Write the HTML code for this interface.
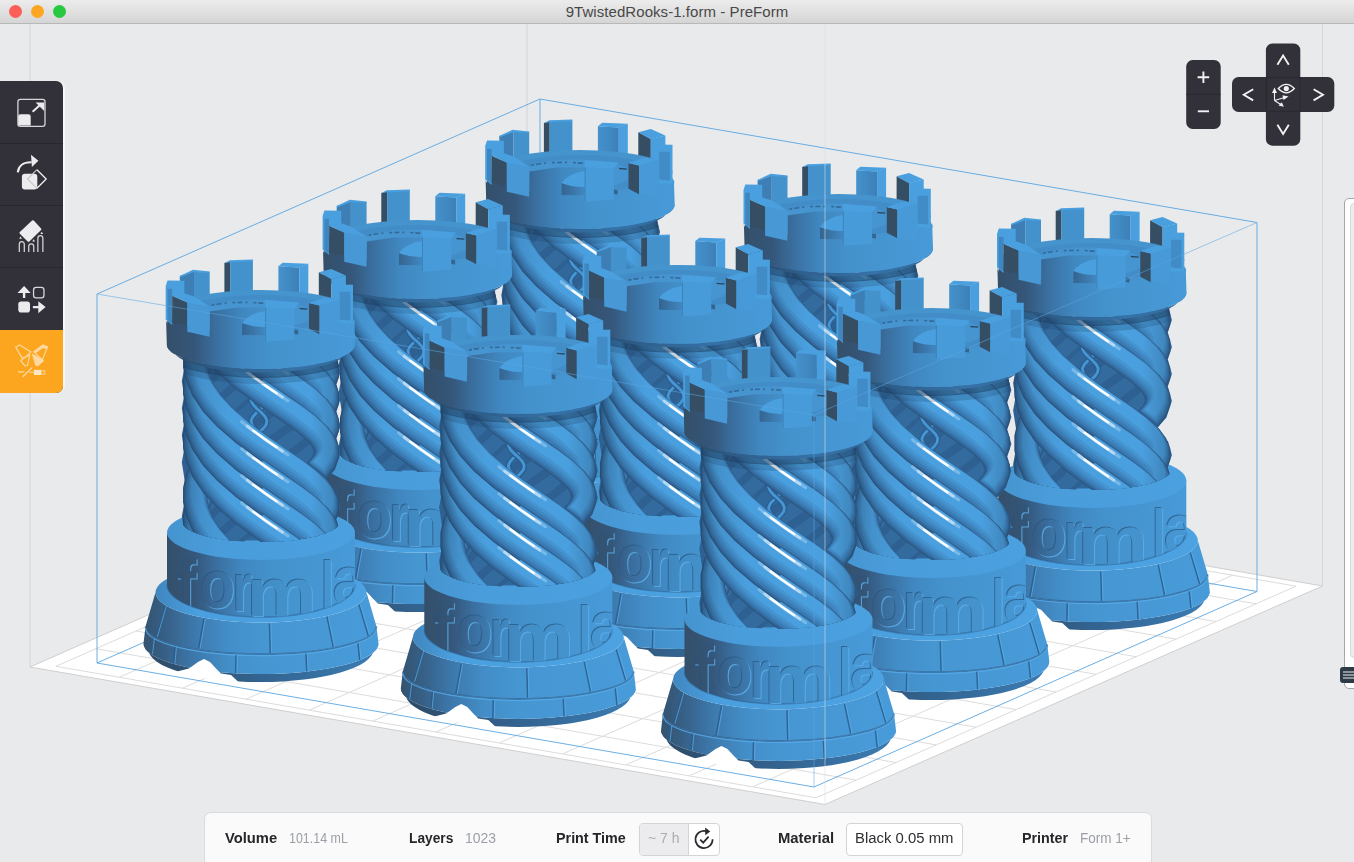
<!DOCTYPE html>
<html><head><meta charset="utf-8"><title>9TwistedRooks-1.form - PreForm</title>
<style>

*{margin:0;padding:0;box-sizing:border-box}
html,body{width:1354px;height:862px;overflow:hidden;background:#e9eaec;font-family:"Liberation Sans",sans-serif}
#win{position:relative;width:1354px;height:862px;overflow:hidden;background:#e9eaec}
#scene{position:absolute;left:0;top:0}
#title{position:absolute;left:0;top:0;width:1354px;height:24px;background:linear-gradient(#ececec,#d5d5d5);border-bottom:1px solid #b8b8b8;z-index:5}
#title .t{position:absolute;left:0;width:1354px;top:4px;text-align:center;font-size:15px;line-height:16px;color:#484848;letter-spacing:0.06px}
.tl{position:absolute;top:5.4px;width:13px;height:13px;border-radius:50%}
#tools{position:absolute;left:0;top:80.5px;width:63px;height:312.3px;background:#323139;border-radius:0 7px 7px 0;overflow:hidden;z-index:4}
#toolsh{position:absolute;left:0;top:80.5px;width:65px;height:312.8px;background:#f7f7f9;border-radius:0 8px 8px 0;z-index:3}
#tools .s{position:absolute;left:0;width:63px;height:1px;background:#27262d}
#tools .o{position:absolute;left:0;top:249.5px;width:63px;height:63px;background:#fca61f}
#tools svg{position:absolute;left:0;top:0}
.ctl{position:absolute;background:#323139;z-index:4}
#ctlsvg{position:absolute;left:1180px;top:40px;z-index:5}
#bar{position:absolute;left:203.5px;top:812px;width:948.5px;height:60px;background:#fafafa;border:1px solid #dadadd;border-radius:7px 7px 0 0;z-index:4}
#bar span{position:absolute;top:16.2px;font-size:14px;line-height:18px;white-space:nowrap;transform-origin:0 50%;display:inline-block}
#bar .l{font-weight:bold;color:#25252a}
#bar .v{color:#9b9fa6}
#bar .box{position:absolute;top:10px;height:33px;border:1px solid #d4d4d8;border-radius:4px;background:#fff;overflow:hidden}
#slider{position:absolute;left:1344px;top:197.5px;width:20px;height:491px;border:1.3px solid #a5a5ac;border-radius:5px;background:#fff;z-index:4}
#slider .in{position:absolute;left:4.5px;top:4px;width:12px;height:455px;background:#ececee;border:1px solid #d9d9dc;border-radius:4px}
#handle{position:absolute;left:1339.5px;top:667px;width:20px;height:16px;background:#2e3a46;border-radius:3px;z-index:5}
#handle i{position:absolute;left:3px;width:20px;height:1.6px;background:#8d949c}

</style></head><body><div id="win">
<svg id="scene" width="1354" height="862" viewBox="0 0 1354 862">
<defs>
<linearGradient id="gBody" gradientUnits="userSpaceOnUse" x1="-94" y1="0" x2="94" y2="0">
<stop offset="0" stop-color="#344f69"/><stop offset="0.15" stop-color="#35577b"/><stop offset="0.26" stop-color="#3a6f9f"/><stop offset="0.4" stop-color="#4087c0"/><stop offset="0.56" stop-color="#4492cc"/><stop offset="1" stop-color="#479ad8"/>
</linearGradient>
<linearGradient id="gText" gradientUnits="userSpaceOnUse" x1="-94" y1="0" x2="94" y2="0">
<stop offset="0" stop-color="#334d67"/><stop offset="0.15" stop-color="#345578"/><stop offset="0.26" stop-color="#396c9b"/><stop offset="0.4" stop-color="#3f84bc"/><stop offset="0.56" stop-color="#438fc8"/><stop offset="1" stop-color="#4697d4"/>
</linearGradient>
<linearGradient id="gTier" gradientUnits="userSpaceOnUse" x1="-117" y1="0" x2="117" y2="0">
<stop offset="0" stop-color="#34536f"/><stop offset="0.1" stop-color="#376189"/><stop offset="0.22" stop-color="#3d79ad"/><stop offset="0.36" stop-color="#438ec8"/><stop offset="0.5" stop-color="#4696d2"/><stop offset="1" stop-color="#489bd9"/>
</linearGradient>
<linearGradient id="gDarkBot" gradientUnits="userSpaceOnUse" x1="-117" y1="0" x2="117" y2="0">
<stop offset="0" stop-color="#2d4a66"/><stop offset="0.5" stop-color="#33638f"/><stop offset="1" stop-color="#3b7db5"/>
</linearGradient>
<linearGradient id="gLedge" gradientUnits="userSpaceOnUse" x1="-106" y1="0" x2="106" y2="0">
<stop offset="0" stop-color="#3f86bf"/><stop offset="0.2" stop-color="#4a9fde"/><stop offset="1" stop-color="#4da3e2"/>
</linearGradient>
<linearGradient id="gTop" gradientUnits="userSpaceOnUse" x1="-94" y1="0" x2="94" y2="0">
<stop offset="0" stop-color="#4594cf"/><stop offset="0.3" stop-color="#4a9ddb"/><stop offset="1" stop-color="#4ba0df"/>
</linearGradient>
<linearGradient id="gCham" gradientUnits="userSpaceOnUse" x1="-94" y1="0" x2="94" y2="0">
<stop offset="0" stop-color="#2b4560"/><stop offset="0.3" stop-color="#2f5f8c"/><stop offset="0.7" stop-color="#3672a8"/><stop offset="1" stop-color="#33689a"/>
</linearGradient>
<linearGradient id="gColShade" gradientUnits="userSpaceOnUse" x1="-78" y1="0" x2="78" y2="0">
<stop offset="0" stop-color="#1b3550" stop-opacity="0.38"/><stop offset="0.14" stop-color="#1b3550" stop-opacity="0.1"/><stop offset="0.3" stop-color="#1b3550" stop-opacity="0"/><stop offset="0.8" stop-color="#1b3550" stop-opacity="0"/><stop offset="1" stop-color="#1b3550" stop-opacity="0.3"/>
</linearGradient>
<linearGradient id="gBM3" gradientUnits="userSpaceOnUse" x1="17" y1="0" x2="38" y2="0">
<stop offset="0" stop-color="#4492cc"/><stop offset="1" stop-color="#3d80b8"/>
</linearGradient>
<linearGradient id="gNotch" gradientUnits="userSpaceOnUse" x1="-19" y1="0" x2="5" y2="0">
<stop offset="0" stop-color="#35648f"/><stop offset="1" stop-color="#4189c4"/>
</linearGradient>
<linearGradient id="gS0" gradientUnits="userSpaceOnUse" x1="-78" y1="0" x2="78" y2="0"><stop offset="0" stop-color="#254c72"/><stop offset="0.12" stop-color="#28537d"/><stop offset="0.3" stop-color="#2a5783"/><stop offset="0.82" stop-color="#2a5783"/><stop offset="1" stop-color="#274f77"/></linearGradient>
<linearGradient id="gS1" gradientUnits="userSpaceOnUse" x1="-78" y1="0" x2="78" y2="0"><stop offset="0" stop-color="#2b5681"/><stop offset="0.12" stop-color="#306394"/><stop offset="0.3" stop-color="#33699d"/><stop offset="0.82" stop-color="#33699d"/><stop offset="1" stop-color="#2d5c89"/></linearGradient>
<linearGradient id="gS2" gradientUnits="userSpaceOnUse" x1="-78" y1="0" x2="78" y2="0"><stop offset="0" stop-color="#2f618e"/><stop offset="0.12" stop-color="#3672a7"/><stop offset="0.3" stop-color="#3a7bb3"/><stop offset="0.82" stop-color="#3a7bb3"/><stop offset="1" stop-color="#326898"/></linearGradient>
<linearGradient id="gS3" gradientUnits="userSpaceOnUse" x1="-78" y1="0" x2="78" y2="0"><stop offset="0" stop-color="#326897"/><stop offset="0.12" stop-color="#3b7db4"/><stop offset="0.3" stop-color="#4088c3"/><stop offset="0.82" stop-color="#4088c3"/><stop offset="1" stop-color="#3671a4"/></linearGradient>
<linearGradient id="gS4" gradientUnits="userSpaceOnUse" x1="-78" y1="0" x2="78" y2="0"><stop offset="0" stop-color="#356f9e"/><stop offset="0.12" stop-color="#4088bf"/><stop offset="0.3" stop-color="#4594d0"/><stop offset="0.82" stop-color="#4594d0"/><stop offset="1" stop-color="#3a7aad"/></linearGradient>
<linearGradient id="gS5" gradientUnits="userSpaceOnUse" x1="-78" y1="0" x2="78" y2="0"><stop offset="0" stop-color="#3875a7"/><stop offset="0.12" stop-color="#4491cc"/><stop offset="0.3" stop-color="#4a9fde"/><stop offset="0.82" stop-color="#4a9fde"/><stop offset="1" stop-color="#3d81b6"/></linearGradient>
<clipPath id="cCol"><path d="M-90,-8 L-90,170 L-79,177 A79,20.5 0 0 0 79,177 L90,170 L90,-8 Z"/></clipPath>
<clipPath id="cShade"><path d="M-77.3,-8 L-77.3,60 L77.3,60 L77.3,-8 Z"/></clipPath>
<clipPath id="cBase"><path d="M-94,180 L-94,240 A94,32.5 0 0 0 94,240 L94,180 Z"/></clipPath>
<filter id="fEng" x="-5%" y="-5%" width="110%" height="110%">
<feOffset in="SourceAlpha" dx="-1" dy="-0.6" result="o1"/><feFlood flood-color="#2a5680" flood-opacity="0.75"/><feComposite in2="o1" operator="in" result="sh"/>
<feOffset in="SourceAlpha" dx="1.1" dy="0.6" result="o2"/><feFlood flood-color="#5db0ec" flood-opacity="0.8"/><feComposite in2="o2" operator="in" result="hl"/>
<feMerge><feMergeNode in="hl"/><feMergeNode in="sh"/><feMergeNode in="SourceGraphic"/></feMerge>
</filter>
<filter id="fBlur" x="-10%" y="-10%" width="120%" height="120%"><feGaussianBlur stdDeviation="0.65"/></filter>
</defs>

<style>
.s0{fill:none;stroke:url(#gS0);stroke-width:24.5}
.s1{fill:none;stroke:url(#gS1);stroke-width:22.8}
.s2{fill:none;stroke:url(#gS2);stroke-width:20.5}
.s3{fill:none;stroke:url(#gS3);stroke-width:17.6}
.s4{fill:none;stroke:url(#gS4);stroke-width:14.6}
.s5{fill:none;stroke:url(#gS5);stroke-width:11.4}
.sg{fill:none;stroke:#9ccef3;stroke-width:3;stroke-linecap:round;opacity:.55}
.sh{fill:none;stroke:#c4e2f8;stroke-width:3;stroke-linecap:round;opacity:.8}
.sw{fill:none;stroke:#ffffff;stroke-width:2.2;stroke-linecap:round;opacity:1}
.b0{fill:none;stroke:#2e6092;stroke-width:26}
.b1{fill:none;stroke:#346b9f;stroke-width:14}
.c0{fill:none;stroke:#2c5d8e;stroke-width:5.5}
.c1{fill:none;stroke:#4696d3;stroke-width:2.8}
</style>
<polygon points="30,667 825,804.5 1322.5,586 527,448" fill="#ffffff" stroke="#cfcfcf" stroke-width="1"/>
<line x1="30" y1="23" x2="30" y2="667" stroke="#d4d4d4" stroke-width="1"/>
<line x1="1322.5" y1="23" x2="1322.5" y2="586" stroke="#d4d4d4" stroke-width="1"/>
<line x1="527" y1="23" x2="527" y2="448" stroke="#d4d4d4" stroke-width="1"/>
<path d="M55.9,666.3L536,454.7M119.3,677.3L599.4,465.7M182.6,688.2L662.7,476.7M245.9,699.2L726,487.6M309.3,710.1L789.4,498.6M372.6,721.1L852.7,509.5M435.9,732L916.1,520.5M499.3,743L979.4,531.4M562.6,753.9L1042.7,542.4M626,764.9L1106.1,553.3M689.3,775.8L1169.4,564.3M752.6,786.8L1232.7,575.2M816,797.8L1296.1,586.2M55.9,666.3L816,797.8M95.9,648.7L856,780.1M136,631L896,762.5M176,613.4L936,744.9M216,595.8L976,727.2M256,578.2L1016,709.6M296,560.5L1056,692M336,542.9L1096,674.3M376,525.3L1136,656.7M416,507.6L1176,639.1M456,490L1216,621.5M496,472.4L1256.1,603.8M536,454.7L1296.1,586.2" stroke="#dcdcdc" stroke-width="1" fill="none"/>
<line x1="97" y1="663" x2="540" y2="468" stroke="#5ba6e0" stroke-width="1" opacity="0.9"/>
<line x1="540" y1="468" x2="1257" y2="591.5" stroke="#5ba6e0" stroke-width="1" opacity="0.9"/>
<line x1="540" y1="468" x2="540" y2="99" stroke="#5ba6e0" stroke-width="1" opacity="0.9"/>
<line x1="97" y1="294" x2="540" y2="99" stroke="#5ba6e0" stroke-width="1" opacity="0.9"/>
<line x1="540" y1="99" x2="1257" y2="222.5" stroke="#5ba6e0" stroke-width="1" opacity="0.9"/>
<line x1="97" y1="663" x2="97" y2="294" stroke="#5ba6e0" stroke-width="1" opacity="0.9"/>
<line x1="1257" y1="591.5" x2="1257" y2="222.5" stroke="#5ba6e0" stroke-width="1" opacity="0.9"/>
<line x1="97" y1="663" x2="814" y2="787" stroke="#5ba6e0" stroke-width="1" opacity="0.9"/>
<line x1="814" y1="787" x2="1257" y2="591.5" stroke="#5ba6e0" stroke-width="1" opacity="0.9"/>
<g transform="translate(580.5,204.5)"><path d="M-117.5,299 A117.5,30.5 0 0 0 117.5,299 L112.5,305 A112.5,32.5 0 0 1 -112.5,305 Z" fill="url(#gDarkBot)"/><path d="M-115.5,282 A115.5,27.5 0 0 0 115.5,282 L117.5,299 A117.5,30.5 0 0 1 -117.5,299 Z" fill="url(#gTier)"/><path d="M-105.5,248 A105.5,30 0 0 0 105.5,248 L115.5,282 A115.5,27.5 0 0 1 -115.5,282 Z" fill="url(#gTier)"/><path d="M-115.5,282 A115.5,27.5 0 0 0 115.5,282" stroke="#2f6293" stroke-width="1.6" fill="none" opacity="0.7"/><path d="M-115.5,283.6 A115.5,27.5 0 0 0 115.5,283.6" stroke="#58abe8" stroke-width="1.2" fill="none" opacity="0.8"/><path d="M-96,261.4 L-105.1,292.4" stroke="#2c5c8b" stroke-width="1.5" fill="none" opacity="0.85"/><path d="M-94.6,261.4 L-103.7,292.4" stroke="#5aaeea" stroke-width="1" fill="none" opacity="0.7"/><path d="M-57,274.2 L-62.4,304.1" stroke="#2c5c8b" stroke-width="1.5" fill="none" opacity="0.85"/><path d="M-55.6,274.2 L-61,304.1" stroke="#5aaeea" stroke-width="1" fill="none" opacity="0.7"/><path d="M8.5,278.9 L9.3,308.4" stroke="#2c5c8b" stroke-width="1.5" fill="none" opacity="0.85"/><path d="M9.9,278.9 L10.7,308.4" stroke="#5aaeea" stroke-width="1" fill="none" opacity="0.7"/><path d="M66,272.4 L72.3,302.5" stroke="#2c5c8b" stroke-width="1.5" fill="none" opacity="0.85"/><path d="M67.4,272.4 L73.7,302.5" stroke="#5aaeea" stroke-width="1" fill="none" opacity="0.7"/><path d="M98,260.1 L107.3,291.2" stroke="#2c5c8b" stroke-width="1.5" fill="none" opacity="0.85"/><path d="M99.4,260.1 L108.7,291.2" stroke="#5aaeea" stroke-width="1" fill="none" opacity="0.7"/><path d="M-108,293.7 L-109.9,309.8" stroke="#2c5c8b" stroke-width="1.5" fill="none" opacity="0.85"/><path d="M-106.6,293.7 L-108.5,309.8" stroke="#5aaeea" stroke-width="1" fill="none" opacity="0.7"/><path d="M-86,302.4 L-87.5,319.4" stroke="#2c5c8b" stroke-width="1.5" fill="none" opacity="0.85"/><path d="M-84.6,302.4 L-86.1,319.4" stroke="#5aaeea" stroke-width="1" fill="none" opacity="0.7"/><path d="M-25,310.8 L-25.4,328.8" stroke="#2c5c8b" stroke-width="1.5" fill="none" opacity="0.85"/><path d="M-23.6,310.8 L-24,328.8" stroke="#5aaeea" stroke-width="1" fill="none" opacity="0.7"/><path d="M45,309.3 L45.8,327.1" stroke="#2c5c8b" stroke-width="1.5" fill="none" opacity="0.85"/><path d="M46.4,309.3 L47.2,327.1" stroke="#5aaeea" stroke-width="1" fill="none" opacity="0.7"/><path d="M97,298.9 L98.7,315.6" stroke="#2c5c8b" stroke-width="1.5" fill="none" opacity="0.85"/><path d="M98.4,298.9 L100.1,315.6" stroke="#5aaeea" stroke-width="1" fill="none" opacity="0.7"/><ellipse cx="0" cy="248" rx="105.5" ry="30" fill="url(#gLedge)"/><path d="M-94,186.8 A94,27.4 0 0 0 94,186.8 L94,240 A94,32.5 0 0 1 -94,240 Z" fill="url(#gBody)"/><path d="M-94,240 A94,32.5 0 0 0 94,240" stroke="#2c5c8b" stroke-width="1.5" fill="none" opacity="0.5"/><g clip-path="url(#cBase)"><text font-family="Liberation Sans, sans-serif" font-weight="bold" font-size="68" fill="url(#gText)" filter="url(#fEng)"><tspan x="-85.2" y="263" textLength="20.8" lengthAdjust="spacingAndGlyphs">f</tspan><tspan x="-61.4" y="263" textLength="35.7" lengthAdjust="spacingAndGlyphs">o</tspan><tspan x="-28.3" y="266.5" textLength="19.5" lengthAdjust="spacingAndGlyphs">r</tspan><tspan x="-14.6" y="271.5" textLength="70.2" lengthAdjust="spacingAndGlyphs">m</tspan><tspan x="60.2" y="265.3" textLength="12.9" lengthAdjust="spacingAndGlyphs">l</tspan><tspan x="71.9" y="259.5" textLength="32.4" lengthAdjust="spacingAndGlyphs">a</tspan></text></g><ellipse cx="0" cy="188" rx="94" ry="27.4" fill="url(#gTop)"/><polygon points="-84,327 -72,324 -63,317.5 -57,314.5 -51,317.5 -45,324 -40,329 -30,330.5 -23,337 -23,337.6 -32,337 -42,336 -52,334.6 -62,332.9 -72,330.8 -84,327.4" fill="#ffffff"/><g clip-path="url(#cCol)"><rect x="-52" y="0" width="104" height="196" fill="#30689c"/><path class="b0" d="M63.1,-118.3L66,-107.9L62.6,-97.5L53.1,-86.6L38.5,-75L20.2,-62.4L0,-48.5L-20.2,-33.4L-38.5,-17L-53.1,0.3L-62.6,18.5L-66,37L-63.1,55.5"/><path class="b1" d="M62.6,-115.3L65.5,-104.9L62.1,-94.5L52.6,-83.6L38,-72L19.7,-59.4L-0.5,-45.5L-20.7,-30.4L-39,-14L-53.6,3.3L-63.1,21.5L-66.5,40L-63.6,58.5"/><path class="b0" d="M63.1,-91.3L66,-80.9L62.6,-70.5L53.1,-59.6L38.5,-48L20.2,-35.4L0,-21.5L-20.2,-6.4L-38.5,10L-53.1,27.3L-62.6,45.5L-66,64L-63.1,82.5"/><path class="b1" d="M62.6,-88.3L65.5,-77.9L62.1,-67.5L52.6,-56.6L38,-45L19.7,-32.4L-0.5,-18.5L-20.7,-3.4L-39,13L-53.6,30.3L-63.1,48.5L-66.5,67L-63.6,85.5"/><path class="b0" d="M63.1,-64.3L66,-53.9L62.6,-43.5L53.1,-32.6L38.5,-21L20.2,-8.4L0,5.5L-20.2,20.6L-38.5,37L-53.1,54.3L-62.6,72.5L-66,91L-63.1,109.5"/><path class="b1" d="M62.6,-61.3L65.5,-50.9L62.1,-40.5L52.6,-29.6L38,-18L19.7,-5.4L-0.5,8.5L-20.7,23.6L-39,40L-53.6,57.3L-63.1,75.5L-66.5,94L-63.6,112.5"/><path class="b0" d="M63.1,-37.3L66,-26.9L62.6,-16.5L53.1,-5.6L38.5,6L20.2,18.6L0,32.5L-20.2,47.6L-38.5,64L-53.1,81.3L-62.6,99.5L-66,118L-63.1,136.5"/><path class="b1" d="M62.6,-34.3L65.5,-23.9L62.1,-13.5L52.6,-2.6L38,9L19.7,21.6L-0.5,35.5L-20.7,50.6L-39,67L-53.6,84.3L-63.1,102.5L-66.5,121L-63.6,139.5"/><path class="b0" d="M63.1,16.7L66,27.1L62.6,37.5L53.1,48.4L38.5,60L20.2,72.6L0,86.5L-20.2,101.6L-38.5,118L-53.1,135.3L-62.6,153.5L-66,172L-63.1,190.5"/><path class="b1" d="M62.6,19.7L65.5,30.1L62.1,40.5L52.6,51.4L38,63L19.7,75.6L-0.5,89.5L-20.7,104.6L-39,121L-53.6,138.3L-63.1,156.5L-66.5,175L-63.6,193.5"/><path class="b0" d="M63.1,43.7L66,54.1L62.6,64.5L53.1,75.4L38.5,87L20.2,99.6L0,113.5L-20.2,128.6L-38.5,145L-53.1,162.3L-62.6,180.5L-66,199L-63.1,217.5"/><path class="b1" d="M62.6,46.7L65.5,57.1L62.1,67.5L52.6,78.4L38,90L19.7,102.6L-0.5,116.5L-20.7,131.6L-39,148L-53.6,165.3L-63.1,183.5L-66.5,202L-63.6,220.5"/><path class="b0" d="M63.1,70.7L66,81.1L62.6,91.5L53.1,102.4L38.5,114L20.2,126.6L0,140.5L-20.2,155.6L-38.5,172L-53.1,189.3L-62.6,207.5L-66,226L-63.1,244.5"/><path class="b1" d="M62.6,73.7L65.5,84.1L62.1,94.5L52.6,105.4L38,117L19.7,129.6L-0.5,143.5L-20.7,158.6L-39,175L-53.6,192.3L-63.1,210.5L-66.5,229L-63.6,247.5"/><path class="b0" d="M63.1,97.7L66,108.1L62.6,118.5L53.1,129.4L38.5,141L20.2,153.6L0,167.5L-20.2,182.6L-38.5,199L-53.1,216.3L-62.6,234.5L-66,253L-63.1,271.5"/><path class="b1" d="M62.6,100.7L65.5,111.1L62.1,121.5L52.6,132.4L38,144L19.7,156.6L-0.5,170.5L-20.7,185.6L-39,202L-53.6,219.3L-63.1,237.5L-66.5,256L-63.6,274.5"/><path class="b0" d="M63.1,151.7L66,162.1L62.6,172.5L53.1,183.4L38.5,195L20.2,207.6L0,221.5L-20.2,236.6L-38.5,253L-53.1,270.3L-62.6,288.5L-66,307L-63.1,325.5"/><path class="b1" d="M62.6,154.7L65.5,165.1L62.1,175.5L52.6,186.4L38,198L19.7,210.6L-0.5,224.5L-20.7,239.6L-39,256L-53.6,273.3L-63.1,291.5L-66.5,310L-63.6,328.5"/><path class="b0" d="M63.1,178.7L66,189.1L62.6,199.5L53.1,210.4L38.5,222L20.2,234.6L0,248.5L-20.2,263.6L-38.5,280L-53.1,297.3L-62.6,315.5L-66,334L-63.1,352.5"/><path class="b1" d="M62.6,181.7L65.5,192.1L62.1,202.5L52.6,213.4L38,225L19.7,237.6L-0.5,251.5L-20.7,266.6L-39,283L-53.6,300.3L-63.1,318.5L-66.5,337L-63.6,355.5"/><path class="b0" d="M63.1,205.7L66,216.1L62.6,226.5L53.1,237.4L38.5,249L20.2,261.6L0,275.5L-20.2,290.6L-38.5,307L-53.1,324.3L-62.6,342.5L-66,361L-63.1,379.5"/><path class="b1" d="M62.6,208.7L65.5,219.1L62.1,229.5L52.6,240.4L38,252L19.7,264.6L-0.5,278.5L-20.7,293.6L-39,310L-53.6,327.3L-63.1,345.5L-66.5,364L-63.6,382.5"/><path class="c0" d="M0.3,20L-4.3,24L-8,28L-9.9,32L-9.3,36L-6.3,40L-2,44L2.3,48L5.3,52L5.9,56L4,60L0.3,64L-4.3,68L-8,72L-9.9,76L-9.3,80L-6.3,84L-2,88L2.3,92L5.3,96L5.9,100L4,104L0.3,108L-4.3,112L-8,116L-9.9,120L-9.3,124L-6.3,128L-2,132L2.3,136L5.3,140L5.9,144L4,148L0.3,152L-4.3,156L-8,160L-9.9,164L-9.3,168L-6.3,172L-2,176L2.3,180L5.3,184L5.9,188"/><path class="c1" d="M0.3,20L-4.3,24L-8,28L-9.9,32L-9.3,36L-6.3,40L-2,44L2.3,48L5.3,52L5.9,56L4,60L0.3,64L-4.3,68L-8,72L-9.9,76L-9.3,80L-6.3,84L-2,88L2.3,92L5.3,96L5.9,100L4,104L0.3,108L-4.3,112L-8,116L-9.9,120L-9.3,124L-6.3,128L-2,132L2.3,136L5.3,140L5.9,144L4,148L0.3,152L-4.3,156L-8,160L-9.9,164L-9.3,168L-6.3,172L-2,176L2.3,180L5.3,184L5.9,188"/><path class="c0" d="M-4.3,20L0.3,24L4,28L5.9,32L5.3,36L2.3,40L-2,44L-6.3,48L-9.3,52L-9.9,56L-8,60L-4.3,64L0.3,68L4,72L5.9,76L5.3,80L2.3,84L-2,88L-6.3,92L-9.3,96L-9.9,100L-8,104L-4.3,108L0.3,112L4,116L5.9,120L5.3,124L2.3,128L-2,132L-6.3,136L-9.3,140L-9.9,144L-8,148L-4.3,152L0.3,156L4,160L5.9,164L5.3,168L2.3,172L-2,176L-6.3,180L-9.3,184L-9.9,188"/><path class="c1" d="M-4.3,20L0.3,24L4,28L5.9,32L5.3,36L2.3,40L-2,44L-6.3,48L-9.3,52L-9.9,56L-8,60L-4.3,64L0.3,68L4,72L5.9,76L5.3,80L2.3,84L-2,88L-6.3,92L-9.3,96L-9.9,100L-8,104L-4.3,108L0.3,112L4,116L5.9,120L5.3,124L2.3,128L-2,132L-6.3,136L-9.3,140L-9.9,144L-8,148L-4.3,152L0.3,156L4,160L5.9,164L5.3,168L2.3,172L-2,176L-6.3,180L-9.3,184L-9.9,188"/><path class="s0" d="M-56.3,172.2L-63.1,186.9L-65.7,198.7L-65.7,210.7L-63.1,222.5L-57.9,234.3L-48.3,248.6L-35.7,262.3L-17.7,277.8L2.6,292.7"/><path class="s1" d="M-56.1,171.7L-62.9,186.3L-65.5,198.2L-65.5,210.1L-62.9,222L-57.8,233.7L-48.2,248L-35.5,261.7L-17.5,277.3L2.8,292.2"/><path class="s2" d="M-55.9,170.6L-62.7,185.2L-65.3,197.1L-65.3,209L-62.7,220.9L-57.5,232.6L-47.9,246.9L-35.3,260.6L-17.3,276.2L3,291.1"/><path class="s3" d="M-55.6,169.3L-62.4,183.9L-65,195.8L-65,207.8L-62.4,219.6L-57.3,231.4L-47.6,245.6L-35,259.4L-17,274.9L3.3,289.8"/><path class="s4" d="M-55.3,168L-62.1,182.6L-64.7,194.5L-64.7,206.4L-62.1,218.3L-57,230L-47.3,244.3L-34.7,258L-16.7,273.6L3.6,288.5"/><path class="s5" d="M-55,166.5L-61.8,181.1L-64.4,193L-64.4,204.9L-61.8,216.8L-56.6,228.5L-47,242.8L-34.4,256.6L-16.4,272.1L3.9,287"/><path class="s0" d="M-56.3,145.2L-63.1,159.9L-65.7,171.7L-65.7,183.7L-63.1,195.5L-57.9,207.3L-48.3,221.6L-35.7,235.3L-17.7,250.8L2.6,265.7"/><path class="s1" d="M-56.1,144.7L-62.9,159.3L-65.5,171.2L-65.5,183.1L-62.9,195L-57.8,206.7L-48.2,221L-35.5,234.7L-17.5,250.3L2.8,265.2"/><path class="s2" d="M-55.9,143.6L-62.7,158.2L-65.3,170.1L-65.3,182L-62.7,193.9L-57.5,205.6L-47.9,219.9L-35.3,233.6L-17.3,249.2L3,264.1"/><path class="s3" d="M-55.6,142.3L-62.4,156.9L-65,168.8L-65,180.8L-62.4,192.6L-57.3,204.4L-47.6,218.6L-35,232.4L-17,247.9L3.3,262.8"/><path class="s4" d="M-55.3,141L-62.1,155.6L-64.7,167.5L-64.7,179.4L-62.1,191.3L-57,203L-47.3,217.3L-34.7,231L-16.7,246.6L3.6,261.5"/><path class="s5" d="M-55,139.5L-61.8,154.1L-64.4,166L-64.4,177.9L-61.8,189.8L-56.6,201.5L-47,215.8L-34.4,229.6L-16.4,245.1L3.9,260"/><path class="s0" d="M-56.3,118.2L-63.1,132.9L-65.7,144.7L-65.7,156.7L-63.1,168.5L-57.9,180.3L-48.3,194.6L-35.7,208.3L-17.7,223.8L2.6,238.7"/><path class="s1" d="M-56.1,117.7L-62.9,132.3L-65.5,144.2L-65.5,156.1L-62.9,168L-57.8,179.7L-48.2,194L-35.5,207.7L-17.5,223.3L2.8,238.2"/><path class="s2" d="M-55.9,116.6L-62.7,131.2L-65.3,143.1L-65.3,155L-62.7,166.9L-57.5,178.6L-47.9,192.9L-35.3,206.6L-17.3,222.2L3,237.1"/><path class="s3" d="M-55.6,115.3L-62.4,129.9L-65,141.8L-65,153.8L-62.4,165.6L-57.3,177.4L-47.6,191.6L-35,205.4L-17,220.9L3.3,235.8"/><path class="s4" d="M-55.3,114L-62.1,128.6L-64.7,140.5L-64.7,152.4L-62.1,164.3L-57,176L-47.3,190.3L-34.7,204L-16.7,219.6L3.6,234.5"/><path class="s5" d="M-55,112.5L-61.8,127.1L-64.4,139L-64.4,150.9L-61.8,162.8L-56.6,174.5L-47,188.8L-34.4,202.6L-16.4,218.1L3.9,233"/><path class="s0" d="M-56.3,64.2L-63.1,78.9L-65.7,90.7L-65.7,102.7L-63.1,114.5L-57.9,126.3L-48.3,140.6L-35.7,154.3L-17.7,169.8L2.6,184.7"/><path class="s1" d="M-56.1,63.7L-62.9,78.3L-65.5,90.2L-65.5,102.1L-62.9,114L-57.8,125.7L-48.2,140L-35.5,153.7L-17.5,169.3L2.8,184.2"/><path class="s2" d="M-55.9,62.6L-62.7,77.2L-65.3,89.1L-65.3,101L-62.7,112.9L-57.5,124.6L-47.9,138.9L-35.3,152.6L-17.3,168.2L3,183.1"/><path class="s3" d="M-55.6,61.3L-62.4,75.9L-65,87.8L-65,99.8L-62.4,111.6L-57.3,123.4L-47.6,137.6L-35,151.4L-17,166.9L3.3,181.8"/><path class="s4" d="M-55.3,60L-62.1,74.6L-64.7,86.5L-64.7,98.4L-62.1,110.3L-57,122L-47.3,136.3L-34.7,150L-16.7,165.6L3.6,180.5"/><path class="s5" d="M-55,58.5L-61.8,73.1L-64.4,85L-64.4,96.9L-61.8,108.8L-56.6,120.5L-47,134.8L-34.4,148.6L-16.4,164.1L3.9,179"/><path class="s0" d="M-56.3,37.2L-63.1,51.9L-65.7,63.7L-65.7,75.7L-63.1,87.5L-57.9,99.3L-48.3,113.6L-35.7,127.3L-17.7,142.8L2.6,157.7"/><path class="s1" d="M-56.1,36.7L-62.9,51.3L-65.5,63.2L-65.5,75.1L-62.9,87L-57.8,98.7L-48.2,113L-35.5,126.7L-17.5,142.3L2.8,157.2"/><path class="s2" d="M-55.9,35.6L-62.7,50.2L-65.3,62.1L-65.3,74L-62.7,85.9L-57.5,97.6L-47.9,111.9L-35.3,125.6L-17.3,141.2L3,156.1"/><path class="s3" d="M-55.6,34.3L-62.4,48.9L-65,60.8L-65,72.8L-62.4,84.6L-57.3,96.4L-47.6,110.6L-35,124.4L-17,139.9L3.3,154.8"/><path class="s4" d="M-55.3,33L-62.1,47.6L-64.7,59.5L-64.7,71.4L-62.1,83.3L-57,95L-47.3,109.3L-34.7,123L-16.7,138.6L3.6,153.5"/><path class="s5" d="M-55,31.5L-61.8,46.1L-64.4,58L-64.4,69.9L-61.8,81.8L-56.6,93.5L-47,107.8L-34.4,121.6L-16.4,137.1L3.9,152"/><path class="s0" d="M-56.3,10.2L-63.1,24.9L-65.7,36.7L-65.7,48.7L-63.1,60.5L-57.9,72.3L-48.3,86.6L-35.7,100.3L-17.7,115.8L2.6,130.7"/><path class="s1" d="M-56.1,9.7L-62.9,24.3L-65.5,36.2L-65.5,48.1L-62.9,60L-57.8,71.7L-48.2,86L-35.5,99.7L-17.5,115.3L2.8,130.2"/><path class="s2" d="M-55.9,8.6L-62.7,23.2L-65.3,35.1L-65.3,47L-62.7,58.9L-57.5,70.6L-47.9,84.9L-35.3,98.6L-17.3,114.2L3,129.1"/><path class="s3" d="M-55.6,7.3L-62.4,21.9L-65,33.8L-65,45.8L-62.4,57.6L-57.3,69.4L-47.6,83.6L-35,97.4L-17,112.9L3.3,127.8"/><path class="s4" d="M-55.3,6L-62.1,20.6L-64.7,32.5L-64.7,44.4L-62.1,56.3L-57,68L-47.3,82.3L-34.7,96L-16.7,111.6L3.6,126.5"/><path class="s5" d="M-55,4.5L-61.8,19.1L-64.4,31L-64.4,42.9L-61.8,54.8L-56.6,66.5L-47,80.8L-34.4,94.6L-16.4,110.1L3.9,125"/><path class="s0" d="M-56.3,-16.8L-63.1,-2.1L-65.7,9.7L-65.7,21.7L-63.1,33.5L-57.9,45.3L-48.3,59.6L-35.7,73.3L-17.7,88.8L2.6,103.7"/><path class="s1" d="M-56.1,-17.3L-62.9,-2.7L-65.5,9.2L-65.5,21.1L-62.9,33L-57.8,44.7L-48.2,59L-35.5,72.7L-17.5,88.3L2.8,103.2"/><path class="s2" d="M-55.9,-18.4L-62.7,-3.8L-65.3,8.1L-65.3,20L-62.7,31.9L-57.5,43.6L-47.9,57.9L-35.3,71.6L-17.3,87.2L3,102.1"/><path class="s3" d="M-55.6,-19.7L-62.4,-5.1L-65,6.8L-65,18.8L-62.4,30.6L-57.3,42.4L-47.6,56.6L-35,70.4L-17,85.9L3.3,100.8"/><path class="s4" d="M-55.3,-21L-62.1,-6.4L-64.7,5.5L-64.7,17.4L-62.1,29.3L-57,41L-47.3,55.3L-34.7,69L-16.7,84.6L3.6,99.5"/><path class="s5" d="M-55,-22.5L-61.8,-7.9L-64.4,4L-64.4,15.9L-61.8,27.8L-56.6,39.5L-47,53.8L-34.4,67.6L-16.4,83.1L3.9,98"/><path class="s0" d="M-56.3,-70.8L-63.1,-56.1L-65.7,-44.3L-65.7,-32.3L-63.1,-20.5L-57.9,-8.7L-48.3,5.6L-35.7,19.3L-17.7,34.8L2.6,49.7"/><path class="s1" d="M-56.1,-71.3L-62.9,-56.7L-65.5,-44.8L-65.5,-32.9L-62.9,-21L-57.8,-9.3L-48.2,5L-35.5,18.7L-17.5,34.3L2.8,49.2"/><path class="s2" d="M-55.9,-72.4L-62.7,-57.8L-65.3,-45.9L-65.3,-34L-62.7,-22.1L-57.5,-10.4L-47.9,3.9L-35.3,17.6L-17.3,33.2L3,48.1"/><path class="s3" d="M-55.6,-73.7L-62.4,-59.1L-65,-47.2L-65,-35.2L-62.4,-23.4L-57.3,-11.6L-47.6,2.6L-35,16.4L-17,31.9L3.3,46.8"/><path class="s4" d="M-55.3,-75L-62.1,-60.4L-64.7,-48.5L-64.7,-36.6L-62.1,-24.7L-57,-13L-47.3,1.3L-34.7,15L-16.7,30.6L3.6,45.5"/><path class="s5" d="M-55,-76.5L-61.8,-61.9L-64.4,-50L-64.4,-38.1L-61.8,-26.2L-56.6,-14.5L-47,-0.2L-34.4,13.6L-16.4,29.1L3.9,44"/><path class="s0" d="M-56.3,-97.8L-63.1,-83.1L-65.7,-71.3L-65.7,-59.3L-63.1,-47.5L-57.9,-35.7L-48.3,-21.4L-35.7,-7.7L-17.7,7.8L2.6,22.7"/><path class="s1" d="M-56.1,-98.3L-62.9,-83.7L-65.5,-71.8L-65.5,-59.9L-62.9,-48L-57.8,-36.3L-48.2,-22L-35.5,-8.3L-17.5,7.3L2.8,22.2"/><path class="s2" d="M-55.9,-99.4L-62.7,-84.8L-65.3,-72.9L-65.3,-61L-62.7,-49.1L-57.5,-37.4L-47.9,-23.1L-35.3,-9.4L-17.3,6.2L3,21.1"/><path class="s3" d="M-55.6,-100.7L-62.4,-86.1L-65,-74.2L-65,-62.2L-62.4,-50.4L-57.3,-38.6L-47.6,-24.4L-35,-10.6L-17,4.9L3.3,19.8"/><path class="s4" d="M-55.3,-102L-62.1,-87.4L-64.7,-75.5L-64.7,-63.6L-62.1,-51.7L-57,-40L-47.3,-25.7L-34.7,-12L-16.7,3.6L3.6,18.5"/><path class="s5" d="M-55,-103.5L-61.8,-88.9L-64.4,-77L-64.4,-65.1L-61.8,-53.2L-56.6,-41.5L-47,-27.2L-34.4,-13.4L-16.4,2.1L3.9,17"/><path class="s0" d="M-56.3,-124.8L-63.1,-110.1L-65.7,-98.3L-65.7,-86.3L-63.1,-74.5L-57.9,-62.7L-48.3,-48.4L-35.7,-34.7L-17.7,-19.2L2.6,-4.3"/><path class="s1" d="M-56.1,-125.3L-62.9,-110.7L-65.5,-98.8L-65.5,-86.9L-62.9,-75L-57.8,-63.3L-48.2,-49L-35.5,-35.3L-17.5,-19.7L2.8,-4.8"/><path class="s2" d="M-55.9,-126.4L-62.7,-111.8L-65.3,-99.9L-65.3,-88L-62.7,-76.1L-57.5,-64.4L-47.9,-50.1L-35.3,-36.4L-17.3,-20.8L3,-5.9"/><path class="s3" d="M-55.6,-127.7L-62.4,-113.1L-65,-101.2L-65,-89.2L-62.4,-77.4L-57.3,-65.6L-47.6,-51.4L-35,-37.6L-17,-22.1L3.3,-7.2"/><path class="s4" d="M-55.3,-129L-62.1,-114.4L-64.7,-102.5L-64.7,-90.6L-62.1,-78.7L-57,-67L-47.3,-52.7L-34.7,-39L-16.7,-23.4L3.6,-8.5"/><path class="s5" d="M-55,-130.5L-61.8,-115.9L-64.4,-104L-64.4,-92.1L-61.8,-80.2L-56.6,-68.5L-47,-54.2L-34.4,-40.4L-16.4,-24.9L3.9,-10"/><path class="s0" d="M-2.6,-89L17.7,-75L35.7,-62.7L48.3,-53.2L57.9,-44.2L63.1,-37.3L65.7,-30.6L65.7,-24L63.1,-17.3L56.3,-8.6"/><path class="s1" d="M-2.5,-89.6L17.8,-75.6L35.8,-63.2L48.4,-53.7L58.1,-44.8L63.2,-37.9L65.8,-31.2L65.8,-24.6L63.2,-17.8L56.4,-9.2"/><path class="s2" d="M-2.3,-90.6L18,-76.6L36,-64.3L48.7,-54.8L58.3,-45.9L63.4,-39L66,-32.3L66,-25.6L63.4,-18.9L56.6,-10.3"/><path class="s3" d="M-2,-91.9L18.3,-77.9L36.3,-65.6L49,-56.1L58.6,-47.1L63.7,-40.3L66.3,-33.5L66.3,-26.9L63.7,-20.2L56.9,-11.5"/><path class="s4" d="M-1.7,-93.2L18.6,-79.3L36.6,-66.9L49.3,-57.4L58.9,-48.5L64,-41.6L66.6,-34.9L66.6,-28.2L64,-21.5L57.2,-12.9"/><path class="s5" d="M-1.3,-94.7L19,-80.7L37,-68.4L49.6,-58.9L59.2,-49.9L64.4,-43.1L67,-36.4L67,-29.7L64.4,-23L57.6,-14.4"/><path class="s0" d="M-2.6,-35L17.7,-21L35.7,-8.7L48.3,0.8L57.9,9.8L63.1,16.7L65.7,23.4L65.7,30L63.1,36.7L56.3,45.4"/><path class="s1" d="M-2.5,-35.6L17.8,-21.6L35.8,-9.2L48.4,0.3L58.1,9.2L63.2,16.1L65.8,22.8L65.8,29.4L63.2,36.2L56.4,44.8"/><path class="s2" d="M-2.3,-36.6L18,-22.6L36,-10.3L48.7,-0.8L58.3,8.1L63.4,15L66,21.7L66,28.4L63.4,35.1L56.6,43.7"/><path class="s3" d="M-2,-37.9L18.3,-23.9L36.3,-11.6L49,-2.1L58.6,6.9L63.7,13.7L66.3,20.5L66.3,27.1L63.7,33.8L56.9,42.5"/><path class="s4" d="M-1.7,-39.2L18.6,-25.3L36.6,-12.9L49.3,-3.4L58.9,5.5L64,12.4L66.6,19.1L66.6,25.8L64,32.5L57.2,41.1"/><path class="s5" d="M-1.3,-40.7L19,-26.7L37,-14.4L49.6,-4.9L59.2,4.1L64.4,10.9L67,17.6L67,24.3L64.4,31L57.6,39.6"/><path class="s0" d="M-2.6,-8L17.7,6L35.7,18.3L48.3,27.8L57.9,36.8L63.1,43.7L65.7,50.4L65.7,57L63.1,63.7L56.3,72.4"/><path class="s1" d="M-2.5,-8.6L17.8,5.4L35.8,17.8L48.4,27.3L58.1,36.2L63.2,43.1L65.8,49.8L65.8,56.4L63.2,63.2L56.4,71.8"/><path class="s2" d="M-2.3,-9.6L18,4.4L36,16.7L48.7,26.2L58.3,35.1L63.4,42L66,48.7L66,55.4L63.4,62.1L56.6,70.7"/><path class="s3" d="M-2,-10.9L18.3,3.1L36.3,15.4L49,24.9L58.6,33.9L63.7,40.7L66.3,47.5L66.3,54.1L63.7,60.8L56.9,69.5"/><path class="s4" d="M-1.7,-12.2L18.6,1.7L36.6,14.1L49.3,23.6L58.9,32.5L64,39.4L66.6,46.1L66.6,52.8L64,59.5L57.2,68.1"/><path class="s5" d="M-1.3,-13.7L19,0.3L37,12.6L49.6,22.1L59.2,31.1L64.4,37.9L67,44.6L67,51.3L64.4,58L57.6,66.6"/><path class="s0" d="M-2.6,19L17.7,33L35.7,45.3L48.3,54.8L57.9,63.8L63.1,70.7L65.7,77.4L65.7,84L63.1,90.7L56.3,99.4"/><path class="s1" d="M-2.5,18.4L17.8,32.4L35.8,44.8L48.4,54.3L58.1,63.2L63.2,70.1L65.8,76.8L65.8,83.4L63.2,90.2L56.4,98.8"/><path class="s2" d="M-2.3,17.4L18,31.4L36,43.7L48.7,53.2L58.3,62.1L63.4,69L66,75.7L66,82.4L63.4,89.1L56.6,97.7"/><path class="s3" d="M-2,16.1L18.3,30.1L36.3,42.4L49,51.9L58.6,60.9L63.7,67.7L66.3,74.5L66.3,81.1L63.7,87.8L56.9,96.5"/><path class="s4" d="M-1.7,14.8L18.6,28.7L36.6,41.1L49.3,50.6L58.9,59.5L64,66.4L66.6,73.1L66.6,79.8L64,86.5L57.2,95.1"/><path class="s5" d="M-1.3,13.3L19,27.3L37,39.6L49.6,49.1L59.2,58.1L64.4,64.9L67,71.6L67,78.3L64.4,85L57.6,93.6"/><path class="s0" d="M-2.6,46L17.7,60L35.7,72.3L48.3,81.8L57.9,90.8L63.1,97.7L65.7,104.4L65.7,111L63.1,117.7L56.3,126.4"/><path class="s1" d="M-2.5,45.4L17.8,59.4L35.8,71.8L48.4,81.3L58.1,90.2L63.2,97.1L65.8,103.8L65.8,110.4L63.2,117.2L56.4,125.8"/><path class="s2" d="M-2.3,44.4L18,58.4L36,70.7L48.7,80.2L58.3,89.1L63.4,96L66,102.7L66,109.4L63.4,116.1L56.6,124.7"/><path class="s3" d="M-2,43.1L18.3,57.1L36.3,69.4L49,78.9L58.6,87.9L63.7,94.7L66.3,101.5L66.3,108.1L63.7,114.8L56.9,123.5"/><path class="s4" d="M-1.7,41.8L18.6,55.7L36.6,68.1L49.3,77.6L58.9,86.5L64,93.4L66.6,100.1L66.6,106.8L64,113.5L57.2,122.1"/><path class="s5" d="M-1.3,40.3L19,54.3L37,66.6L49.6,76.1L59.2,85.1L64.4,91.9L67,98.6L67,105.3L64.4,112L57.6,120.6"/><path class="s0" d="M-2.6,100L17.7,114L35.7,126.3L48.3,135.8L57.9,144.8L63.1,151.7L65.7,158.4L65.7,165L63.1,171.7L56.3,180.4"/><path class="s1" d="M-2.5,99.4L17.8,113.4L35.8,125.8L48.4,135.3L58.1,144.2L63.2,151.1L65.8,157.8L65.8,164.4L63.2,171.2L56.4,179.8"/><path class="s2" d="M-2.3,98.4L18,112.4L36,124.7L48.7,134.2L58.3,143.1L63.4,150L66,156.7L66,163.4L63.4,170.1L56.6,178.7"/><path class="s3" d="M-2,97.1L18.3,111.1L36.3,123.4L49,132.9L58.6,141.9L63.7,148.7L66.3,155.5L66.3,162.1L63.7,168.8L56.9,177.5"/><path class="s4" d="M-1.7,95.8L18.6,109.7L36.6,122.1L49.3,131.6L58.9,140.5L64,147.4L66.6,154.1L66.6,160.8L64,167.5L57.2,176.1"/><path class="s5" d="M-1.3,94.3L19,108.3L37,120.6L49.6,130.1L59.2,139.1L64.4,145.9L67,152.6L67,159.3L64.4,166L57.6,174.6"/><path class="s0" d="M-2.6,127L17.7,141L35.7,153.3L48.3,162.8L57.9,171.8L63.1,178.7L65.7,185.4L65.7,192L63.1,198.7L56.3,207.4"/><path class="s1" d="M-2.5,126.4L17.8,140.4L35.8,152.8L48.4,162.3L58.1,171.2L63.2,178.1L65.8,184.8L65.8,191.4L63.2,198.2L56.4,206.8"/><path class="s2" d="M-2.3,125.4L18,139.4L36,151.7L48.7,161.2L58.3,170.1L63.4,177L66,183.7L66,190.4L63.4,197.1L56.6,205.7"/><path class="s3" d="M-2,124.1L18.3,138.1L36.3,150.4L49,159.9L58.6,168.9L63.7,175.7L66.3,182.5L66.3,189.1L63.7,195.8L56.9,204.5"/><path class="s4" d="M-1.7,122.8L18.6,136.7L36.6,149.1L49.3,158.6L58.9,167.5L64,174.4L66.6,181.1L66.6,187.8L64,194.5L57.2,203.1"/><path class="s5" d="M-1.3,121.3L19,135.3L37,147.6L49.6,157.1L59.2,166.1L64.4,172.9L67,179.6L67,186.3L64.4,193L57.6,201.6"/><path class="s0" d="M-2.6,154L17.7,168L35.7,180.3L48.3,189.8L57.9,198.8L63.1,205.7L65.7,212.4L65.7,219L63.1,225.7L56.3,234.4"/><path class="s1" d="M-2.5,153.4L17.8,167.4L35.8,179.8L48.4,189.3L58.1,198.2L63.2,205.1L65.8,211.8L65.8,218.4L63.2,225.2L56.4,233.8"/><path class="s2" d="M-2.3,152.4L18,166.4L36,178.7L48.7,188.2L58.3,197.1L63.4,204L66,210.7L66,217.4L63.4,224.1L56.6,232.7"/><path class="s3" d="M-2,151.1L18.3,165.1L36.3,177.4L49,186.9L58.6,195.9L63.7,202.7L66.3,209.5L66.3,216.1L63.7,222.8L56.9,231.5"/><path class="s4" d="M-1.7,149.8L18.6,163.7L36.6,176.1L49.3,185.6L58.9,194.5L64,201.4L66.6,208.1L66.6,214.8L64,221.5L57.2,230.1"/><path class="s5" d="M-1.3,148.3L19,162.3L37,174.6L49.6,184.1L59.2,193.1L64.4,199.9L67,206.6L67,213.3L64.4,220L57.6,228.6"/><path class="s0" d="M-2.6,181L17.7,195L35.7,207.3L48.3,216.8L57.9,225.8L63.1,232.7L65.7,239.4L65.7,246L63.1,252.7L56.3,261.4"/><path class="s1" d="M-2.5,180.4L17.8,194.4L35.8,206.8L48.4,216.3L58.1,225.2L63.2,232.1L65.8,238.8L65.8,245.4L63.2,252.2L56.4,260.8"/><path class="s2" d="M-2.3,179.4L18,193.4L36,205.7L48.7,215.2L58.3,224.1L63.4,231L66,237.7L66,244.4L63.4,251.1L56.6,259.7"/><path class="s3" d="M-2,178.1L18.3,192.1L36.3,204.4L49,213.9L58.6,222.9L63.7,229.7L66.3,236.5L66.3,243.1L63.7,249.8L56.9,258.5"/><path class="s4" d="M-1.7,176.8L18.6,190.7L36.6,203.1L49.3,212.6L58.9,221.5L64,228.4L66.6,235.1L66.6,241.8L64,248.5L57.2,257.1"/><path class="s5" d="M-1.3,175.3L19,189.3L37,201.6L49.6,211.1L59.2,220.1L64.4,226.9L67,233.6L67,240.3L64.4,247L57.6,255.6"/><g filter="url(#fBlur)"><path class="sg" d="M-19.4,-111.8L-13.7,-107.3L-7.9,-102.9L-2,-98.6L3.9,-94.3L9.8,-90.2L15.7,-86.2L21.5,-82.3L27.1,-78.6"/><path class="sh" d="M-13.7,-107.3L-7.9,-102.9L-2,-98.6L3.9,-94.3L9.8,-90.2L15.7,-86.2L21.5,-82.3"/><path class="sw" d="M-7.9,-102.9L-2,-98.6L3.9,-94.3L9.8,-90.2L15.7,-86.2"/><path class="sg" d="M-19.4,-57.8L-13.7,-53.3L-7.9,-48.9L-2,-44.6L3.9,-40.3L9.8,-36.2L15.7,-32.2L21.5,-28.3L27.1,-24.6"/><path class="sh" d="M-13.7,-53.3L-7.9,-48.9L-2,-44.6L3.9,-40.3L9.8,-36.2L15.7,-32.2L21.5,-28.3"/><path class="sw" d="M-7.9,-48.9L-2,-44.6L3.9,-40.3L9.8,-36.2L15.7,-32.2"/><path class="sg" d="M-19.4,-30.8L-13.7,-26.3L-7.9,-21.9L-2,-17.6L3.9,-13.3L9.8,-9.2L15.7,-5.2L21.5,-1.3L27.1,2.4"/><path class="sh" d="M-13.7,-26.3L-7.9,-21.9L-2,-17.6L3.9,-13.3L9.8,-9.2L15.7,-5.2L21.5,-1.3"/><path class="sw" d="M-7.9,-21.9L-2,-17.6L3.9,-13.3L9.8,-9.2L15.7,-5.2"/><path class="sg" d="M-19.4,-3.8L-13.7,0.7L-7.9,5.1L-2,9.4L3.9,13.7L9.8,17.8L15.7,21.8L21.5,25.7L27.1,29.4"/><path class="sh" d="M-13.7,0.7L-7.9,5.1L-2,9.4L3.9,13.7L9.8,17.8L15.7,21.8L21.5,25.7"/><path class="sw" d="M-7.9,5.1L-2,9.4L3.9,13.7L9.8,17.8L15.7,21.8"/><path class="sg" d="M-19.4,23.2L-13.7,27.7L-7.9,32.1L-2,36.4L3.9,40.7L9.8,44.8L15.7,48.8L21.5,52.7L27.1,56.4"/><path class="sh" d="M-13.7,27.7L-7.9,32.1L-2,36.4L3.9,40.7L9.8,44.8L15.7,48.8L21.5,52.7"/><path class="sw" d="M-7.9,32.1L-2,36.4L3.9,40.7L9.8,44.8L15.7,48.8"/><path class="sg" d="M-19.4,77.2L-13.7,81.7L-7.9,86.1L-2,90.4L3.9,94.7L9.8,98.8L15.7,102.8L21.5,106.7L27.1,110.4"/><path class="sh" d="M-13.7,81.7L-7.9,86.1L-2,90.4L3.9,94.7L9.8,98.8L15.7,102.8L21.5,106.7"/><path class="sw" d="M-7.9,86.1L-2,90.4L3.9,94.7L9.8,98.8L15.7,102.8"/><path class="sg" d="M-19.4,104.2L-13.7,108.7L-7.9,113.1L-2,117.4L3.9,121.7L9.8,125.8L15.7,129.8L21.5,133.7L27.1,137.4"/><path class="sh" d="M-13.7,108.7L-7.9,113.1L-2,117.4L3.9,121.7L9.8,125.8L15.7,129.8L21.5,133.7"/><path class="sw" d="M-7.9,113.1L-2,117.4L3.9,121.7L9.8,125.8L15.7,129.8"/><path class="sg" d="M-19.4,131.2L-13.7,135.7L-7.9,140.1L-2,144.4L3.9,148.7L9.8,152.8L15.7,156.8L21.5,160.7L27.1,164.4"/><path class="sh" d="M-13.7,135.7L-7.9,140.1L-2,144.4L3.9,148.7L9.8,152.8L15.7,156.8L21.5,160.7"/><path class="sw" d="M-7.9,140.1L-2,144.4L3.9,148.7L9.8,152.8L15.7,156.8"/><path class="sg" d="M-19.4,158.2L-13.7,162.7L-7.9,167.1L-2,171.4L3.9,175.7L9.8,179.8L15.7,183.8L21.5,187.7L27.1,191.4"/><path class="sh" d="M-13.7,162.7L-7.9,167.1L-2,171.4L3.9,175.7L9.8,179.8L15.7,183.8L21.5,187.7"/><path class="sw" d="M-7.9,167.1L-2,171.4L3.9,175.7L9.8,179.8L15.7,183.8"/></g><g clip-path="url(#cShade)"><path d="M-94,0 A94,24.4 0 0 0 94,0 L94,9 A94,24.4 0 0 1 -94,9 Z" fill="#1d3c5c" opacity="0.55"/><path d="M-94,8 A94,24.4 0 0 0 94,8 L94,15 A94,24.4 0 0 1 -94,15 Z" fill="#1d3c5c" opacity="0.22"/></g></g><path d="M-94.2,0 A94.2,24.4 0 0 0 94.2,0 L88,4.5 A88,23.5 0 0 1 -88,4.5 Z" fill="url(#gCham)"/><polygon points="-81.2,-68.6 -67,-73.6 -67,-44.6 -81.2,-47.4" fill="#3d7eb4"/><polygon points="-67,-73.6 -51.3,-72.5 -51.3,-41.8 -67,-44.6" fill="#4492cc"/><polygon points="-81.2,-68.6 -68,-74.7 -51.3,-73 -51.3,-71.6 -67,-72.5 -80.5,-67.2" fill="#4a9fde"/><polygon points="-36.6,-81.4 -30.8,-83.1 -30.8,-46 -36.6,-47.4" fill="#354e64"/><polygon points="-30.8,-83.1 -8.1,-83.9 -8.1,-44.6 -30.8,-46" fill="#4492cc"/><polygon points="-36.6,-81.4 -31.1,-84.2 -8.1,-85 -8.1,-83.3 -30.8,-82.2" fill="#4a9fde"/><polygon points="17.4,-78.3 38.3,-76.9 38.3,-44.6 17.4,-44.6" fill="url(#gBM3)"/><polygon points="38.3,-76.9 47.3,-80.8 47.3,-46 38.3,-44.6" fill="#4a9fde"/><polygon points="17.4,-78.3 21.6,-81.7 47.3,-80.8 38.3,-76.7" fill="#4a9fde"/><polygon points="57.8,-72.2 70.3,-65.5 70.3,-41.8 57.8,-43.2" fill="#354e64"/><polygon points="70.3,-65.5 84.9,-68.9 84.9,-50.2 70.3,-41.8" fill="#4a9fde"/><polygon points="57.8,-72.2 70.3,-75.5 84.9,-68.9 70.3,-65.2" fill="#4a9fde"/><ellipse cx="0" cy="-22" rx="93.8" ry="21" fill="url(#gBody)"/><ellipse cx="0" cy="-32.2" rx="92" ry="22.3" fill="#4594ce"/><ellipse cx="-0.5" cy="-31" rx="80" ry="18.5" fill="#428dc8"/><ellipse cx="-4.1" cy="-30.1" rx="55" ry="15" fill="#4695d0"/><path d="M-49.3,-39.2 Q-25,-44.1 6.4,-40.9" stroke="#2f5f8a" stroke-width="1.6" stroke-dasharray="3 2 5 3 2 6" fill="none" opacity="0.8"/><path d="M38.6,-36 L46.4,-35.4" stroke="#2b4a66" stroke-width="1.4" fill="none"/><path d="M-58.9,-35.4 L-52.8,-34.3" stroke="#2b4a66" stroke-width="1.2" fill="none"/><polygon points="-95.3,-58.4 -93.5,-63.9 -76.6,-63.7 -76.6,-50.3 -88.8,-47.9 -88.8,-19.5 -95.3,-25.1" fill="#4a9fde"/><polygon points="-93.5,-55.8 -88.9,-55.8 -88.9,-20.4 -93.5,-24.8" fill="#3f86bf"/><polygon points="73.1,-56.5 76.9,-59.9 92,-59.7 92,-20.9 73.1,-20.9" fill="#4a9fde"/><polygon points="78.7,-52.7 89.3,-52.7 89.3,-24.1 78.7,-25.1" fill="#418bc6"/><path d="M-94.9,-24.6 L-94.2,0 A94,24.4 0 0 0 94.2,0 L93.4,-24.6 A94,20 0 0 1 -94.9,-24.6 Z" fill="url(#gBody)"/><polygon points="-51.1,-33.1 -24.1,-37.1 4.6,-37.1 4.6,-3.5 -24.1,-3.8 -51.1,-7.2" fill="url(#gBody)"/><polygon points="-18.9,-21.4 4.6,-17.6 4.6,-9.2 -18.9,-9.6" fill="url(#gNotch)"/><path d="M-18.9,-21.4 Q-11.9,-31.3 4.6,-33.4 L4.6,-17.6 Q-7.6,-16.9 -18.9,-21.4 Z" fill="#4a9fde"/><polygon points="4.2,-44.6 38.3,-42.1 33.4,-36.3 4.2,-36.8" fill="#4a9fde"/><polygon points="4.2,-36.8 33.4,-36.3 33.4,-4.9 4.2,-2.8" fill="#479bd9"/><polygon points="33.4,-15.1 37.2,-14.3 37.2,-10.1 33.4,-10.5" fill="#35648f"/><path d="M4.6,-37.1 L4.6,-3.5" stroke="#3a7db5" stroke-width="0.8" fill="none"/><polygon points="-88.8,-48.8 -73.7,-42 -73.7,-18.6 -88.8,-21.9" fill="#354e64"/><polygon points="-88.8,-49 -76.2,-51.1 -66,-47.4 -51.4,-37.8 -51.4,-7.7 -73.7,-12.8 -73.7,-42" fill="#4798d5"/><polygon points="-88.8,-49 -76.2,-51.1 -66,-47.4 -51.4,-37.8 -73.7,-42" fill="#4a9fde"/><polygon points="48,-41.6 58.5,-39 58.5,-10.2 48,-15.8" fill="#354e64"/><polygon points="48,-41.6 63.4,-46.8 78.1,-45.2 78.1,-8.4 58.5,-10.2 58.5,-39" fill="#4899d7"/><polygon points="48,-41.6 63.4,-46.8 78.1,-45.2 58.5,-39" fill="#4a9fde"/></g>
<g transform="translate(838.8,248.5)"><path d="M-117.5,299 A117.5,30.5 0 0 0 117.5,299 L112.5,305 A112.5,32.5 0 0 1 -112.5,305 Z" fill="url(#gDarkBot)"/><path d="M-115.5,282 A115.5,27.5 0 0 0 115.5,282 L117.5,299 A117.5,30.5 0 0 1 -117.5,299 Z" fill="url(#gTier)"/><path d="M-105.5,248 A105.5,30 0 0 0 105.5,248 L115.5,282 A115.5,27.5 0 0 1 -115.5,282 Z" fill="url(#gTier)"/><path d="M-115.5,282 A115.5,27.5 0 0 0 115.5,282" stroke="#2f6293" stroke-width="1.6" fill="none" opacity="0.7"/><path d="M-115.5,283.6 A115.5,27.5 0 0 0 115.5,283.6" stroke="#58abe8" stroke-width="1.2" fill="none" opacity="0.8"/><path d="M-96,261.4 L-105.1,292.4" stroke="#2c5c8b" stroke-width="1.5" fill="none" opacity="0.85"/><path d="M-94.6,261.4 L-103.7,292.4" stroke="#5aaeea" stroke-width="1" fill="none" opacity="0.7"/><path d="M-57,274.2 L-62.4,304.1" stroke="#2c5c8b" stroke-width="1.5" fill="none" opacity="0.85"/><path d="M-55.6,274.2 L-61,304.1" stroke="#5aaeea" stroke-width="1" fill="none" opacity="0.7"/><path d="M8.5,278.9 L9.3,308.4" stroke="#2c5c8b" stroke-width="1.5" fill="none" opacity="0.85"/><path d="M9.9,278.9 L10.7,308.4" stroke="#5aaeea" stroke-width="1" fill="none" opacity="0.7"/><path d="M66,272.4 L72.3,302.5" stroke="#2c5c8b" stroke-width="1.5" fill="none" opacity="0.85"/><path d="M67.4,272.4 L73.7,302.5" stroke="#5aaeea" stroke-width="1" fill="none" opacity="0.7"/><path d="M98,260.1 L107.3,291.2" stroke="#2c5c8b" stroke-width="1.5" fill="none" opacity="0.85"/><path d="M99.4,260.1 L108.7,291.2" stroke="#5aaeea" stroke-width="1" fill="none" opacity="0.7"/><path d="M-108,293.7 L-109.9,309.8" stroke="#2c5c8b" stroke-width="1.5" fill="none" opacity="0.85"/><path d="M-106.6,293.7 L-108.5,309.8" stroke="#5aaeea" stroke-width="1" fill="none" opacity="0.7"/><path d="M-86,302.4 L-87.5,319.4" stroke="#2c5c8b" stroke-width="1.5" fill="none" opacity="0.85"/><path d="M-84.6,302.4 L-86.1,319.4" stroke="#5aaeea" stroke-width="1" fill="none" opacity="0.7"/><path d="M-25,310.8 L-25.4,328.8" stroke="#2c5c8b" stroke-width="1.5" fill="none" opacity="0.85"/><path d="M-23.6,310.8 L-24,328.8" stroke="#5aaeea" stroke-width="1" fill="none" opacity="0.7"/><path d="M45,309.3 L45.8,327.1" stroke="#2c5c8b" stroke-width="1.5" fill="none" opacity="0.85"/><path d="M46.4,309.3 L47.2,327.1" stroke="#5aaeea" stroke-width="1" fill="none" opacity="0.7"/><path d="M97,298.9 L98.7,315.6" stroke="#2c5c8b" stroke-width="1.5" fill="none" opacity="0.85"/><path d="M98.4,298.9 L100.1,315.6" stroke="#5aaeea" stroke-width="1" fill="none" opacity="0.7"/><ellipse cx="0" cy="248" rx="105.5" ry="30" fill="url(#gLedge)"/><path d="M-94,186.8 A94,27.4 0 0 0 94,186.8 L94,240 A94,32.5 0 0 1 -94,240 Z" fill="url(#gBody)"/><path d="M-94,240 A94,32.5 0 0 0 94,240" stroke="#2c5c8b" stroke-width="1.5" fill="none" opacity="0.5"/><g clip-path="url(#cBase)"><text font-family="Liberation Sans, sans-serif" font-weight="bold" font-size="68" fill="url(#gText)" filter="url(#fEng)"><tspan x="-85.2" y="263" textLength="20.8" lengthAdjust="spacingAndGlyphs">f</tspan><tspan x="-61.4" y="263" textLength="35.7" lengthAdjust="spacingAndGlyphs">o</tspan><tspan x="-28.3" y="266.5" textLength="19.5" lengthAdjust="spacingAndGlyphs">r</tspan><tspan x="-14.6" y="271.5" textLength="70.2" lengthAdjust="spacingAndGlyphs">m</tspan><tspan x="60.2" y="265.3" textLength="12.9" lengthAdjust="spacingAndGlyphs">l</tspan><tspan x="71.9" y="259.5" textLength="32.4" lengthAdjust="spacingAndGlyphs">a</tspan></text></g><ellipse cx="0" cy="188" rx="94" ry="27.4" fill="url(#gTop)"/><polygon points="-84,327 -72,324 -63,317.5 -57,314.5 -51,317.5 -45,324 -40,329 -30,330.5 -23,337 -23,337.6 -32,337 -42,336 -52,334.6 -62,332.9 -72,330.8 -84,327.4" fill="#ffffff"/><g clip-path="url(#cCol)"><rect x="-52" y="0" width="104" height="196" fill="#30689c"/><path class="b0" d="M63.1,-118.3L66,-107.9L62.6,-97.5L53.1,-86.6L38.5,-75L20.2,-62.4L0,-48.5L-20.2,-33.4L-38.5,-17L-53.1,0.3L-62.6,18.5L-66,37L-63.1,55.5"/><path class="b1" d="M62.6,-115.3L65.5,-104.9L62.1,-94.5L52.6,-83.6L38,-72L19.7,-59.4L-0.5,-45.5L-20.7,-30.4L-39,-14L-53.6,3.3L-63.1,21.5L-66.5,40L-63.6,58.5"/><path class="b0" d="M63.1,-91.3L66,-80.9L62.6,-70.5L53.1,-59.6L38.5,-48L20.2,-35.4L0,-21.5L-20.2,-6.4L-38.5,10L-53.1,27.3L-62.6,45.5L-66,64L-63.1,82.5"/><path class="b1" d="M62.6,-88.3L65.5,-77.9L62.1,-67.5L52.6,-56.6L38,-45L19.7,-32.4L-0.5,-18.5L-20.7,-3.4L-39,13L-53.6,30.3L-63.1,48.5L-66.5,67L-63.6,85.5"/><path class="b0" d="M63.1,-64.3L66,-53.9L62.6,-43.5L53.1,-32.6L38.5,-21L20.2,-8.4L0,5.5L-20.2,20.6L-38.5,37L-53.1,54.3L-62.6,72.5L-66,91L-63.1,109.5"/><path class="b1" d="M62.6,-61.3L65.5,-50.9L62.1,-40.5L52.6,-29.6L38,-18L19.7,-5.4L-0.5,8.5L-20.7,23.6L-39,40L-53.6,57.3L-63.1,75.5L-66.5,94L-63.6,112.5"/><path class="b0" d="M63.1,-37.3L66,-26.9L62.6,-16.5L53.1,-5.6L38.5,6L20.2,18.6L0,32.5L-20.2,47.6L-38.5,64L-53.1,81.3L-62.6,99.5L-66,118L-63.1,136.5"/><path class="b1" d="M62.6,-34.3L65.5,-23.9L62.1,-13.5L52.6,-2.6L38,9L19.7,21.6L-0.5,35.5L-20.7,50.6L-39,67L-53.6,84.3L-63.1,102.5L-66.5,121L-63.6,139.5"/><path class="b0" d="M63.1,16.7L66,27.1L62.6,37.5L53.1,48.4L38.5,60L20.2,72.6L0,86.5L-20.2,101.6L-38.5,118L-53.1,135.3L-62.6,153.5L-66,172L-63.1,190.5"/><path class="b1" d="M62.6,19.7L65.5,30.1L62.1,40.5L52.6,51.4L38,63L19.7,75.6L-0.5,89.5L-20.7,104.6L-39,121L-53.6,138.3L-63.1,156.5L-66.5,175L-63.6,193.5"/><path class="b0" d="M63.1,43.7L66,54.1L62.6,64.5L53.1,75.4L38.5,87L20.2,99.6L0,113.5L-20.2,128.6L-38.5,145L-53.1,162.3L-62.6,180.5L-66,199L-63.1,217.5"/><path class="b1" d="M62.6,46.7L65.5,57.1L62.1,67.5L52.6,78.4L38,90L19.7,102.6L-0.5,116.5L-20.7,131.6L-39,148L-53.6,165.3L-63.1,183.5L-66.5,202L-63.6,220.5"/><path class="b0" d="M63.1,70.7L66,81.1L62.6,91.5L53.1,102.4L38.5,114L20.2,126.6L0,140.5L-20.2,155.6L-38.5,172L-53.1,189.3L-62.6,207.5L-66,226L-63.1,244.5"/><path class="b1" d="M62.6,73.7L65.5,84.1L62.1,94.5L52.6,105.4L38,117L19.7,129.6L-0.5,143.5L-20.7,158.6L-39,175L-53.6,192.3L-63.1,210.5L-66.5,229L-63.6,247.5"/><path class="b0" d="M63.1,97.7L66,108.1L62.6,118.5L53.1,129.4L38.5,141L20.2,153.6L0,167.5L-20.2,182.6L-38.5,199L-53.1,216.3L-62.6,234.5L-66,253L-63.1,271.5"/><path class="b1" d="M62.6,100.7L65.5,111.1L62.1,121.5L52.6,132.4L38,144L19.7,156.6L-0.5,170.5L-20.7,185.6L-39,202L-53.6,219.3L-63.1,237.5L-66.5,256L-63.6,274.5"/><path class="b0" d="M63.1,151.7L66,162.1L62.6,172.5L53.1,183.4L38.5,195L20.2,207.6L0,221.5L-20.2,236.6L-38.5,253L-53.1,270.3L-62.6,288.5L-66,307L-63.1,325.5"/><path class="b1" d="M62.6,154.7L65.5,165.1L62.1,175.5L52.6,186.4L38,198L19.7,210.6L-0.5,224.5L-20.7,239.6L-39,256L-53.6,273.3L-63.1,291.5L-66.5,310L-63.6,328.5"/><path class="b0" d="M63.1,178.7L66,189.1L62.6,199.5L53.1,210.4L38.5,222L20.2,234.6L0,248.5L-20.2,263.6L-38.5,280L-53.1,297.3L-62.6,315.5L-66,334L-63.1,352.5"/><path class="b1" d="M62.6,181.7L65.5,192.1L62.1,202.5L52.6,213.4L38,225L19.7,237.6L-0.5,251.5L-20.7,266.6L-39,283L-53.6,300.3L-63.1,318.5L-66.5,337L-63.6,355.5"/><path class="b0" d="M63.1,205.7L66,216.1L62.6,226.5L53.1,237.4L38.5,249L20.2,261.6L0,275.5L-20.2,290.6L-38.5,307L-53.1,324.3L-62.6,342.5L-66,361L-63.1,379.5"/><path class="b1" d="M62.6,208.7L65.5,219.1L62.1,229.5L52.6,240.4L38,252L19.7,264.6L-0.5,278.5L-20.7,293.6L-39,310L-53.6,327.3L-63.1,345.5L-66.5,364L-63.6,382.5"/><path class="c0" d="M0.3,20L-4.3,24L-8,28L-9.9,32L-9.3,36L-6.3,40L-2,44L2.3,48L5.3,52L5.9,56L4,60L0.3,64L-4.3,68L-8,72L-9.9,76L-9.3,80L-6.3,84L-2,88L2.3,92L5.3,96L5.9,100L4,104L0.3,108L-4.3,112L-8,116L-9.9,120L-9.3,124L-6.3,128L-2,132L2.3,136L5.3,140L5.9,144L4,148L0.3,152L-4.3,156L-8,160L-9.9,164L-9.3,168L-6.3,172L-2,176L2.3,180L5.3,184L5.9,188"/><path class="c1" d="M0.3,20L-4.3,24L-8,28L-9.9,32L-9.3,36L-6.3,40L-2,44L2.3,48L5.3,52L5.9,56L4,60L0.3,64L-4.3,68L-8,72L-9.9,76L-9.3,80L-6.3,84L-2,88L2.3,92L5.3,96L5.9,100L4,104L0.3,108L-4.3,112L-8,116L-9.9,120L-9.3,124L-6.3,128L-2,132L2.3,136L5.3,140L5.9,144L4,148L0.3,152L-4.3,156L-8,160L-9.9,164L-9.3,168L-6.3,172L-2,176L2.3,180L5.3,184L5.9,188"/><path class="c0" d="M-4.3,20L0.3,24L4,28L5.9,32L5.3,36L2.3,40L-2,44L-6.3,48L-9.3,52L-9.9,56L-8,60L-4.3,64L0.3,68L4,72L5.9,76L5.3,80L2.3,84L-2,88L-6.3,92L-9.3,96L-9.9,100L-8,104L-4.3,108L0.3,112L4,116L5.9,120L5.3,124L2.3,128L-2,132L-6.3,136L-9.3,140L-9.9,144L-8,148L-4.3,152L0.3,156L4,160L5.9,164L5.3,168L2.3,172L-2,176L-6.3,180L-9.3,184L-9.9,188"/><path class="c1" d="M-4.3,20L0.3,24L4,28L5.9,32L5.3,36L2.3,40L-2,44L-6.3,48L-9.3,52L-9.9,56L-8,60L-4.3,64L0.3,68L4,72L5.9,76L5.3,80L2.3,84L-2,88L-6.3,92L-9.3,96L-9.9,100L-8,104L-4.3,108L0.3,112L4,116L5.9,120L5.3,124L2.3,128L-2,132L-6.3,136L-9.3,140L-9.9,144L-8,148L-4.3,152L0.3,156L4,160L5.9,164L5.3,168L2.3,172L-2,176L-6.3,180L-9.3,184L-9.9,188"/><path class="s0" d="M-56.3,172.2L-63.1,186.9L-65.7,198.7L-65.7,210.7L-63.1,222.5L-57.9,234.3L-48.3,248.6L-35.7,262.3L-17.7,277.8L2.6,292.7"/><path class="s1" d="M-56.1,171.7L-62.9,186.3L-65.5,198.2L-65.5,210.1L-62.9,222L-57.8,233.7L-48.2,248L-35.5,261.7L-17.5,277.3L2.8,292.2"/><path class="s2" d="M-55.9,170.6L-62.7,185.2L-65.3,197.1L-65.3,209L-62.7,220.9L-57.5,232.6L-47.9,246.9L-35.3,260.6L-17.3,276.2L3,291.1"/><path class="s3" d="M-55.6,169.3L-62.4,183.9L-65,195.8L-65,207.8L-62.4,219.6L-57.3,231.4L-47.6,245.6L-35,259.4L-17,274.9L3.3,289.8"/><path class="s4" d="M-55.3,168L-62.1,182.6L-64.7,194.5L-64.7,206.4L-62.1,218.3L-57,230L-47.3,244.3L-34.7,258L-16.7,273.6L3.6,288.5"/><path class="s5" d="M-55,166.5L-61.8,181.1L-64.4,193L-64.4,204.9L-61.8,216.8L-56.6,228.5L-47,242.8L-34.4,256.6L-16.4,272.1L3.9,287"/><path class="s0" d="M-56.3,145.2L-63.1,159.9L-65.7,171.7L-65.7,183.7L-63.1,195.5L-57.9,207.3L-48.3,221.6L-35.7,235.3L-17.7,250.8L2.6,265.7"/><path class="s1" d="M-56.1,144.7L-62.9,159.3L-65.5,171.2L-65.5,183.1L-62.9,195L-57.8,206.7L-48.2,221L-35.5,234.7L-17.5,250.3L2.8,265.2"/><path class="s2" d="M-55.9,143.6L-62.7,158.2L-65.3,170.1L-65.3,182L-62.7,193.9L-57.5,205.6L-47.9,219.9L-35.3,233.6L-17.3,249.2L3,264.1"/><path class="s3" d="M-55.6,142.3L-62.4,156.9L-65,168.8L-65,180.8L-62.4,192.6L-57.3,204.4L-47.6,218.6L-35,232.4L-17,247.9L3.3,262.8"/><path class="s4" d="M-55.3,141L-62.1,155.6L-64.7,167.5L-64.7,179.4L-62.1,191.3L-57,203L-47.3,217.3L-34.7,231L-16.7,246.6L3.6,261.5"/><path class="s5" d="M-55,139.5L-61.8,154.1L-64.4,166L-64.4,177.9L-61.8,189.8L-56.6,201.5L-47,215.8L-34.4,229.6L-16.4,245.1L3.9,260"/><path class="s0" d="M-56.3,118.2L-63.1,132.9L-65.7,144.7L-65.7,156.7L-63.1,168.5L-57.9,180.3L-48.3,194.6L-35.7,208.3L-17.7,223.8L2.6,238.7"/><path class="s1" d="M-56.1,117.7L-62.9,132.3L-65.5,144.2L-65.5,156.1L-62.9,168L-57.8,179.7L-48.2,194L-35.5,207.7L-17.5,223.3L2.8,238.2"/><path class="s2" d="M-55.9,116.6L-62.7,131.2L-65.3,143.1L-65.3,155L-62.7,166.9L-57.5,178.6L-47.9,192.9L-35.3,206.6L-17.3,222.2L3,237.1"/><path class="s3" d="M-55.6,115.3L-62.4,129.9L-65,141.8L-65,153.8L-62.4,165.6L-57.3,177.4L-47.6,191.6L-35,205.4L-17,220.9L3.3,235.8"/><path class="s4" d="M-55.3,114L-62.1,128.6L-64.7,140.5L-64.7,152.4L-62.1,164.3L-57,176L-47.3,190.3L-34.7,204L-16.7,219.6L3.6,234.5"/><path class="s5" d="M-55,112.5L-61.8,127.1L-64.4,139L-64.4,150.9L-61.8,162.8L-56.6,174.5L-47,188.8L-34.4,202.6L-16.4,218.1L3.9,233"/><path class="s0" d="M-56.3,64.2L-63.1,78.9L-65.7,90.7L-65.7,102.7L-63.1,114.5L-57.9,126.3L-48.3,140.6L-35.7,154.3L-17.7,169.8L2.6,184.7"/><path class="s1" d="M-56.1,63.7L-62.9,78.3L-65.5,90.2L-65.5,102.1L-62.9,114L-57.8,125.7L-48.2,140L-35.5,153.7L-17.5,169.3L2.8,184.2"/><path class="s2" d="M-55.9,62.6L-62.7,77.2L-65.3,89.1L-65.3,101L-62.7,112.9L-57.5,124.6L-47.9,138.9L-35.3,152.6L-17.3,168.2L3,183.1"/><path class="s3" d="M-55.6,61.3L-62.4,75.9L-65,87.8L-65,99.8L-62.4,111.6L-57.3,123.4L-47.6,137.6L-35,151.4L-17,166.9L3.3,181.8"/><path class="s4" d="M-55.3,60L-62.1,74.6L-64.7,86.5L-64.7,98.4L-62.1,110.3L-57,122L-47.3,136.3L-34.7,150L-16.7,165.6L3.6,180.5"/><path class="s5" d="M-55,58.5L-61.8,73.1L-64.4,85L-64.4,96.9L-61.8,108.8L-56.6,120.5L-47,134.8L-34.4,148.6L-16.4,164.1L3.9,179"/><path class="s0" d="M-56.3,37.2L-63.1,51.9L-65.7,63.7L-65.7,75.7L-63.1,87.5L-57.9,99.3L-48.3,113.6L-35.7,127.3L-17.7,142.8L2.6,157.7"/><path class="s1" d="M-56.1,36.7L-62.9,51.3L-65.5,63.2L-65.5,75.1L-62.9,87L-57.8,98.7L-48.2,113L-35.5,126.7L-17.5,142.3L2.8,157.2"/><path class="s2" d="M-55.9,35.6L-62.7,50.2L-65.3,62.1L-65.3,74L-62.7,85.9L-57.5,97.6L-47.9,111.9L-35.3,125.6L-17.3,141.2L3,156.1"/><path class="s3" d="M-55.6,34.3L-62.4,48.9L-65,60.8L-65,72.8L-62.4,84.6L-57.3,96.4L-47.6,110.6L-35,124.4L-17,139.9L3.3,154.8"/><path class="s4" d="M-55.3,33L-62.1,47.6L-64.7,59.5L-64.7,71.4L-62.1,83.3L-57,95L-47.3,109.3L-34.7,123L-16.7,138.6L3.6,153.5"/><path class="s5" d="M-55,31.5L-61.8,46.1L-64.4,58L-64.4,69.9L-61.8,81.8L-56.6,93.5L-47,107.8L-34.4,121.6L-16.4,137.1L3.9,152"/><path class="s0" d="M-56.3,10.2L-63.1,24.9L-65.7,36.7L-65.7,48.7L-63.1,60.5L-57.9,72.3L-48.3,86.6L-35.7,100.3L-17.7,115.8L2.6,130.7"/><path class="s1" d="M-56.1,9.7L-62.9,24.3L-65.5,36.2L-65.5,48.1L-62.9,60L-57.8,71.7L-48.2,86L-35.5,99.7L-17.5,115.3L2.8,130.2"/><path class="s2" d="M-55.9,8.6L-62.7,23.2L-65.3,35.1L-65.3,47L-62.7,58.9L-57.5,70.6L-47.9,84.9L-35.3,98.6L-17.3,114.2L3,129.1"/><path class="s3" d="M-55.6,7.3L-62.4,21.9L-65,33.8L-65,45.8L-62.4,57.6L-57.3,69.4L-47.6,83.6L-35,97.4L-17,112.9L3.3,127.8"/><path class="s4" d="M-55.3,6L-62.1,20.6L-64.7,32.5L-64.7,44.4L-62.1,56.3L-57,68L-47.3,82.3L-34.7,96L-16.7,111.6L3.6,126.5"/><path class="s5" d="M-55,4.5L-61.8,19.1L-64.4,31L-64.4,42.9L-61.8,54.8L-56.6,66.5L-47,80.8L-34.4,94.6L-16.4,110.1L3.9,125"/><path class="s0" d="M-56.3,-16.8L-63.1,-2.1L-65.7,9.7L-65.7,21.7L-63.1,33.5L-57.9,45.3L-48.3,59.6L-35.7,73.3L-17.7,88.8L2.6,103.7"/><path class="s1" d="M-56.1,-17.3L-62.9,-2.7L-65.5,9.2L-65.5,21.1L-62.9,33L-57.8,44.7L-48.2,59L-35.5,72.7L-17.5,88.3L2.8,103.2"/><path class="s2" d="M-55.9,-18.4L-62.7,-3.8L-65.3,8.1L-65.3,20L-62.7,31.9L-57.5,43.6L-47.9,57.9L-35.3,71.6L-17.3,87.2L3,102.1"/><path class="s3" d="M-55.6,-19.7L-62.4,-5.1L-65,6.8L-65,18.8L-62.4,30.6L-57.3,42.4L-47.6,56.6L-35,70.4L-17,85.9L3.3,100.8"/><path class="s4" d="M-55.3,-21L-62.1,-6.4L-64.7,5.5L-64.7,17.4L-62.1,29.3L-57,41L-47.3,55.3L-34.7,69L-16.7,84.6L3.6,99.5"/><path class="s5" d="M-55,-22.5L-61.8,-7.9L-64.4,4L-64.4,15.9L-61.8,27.8L-56.6,39.5L-47,53.8L-34.4,67.6L-16.4,83.1L3.9,98"/><path class="s0" d="M-56.3,-70.8L-63.1,-56.1L-65.7,-44.3L-65.7,-32.3L-63.1,-20.5L-57.9,-8.7L-48.3,5.6L-35.7,19.3L-17.7,34.8L2.6,49.7"/><path class="s1" d="M-56.1,-71.3L-62.9,-56.7L-65.5,-44.8L-65.5,-32.9L-62.9,-21L-57.8,-9.3L-48.2,5L-35.5,18.7L-17.5,34.3L2.8,49.2"/><path class="s2" d="M-55.9,-72.4L-62.7,-57.8L-65.3,-45.9L-65.3,-34L-62.7,-22.1L-57.5,-10.4L-47.9,3.9L-35.3,17.6L-17.3,33.2L3,48.1"/><path class="s3" d="M-55.6,-73.7L-62.4,-59.1L-65,-47.2L-65,-35.2L-62.4,-23.4L-57.3,-11.6L-47.6,2.6L-35,16.4L-17,31.9L3.3,46.8"/><path class="s4" d="M-55.3,-75L-62.1,-60.4L-64.7,-48.5L-64.7,-36.6L-62.1,-24.7L-57,-13L-47.3,1.3L-34.7,15L-16.7,30.6L3.6,45.5"/><path class="s5" d="M-55,-76.5L-61.8,-61.9L-64.4,-50L-64.4,-38.1L-61.8,-26.2L-56.6,-14.5L-47,-0.2L-34.4,13.6L-16.4,29.1L3.9,44"/><path class="s0" d="M-56.3,-97.8L-63.1,-83.1L-65.7,-71.3L-65.7,-59.3L-63.1,-47.5L-57.9,-35.7L-48.3,-21.4L-35.7,-7.7L-17.7,7.8L2.6,22.7"/><path class="s1" d="M-56.1,-98.3L-62.9,-83.7L-65.5,-71.8L-65.5,-59.9L-62.9,-48L-57.8,-36.3L-48.2,-22L-35.5,-8.3L-17.5,7.3L2.8,22.2"/><path class="s2" d="M-55.9,-99.4L-62.7,-84.8L-65.3,-72.9L-65.3,-61L-62.7,-49.1L-57.5,-37.4L-47.9,-23.1L-35.3,-9.4L-17.3,6.2L3,21.1"/><path class="s3" d="M-55.6,-100.7L-62.4,-86.1L-65,-74.2L-65,-62.2L-62.4,-50.4L-57.3,-38.6L-47.6,-24.4L-35,-10.6L-17,4.9L3.3,19.8"/><path class="s4" d="M-55.3,-102L-62.1,-87.4L-64.7,-75.5L-64.7,-63.6L-62.1,-51.7L-57,-40L-47.3,-25.7L-34.7,-12L-16.7,3.6L3.6,18.5"/><path class="s5" d="M-55,-103.5L-61.8,-88.9L-64.4,-77L-64.4,-65.1L-61.8,-53.2L-56.6,-41.5L-47,-27.2L-34.4,-13.4L-16.4,2.1L3.9,17"/><path class="s0" d="M-56.3,-124.8L-63.1,-110.1L-65.7,-98.3L-65.7,-86.3L-63.1,-74.5L-57.9,-62.7L-48.3,-48.4L-35.7,-34.7L-17.7,-19.2L2.6,-4.3"/><path class="s1" d="M-56.1,-125.3L-62.9,-110.7L-65.5,-98.8L-65.5,-86.9L-62.9,-75L-57.8,-63.3L-48.2,-49L-35.5,-35.3L-17.5,-19.7L2.8,-4.8"/><path class="s2" d="M-55.9,-126.4L-62.7,-111.8L-65.3,-99.9L-65.3,-88L-62.7,-76.1L-57.5,-64.4L-47.9,-50.1L-35.3,-36.4L-17.3,-20.8L3,-5.9"/><path class="s3" d="M-55.6,-127.7L-62.4,-113.1L-65,-101.2L-65,-89.2L-62.4,-77.4L-57.3,-65.6L-47.6,-51.4L-35,-37.6L-17,-22.1L3.3,-7.2"/><path class="s4" d="M-55.3,-129L-62.1,-114.4L-64.7,-102.5L-64.7,-90.6L-62.1,-78.7L-57,-67L-47.3,-52.7L-34.7,-39L-16.7,-23.4L3.6,-8.5"/><path class="s5" d="M-55,-130.5L-61.8,-115.9L-64.4,-104L-64.4,-92.1L-61.8,-80.2L-56.6,-68.5L-47,-54.2L-34.4,-40.4L-16.4,-24.9L3.9,-10"/><path class="s0" d="M-2.6,-89L17.7,-75L35.7,-62.7L48.3,-53.2L57.9,-44.2L63.1,-37.3L65.7,-30.6L65.7,-24L63.1,-17.3L56.3,-8.6"/><path class="s1" d="M-2.5,-89.6L17.8,-75.6L35.8,-63.2L48.4,-53.7L58.1,-44.8L63.2,-37.9L65.8,-31.2L65.8,-24.6L63.2,-17.8L56.4,-9.2"/><path class="s2" d="M-2.3,-90.6L18,-76.6L36,-64.3L48.7,-54.8L58.3,-45.9L63.4,-39L66,-32.3L66,-25.6L63.4,-18.9L56.6,-10.3"/><path class="s3" d="M-2,-91.9L18.3,-77.9L36.3,-65.6L49,-56.1L58.6,-47.1L63.7,-40.3L66.3,-33.5L66.3,-26.9L63.7,-20.2L56.9,-11.5"/><path class="s4" d="M-1.7,-93.2L18.6,-79.3L36.6,-66.9L49.3,-57.4L58.9,-48.5L64,-41.6L66.6,-34.9L66.6,-28.2L64,-21.5L57.2,-12.9"/><path class="s5" d="M-1.3,-94.7L19,-80.7L37,-68.4L49.6,-58.9L59.2,-49.9L64.4,-43.1L67,-36.4L67,-29.7L64.4,-23L57.6,-14.4"/><path class="s0" d="M-2.6,-35L17.7,-21L35.7,-8.7L48.3,0.8L57.9,9.8L63.1,16.7L65.7,23.4L65.7,30L63.1,36.7L56.3,45.4"/><path class="s1" d="M-2.5,-35.6L17.8,-21.6L35.8,-9.2L48.4,0.3L58.1,9.2L63.2,16.1L65.8,22.8L65.8,29.4L63.2,36.2L56.4,44.8"/><path class="s2" d="M-2.3,-36.6L18,-22.6L36,-10.3L48.7,-0.8L58.3,8.1L63.4,15L66,21.7L66,28.4L63.4,35.1L56.6,43.7"/><path class="s3" d="M-2,-37.9L18.3,-23.9L36.3,-11.6L49,-2.1L58.6,6.9L63.7,13.7L66.3,20.5L66.3,27.1L63.7,33.8L56.9,42.5"/><path class="s4" d="M-1.7,-39.2L18.6,-25.3L36.6,-12.9L49.3,-3.4L58.9,5.5L64,12.4L66.6,19.1L66.6,25.8L64,32.5L57.2,41.1"/><path class="s5" d="M-1.3,-40.7L19,-26.7L37,-14.4L49.6,-4.9L59.2,4.1L64.4,10.9L67,17.6L67,24.3L64.4,31L57.6,39.6"/><path class="s0" d="M-2.6,-8L17.7,6L35.7,18.3L48.3,27.8L57.9,36.8L63.1,43.7L65.7,50.4L65.7,57L63.1,63.7L56.3,72.4"/><path class="s1" d="M-2.5,-8.6L17.8,5.4L35.8,17.8L48.4,27.3L58.1,36.2L63.2,43.1L65.8,49.8L65.8,56.4L63.2,63.2L56.4,71.8"/><path class="s2" d="M-2.3,-9.6L18,4.4L36,16.7L48.7,26.2L58.3,35.1L63.4,42L66,48.7L66,55.4L63.4,62.1L56.6,70.7"/><path class="s3" d="M-2,-10.9L18.3,3.1L36.3,15.4L49,24.9L58.6,33.9L63.7,40.7L66.3,47.5L66.3,54.1L63.7,60.8L56.9,69.5"/><path class="s4" d="M-1.7,-12.2L18.6,1.7L36.6,14.1L49.3,23.6L58.9,32.5L64,39.4L66.6,46.1L66.6,52.8L64,59.5L57.2,68.1"/><path class="s5" d="M-1.3,-13.7L19,0.3L37,12.6L49.6,22.1L59.2,31.1L64.4,37.9L67,44.6L67,51.3L64.4,58L57.6,66.6"/><path class="s0" d="M-2.6,19L17.7,33L35.7,45.3L48.3,54.8L57.9,63.8L63.1,70.7L65.7,77.4L65.7,84L63.1,90.7L56.3,99.4"/><path class="s1" d="M-2.5,18.4L17.8,32.4L35.8,44.8L48.4,54.3L58.1,63.2L63.2,70.1L65.8,76.8L65.8,83.4L63.2,90.2L56.4,98.8"/><path class="s2" d="M-2.3,17.4L18,31.4L36,43.7L48.7,53.2L58.3,62.1L63.4,69L66,75.7L66,82.4L63.4,89.1L56.6,97.7"/><path class="s3" d="M-2,16.1L18.3,30.1L36.3,42.4L49,51.9L58.6,60.9L63.7,67.7L66.3,74.5L66.3,81.1L63.7,87.8L56.9,96.5"/><path class="s4" d="M-1.7,14.8L18.6,28.7L36.6,41.1L49.3,50.6L58.9,59.5L64,66.4L66.6,73.1L66.6,79.8L64,86.5L57.2,95.1"/><path class="s5" d="M-1.3,13.3L19,27.3L37,39.6L49.6,49.1L59.2,58.1L64.4,64.9L67,71.6L67,78.3L64.4,85L57.6,93.6"/><path class="s0" d="M-2.6,46L17.7,60L35.7,72.3L48.3,81.8L57.9,90.8L63.1,97.7L65.7,104.4L65.7,111L63.1,117.7L56.3,126.4"/><path class="s1" d="M-2.5,45.4L17.8,59.4L35.8,71.8L48.4,81.3L58.1,90.2L63.2,97.1L65.8,103.8L65.8,110.4L63.2,117.2L56.4,125.8"/><path class="s2" d="M-2.3,44.4L18,58.4L36,70.7L48.7,80.2L58.3,89.1L63.4,96L66,102.7L66,109.4L63.4,116.1L56.6,124.7"/><path class="s3" d="M-2,43.1L18.3,57.1L36.3,69.4L49,78.9L58.6,87.9L63.7,94.7L66.3,101.5L66.3,108.1L63.7,114.8L56.9,123.5"/><path class="s4" d="M-1.7,41.8L18.6,55.7L36.6,68.1L49.3,77.6L58.9,86.5L64,93.4L66.6,100.1L66.6,106.8L64,113.5L57.2,122.1"/><path class="s5" d="M-1.3,40.3L19,54.3L37,66.6L49.6,76.1L59.2,85.1L64.4,91.9L67,98.6L67,105.3L64.4,112L57.6,120.6"/><path class="s0" d="M-2.6,100L17.7,114L35.7,126.3L48.3,135.8L57.9,144.8L63.1,151.7L65.7,158.4L65.7,165L63.1,171.7L56.3,180.4"/><path class="s1" d="M-2.5,99.4L17.8,113.4L35.8,125.8L48.4,135.3L58.1,144.2L63.2,151.1L65.8,157.8L65.8,164.4L63.2,171.2L56.4,179.8"/><path class="s2" d="M-2.3,98.4L18,112.4L36,124.7L48.7,134.2L58.3,143.1L63.4,150L66,156.7L66,163.4L63.4,170.1L56.6,178.7"/><path class="s3" d="M-2,97.1L18.3,111.1L36.3,123.4L49,132.9L58.6,141.9L63.7,148.7L66.3,155.5L66.3,162.1L63.7,168.8L56.9,177.5"/><path class="s4" d="M-1.7,95.8L18.6,109.7L36.6,122.1L49.3,131.6L58.9,140.5L64,147.4L66.6,154.1L66.6,160.8L64,167.5L57.2,176.1"/><path class="s5" d="M-1.3,94.3L19,108.3L37,120.6L49.6,130.1L59.2,139.1L64.4,145.9L67,152.6L67,159.3L64.4,166L57.6,174.6"/><path class="s0" d="M-2.6,127L17.7,141L35.7,153.3L48.3,162.8L57.9,171.8L63.1,178.7L65.7,185.4L65.7,192L63.1,198.7L56.3,207.4"/><path class="s1" d="M-2.5,126.4L17.8,140.4L35.8,152.8L48.4,162.3L58.1,171.2L63.2,178.1L65.8,184.8L65.8,191.4L63.2,198.2L56.4,206.8"/><path class="s2" d="M-2.3,125.4L18,139.4L36,151.7L48.7,161.2L58.3,170.1L63.4,177L66,183.7L66,190.4L63.4,197.1L56.6,205.7"/><path class="s3" d="M-2,124.1L18.3,138.1L36.3,150.4L49,159.9L58.6,168.9L63.7,175.7L66.3,182.5L66.3,189.1L63.7,195.8L56.9,204.5"/><path class="s4" d="M-1.7,122.8L18.6,136.7L36.6,149.1L49.3,158.6L58.9,167.5L64,174.4L66.6,181.1L66.6,187.8L64,194.5L57.2,203.1"/><path class="s5" d="M-1.3,121.3L19,135.3L37,147.6L49.6,157.1L59.2,166.1L64.4,172.9L67,179.6L67,186.3L64.4,193L57.6,201.6"/><path class="s0" d="M-2.6,154L17.7,168L35.7,180.3L48.3,189.8L57.9,198.8L63.1,205.7L65.7,212.4L65.7,219L63.1,225.7L56.3,234.4"/><path class="s1" d="M-2.5,153.4L17.8,167.4L35.8,179.8L48.4,189.3L58.1,198.2L63.2,205.1L65.8,211.8L65.8,218.4L63.2,225.2L56.4,233.8"/><path class="s2" d="M-2.3,152.4L18,166.4L36,178.7L48.7,188.2L58.3,197.1L63.4,204L66,210.7L66,217.4L63.4,224.1L56.6,232.7"/><path class="s3" d="M-2,151.1L18.3,165.1L36.3,177.4L49,186.9L58.6,195.9L63.7,202.7L66.3,209.5L66.3,216.1L63.7,222.8L56.9,231.5"/><path class="s4" d="M-1.7,149.8L18.6,163.7L36.6,176.1L49.3,185.6L58.9,194.5L64,201.4L66.6,208.1L66.6,214.8L64,221.5L57.2,230.1"/><path class="s5" d="M-1.3,148.3L19,162.3L37,174.6L49.6,184.1L59.2,193.1L64.4,199.9L67,206.6L67,213.3L64.4,220L57.6,228.6"/><path class="s0" d="M-2.6,181L17.7,195L35.7,207.3L48.3,216.8L57.9,225.8L63.1,232.7L65.7,239.4L65.7,246L63.1,252.7L56.3,261.4"/><path class="s1" d="M-2.5,180.4L17.8,194.4L35.8,206.8L48.4,216.3L58.1,225.2L63.2,232.1L65.8,238.8L65.8,245.4L63.2,252.2L56.4,260.8"/><path class="s2" d="M-2.3,179.4L18,193.4L36,205.7L48.7,215.2L58.3,224.1L63.4,231L66,237.7L66,244.4L63.4,251.1L56.6,259.7"/><path class="s3" d="M-2,178.1L18.3,192.1L36.3,204.4L49,213.9L58.6,222.9L63.7,229.7L66.3,236.5L66.3,243.1L63.7,249.8L56.9,258.5"/><path class="s4" d="M-1.7,176.8L18.6,190.7L36.6,203.1L49.3,212.6L58.9,221.5L64,228.4L66.6,235.1L66.6,241.8L64,248.5L57.2,257.1"/><path class="s5" d="M-1.3,175.3L19,189.3L37,201.6L49.6,211.1L59.2,220.1L64.4,226.9L67,233.6L67,240.3L64.4,247L57.6,255.6"/><g filter="url(#fBlur)"><path class="sg" d="M-19.4,-111.8L-13.7,-107.3L-7.9,-102.9L-2,-98.6L3.9,-94.3L9.8,-90.2L15.7,-86.2L21.5,-82.3L27.1,-78.6"/><path class="sh" d="M-13.7,-107.3L-7.9,-102.9L-2,-98.6L3.9,-94.3L9.8,-90.2L15.7,-86.2L21.5,-82.3"/><path class="sw" d="M-7.9,-102.9L-2,-98.6L3.9,-94.3L9.8,-90.2L15.7,-86.2"/><path class="sg" d="M-19.4,-57.8L-13.7,-53.3L-7.9,-48.9L-2,-44.6L3.9,-40.3L9.8,-36.2L15.7,-32.2L21.5,-28.3L27.1,-24.6"/><path class="sh" d="M-13.7,-53.3L-7.9,-48.9L-2,-44.6L3.9,-40.3L9.8,-36.2L15.7,-32.2L21.5,-28.3"/><path class="sw" d="M-7.9,-48.9L-2,-44.6L3.9,-40.3L9.8,-36.2L15.7,-32.2"/><path class="sg" d="M-19.4,-30.8L-13.7,-26.3L-7.9,-21.9L-2,-17.6L3.9,-13.3L9.8,-9.2L15.7,-5.2L21.5,-1.3L27.1,2.4"/><path class="sh" d="M-13.7,-26.3L-7.9,-21.9L-2,-17.6L3.9,-13.3L9.8,-9.2L15.7,-5.2L21.5,-1.3"/><path class="sw" d="M-7.9,-21.9L-2,-17.6L3.9,-13.3L9.8,-9.2L15.7,-5.2"/><path class="sg" d="M-19.4,-3.8L-13.7,0.7L-7.9,5.1L-2,9.4L3.9,13.7L9.8,17.8L15.7,21.8L21.5,25.7L27.1,29.4"/><path class="sh" d="M-13.7,0.7L-7.9,5.1L-2,9.4L3.9,13.7L9.8,17.8L15.7,21.8L21.5,25.7"/><path class="sw" d="M-7.9,5.1L-2,9.4L3.9,13.7L9.8,17.8L15.7,21.8"/><path class="sg" d="M-19.4,23.2L-13.7,27.7L-7.9,32.1L-2,36.4L3.9,40.7L9.8,44.8L15.7,48.8L21.5,52.7L27.1,56.4"/><path class="sh" d="M-13.7,27.7L-7.9,32.1L-2,36.4L3.9,40.7L9.8,44.8L15.7,48.8L21.5,52.7"/><path class="sw" d="M-7.9,32.1L-2,36.4L3.9,40.7L9.8,44.8L15.7,48.8"/><path class="sg" d="M-19.4,77.2L-13.7,81.7L-7.9,86.1L-2,90.4L3.9,94.7L9.8,98.8L15.7,102.8L21.5,106.7L27.1,110.4"/><path class="sh" d="M-13.7,81.7L-7.9,86.1L-2,90.4L3.9,94.7L9.8,98.8L15.7,102.8L21.5,106.7"/><path class="sw" d="M-7.9,86.1L-2,90.4L3.9,94.7L9.8,98.8L15.7,102.8"/><path class="sg" d="M-19.4,104.2L-13.7,108.7L-7.9,113.1L-2,117.4L3.9,121.7L9.8,125.8L15.7,129.8L21.5,133.7L27.1,137.4"/><path class="sh" d="M-13.7,108.7L-7.9,113.1L-2,117.4L3.9,121.7L9.8,125.8L15.7,129.8L21.5,133.7"/><path class="sw" d="M-7.9,113.1L-2,117.4L3.9,121.7L9.8,125.8L15.7,129.8"/><path class="sg" d="M-19.4,131.2L-13.7,135.7L-7.9,140.1L-2,144.4L3.9,148.7L9.8,152.8L15.7,156.8L21.5,160.7L27.1,164.4"/><path class="sh" d="M-13.7,135.7L-7.9,140.1L-2,144.4L3.9,148.7L9.8,152.8L15.7,156.8L21.5,160.7"/><path class="sw" d="M-7.9,140.1L-2,144.4L3.9,148.7L9.8,152.8L15.7,156.8"/><path class="sg" d="M-19.4,158.2L-13.7,162.7L-7.9,167.1L-2,171.4L3.9,175.7L9.8,179.8L15.7,183.8L21.5,187.7L27.1,191.4"/><path class="sh" d="M-13.7,162.7L-7.9,167.1L-2,171.4L3.9,175.7L9.8,179.8L15.7,183.8L21.5,187.7"/><path class="sw" d="M-7.9,167.1L-2,171.4L3.9,175.7L9.8,179.8L15.7,183.8"/></g><g clip-path="url(#cShade)"><path d="M-94,0 A94,24.4 0 0 0 94,0 L94,9 A94,24.4 0 0 1 -94,9 Z" fill="#1d3c5c" opacity="0.55"/><path d="M-94,8 A94,24.4 0 0 0 94,8 L94,15 A94,24.4 0 0 1 -94,15 Z" fill="#1d3c5c" opacity="0.22"/></g></g><path d="M-94.2,0 A94.2,24.4 0 0 0 94.2,0 L88,4.5 A88,23.5 0 0 1 -88,4.5 Z" fill="url(#gCham)"/><polygon points="-81.2,-68.6 -67,-73.6 -67,-44.6 -81.2,-47.4" fill="#3d7eb4"/><polygon points="-67,-73.6 -51.3,-72.5 -51.3,-41.8 -67,-44.6" fill="#4492cc"/><polygon points="-81.2,-68.6 -68,-74.7 -51.3,-73 -51.3,-71.6 -67,-72.5 -80.5,-67.2" fill="#4a9fde"/><polygon points="-36.6,-81.4 -30.8,-83.1 -30.8,-46 -36.6,-47.4" fill="#354e64"/><polygon points="-30.8,-83.1 -8.1,-83.9 -8.1,-44.6 -30.8,-46" fill="#4492cc"/><polygon points="-36.6,-81.4 -31.1,-84.2 -8.1,-85 -8.1,-83.3 -30.8,-82.2" fill="#4a9fde"/><polygon points="17.4,-78.3 38.3,-76.9 38.3,-44.6 17.4,-44.6" fill="url(#gBM3)"/><polygon points="38.3,-76.9 47.3,-80.8 47.3,-46 38.3,-44.6" fill="#4a9fde"/><polygon points="17.4,-78.3 21.6,-81.7 47.3,-80.8 38.3,-76.7" fill="#4a9fde"/><polygon points="57.8,-72.2 70.3,-65.5 70.3,-41.8 57.8,-43.2" fill="#354e64"/><polygon points="70.3,-65.5 84.9,-68.9 84.9,-50.2 70.3,-41.8" fill="#4a9fde"/><polygon points="57.8,-72.2 70.3,-75.5 84.9,-68.9 70.3,-65.2" fill="#4a9fde"/><ellipse cx="0" cy="-22" rx="93.8" ry="21" fill="url(#gBody)"/><ellipse cx="0" cy="-32.2" rx="92" ry="22.3" fill="#4594ce"/><ellipse cx="-0.5" cy="-31" rx="80" ry="18.5" fill="#428dc8"/><ellipse cx="-4.1" cy="-30.1" rx="55" ry="15" fill="#4695d0"/><path d="M-49.3,-39.2 Q-25,-44.1 6.4,-40.9" stroke="#2f5f8a" stroke-width="1.6" stroke-dasharray="3 2 5 3 2 6" fill="none" opacity="0.8"/><path d="M38.6,-36 L46.4,-35.4" stroke="#2b4a66" stroke-width="1.4" fill="none"/><path d="M-58.9,-35.4 L-52.8,-34.3" stroke="#2b4a66" stroke-width="1.2" fill="none"/><polygon points="-95.3,-58.4 -93.5,-63.9 -76.6,-63.7 -76.6,-50.3 -88.8,-47.9 -88.8,-19.5 -95.3,-25.1" fill="#4a9fde"/><polygon points="-93.5,-55.8 -88.9,-55.8 -88.9,-20.4 -93.5,-24.8" fill="#3f86bf"/><polygon points="73.1,-56.5 76.9,-59.9 92,-59.7 92,-20.9 73.1,-20.9" fill="#4a9fde"/><polygon points="78.7,-52.7 89.3,-52.7 89.3,-24.1 78.7,-25.1" fill="#418bc6"/><path d="M-94.9,-24.6 L-94.2,0 A94,24.4 0 0 0 94.2,0 L93.4,-24.6 A94,20 0 0 1 -94.9,-24.6 Z" fill="url(#gBody)"/><polygon points="-51.1,-33.1 -24.1,-37.1 4.6,-37.1 4.6,-3.5 -24.1,-3.8 -51.1,-7.2" fill="url(#gBody)"/><polygon points="-18.9,-21.4 4.6,-17.6 4.6,-9.2 -18.9,-9.6" fill="url(#gNotch)"/><path d="M-18.9,-21.4 Q-11.9,-31.3 4.6,-33.4 L4.6,-17.6 Q-7.6,-16.9 -18.9,-21.4 Z" fill="#4a9fde"/><polygon points="4.2,-44.6 38.3,-42.1 33.4,-36.3 4.2,-36.8" fill="#4a9fde"/><polygon points="4.2,-36.8 33.4,-36.3 33.4,-4.9 4.2,-2.8" fill="#479bd9"/><polygon points="33.4,-15.1 37.2,-14.3 37.2,-10.1 33.4,-10.5" fill="#35648f"/><path d="M4.6,-37.1 L4.6,-3.5" stroke="#3a7db5" stroke-width="0.8" fill="none"/><polygon points="-88.8,-48.8 -73.7,-42 -73.7,-18.6 -88.8,-21.9" fill="#354e64"/><polygon points="-88.8,-49 -76.2,-51.1 -66,-47.4 -51.4,-37.8 -51.4,-7.7 -73.7,-12.8 -73.7,-42" fill="#4798d5"/><polygon points="-88.8,-49 -76.2,-51.1 -66,-47.4 -51.4,-37.8 -73.7,-42" fill="#4a9fde"/><polygon points="48,-41.6 58.5,-39 58.5,-10.2 48,-15.8" fill="#354e64"/><polygon points="48,-41.6 63.4,-46.8 78.1,-45.2 78.1,-8.4 58.5,-10.2 58.5,-39" fill="#4899d7"/><polygon points="48,-41.6 63.4,-46.8 78.1,-45.2 58.5,-39" fill="#4a9fde"/></g>
<g transform="translate(417.9,274.5)"><path d="M-117.5,299 A117.5,30.5 0 0 0 117.5,299 L112.5,305 A112.5,32.5 0 0 1 -112.5,305 Z" fill="url(#gDarkBot)"/><path d="M-115.5,282 A115.5,27.5 0 0 0 115.5,282 L117.5,299 A117.5,30.5 0 0 1 -117.5,299 Z" fill="url(#gTier)"/><path d="M-105.5,248 A105.5,30 0 0 0 105.5,248 L115.5,282 A115.5,27.5 0 0 1 -115.5,282 Z" fill="url(#gTier)"/><path d="M-115.5,282 A115.5,27.5 0 0 0 115.5,282" stroke="#2f6293" stroke-width="1.6" fill="none" opacity="0.7"/><path d="M-115.5,283.6 A115.5,27.5 0 0 0 115.5,283.6" stroke="#58abe8" stroke-width="1.2" fill="none" opacity="0.8"/><path d="M-96,261.4 L-105.1,292.4" stroke="#2c5c8b" stroke-width="1.5" fill="none" opacity="0.85"/><path d="M-94.6,261.4 L-103.7,292.4" stroke="#5aaeea" stroke-width="1" fill="none" opacity="0.7"/><path d="M-57,274.2 L-62.4,304.1" stroke="#2c5c8b" stroke-width="1.5" fill="none" opacity="0.85"/><path d="M-55.6,274.2 L-61,304.1" stroke="#5aaeea" stroke-width="1" fill="none" opacity="0.7"/><path d="M8.5,278.9 L9.3,308.4" stroke="#2c5c8b" stroke-width="1.5" fill="none" opacity="0.85"/><path d="M9.9,278.9 L10.7,308.4" stroke="#5aaeea" stroke-width="1" fill="none" opacity="0.7"/><path d="M66,272.4 L72.3,302.5" stroke="#2c5c8b" stroke-width="1.5" fill="none" opacity="0.85"/><path d="M67.4,272.4 L73.7,302.5" stroke="#5aaeea" stroke-width="1" fill="none" opacity="0.7"/><path d="M98,260.1 L107.3,291.2" stroke="#2c5c8b" stroke-width="1.5" fill="none" opacity="0.85"/><path d="M99.4,260.1 L108.7,291.2" stroke="#5aaeea" stroke-width="1" fill="none" opacity="0.7"/><path d="M-108,293.7 L-109.9,309.8" stroke="#2c5c8b" stroke-width="1.5" fill="none" opacity="0.85"/><path d="M-106.6,293.7 L-108.5,309.8" stroke="#5aaeea" stroke-width="1" fill="none" opacity="0.7"/><path d="M-86,302.4 L-87.5,319.4" stroke="#2c5c8b" stroke-width="1.5" fill="none" opacity="0.85"/><path d="M-84.6,302.4 L-86.1,319.4" stroke="#5aaeea" stroke-width="1" fill="none" opacity="0.7"/><path d="M-25,310.8 L-25.4,328.8" stroke="#2c5c8b" stroke-width="1.5" fill="none" opacity="0.85"/><path d="M-23.6,310.8 L-24,328.8" stroke="#5aaeea" stroke-width="1" fill="none" opacity="0.7"/><path d="M45,309.3 L45.8,327.1" stroke="#2c5c8b" stroke-width="1.5" fill="none" opacity="0.85"/><path d="M46.4,309.3 L47.2,327.1" stroke="#5aaeea" stroke-width="1" fill="none" opacity="0.7"/><path d="M97,298.9 L98.7,315.6" stroke="#2c5c8b" stroke-width="1.5" fill="none" opacity="0.85"/><path d="M98.4,298.9 L100.1,315.6" stroke="#5aaeea" stroke-width="1" fill="none" opacity="0.7"/><ellipse cx="0" cy="248" rx="105.5" ry="30" fill="url(#gLedge)"/><path d="M-94,186.8 A94,27.4 0 0 0 94,186.8 L94,240 A94,32.5 0 0 1 -94,240 Z" fill="url(#gBody)"/><path d="M-94,240 A94,32.5 0 0 0 94,240" stroke="#2c5c8b" stroke-width="1.5" fill="none" opacity="0.5"/><g clip-path="url(#cBase)"><text font-family="Liberation Sans, sans-serif" font-weight="bold" font-size="68" fill="url(#gText)" filter="url(#fEng)"><tspan x="-85.2" y="263" textLength="20.8" lengthAdjust="spacingAndGlyphs">f</tspan><tspan x="-61.4" y="263" textLength="35.7" lengthAdjust="spacingAndGlyphs">o</tspan><tspan x="-28.3" y="266.5" textLength="19.5" lengthAdjust="spacingAndGlyphs">r</tspan><tspan x="-14.6" y="271.5" textLength="70.2" lengthAdjust="spacingAndGlyphs">m</tspan><tspan x="60.2" y="265.3" textLength="12.9" lengthAdjust="spacingAndGlyphs">l</tspan><tspan x="71.9" y="259.5" textLength="32.4" lengthAdjust="spacingAndGlyphs">a</tspan></text></g><ellipse cx="0" cy="188" rx="94" ry="27.4" fill="url(#gTop)"/><polygon points="-84,327 -72,324 -63,317.5 -57,314.5 -51,317.5 -45,324 -40,329 -30,330.5 -23,337 -23,337.6 -32,337 -42,336 -52,334.6 -62,332.9 -72,330.8 -84,327.4" fill="#ffffff"/><g clip-path="url(#cCol)"><rect x="-52" y="0" width="104" height="196" fill="#30689c"/><path class="b0" d="M63.1,-118.3L66,-107.9L62.6,-97.5L53.1,-86.6L38.5,-75L20.2,-62.4L0,-48.5L-20.2,-33.4L-38.5,-17L-53.1,0.3L-62.6,18.5L-66,37L-63.1,55.5"/><path class="b1" d="M62.6,-115.3L65.5,-104.9L62.1,-94.5L52.6,-83.6L38,-72L19.7,-59.4L-0.5,-45.5L-20.7,-30.4L-39,-14L-53.6,3.3L-63.1,21.5L-66.5,40L-63.6,58.5"/><path class="b0" d="M63.1,-91.3L66,-80.9L62.6,-70.5L53.1,-59.6L38.5,-48L20.2,-35.4L0,-21.5L-20.2,-6.4L-38.5,10L-53.1,27.3L-62.6,45.5L-66,64L-63.1,82.5"/><path class="b1" d="M62.6,-88.3L65.5,-77.9L62.1,-67.5L52.6,-56.6L38,-45L19.7,-32.4L-0.5,-18.5L-20.7,-3.4L-39,13L-53.6,30.3L-63.1,48.5L-66.5,67L-63.6,85.5"/><path class="b0" d="M63.1,-64.3L66,-53.9L62.6,-43.5L53.1,-32.6L38.5,-21L20.2,-8.4L0,5.5L-20.2,20.6L-38.5,37L-53.1,54.3L-62.6,72.5L-66,91L-63.1,109.5"/><path class="b1" d="M62.6,-61.3L65.5,-50.9L62.1,-40.5L52.6,-29.6L38,-18L19.7,-5.4L-0.5,8.5L-20.7,23.6L-39,40L-53.6,57.3L-63.1,75.5L-66.5,94L-63.6,112.5"/><path class="b0" d="M63.1,-37.3L66,-26.9L62.6,-16.5L53.1,-5.6L38.5,6L20.2,18.6L0,32.5L-20.2,47.6L-38.5,64L-53.1,81.3L-62.6,99.5L-66,118L-63.1,136.5"/><path class="b1" d="M62.6,-34.3L65.5,-23.9L62.1,-13.5L52.6,-2.6L38,9L19.7,21.6L-0.5,35.5L-20.7,50.6L-39,67L-53.6,84.3L-63.1,102.5L-66.5,121L-63.6,139.5"/><path class="b0" d="M63.1,16.7L66,27.1L62.6,37.5L53.1,48.4L38.5,60L20.2,72.6L0,86.5L-20.2,101.6L-38.5,118L-53.1,135.3L-62.6,153.5L-66,172L-63.1,190.5"/><path class="b1" d="M62.6,19.7L65.5,30.1L62.1,40.5L52.6,51.4L38,63L19.7,75.6L-0.5,89.5L-20.7,104.6L-39,121L-53.6,138.3L-63.1,156.5L-66.5,175L-63.6,193.5"/><path class="b0" d="M63.1,43.7L66,54.1L62.6,64.5L53.1,75.4L38.5,87L20.2,99.6L0,113.5L-20.2,128.6L-38.5,145L-53.1,162.3L-62.6,180.5L-66,199L-63.1,217.5"/><path class="b1" d="M62.6,46.7L65.5,57.1L62.1,67.5L52.6,78.4L38,90L19.7,102.6L-0.5,116.5L-20.7,131.6L-39,148L-53.6,165.3L-63.1,183.5L-66.5,202L-63.6,220.5"/><path class="b0" d="M63.1,70.7L66,81.1L62.6,91.5L53.1,102.4L38.5,114L20.2,126.6L0,140.5L-20.2,155.6L-38.5,172L-53.1,189.3L-62.6,207.5L-66,226L-63.1,244.5"/><path class="b1" d="M62.6,73.7L65.5,84.1L62.1,94.5L52.6,105.4L38,117L19.7,129.6L-0.5,143.5L-20.7,158.6L-39,175L-53.6,192.3L-63.1,210.5L-66.5,229L-63.6,247.5"/><path class="b0" d="M63.1,97.7L66,108.1L62.6,118.5L53.1,129.4L38.5,141L20.2,153.6L0,167.5L-20.2,182.6L-38.5,199L-53.1,216.3L-62.6,234.5L-66,253L-63.1,271.5"/><path class="b1" d="M62.6,100.7L65.5,111.1L62.1,121.5L52.6,132.4L38,144L19.7,156.6L-0.5,170.5L-20.7,185.6L-39,202L-53.6,219.3L-63.1,237.5L-66.5,256L-63.6,274.5"/><path class="b0" d="M63.1,151.7L66,162.1L62.6,172.5L53.1,183.4L38.5,195L20.2,207.6L0,221.5L-20.2,236.6L-38.5,253L-53.1,270.3L-62.6,288.5L-66,307L-63.1,325.5"/><path class="b1" d="M62.6,154.7L65.5,165.1L62.1,175.5L52.6,186.4L38,198L19.7,210.6L-0.5,224.5L-20.7,239.6L-39,256L-53.6,273.3L-63.1,291.5L-66.5,310L-63.6,328.5"/><path class="b0" d="M63.1,178.7L66,189.1L62.6,199.5L53.1,210.4L38.5,222L20.2,234.6L0,248.5L-20.2,263.6L-38.5,280L-53.1,297.3L-62.6,315.5L-66,334L-63.1,352.5"/><path class="b1" d="M62.6,181.7L65.5,192.1L62.1,202.5L52.6,213.4L38,225L19.7,237.6L-0.5,251.5L-20.7,266.6L-39,283L-53.6,300.3L-63.1,318.5L-66.5,337L-63.6,355.5"/><path class="b0" d="M63.1,205.7L66,216.1L62.6,226.5L53.1,237.4L38.5,249L20.2,261.6L0,275.5L-20.2,290.6L-38.5,307L-53.1,324.3L-62.6,342.5L-66,361L-63.1,379.5"/><path class="b1" d="M62.6,208.7L65.5,219.1L62.1,229.5L52.6,240.4L38,252L19.7,264.6L-0.5,278.5L-20.7,293.6L-39,310L-53.6,327.3L-63.1,345.5L-66.5,364L-63.6,382.5"/><path class="c0" d="M0.3,20L-4.3,24L-8,28L-9.9,32L-9.3,36L-6.3,40L-2,44L2.3,48L5.3,52L5.9,56L4,60L0.3,64L-4.3,68L-8,72L-9.9,76L-9.3,80L-6.3,84L-2,88L2.3,92L5.3,96L5.9,100L4,104L0.3,108L-4.3,112L-8,116L-9.9,120L-9.3,124L-6.3,128L-2,132L2.3,136L5.3,140L5.9,144L4,148L0.3,152L-4.3,156L-8,160L-9.9,164L-9.3,168L-6.3,172L-2,176L2.3,180L5.3,184L5.9,188"/><path class="c1" d="M0.3,20L-4.3,24L-8,28L-9.9,32L-9.3,36L-6.3,40L-2,44L2.3,48L5.3,52L5.9,56L4,60L0.3,64L-4.3,68L-8,72L-9.9,76L-9.3,80L-6.3,84L-2,88L2.3,92L5.3,96L5.9,100L4,104L0.3,108L-4.3,112L-8,116L-9.9,120L-9.3,124L-6.3,128L-2,132L2.3,136L5.3,140L5.9,144L4,148L0.3,152L-4.3,156L-8,160L-9.9,164L-9.3,168L-6.3,172L-2,176L2.3,180L5.3,184L5.9,188"/><path class="c0" d="M-4.3,20L0.3,24L4,28L5.9,32L5.3,36L2.3,40L-2,44L-6.3,48L-9.3,52L-9.9,56L-8,60L-4.3,64L0.3,68L4,72L5.9,76L5.3,80L2.3,84L-2,88L-6.3,92L-9.3,96L-9.9,100L-8,104L-4.3,108L0.3,112L4,116L5.9,120L5.3,124L2.3,128L-2,132L-6.3,136L-9.3,140L-9.9,144L-8,148L-4.3,152L0.3,156L4,160L5.9,164L5.3,168L2.3,172L-2,176L-6.3,180L-9.3,184L-9.9,188"/><path class="c1" d="M-4.3,20L0.3,24L4,28L5.9,32L5.3,36L2.3,40L-2,44L-6.3,48L-9.3,52L-9.9,56L-8,60L-4.3,64L0.3,68L4,72L5.9,76L5.3,80L2.3,84L-2,88L-6.3,92L-9.3,96L-9.9,100L-8,104L-4.3,108L0.3,112L4,116L5.9,120L5.3,124L2.3,128L-2,132L-6.3,136L-9.3,140L-9.9,144L-8,148L-4.3,152L0.3,156L4,160L5.9,164L5.3,168L2.3,172L-2,176L-6.3,180L-9.3,184L-9.9,188"/><path class="s0" d="M-56.3,172.2L-63.1,186.9L-65.7,198.7L-65.7,210.7L-63.1,222.5L-57.9,234.3L-48.3,248.6L-35.7,262.3L-17.7,277.8L2.6,292.7"/><path class="s1" d="M-56.1,171.7L-62.9,186.3L-65.5,198.2L-65.5,210.1L-62.9,222L-57.8,233.7L-48.2,248L-35.5,261.7L-17.5,277.3L2.8,292.2"/><path class="s2" d="M-55.9,170.6L-62.7,185.2L-65.3,197.1L-65.3,209L-62.7,220.9L-57.5,232.6L-47.9,246.9L-35.3,260.6L-17.3,276.2L3,291.1"/><path class="s3" d="M-55.6,169.3L-62.4,183.9L-65,195.8L-65,207.8L-62.4,219.6L-57.3,231.4L-47.6,245.6L-35,259.4L-17,274.9L3.3,289.8"/><path class="s4" d="M-55.3,168L-62.1,182.6L-64.7,194.5L-64.7,206.4L-62.1,218.3L-57,230L-47.3,244.3L-34.7,258L-16.7,273.6L3.6,288.5"/><path class="s5" d="M-55,166.5L-61.8,181.1L-64.4,193L-64.4,204.9L-61.8,216.8L-56.6,228.5L-47,242.8L-34.4,256.6L-16.4,272.1L3.9,287"/><path class="s0" d="M-56.3,145.2L-63.1,159.9L-65.7,171.7L-65.7,183.7L-63.1,195.5L-57.9,207.3L-48.3,221.6L-35.7,235.3L-17.7,250.8L2.6,265.7"/><path class="s1" d="M-56.1,144.7L-62.9,159.3L-65.5,171.2L-65.5,183.1L-62.9,195L-57.8,206.7L-48.2,221L-35.5,234.7L-17.5,250.3L2.8,265.2"/><path class="s2" d="M-55.9,143.6L-62.7,158.2L-65.3,170.1L-65.3,182L-62.7,193.9L-57.5,205.6L-47.9,219.9L-35.3,233.6L-17.3,249.2L3,264.1"/><path class="s3" d="M-55.6,142.3L-62.4,156.9L-65,168.8L-65,180.8L-62.4,192.6L-57.3,204.4L-47.6,218.6L-35,232.4L-17,247.9L3.3,262.8"/><path class="s4" d="M-55.3,141L-62.1,155.6L-64.7,167.5L-64.7,179.4L-62.1,191.3L-57,203L-47.3,217.3L-34.7,231L-16.7,246.6L3.6,261.5"/><path class="s5" d="M-55,139.5L-61.8,154.1L-64.4,166L-64.4,177.9L-61.8,189.8L-56.6,201.5L-47,215.8L-34.4,229.6L-16.4,245.1L3.9,260"/><path class="s0" d="M-56.3,118.2L-63.1,132.9L-65.7,144.7L-65.7,156.7L-63.1,168.5L-57.9,180.3L-48.3,194.6L-35.7,208.3L-17.7,223.8L2.6,238.7"/><path class="s1" d="M-56.1,117.7L-62.9,132.3L-65.5,144.2L-65.5,156.1L-62.9,168L-57.8,179.7L-48.2,194L-35.5,207.7L-17.5,223.3L2.8,238.2"/><path class="s2" d="M-55.9,116.6L-62.7,131.2L-65.3,143.1L-65.3,155L-62.7,166.9L-57.5,178.6L-47.9,192.9L-35.3,206.6L-17.3,222.2L3,237.1"/><path class="s3" d="M-55.6,115.3L-62.4,129.9L-65,141.8L-65,153.8L-62.4,165.6L-57.3,177.4L-47.6,191.6L-35,205.4L-17,220.9L3.3,235.8"/><path class="s4" d="M-55.3,114L-62.1,128.6L-64.7,140.5L-64.7,152.4L-62.1,164.3L-57,176L-47.3,190.3L-34.7,204L-16.7,219.6L3.6,234.5"/><path class="s5" d="M-55,112.5L-61.8,127.1L-64.4,139L-64.4,150.9L-61.8,162.8L-56.6,174.5L-47,188.8L-34.4,202.6L-16.4,218.1L3.9,233"/><path class="s0" d="M-56.3,64.2L-63.1,78.9L-65.7,90.7L-65.7,102.7L-63.1,114.5L-57.9,126.3L-48.3,140.6L-35.7,154.3L-17.7,169.8L2.6,184.7"/><path class="s1" d="M-56.1,63.7L-62.9,78.3L-65.5,90.2L-65.5,102.1L-62.9,114L-57.8,125.7L-48.2,140L-35.5,153.7L-17.5,169.3L2.8,184.2"/><path class="s2" d="M-55.9,62.6L-62.7,77.2L-65.3,89.1L-65.3,101L-62.7,112.9L-57.5,124.6L-47.9,138.9L-35.3,152.6L-17.3,168.2L3,183.1"/><path class="s3" d="M-55.6,61.3L-62.4,75.9L-65,87.8L-65,99.8L-62.4,111.6L-57.3,123.4L-47.6,137.6L-35,151.4L-17,166.9L3.3,181.8"/><path class="s4" d="M-55.3,60L-62.1,74.6L-64.7,86.5L-64.7,98.4L-62.1,110.3L-57,122L-47.3,136.3L-34.7,150L-16.7,165.6L3.6,180.5"/><path class="s5" d="M-55,58.5L-61.8,73.1L-64.4,85L-64.4,96.9L-61.8,108.8L-56.6,120.5L-47,134.8L-34.4,148.6L-16.4,164.1L3.9,179"/><path class="s0" d="M-56.3,37.2L-63.1,51.9L-65.7,63.7L-65.7,75.7L-63.1,87.5L-57.9,99.3L-48.3,113.6L-35.7,127.3L-17.7,142.8L2.6,157.7"/><path class="s1" d="M-56.1,36.7L-62.9,51.3L-65.5,63.2L-65.5,75.1L-62.9,87L-57.8,98.7L-48.2,113L-35.5,126.7L-17.5,142.3L2.8,157.2"/><path class="s2" d="M-55.9,35.6L-62.7,50.2L-65.3,62.1L-65.3,74L-62.7,85.9L-57.5,97.6L-47.9,111.9L-35.3,125.6L-17.3,141.2L3,156.1"/><path class="s3" d="M-55.6,34.3L-62.4,48.9L-65,60.8L-65,72.8L-62.4,84.6L-57.3,96.4L-47.6,110.6L-35,124.4L-17,139.9L3.3,154.8"/><path class="s4" d="M-55.3,33L-62.1,47.6L-64.7,59.5L-64.7,71.4L-62.1,83.3L-57,95L-47.3,109.3L-34.7,123L-16.7,138.6L3.6,153.5"/><path class="s5" d="M-55,31.5L-61.8,46.1L-64.4,58L-64.4,69.9L-61.8,81.8L-56.6,93.5L-47,107.8L-34.4,121.6L-16.4,137.1L3.9,152"/><path class="s0" d="M-56.3,10.2L-63.1,24.9L-65.7,36.7L-65.7,48.7L-63.1,60.5L-57.9,72.3L-48.3,86.6L-35.7,100.3L-17.7,115.8L2.6,130.7"/><path class="s1" d="M-56.1,9.7L-62.9,24.3L-65.5,36.2L-65.5,48.1L-62.9,60L-57.8,71.7L-48.2,86L-35.5,99.7L-17.5,115.3L2.8,130.2"/><path class="s2" d="M-55.9,8.6L-62.7,23.2L-65.3,35.1L-65.3,47L-62.7,58.9L-57.5,70.6L-47.9,84.9L-35.3,98.6L-17.3,114.2L3,129.1"/><path class="s3" d="M-55.6,7.3L-62.4,21.9L-65,33.8L-65,45.8L-62.4,57.6L-57.3,69.4L-47.6,83.6L-35,97.4L-17,112.9L3.3,127.8"/><path class="s4" d="M-55.3,6L-62.1,20.6L-64.7,32.5L-64.7,44.4L-62.1,56.3L-57,68L-47.3,82.3L-34.7,96L-16.7,111.6L3.6,126.5"/><path class="s5" d="M-55,4.5L-61.8,19.1L-64.4,31L-64.4,42.9L-61.8,54.8L-56.6,66.5L-47,80.8L-34.4,94.6L-16.4,110.1L3.9,125"/><path class="s0" d="M-56.3,-16.8L-63.1,-2.1L-65.7,9.7L-65.7,21.7L-63.1,33.5L-57.9,45.3L-48.3,59.6L-35.7,73.3L-17.7,88.8L2.6,103.7"/><path class="s1" d="M-56.1,-17.3L-62.9,-2.7L-65.5,9.2L-65.5,21.1L-62.9,33L-57.8,44.7L-48.2,59L-35.5,72.7L-17.5,88.3L2.8,103.2"/><path class="s2" d="M-55.9,-18.4L-62.7,-3.8L-65.3,8.1L-65.3,20L-62.7,31.9L-57.5,43.6L-47.9,57.9L-35.3,71.6L-17.3,87.2L3,102.1"/><path class="s3" d="M-55.6,-19.7L-62.4,-5.1L-65,6.8L-65,18.8L-62.4,30.6L-57.3,42.4L-47.6,56.6L-35,70.4L-17,85.9L3.3,100.8"/><path class="s4" d="M-55.3,-21L-62.1,-6.4L-64.7,5.5L-64.7,17.4L-62.1,29.3L-57,41L-47.3,55.3L-34.7,69L-16.7,84.6L3.6,99.5"/><path class="s5" d="M-55,-22.5L-61.8,-7.9L-64.4,4L-64.4,15.9L-61.8,27.8L-56.6,39.5L-47,53.8L-34.4,67.6L-16.4,83.1L3.9,98"/><path class="s0" d="M-56.3,-70.8L-63.1,-56.1L-65.7,-44.3L-65.7,-32.3L-63.1,-20.5L-57.9,-8.7L-48.3,5.6L-35.7,19.3L-17.7,34.8L2.6,49.7"/><path class="s1" d="M-56.1,-71.3L-62.9,-56.7L-65.5,-44.8L-65.5,-32.9L-62.9,-21L-57.8,-9.3L-48.2,5L-35.5,18.7L-17.5,34.3L2.8,49.2"/><path class="s2" d="M-55.9,-72.4L-62.7,-57.8L-65.3,-45.9L-65.3,-34L-62.7,-22.1L-57.5,-10.4L-47.9,3.9L-35.3,17.6L-17.3,33.2L3,48.1"/><path class="s3" d="M-55.6,-73.7L-62.4,-59.1L-65,-47.2L-65,-35.2L-62.4,-23.4L-57.3,-11.6L-47.6,2.6L-35,16.4L-17,31.9L3.3,46.8"/><path class="s4" d="M-55.3,-75L-62.1,-60.4L-64.7,-48.5L-64.7,-36.6L-62.1,-24.7L-57,-13L-47.3,1.3L-34.7,15L-16.7,30.6L3.6,45.5"/><path class="s5" d="M-55,-76.5L-61.8,-61.9L-64.4,-50L-64.4,-38.1L-61.8,-26.2L-56.6,-14.5L-47,-0.2L-34.4,13.6L-16.4,29.1L3.9,44"/><path class="s0" d="M-56.3,-97.8L-63.1,-83.1L-65.7,-71.3L-65.7,-59.3L-63.1,-47.5L-57.9,-35.7L-48.3,-21.4L-35.7,-7.7L-17.7,7.8L2.6,22.7"/><path class="s1" d="M-56.1,-98.3L-62.9,-83.7L-65.5,-71.8L-65.5,-59.9L-62.9,-48L-57.8,-36.3L-48.2,-22L-35.5,-8.3L-17.5,7.3L2.8,22.2"/><path class="s2" d="M-55.9,-99.4L-62.7,-84.8L-65.3,-72.9L-65.3,-61L-62.7,-49.1L-57.5,-37.4L-47.9,-23.1L-35.3,-9.4L-17.3,6.2L3,21.1"/><path class="s3" d="M-55.6,-100.7L-62.4,-86.1L-65,-74.2L-65,-62.2L-62.4,-50.4L-57.3,-38.6L-47.6,-24.4L-35,-10.6L-17,4.9L3.3,19.8"/><path class="s4" d="M-55.3,-102L-62.1,-87.4L-64.7,-75.5L-64.7,-63.6L-62.1,-51.7L-57,-40L-47.3,-25.7L-34.7,-12L-16.7,3.6L3.6,18.5"/><path class="s5" d="M-55,-103.5L-61.8,-88.9L-64.4,-77L-64.4,-65.1L-61.8,-53.2L-56.6,-41.5L-47,-27.2L-34.4,-13.4L-16.4,2.1L3.9,17"/><path class="s0" d="M-56.3,-124.8L-63.1,-110.1L-65.7,-98.3L-65.7,-86.3L-63.1,-74.5L-57.9,-62.7L-48.3,-48.4L-35.7,-34.7L-17.7,-19.2L2.6,-4.3"/><path class="s1" d="M-56.1,-125.3L-62.9,-110.7L-65.5,-98.8L-65.5,-86.9L-62.9,-75L-57.8,-63.3L-48.2,-49L-35.5,-35.3L-17.5,-19.7L2.8,-4.8"/><path class="s2" d="M-55.9,-126.4L-62.7,-111.8L-65.3,-99.9L-65.3,-88L-62.7,-76.1L-57.5,-64.4L-47.9,-50.1L-35.3,-36.4L-17.3,-20.8L3,-5.9"/><path class="s3" d="M-55.6,-127.7L-62.4,-113.1L-65,-101.2L-65,-89.2L-62.4,-77.4L-57.3,-65.6L-47.6,-51.4L-35,-37.6L-17,-22.1L3.3,-7.2"/><path class="s4" d="M-55.3,-129L-62.1,-114.4L-64.7,-102.5L-64.7,-90.6L-62.1,-78.7L-57,-67L-47.3,-52.7L-34.7,-39L-16.7,-23.4L3.6,-8.5"/><path class="s5" d="M-55,-130.5L-61.8,-115.9L-64.4,-104L-64.4,-92.1L-61.8,-80.2L-56.6,-68.5L-47,-54.2L-34.4,-40.4L-16.4,-24.9L3.9,-10"/><path class="s0" d="M-2.6,-89L17.7,-75L35.7,-62.7L48.3,-53.2L57.9,-44.2L63.1,-37.3L65.7,-30.6L65.7,-24L63.1,-17.3L56.3,-8.6"/><path class="s1" d="M-2.5,-89.6L17.8,-75.6L35.8,-63.2L48.4,-53.7L58.1,-44.8L63.2,-37.9L65.8,-31.2L65.8,-24.6L63.2,-17.8L56.4,-9.2"/><path class="s2" d="M-2.3,-90.6L18,-76.6L36,-64.3L48.7,-54.8L58.3,-45.9L63.4,-39L66,-32.3L66,-25.6L63.4,-18.9L56.6,-10.3"/><path class="s3" d="M-2,-91.9L18.3,-77.9L36.3,-65.6L49,-56.1L58.6,-47.1L63.7,-40.3L66.3,-33.5L66.3,-26.9L63.7,-20.2L56.9,-11.5"/><path class="s4" d="M-1.7,-93.2L18.6,-79.3L36.6,-66.9L49.3,-57.4L58.9,-48.5L64,-41.6L66.6,-34.9L66.6,-28.2L64,-21.5L57.2,-12.9"/><path class="s5" d="M-1.3,-94.7L19,-80.7L37,-68.4L49.6,-58.9L59.2,-49.9L64.4,-43.1L67,-36.4L67,-29.7L64.4,-23L57.6,-14.4"/><path class="s0" d="M-2.6,-35L17.7,-21L35.7,-8.7L48.3,0.8L57.9,9.8L63.1,16.7L65.7,23.4L65.7,30L63.1,36.7L56.3,45.4"/><path class="s1" d="M-2.5,-35.6L17.8,-21.6L35.8,-9.2L48.4,0.3L58.1,9.2L63.2,16.1L65.8,22.8L65.8,29.4L63.2,36.2L56.4,44.8"/><path class="s2" d="M-2.3,-36.6L18,-22.6L36,-10.3L48.7,-0.8L58.3,8.1L63.4,15L66,21.7L66,28.4L63.4,35.1L56.6,43.7"/><path class="s3" d="M-2,-37.9L18.3,-23.9L36.3,-11.6L49,-2.1L58.6,6.9L63.7,13.7L66.3,20.5L66.3,27.1L63.7,33.8L56.9,42.5"/><path class="s4" d="M-1.7,-39.2L18.6,-25.3L36.6,-12.9L49.3,-3.4L58.9,5.5L64,12.4L66.6,19.1L66.6,25.8L64,32.5L57.2,41.1"/><path class="s5" d="M-1.3,-40.7L19,-26.7L37,-14.4L49.6,-4.9L59.2,4.1L64.4,10.9L67,17.6L67,24.3L64.4,31L57.6,39.6"/><path class="s0" d="M-2.6,-8L17.7,6L35.7,18.3L48.3,27.8L57.9,36.8L63.1,43.7L65.7,50.4L65.7,57L63.1,63.7L56.3,72.4"/><path class="s1" d="M-2.5,-8.6L17.8,5.4L35.8,17.8L48.4,27.3L58.1,36.2L63.2,43.1L65.8,49.8L65.8,56.4L63.2,63.2L56.4,71.8"/><path class="s2" d="M-2.3,-9.6L18,4.4L36,16.7L48.7,26.2L58.3,35.1L63.4,42L66,48.7L66,55.4L63.4,62.1L56.6,70.7"/><path class="s3" d="M-2,-10.9L18.3,3.1L36.3,15.4L49,24.9L58.6,33.9L63.7,40.7L66.3,47.5L66.3,54.1L63.7,60.8L56.9,69.5"/><path class="s4" d="M-1.7,-12.2L18.6,1.7L36.6,14.1L49.3,23.6L58.9,32.5L64,39.4L66.6,46.1L66.6,52.8L64,59.5L57.2,68.1"/><path class="s5" d="M-1.3,-13.7L19,0.3L37,12.6L49.6,22.1L59.2,31.1L64.4,37.9L67,44.6L67,51.3L64.4,58L57.6,66.6"/><path class="s0" d="M-2.6,19L17.7,33L35.7,45.3L48.3,54.8L57.9,63.8L63.1,70.7L65.7,77.4L65.7,84L63.1,90.7L56.3,99.4"/><path class="s1" d="M-2.5,18.4L17.8,32.4L35.8,44.8L48.4,54.3L58.1,63.2L63.2,70.1L65.8,76.8L65.8,83.4L63.2,90.2L56.4,98.8"/><path class="s2" d="M-2.3,17.4L18,31.4L36,43.7L48.7,53.2L58.3,62.1L63.4,69L66,75.7L66,82.4L63.4,89.1L56.6,97.7"/><path class="s3" d="M-2,16.1L18.3,30.1L36.3,42.4L49,51.9L58.6,60.9L63.7,67.7L66.3,74.5L66.3,81.1L63.7,87.8L56.9,96.5"/><path class="s4" d="M-1.7,14.8L18.6,28.7L36.6,41.1L49.3,50.6L58.9,59.5L64,66.4L66.6,73.1L66.6,79.8L64,86.5L57.2,95.1"/><path class="s5" d="M-1.3,13.3L19,27.3L37,39.6L49.6,49.1L59.2,58.1L64.4,64.9L67,71.6L67,78.3L64.4,85L57.6,93.6"/><path class="s0" d="M-2.6,46L17.7,60L35.7,72.3L48.3,81.8L57.9,90.8L63.1,97.7L65.7,104.4L65.7,111L63.1,117.7L56.3,126.4"/><path class="s1" d="M-2.5,45.4L17.8,59.4L35.8,71.8L48.4,81.3L58.1,90.2L63.2,97.1L65.8,103.8L65.8,110.4L63.2,117.2L56.4,125.8"/><path class="s2" d="M-2.3,44.4L18,58.4L36,70.7L48.7,80.2L58.3,89.1L63.4,96L66,102.7L66,109.4L63.4,116.1L56.6,124.7"/><path class="s3" d="M-2,43.1L18.3,57.1L36.3,69.4L49,78.9L58.6,87.9L63.7,94.7L66.3,101.5L66.3,108.1L63.7,114.8L56.9,123.5"/><path class="s4" d="M-1.7,41.8L18.6,55.7L36.6,68.1L49.3,77.6L58.9,86.5L64,93.4L66.6,100.1L66.6,106.8L64,113.5L57.2,122.1"/><path class="s5" d="M-1.3,40.3L19,54.3L37,66.6L49.6,76.1L59.2,85.1L64.4,91.9L67,98.6L67,105.3L64.4,112L57.6,120.6"/><path class="s0" d="M-2.6,100L17.7,114L35.7,126.3L48.3,135.8L57.9,144.8L63.1,151.7L65.7,158.4L65.7,165L63.1,171.7L56.3,180.4"/><path class="s1" d="M-2.5,99.4L17.8,113.4L35.8,125.8L48.4,135.3L58.1,144.2L63.2,151.1L65.8,157.8L65.8,164.4L63.2,171.2L56.4,179.8"/><path class="s2" d="M-2.3,98.4L18,112.4L36,124.7L48.7,134.2L58.3,143.1L63.4,150L66,156.7L66,163.4L63.4,170.1L56.6,178.7"/><path class="s3" d="M-2,97.1L18.3,111.1L36.3,123.4L49,132.9L58.6,141.9L63.7,148.7L66.3,155.5L66.3,162.1L63.7,168.8L56.9,177.5"/><path class="s4" d="M-1.7,95.8L18.6,109.7L36.6,122.1L49.3,131.6L58.9,140.5L64,147.4L66.6,154.1L66.6,160.8L64,167.5L57.2,176.1"/><path class="s5" d="M-1.3,94.3L19,108.3L37,120.6L49.6,130.1L59.2,139.1L64.4,145.9L67,152.6L67,159.3L64.4,166L57.6,174.6"/><path class="s0" d="M-2.6,127L17.7,141L35.7,153.3L48.3,162.8L57.9,171.8L63.1,178.7L65.7,185.4L65.7,192L63.1,198.7L56.3,207.4"/><path class="s1" d="M-2.5,126.4L17.8,140.4L35.8,152.8L48.4,162.3L58.1,171.2L63.2,178.1L65.8,184.8L65.8,191.4L63.2,198.2L56.4,206.8"/><path class="s2" d="M-2.3,125.4L18,139.4L36,151.7L48.7,161.2L58.3,170.1L63.4,177L66,183.7L66,190.4L63.4,197.1L56.6,205.7"/><path class="s3" d="M-2,124.1L18.3,138.1L36.3,150.4L49,159.9L58.6,168.9L63.7,175.7L66.3,182.5L66.3,189.1L63.7,195.8L56.9,204.5"/><path class="s4" d="M-1.7,122.8L18.6,136.7L36.6,149.1L49.3,158.6L58.9,167.5L64,174.4L66.6,181.1L66.6,187.8L64,194.5L57.2,203.1"/><path class="s5" d="M-1.3,121.3L19,135.3L37,147.6L49.6,157.1L59.2,166.1L64.4,172.9L67,179.6L67,186.3L64.4,193L57.6,201.6"/><path class="s0" d="M-2.6,154L17.7,168L35.7,180.3L48.3,189.8L57.9,198.8L63.1,205.7L65.7,212.4L65.7,219L63.1,225.7L56.3,234.4"/><path class="s1" d="M-2.5,153.4L17.8,167.4L35.8,179.8L48.4,189.3L58.1,198.2L63.2,205.1L65.8,211.8L65.8,218.4L63.2,225.2L56.4,233.8"/><path class="s2" d="M-2.3,152.4L18,166.4L36,178.7L48.7,188.2L58.3,197.1L63.4,204L66,210.7L66,217.4L63.4,224.1L56.6,232.7"/><path class="s3" d="M-2,151.1L18.3,165.1L36.3,177.4L49,186.9L58.6,195.9L63.7,202.7L66.3,209.5L66.3,216.1L63.7,222.8L56.9,231.5"/><path class="s4" d="M-1.7,149.8L18.6,163.7L36.6,176.1L49.3,185.6L58.9,194.5L64,201.4L66.6,208.1L66.6,214.8L64,221.5L57.2,230.1"/><path class="s5" d="M-1.3,148.3L19,162.3L37,174.6L49.6,184.1L59.2,193.1L64.4,199.9L67,206.6L67,213.3L64.4,220L57.6,228.6"/><path class="s0" d="M-2.6,181L17.7,195L35.7,207.3L48.3,216.8L57.9,225.8L63.1,232.7L65.7,239.4L65.7,246L63.1,252.7L56.3,261.4"/><path class="s1" d="M-2.5,180.4L17.8,194.4L35.8,206.8L48.4,216.3L58.1,225.2L63.2,232.1L65.8,238.8L65.8,245.4L63.2,252.2L56.4,260.8"/><path class="s2" d="M-2.3,179.4L18,193.4L36,205.7L48.7,215.2L58.3,224.1L63.4,231L66,237.7L66,244.4L63.4,251.1L56.6,259.7"/><path class="s3" d="M-2,178.1L18.3,192.1L36.3,204.4L49,213.9L58.6,222.9L63.7,229.7L66.3,236.5L66.3,243.1L63.7,249.8L56.9,258.5"/><path class="s4" d="M-1.7,176.8L18.6,190.7L36.6,203.1L49.3,212.6L58.9,221.5L64,228.4L66.6,235.1L66.6,241.8L64,248.5L57.2,257.1"/><path class="s5" d="M-1.3,175.3L19,189.3L37,201.6L49.6,211.1L59.2,220.1L64.4,226.9L67,233.6L67,240.3L64.4,247L57.6,255.6"/><g filter="url(#fBlur)"><path class="sg" d="M-19.4,-111.8L-13.7,-107.3L-7.9,-102.9L-2,-98.6L3.9,-94.3L9.8,-90.2L15.7,-86.2L21.5,-82.3L27.1,-78.6"/><path class="sh" d="M-13.7,-107.3L-7.9,-102.9L-2,-98.6L3.9,-94.3L9.8,-90.2L15.7,-86.2L21.5,-82.3"/><path class="sw" d="M-7.9,-102.9L-2,-98.6L3.9,-94.3L9.8,-90.2L15.7,-86.2"/><path class="sg" d="M-19.4,-57.8L-13.7,-53.3L-7.9,-48.9L-2,-44.6L3.9,-40.3L9.8,-36.2L15.7,-32.2L21.5,-28.3L27.1,-24.6"/><path class="sh" d="M-13.7,-53.3L-7.9,-48.9L-2,-44.6L3.9,-40.3L9.8,-36.2L15.7,-32.2L21.5,-28.3"/><path class="sw" d="M-7.9,-48.9L-2,-44.6L3.9,-40.3L9.8,-36.2L15.7,-32.2"/><path class="sg" d="M-19.4,-30.8L-13.7,-26.3L-7.9,-21.9L-2,-17.6L3.9,-13.3L9.8,-9.2L15.7,-5.2L21.5,-1.3L27.1,2.4"/><path class="sh" d="M-13.7,-26.3L-7.9,-21.9L-2,-17.6L3.9,-13.3L9.8,-9.2L15.7,-5.2L21.5,-1.3"/><path class="sw" d="M-7.9,-21.9L-2,-17.6L3.9,-13.3L9.8,-9.2L15.7,-5.2"/><path class="sg" d="M-19.4,-3.8L-13.7,0.7L-7.9,5.1L-2,9.4L3.9,13.7L9.8,17.8L15.7,21.8L21.5,25.7L27.1,29.4"/><path class="sh" d="M-13.7,0.7L-7.9,5.1L-2,9.4L3.9,13.7L9.8,17.8L15.7,21.8L21.5,25.7"/><path class="sw" d="M-7.9,5.1L-2,9.4L3.9,13.7L9.8,17.8L15.7,21.8"/><path class="sg" d="M-19.4,23.2L-13.7,27.7L-7.9,32.1L-2,36.4L3.9,40.7L9.8,44.8L15.7,48.8L21.5,52.7L27.1,56.4"/><path class="sh" d="M-13.7,27.7L-7.9,32.1L-2,36.4L3.9,40.7L9.8,44.8L15.7,48.8L21.5,52.7"/><path class="sw" d="M-7.9,32.1L-2,36.4L3.9,40.7L9.8,44.8L15.7,48.8"/><path class="sg" d="M-19.4,77.2L-13.7,81.7L-7.9,86.1L-2,90.4L3.9,94.7L9.8,98.8L15.7,102.8L21.5,106.7L27.1,110.4"/><path class="sh" d="M-13.7,81.7L-7.9,86.1L-2,90.4L3.9,94.7L9.8,98.8L15.7,102.8L21.5,106.7"/><path class="sw" d="M-7.9,86.1L-2,90.4L3.9,94.7L9.8,98.8L15.7,102.8"/><path class="sg" d="M-19.4,104.2L-13.7,108.7L-7.9,113.1L-2,117.4L3.9,121.7L9.8,125.8L15.7,129.8L21.5,133.7L27.1,137.4"/><path class="sh" d="M-13.7,108.7L-7.9,113.1L-2,117.4L3.9,121.7L9.8,125.8L15.7,129.8L21.5,133.7"/><path class="sw" d="M-7.9,113.1L-2,117.4L3.9,121.7L9.8,125.8L15.7,129.8"/><path class="sg" d="M-19.4,131.2L-13.7,135.7L-7.9,140.1L-2,144.4L3.9,148.7L9.8,152.8L15.7,156.8L21.5,160.7L27.1,164.4"/><path class="sh" d="M-13.7,135.7L-7.9,140.1L-2,144.4L3.9,148.7L9.8,152.8L15.7,156.8L21.5,160.7"/><path class="sw" d="M-7.9,140.1L-2,144.4L3.9,148.7L9.8,152.8L15.7,156.8"/><path class="sg" d="M-19.4,158.2L-13.7,162.7L-7.9,167.1L-2,171.4L3.9,175.7L9.8,179.8L15.7,183.8L21.5,187.7L27.1,191.4"/><path class="sh" d="M-13.7,162.7L-7.9,167.1L-2,171.4L3.9,175.7L9.8,179.8L15.7,183.8L21.5,187.7"/><path class="sw" d="M-7.9,167.1L-2,171.4L3.9,175.7L9.8,179.8L15.7,183.8"/></g><g clip-path="url(#cShade)"><path d="M-94,0 A94,24.4 0 0 0 94,0 L94,9 A94,24.4 0 0 1 -94,9 Z" fill="#1d3c5c" opacity="0.55"/><path d="M-94,8 A94,24.4 0 0 0 94,8 L94,15 A94,24.4 0 0 1 -94,15 Z" fill="#1d3c5c" opacity="0.22"/></g></g><path d="M-94.2,0 A94.2,24.4 0 0 0 94.2,0 L88,4.5 A88,23.5 0 0 1 -88,4.5 Z" fill="url(#gCham)"/><polygon points="-81.2,-68.6 -67,-73.6 -67,-44.6 -81.2,-47.4" fill="#3d7eb4"/><polygon points="-67,-73.6 -51.3,-72.5 -51.3,-41.8 -67,-44.6" fill="#4492cc"/><polygon points="-81.2,-68.6 -68,-74.7 -51.3,-73 -51.3,-71.6 -67,-72.5 -80.5,-67.2" fill="#4a9fde"/><polygon points="-36.6,-81.4 -30.8,-83.1 -30.8,-46 -36.6,-47.4" fill="#354e64"/><polygon points="-30.8,-83.1 -8.1,-83.9 -8.1,-44.6 -30.8,-46" fill="#4492cc"/><polygon points="-36.6,-81.4 -31.1,-84.2 -8.1,-85 -8.1,-83.3 -30.8,-82.2" fill="#4a9fde"/><polygon points="17.4,-78.3 38.3,-76.9 38.3,-44.6 17.4,-44.6" fill="url(#gBM3)"/><polygon points="38.3,-76.9 47.3,-80.8 47.3,-46 38.3,-44.6" fill="#4a9fde"/><polygon points="17.4,-78.3 21.6,-81.7 47.3,-80.8 38.3,-76.7" fill="#4a9fde"/><polygon points="57.8,-72.2 70.3,-65.5 70.3,-41.8 57.8,-43.2" fill="#354e64"/><polygon points="70.3,-65.5 84.9,-68.9 84.9,-50.2 70.3,-41.8" fill="#4a9fde"/><polygon points="57.8,-72.2 70.3,-75.5 84.9,-68.9 70.3,-65.2" fill="#4a9fde"/><ellipse cx="0" cy="-22" rx="93.8" ry="21" fill="url(#gBody)"/><ellipse cx="0" cy="-32.2" rx="92" ry="22.3" fill="#4594ce"/><ellipse cx="-0.5" cy="-31" rx="80" ry="18.5" fill="#428dc8"/><ellipse cx="-4.1" cy="-30.1" rx="55" ry="15" fill="#4695d0"/><path d="M-49.3,-39.2 Q-25,-44.1 6.4,-40.9" stroke="#2f5f8a" stroke-width="1.6" stroke-dasharray="3 2 5 3 2 6" fill="none" opacity="0.8"/><path d="M38.6,-36 L46.4,-35.4" stroke="#2b4a66" stroke-width="1.4" fill="none"/><path d="M-58.9,-35.4 L-52.8,-34.3" stroke="#2b4a66" stroke-width="1.2" fill="none"/><polygon points="-95.3,-58.4 -93.5,-63.9 -76.6,-63.7 -76.6,-50.3 -88.8,-47.9 -88.8,-19.5 -95.3,-25.1" fill="#4a9fde"/><polygon points="-93.5,-55.8 -88.9,-55.8 -88.9,-20.4 -93.5,-24.8" fill="#3f86bf"/><polygon points="73.1,-56.5 76.9,-59.9 92,-59.7 92,-20.9 73.1,-20.9" fill="#4a9fde"/><polygon points="78.7,-52.7 89.3,-52.7 89.3,-24.1 78.7,-25.1" fill="#418bc6"/><path d="M-94.9,-24.6 L-94.2,0 A94,24.4 0 0 0 94.2,0 L93.4,-24.6 A94,20 0 0 1 -94.9,-24.6 Z" fill="url(#gBody)"/><polygon points="-51.1,-33.1 -24.1,-37.1 4.6,-37.1 4.6,-3.5 -24.1,-3.8 -51.1,-7.2" fill="url(#gBody)"/><polygon points="-18.9,-21.4 4.6,-17.6 4.6,-9.2 -18.9,-9.6" fill="url(#gNotch)"/><path d="M-18.9,-21.4 Q-11.9,-31.3 4.6,-33.4 L4.6,-17.6 Q-7.6,-16.9 -18.9,-21.4 Z" fill="#4a9fde"/><polygon points="4.2,-44.6 38.3,-42.1 33.4,-36.3 4.2,-36.8" fill="#4a9fde"/><polygon points="4.2,-36.8 33.4,-36.3 33.4,-4.9 4.2,-2.8" fill="#479bd9"/><polygon points="33.4,-15.1 37.2,-14.3 37.2,-10.1 33.4,-10.5" fill="#35648f"/><path d="M4.6,-37.1 L4.6,-3.5" stroke="#3a7db5" stroke-width="0.8" fill="none"/><polygon points="-88.8,-48.8 -73.7,-42 -73.7,-18.6 -88.8,-21.9" fill="#354e64"/><polygon points="-88.8,-49 -76.2,-51.1 -66,-47.4 -51.4,-37.8 -51.4,-7.7 -73.7,-12.8 -73.7,-42" fill="#4798d5"/><polygon points="-88.8,-49 -76.2,-51.1 -66,-47.4 -51.4,-37.8 -73.7,-42" fill="#4a9fde"/><polygon points="48,-41.6 58.5,-39 58.5,-10.2 48,-15.8" fill="#354e64"/><polygon points="48,-41.6 63.4,-46.8 78.1,-45.2 78.1,-8.4 58.5,-10.2 58.5,-39" fill="#4899d7"/><polygon points="48,-41.6 63.4,-46.8 78.1,-45.2 58.5,-39" fill="#4a9fde"/></g>
<g transform="translate(1092.3,292.5)"><path d="M-117.5,299 A117.5,30.5 0 0 0 117.5,299 L112.5,305 A112.5,32.5 0 0 1 -112.5,305 Z" fill="url(#gDarkBot)"/><path d="M-115.5,282 A115.5,27.5 0 0 0 115.5,282 L117.5,299 A117.5,30.5 0 0 1 -117.5,299 Z" fill="url(#gTier)"/><path d="M-105.5,248 A105.5,30 0 0 0 105.5,248 L115.5,282 A115.5,27.5 0 0 1 -115.5,282 Z" fill="url(#gTier)"/><path d="M-115.5,282 A115.5,27.5 0 0 0 115.5,282" stroke="#2f6293" stroke-width="1.6" fill="none" opacity="0.7"/><path d="M-115.5,283.6 A115.5,27.5 0 0 0 115.5,283.6" stroke="#58abe8" stroke-width="1.2" fill="none" opacity="0.8"/><path d="M-96,261.4 L-105.1,292.4" stroke="#2c5c8b" stroke-width="1.5" fill="none" opacity="0.85"/><path d="M-94.6,261.4 L-103.7,292.4" stroke="#5aaeea" stroke-width="1" fill="none" opacity="0.7"/><path d="M-57,274.2 L-62.4,304.1" stroke="#2c5c8b" stroke-width="1.5" fill="none" opacity="0.85"/><path d="M-55.6,274.2 L-61,304.1" stroke="#5aaeea" stroke-width="1" fill="none" opacity="0.7"/><path d="M8.5,278.9 L9.3,308.4" stroke="#2c5c8b" stroke-width="1.5" fill="none" opacity="0.85"/><path d="M9.9,278.9 L10.7,308.4" stroke="#5aaeea" stroke-width="1" fill="none" opacity="0.7"/><path d="M66,272.4 L72.3,302.5" stroke="#2c5c8b" stroke-width="1.5" fill="none" opacity="0.85"/><path d="M67.4,272.4 L73.7,302.5" stroke="#5aaeea" stroke-width="1" fill="none" opacity="0.7"/><path d="M98,260.1 L107.3,291.2" stroke="#2c5c8b" stroke-width="1.5" fill="none" opacity="0.85"/><path d="M99.4,260.1 L108.7,291.2" stroke="#5aaeea" stroke-width="1" fill="none" opacity="0.7"/><path d="M-108,293.7 L-109.9,309.8" stroke="#2c5c8b" stroke-width="1.5" fill="none" opacity="0.85"/><path d="M-106.6,293.7 L-108.5,309.8" stroke="#5aaeea" stroke-width="1" fill="none" opacity="0.7"/><path d="M-86,302.4 L-87.5,319.4" stroke="#2c5c8b" stroke-width="1.5" fill="none" opacity="0.85"/><path d="M-84.6,302.4 L-86.1,319.4" stroke="#5aaeea" stroke-width="1" fill="none" opacity="0.7"/><path d="M-25,310.8 L-25.4,328.8" stroke="#2c5c8b" stroke-width="1.5" fill="none" opacity="0.85"/><path d="M-23.6,310.8 L-24,328.8" stroke="#5aaeea" stroke-width="1" fill="none" opacity="0.7"/><path d="M45,309.3 L45.8,327.1" stroke="#2c5c8b" stroke-width="1.5" fill="none" opacity="0.85"/><path d="M46.4,309.3 L47.2,327.1" stroke="#5aaeea" stroke-width="1" fill="none" opacity="0.7"/><path d="M97,298.9 L98.7,315.6" stroke="#2c5c8b" stroke-width="1.5" fill="none" opacity="0.85"/><path d="M98.4,298.9 L100.1,315.6" stroke="#5aaeea" stroke-width="1" fill="none" opacity="0.7"/><ellipse cx="0" cy="248" rx="105.5" ry="30" fill="url(#gLedge)"/><path d="M-94,186.8 A94,27.4 0 0 0 94,186.8 L94,240 A94,32.5 0 0 1 -94,240 Z" fill="url(#gBody)"/><path d="M-94,240 A94,32.5 0 0 0 94,240" stroke="#2c5c8b" stroke-width="1.5" fill="none" opacity="0.5"/><g clip-path="url(#cBase)"><text font-family="Liberation Sans, sans-serif" font-weight="bold" font-size="68" fill="url(#gText)" filter="url(#fEng)"><tspan x="-85.2" y="263" textLength="20.8" lengthAdjust="spacingAndGlyphs">f</tspan><tspan x="-61.4" y="263" textLength="35.7" lengthAdjust="spacingAndGlyphs">o</tspan><tspan x="-28.3" y="266.5" textLength="19.5" lengthAdjust="spacingAndGlyphs">r</tspan><tspan x="-14.6" y="271.5" textLength="70.2" lengthAdjust="spacingAndGlyphs">m</tspan><tspan x="60.2" y="265.3" textLength="12.9" lengthAdjust="spacingAndGlyphs">l</tspan><tspan x="71.9" y="259.5" textLength="32.4" lengthAdjust="spacingAndGlyphs">a</tspan></text></g><ellipse cx="0" cy="188" rx="94" ry="27.4" fill="url(#gTop)"/><polygon points="-84,327 -72,324 -63,317.5 -57,314.5 -51,317.5 -45,324 -40,329 -30,330.5 -23,337 -23,337.6 -32,337 -42,336 -52,334.6 -62,332.9 -72,330.8 -84,327.4" fill="#ffffff"/><g clip-path="url(#cCol)"><rect x="-52" y="0" width="104" height="196" fill="#30689c"/><path class="b0" d="M63.1,-118.3L66,-107.9L62.6,-97.5L53.1,-86.6L38.5,-75L20.2,-62.4L0,-48.5L-20.2,-33.4L-38.5,-17L-53.1,0.3L-62.6,18.5L-66,37L-63.1,55.5"/><path class="b1" d="M62.6,-115.3L65.5,-104.9L62.1,-94.5L52.6,-83.6L38,-72L19.7,-59.4L-0.5,-45.5L-20.7,-30.4L-39,-14L-53.6,3.3L-63.1,21.5L-66.5,40L-63.6,58.5"/><path class="b0" d="M63.1,-91.3L66,-80.9L62.6,-70.5L53.1,-59.6L38.5,-48L20.2,-35.4L0,-21.5L-20.2,-6.4L-38.5,10L-53.1,27.3L-62.6,45.5L-66,64L-63.1,82.5"/><path class="b1" d="M62.6,-88.3L65.5,-77.9L62.1,-67.5L52.6,-56.6L38,-45L19.7,-32.4L-0.5,-18.5L-20.7,-3.4L-39,13L-53.6,30.3L-63.1,48.5L-66.5,67L-63.6,85.5"/><path class="b0" d="M63.1,-64.3L66,-53.9L62.6,-43.5L53.1,-32.6L38.5,-21L20.2,-8.4L0,5.5L-20.2,20.6L-38.5,37L-53.1,54.3L-62.6,72.5L-66,91L-63.1,109.5"/><path class="b1" d="M62.6,-61.3L65.5,-50.9L62.1,-40.5L52.6,-29.6L38,-18L19.7,-5.4L-0.5,8.5L-20.7,23.6L-39,40L-53.6,57.3L-63.1,75.5L-66.5,94L-63.6,112.5"/><path class="b0" d="M63.1,-37.3L66,-26.9L62.6,-16.5L53.1,-5.6L38.5,6L20.2,18.6L0,32.5L-20.2,47.6L-38.5,64L-53.1,81.3L-62.6,99.5L-66,118L-63.1,136.5"/><path class="b1" d="M62.6,-34.3L65.5,-23.9L62.1,-13.5L52.6,-2.6L38,9L19.7,21.6L-0.5,35.5L-20.7,50.6L-39,67L-53.6,84.3L-63.1,102.5L-66.5,121L-63.6,139.5"/><path class="b0" d="M63.1,16.7L66,27.1L62.6,37.5L53.1,48.4L38.5,60L20.2,72.6L0,86.5L-20.2,101.6L-38.5,118L-53.1,135.3L-62.6,153.5L-66,172L-63.1,190.5"/><path class="b1" d="M62.6,19.7L65.5,30.1L62.1,40.5L52.6,51.4L38,63L19.7,75.6L-0.5,89.5L-20.7,104.6L-39,121L-53.6,138.3L-63.1,156.5L-66.5,175L-63.6,193.5"/><path class="b0" d="M63.1,43.7L66,54.1L62.6,64.5L53.1,75.4L38.5,87L20.2,99.6L0,113.5L-20.2,128.6L-38.5,145L-53.1,162.3L-62.6,180.5L-66,199L-63.1,217.5"/><path class="b1" d="M62.6,46.7L65.5,57.1L62.1,67.5L52.6,78.4L38,90L19.7,102.6L-0.5,116.5L-20.7,131.6L-39,148L-53.6,165.3L-63.1,183.5L-66.5,202L-63.6,220.5"/><path class="b0" d="M63.1,70.7L66,81.1L62.6,91.5L53.1,102.4L38.5,114L20.2,126.6L0,140.5L-20.2,155.6L-38.5,172L-53.1,189.3L-62.6,207.5L-66,226L-63.1,244.5"/><path class="b1" d="M62.6,73.7L65.5,84.1L62.1,94.5L52.6,105.4L38,117L19.7,129.6L-0.5,143.5L-20.7,158.6L-39,175L-53.6,192.3L-63.1,210.5L-66.5,229L-63.6,247.5"/><path class="b0" d="M63.1,97.7L66,108.1L62.6,118.5L53.1,129.4L38.5,141L20.2,153.6L0,167.5L-20.2,182.6L-38.5,199L-53.1,216.3L-62.6,234.5L-66,253L-63.1,271.5"/><path class="b1" d="M62.6,100.7L65.5,111.1L62.1,121.5L52.6,132.4L38,144L19.7,156.6L-0.5,170.5L-20.7,185.6L-39,202L-53.6,219.3L-63.1,237.5L-66.5,256L-63.6,274.5"/><path class="b0" d="M63.1,151.7L66,162.1L62.6,172.5L53.1,183.4L38.5,195L20.2,207.6L0,221.5L-20.2,236.6L-38.5,253L-53.1,270.3L-62.6,288.5L-66,307L-63.1,325.5"/><path class="b1" d="M62.6,154.7L65.5,165.1L62.1,175.5L52.6,186.4L38,198L19.7,210.6L-0.5,224.5L-20.7,239.6L-39,256L-53.6,273.3L-63.1,291.5L-66.5,310L-63.6,328.5"/><path class="b0" d="M63.1,178.7L66,189.1L62.6,199.5L53.1,210.4L38.5,222L20.2,234.6L0,248.5L-20.2,263.6L-38.5,280L-53.1,297.3L-62.6,315.5L-66,334L-63.1,352.5"/><path class="b1" d="M62.6,181.7L65.5,192.1L62.1,202.5L52.6,213.4L38,225L19.7,237.6L-0.5,251.5L-20.7,266.6L-39,283L-53.6,300.3L-63.1,318.5L-66.5,337L-63.6,355.5"/><path class="b0" d="M63.1,205.7L66,216.1L62.6,226.5L53.1,237.4L38.5,249L20.2,261.6L0,275.5L-20.2,290.6L-38.5,307L-53.1,324.3L-62.6,342.5L-66,361L-63.1,379.5"/><path class="b1" d="M62.6,208.7L65.5,219.1L62.1,229.5L52.6,240.4L38,252L19.7,264.6L-0.5,278.5L-20.7,293.6L-39,310L-53.6,327.3L-63.1,345.5L-66.5,364L-63.6,382.5"/><path class="c0" d="M0.3,20L-4.3,24L-8,28L-9.9,32L-9.3,36L-6.3,40L-2,44L2.3,48L5.3,52L5.9,56L4,60L0.3,64L-4.3,68L-8,72L-9.9,76L-9.3,80L-6.3,84L-2,88L2.3,92L5.3,96L5.9,100L4,104L0.3,108L-4.3,112L-8,116L-9.9,120L-9.3,124L-6.3,128L-2,132L2.3,136L5.3,140L5.9,144L4,148L0.3,152L-4.3,156L-8,160L-9.9,164L-9.3,168L-6.3,172L-2,176L2.3,180L5.3,184L5.9,188"/><path class="c1" d="M0.3,20L-4.3,24L-8,28L-9.9,32L-9.3,36L-6.3,40L-2,44L2.3,48L5.3,52L5.9,56L4,60L0.3,64L-4.3,68L-8,72L-9.9,76L-9.3,80L-6.3,84L-2,88L2.3,92L5.3,96L5.9,100L4,104L0.3,108L-4.3,112L-8,116L-9.9,120L-9.3,124L-6.3,128L-2,132L2.3,136L5.3,140L5.9,144L4,148L0.3,152L-4.3,156L-8,160L-9.9,164L-9.3,168L-6.3,172L-2,176L2.3,180L5.3,184L5.9,188"/><path class="c0" d="M-4.3,20L0.3,24L4,28L5.9,32L5.3,36L2.3,40L-2,44L-6.3,48L-9.3,52L-9.9,56L-8,60L-4.3,64L0.3,68L4,72L5.9,76L5.3,80L2.3,84L-2,88L-6.3,92L-9.3,96L-9.9,100L-8,104L-4.3,108L0.3,112L4,116L5.9,120L5.3,124L2.3,128L-2,132L-6.3,136L-9.3,140L-9.9,144L-8,148L-4.3,152L0.3,156L4,160L5.9,164L5.3,168L2.3,172L-2,176L-6.3,180L-9.3,184L-9.9,188"/><path class="c1" d="M-4.3,20L0.3,24L4,28L5.9,32L5.3,36L2.3,40L-2,44L-6.3,48L-9.3,52L-9.9,56L-8,60L-4.3,64L0.3,68L4,72L5.9,76L5.3,80L2.3,84L-2,88L-6.3,92L-9.3,96L-9.9,100L-8,104L-4.3,108L0.3,112L4,116L5.9,120L5.3,124L2.3,128L-2,132L-6.3,136L-9.3,140L-9.9,144L-8,148L-4.3,152L0.3,156L4,160L5.9,164L5.3,168L2.3,172L-2,176L-6.3,180L-9.3,184L-9.9,188"/><path class="s0" d="M-56.3,172.2L-63.1,186.9L-65.7,198.7L-65.7,210.7L-63.1,222.5L-57.9,234.3L-48.3,248.6L-35.7,262.3L-17.7,277.8L2.6,292.7"/><path class="s1" d="M-56.1,171.7L-62.9,186.3L-65.5,198.2L-65.5,210.1L-62.9,222L-57.8,233.7L-48.2,248L-35.5,261.7L-17.5,277.3L2.8,292.2"/><path class="s2" d="M-55.9,170.6L-62.7,185.2L-65.3,197.1L-65.3,209L-62.7,220.9L-57.5,232.6L-47.9,246.9L-35.3,260.6L-17.3,276.2L3,291.1"/><path class="s3" d="M-55.6,169.3L-62.4,183.9L-65,195.8L-65,207.8L-62.4,219.6L-57.3,231.4L-47.6,245.6L-35,259.4L-17,274.9L3.3,289.8"/><path class="s4" d="M-55.3,168L-62.1,182.6L-64.7,194.5L-64.7,206.4L-62.1,218.3L-57,230L-47.3,244.3L-34.7,258L-16.7,273.6L3.6,288.5"/><path class="s5" d="M-55,166.5L-61.8,181.1L-64.4,193L-64.4,204.9L-61.8,216.8L-56.6,228.5L-47,242.8L-34.4,256.6L-16.4,272.1L3.9,287"/><path class="s0" d="M-56.3,145.2L-63.1,159.9L-65.7,171.7L-65.7,183.7L-63.1,195.5L-57.9,207.3L-48.3,221.6L-35.7,235.3L-17.7,250.8L2.6,265.7"/><path class="s1" d="M-56.1,144.7L-62.9,159.3L-65.5,171.2L-65.5,183.1L-62.9,195L-57.8,206.7L-48.2,221L-35.5,234.7L-17.5,250.3L2.8,265.2"/><path class="s2" d="M-55.9,143.6L-62.7,158.2L-65.3,170.1L-65.3,182L-62.7,193.9L-57.5,205.6L-47.9,219.9L-35.3,233.6L-17.3,249.2L3,264.1"/><path class="s3" d="M-55.6,142.3L-62.4,156.9L-65,168.8L-65,180.8L-62.4,192.6L-57.3,204.4L-47.6,218.6L-35,232.4L-17,247.9L3.3,262.8"/><path class="s4" d="M-55.3,141L-62.1,155.6L-64.7,167.5L-64.7,179.4L-62.1,191.3L-57,203L-47.3,217.3L-34.7,231L-16.7,246.6L3.6,261.5"/><path class="s5" d="M-55,139.5L-61.8,154.1L-64.4,166L-64.4,177.9L-61.8,189.8L-56.6,201.5L-47,215.8L-34.4,229.6L-16.4,245.1L3.9,260"/><path class="s0" d="M-56.3,118.2L-63.1,132.9L-65.7,144.7L-65.7,156.7L-63.1,168.5L-57.9,180.3L-48.3,194.6L-35.7,208.3L-17.7,223.8L2.6,238.7"/><path class="s1" d="M-56.1,117.7L-62.9,132.3L-65.5,144.2L-65.5,156.1L-62.9,168L-57.8,179.7L-48.2,194L-35.5,207.7L-17.5,223.3L2.8,238.2"/><path class="s2" d="M-55.9,116.6L-62.7,131.2L-65.3,143.1L-65.3,155L-62.7,166.9L-57.5,178.6L-47.9,192.9L-35.3,206.6L-17.3,222.2L3,237.1"/><path class="s3" d="M-55.6,115.3L-62.4,129.9L-65,141.8L-65,153.8L-62.4,165.6L-57.3,177.4L-47.6,191.6L-35,205.4L-17,220.9L3.3,235.8"/><path class="s4" d="M-55.3,114L-62.1,128.6L-64.7,140.5L-64.7,152.4L-62.1,164.3L-57,176L-47.3,190.3L-34.7,204L-16.7,219.6L3.6,234.5"/><path class="s5" d="M-55,112.5L-61.8,127.1L-64.4,139L-64.4,150.9L-61.8,162.8L-56.6,174.5L-47,188.8L-34.4,202.6L-16.4,218.1L3.9,233"/><path class="s0" d="M-56.3,64.2L-63.1,78.9L-65.7,90.7L-65.7,102.7L-63.1,114.5L-57.9,126.3L-48.3,140.6L-35.7,154.3L-17.7,169.8L2.6,184.7"/><path class="s1" d="M-56.1,63.7L-62.9,78.3L-65.5,90.2L-65.5,102.1L-62.9,114L-57.8,125.7L-48.2,140L-35.5,153.7L-17.5,169.3L2.8,184.2"/><path class="s2" d="M-55.9,62.6L-62.7,77.2L-65.3,89.1L-65.3,101L-62.7,112.9L-57.5,124.6L-47.9,138.9L-35.3,152.6L-17.3,168.2L3,183.1"/><path class="s3" d="M-55.6,61.3L-62.4,75.9L-65,87.8L-65,99.8L-62.4,111.6L-57.3,123.4L-47.6,137.6L-35,151.4L-17,166.9L3.3,181.8"/><path class="s4" d="M-55.3,60L-62.1,74.6L-64.7,86.5L-64.7,98.4L-62.1,110.3L-57,122L-47.3,136.3L-34.7,150L-16.7,165.6L3.6,180.5"/><path class="s5" d="M-55,58.5L-61.8,73.1L-64.4,85L-64.4,96.9L-61.8,108.8L-56.6,120.5L-47,134.8L-34.4,148.6L-16.4,164.1L3.9,179"/><path class="s0" d="M-56.3,37.2L-63.1,51.9L-65.7,63.7L-65.7,75.7L-63.1,87.5L-57.9,99.3L-48.3,113.6L-35.7,127.3L-17.7,142.8L2.6,157.7"/><path class="s1" d="M-56.1,36.7L-62.9,51.3L-65.5,63.2L-65.5,75.1L-62.9,87L-57.8,98.7L-48.2,113L-35.5,126.7L-17.5,142.3L2.8,157.2"/><path class="s2" d="M-55.9,35.6L-62.7,50.2L-65.3,62.1L-65.3,74L-62.7,85.9L-57.5,97.6L-47.9,111.9L-35.3,125.6L-17.3,141.2L3,156.1"/><path class="s3" d="M-55.6,34.3L-62.4,48.9L-65,60.8L-65,72.8L-62.4,84.6L-57.3,96.4L-47.6,110.6L-35,124.4L-17,139.9L3.3,154.8"/><path class="s4" d="M-55.3,33L-62.1,47.6L-64.7,59.5L-64.7,71.4L-62.1,83.3L-57,95L-47.3,109.3L-34.7,123L-16.7,138.6L3.6,153.5"/><path class="s5" d="M-55,31.5L-61.8,46.1L-64.4,58L-64.4,69.9L-61.8,81.8L-56.6,93.5L-47,107.8L-34.4,121.6L-16.4,137.1L3.9,152"/><path class="s0" d="M-56.3,10.2L-63.1,24.9L-65.7,36.7L-65.7,48.7L-63.1,60.5L-57.9,72.3L-48.3,86.6L-35.7,100.3L-17.7,115.8L2.6,130.7"/><path class="s1" d="M-56.1,9.7L-62.9,24.3L-65.5,36.2L-65.5,48.1L-62.9,60L-57.8,71.7L-48.2,86L-35.5,99.7L-17.5,115.3L2.8,130.2"/><path class="s2" d="M-55.9,8.6L-62.7,23.2L-65.3,35.1L-65.3,47L-62.7,58.9L-57.5,70.6L-47.9,84.9L-35.3,98.6L-17.3,114.2L3,129.1"/><path class="s3" d="M-55.6,7.3L-62.4,21.9L-65,33.8L-65,45.8L-62.4,57.6L-57.3,69.4L-47.6,83.6L-35,97.4L-17,112.9L3.3,127.8"/><path class="s4" d="M-55.3,6L-62.1,20.6L-64.7,32.5L-64.7,44.4L-62.1,56.3L-57,68L-47.3,82.3L-34.7,96L-16.7,111.6L3.6,126.5"/><path class="s5" d="M-55,4.5L-61.8,19.1L-64.4,31L-64.4,42.9L-61.8,54.8L-56.6,66.5L-47,80.8L-34.4,94.6L-16.4,110.1L3.9,125"/><path class="s0" d="M-56.3,-16.8L-63.1,-2.1L-65.7,9.7L-65.7,21.7L-63.1,33.5L-57.9,45.3L-48.3,59.6L-35.7,73.3L-17.7,88.8L2.6,103.7"/><path class="s1" d="M-56.1,-17.3L-62.9,-2.7L-65.5,9.2L-65.5,21.1L-62.9,33L-57.8,44.7L-48.2,59L-35.5,72.7L-17.5,88.3L2.8,103.2"/><path class="s2" d="M-55.9,-18.4L-62.7,-3.8L-65.3,8.1L-65.3,20L-62.7,31.9L-57.5,43.6L-47.9,57.9L-35.3,71.6L-17.3,87.2L3,102.1"/><path class="s3" d="M-55.6,-19.7L-62.4,-5.1L-65,6.8L-65,18.8L-62.4,30.6L-57.3,42.4L-47.6,56.6L-35,70.4L-17,85.9L3.3,100.8"/><path class="s4" d="M-55.3,-21L-62.1,-6.4L-64.7,5.5L-64.7,17.4L-62.1,29.3L-57,41L-47.3,55.3L-34.7,69L-16.7,84.6L3.6,99.5"/><path class="s5" d="M-55,-22.5L-61.8,-7.9L-64.4,4L-64.4,15.9L-61.8,27.8L-56.6,39.5L-47,53.8L-34.4,67.6L-16.4,83.1L3.9,98"/><path class="s0" d="M-56.3,-70.8L-63.1,-56.1L-65.7,-44.3L-65.7,-32.3L-63.1,-20.5L-57.9,-8.7L-48.3,5.6L-35.7,19.3L-17.7,34.8L2.6,49.7"/><path class="s1" d="M-56.1,-71.3L-62.9,-56.7L-65.5,-44.8L-65.5,-32.9L-62.9,-21L-57.8,-9.3L-48.2,5L-35.5,18.7L-17.5,34.3L2.8,49.2"/><path class="s2" d="M-55.9,-72.4L-62.7,-57.8L-65.3,-45.9L-65.3,-34L-62.7,-22.1L-57.5,-10.4L-47.9,3.9L-35.3,17.6L-17.3,33.2L3,48.1"/><path class="s3" d="M-55.6,-73.7L-62.4,-59.1L-65,-47.2L-65,-35.2L-62.4,-23.4L-57.3,-11.6L-47.6,2.6L-35,16.4L-17,31.9L3.3,46.8"/><path class="s4" d="M-55.3,-75L-62.1,-60.4L-64.7,-48.5L-64.7,-36.6L-62.1,-24.7L-57,-13L-47.3,1.3L-34.7,15L-16.7,30.6L3.6,45.5"/><path class="s5" d="M-55,-76.5L-61.8,-61.9L-64.4,-50L-64.4,-38.1L-61.8,-26.2L-56.6,-14.5L-47,-0.2L-34.4,13.6L-16.4,29.1L3.9,44"/><path class="s0" d="M-56.3,-97.8L-63.1,-83.1L-65.7,-71.3L-65.7,-59.3L-63.1,-47.5L-57.9,-35.7L-48.3,-21.4L-35.7,-7.7L-17.7,7.8L2.6,22.7"/><path class="s1" d="M-56.1,-98.3L-62.9,-83.7L-65.5,-71.8L-65.5,-59.9L-62.9,-48L-57.8,-36.3L-48.2,-22L-35.5,-8.3L-17.5,7.3L2.8,22.2"/><path class="s2" d="M-55.9,-99.4L-62.7,-84.8L-65.3,-72.9L-65.3,-61L-62.7,-49.1L-57.5,-37.4L-47.9,-23.1L-35.3,-9.4L-17.3,6.2L3,21.1"/><path class="s3" d="M-55.6,-100.7L-62.4,-86.1L-65,-74.2L-65,-62.2L-62.4,-50.4L-57.3,-38.6L-47.6,-24.4L-35,-10.6L-17,4.9L3.3,19.8"/><path class="s4" d="M-55.3,-102L-62.1,-87.4L-64.7,-75.5L-64.7,-63.6L-62.1,-51.7L-57,-40L-47.3,-25.7L-34.7,-12L-16.7,3.6L3.6,18.5"/><path class="s5" d="M-55,-103.5L-61.8,-88.9L-64.4,-77L-64.4,-65.1L-61.8,-53.2L-56.6,-41.5L-47,-27.2L-34.4,-13.4L-16.4,2.1L3.9,17"/><path class="s0" d="M-56.3,-124.8L-63.1,-110.1L-65.7,-98.3L-65.7,-86.3L-63.1,-74.5L-57.9,-62.7L-48.3,-48.4L-35.7,-34.7L-17.7,-19.2L2.6,-4.3"/><path class="s1" d="M-56.1,-125.3L-62.9,-110.7L-65.5,-98.8L-65.5,-86.9L-62.9,-75L-57.8,-63.3L-48.2,-49L-35.5,-35.3L-17.5,-19.7L2.8,-4.8"/><path class="s2" d="M-55.9,-126.4L-62.7,-111.8L-65.3,-99.9L-65.3,-88L-62.7,-76.1L-57.5,-64.4L-47.9,-50.1L-35.3,-36.4L-17.3,-20.8L3,-5.9"/><path class="s3" d="M-55.6,-127.7L-62.4,-113.1L-65,-101.2L-65,-89.2L-62.4,-77.4L-57.3,-65.6L-47.6,-51.4L-35,-37.6L-17,-22.1L3.3,-7.2"/><path class="s4" d="M-55.3,-129L-62.1,-114.4L-64.7,-102.5L-64.7,-90.6L-62.1,-78.7L-57,-67L-47.3,-52.7L-34.7,-39L-16.7,-23.4L3.6,-8.5"/><path class="s5" d="M-55,-130.5L-61.8,-115.9L-64.4,-104L-64.4,-92.1L-61.8,-80.2L-56.6,-68.5L-47,-54.2L-34.4,-40.4L-16.4,-24.9L3.9,-10"/><path class="s0" d="M-2.6,-89L17.7,-75L35.7,-62.7L48.3,-53.2L57.9,-44.2L63.1,-37.3L65.7,-30.6L65.7,-24L63.1,-17.3L56.3,-8.6"/><path class="s1" d="M-2.5,-89.6L17.8,-75.6L35.8,-63.2L48.4,-53.7L58.1,-44.8L63.2,-37.9L65.8,-31.2L65.8,-24.6L63.2,-17.8L56.4,-9.2"/><path class="s2" d="M-2.3,-90.6L18,-76.6L36,-64.3L48.7,-54.8L58.3,-45.9L63.4,-39L66,-32.3L66,-25.6L63.4,-18.9L56.6,-10.3"/><path class="s3" d="M-2,-91.9L18.3,-77.9L36.3,-65.6L49,-56.1L58.6,-47.1L63.7,-40.3L66.3,-33.5L66.3,-26.9L63.7,-20.2L56.9,-11.5"/><path class="s4" d="M-1.7,-93.2L18.6,-79.3L36.6,-66.9L49.3,-57.4L58.9,-48.5L64,-41.6L66.6,-34.9L66.6,-28.2L64,-21.5L57.2,-12.9"/><path class="s5" d="M-1.3,-94.7L19,-80.7L37,-68.4L49.6,-58.9L59.2,-49.9L64.4,-43.1L67,-36.4L67,-29.7L64.4,-23L57.6,-14.4"/><path class="s0" d="M-2.6,-35L17.7,-21L35.7,-8.7L48.3,0.8L57.9,9.8L63.1,16.7L65.7,23.4L65.7,30L63.1,36.7L56.3,45.4"/><path class="s1" d="M-2.5,-35.6L17.8,-21.6L35.8,-9.2L48.4,0.3L58.1,9.2L63.2,16.1L65.8,22.8L65.8,29.4L63.2,36.2L56.4,44.8"/><path class="s2" d="M-2.3,-36.6L18,-22.6L36,-10.3L48.7,-0.8L58.3,8.1L63.4,15L66,21.7L66,28.4L63.4,35.1L56.6,43.7"/><path class="s3" d="M-2,-37.9L18.3,-23.9L36.3,-11.6L49,-2.1L58.6,6.9L63.7,13.7L66.3,20.5L66.3,27.1L63.7,33.8L56.9,42.5"/><path class="s4" d="M-1.7,-39.2L18.6,-25.3L36.6,-12.9L49.3,-3.4L58.9,5.5L64,12.4L66.6,19.1L66.6,25.8L64,32.5L57.2,41.1"/><path class="s5" d="M-1.3,-40.7L19,-26.7L37,-14.4L49.6,-4.9L59.2,4.1L64.4,10.9L67,17.6L67,24.3L64.4,31L57.6,39.6"/><path class="s0" d="M-2.6,-8L17.7,6L35.7,18.3L48.3,27.8L57.9,36.8L63.1,43.7L65.7,50.4L65.7,57L63.1,63.7L56.3,72.4"/><path class="s1" d="M-2.5,-8.6L17.8,5.4L35.8,17.8L48.4,27.3L58.1,36.2L63.2,43.1L65.8,49.8L65.8,56.4L63.2,63.2L56.4,71.8"/><path class="s2" d="M-2.3,-9.6L18,4.4L36,16.7L48.7,26.2L58.3,35.1L63.4,42L66,48.7L66,55.4L63.4,62.1L56.6,70.7"/><path class="s3" d="M-2,-10.9L18.3,3.1L36.3,15.4L49,24.9L58.6,33.9L63.7,40.7L66.3,47.5L66.3,54.1L63.7,60.8L56.9,69.5"/><path class="s4" d="M-1.7,-12.2L18.6,1.7L36.6,14.1L49.3,23.6L58.9,32.5L64,39.4L66.6,46.1L66.6,52.8L64,59.5L57.2,68.1"/><path class="s5" d="M-1.3,-13.7L19,0.3L37,12.6L49.6,22.1L59.2,31.1L64.4,37.9L67,44.6L67,51.3L64.4,58L57.6,66.6"/><path class="s0" d="M-2.6,19L17.7,33L35.7,45.3L48.3,54.8L57.9,63.8L63.1,70.7L65.7,77.4L65.7,84L63.1,90.7L56.3,99.4"/><path class="s1" d="M-2.5,18.4L17.8,32.4L35.8,44.8L48.4,54.3L58.1,63.2L63.2,70.1L65.8,76.8L65.8,83.4L63.2,90.2L56.4,98.8"/><path class="s2" d="M-2.3,17.4L18,31.4L36,43.7L48.7,53.2L58.3,62.1L63.4,69L66,75.7L66,82.4L63.4,89.1L56.6,97.7"/><path class="s3" d="M-2,16.1L18.3,30.1L36.3,42.4L49,51.9L58.6,60.9L63.7,67.7L66.3,74.5L66.3,81.1L63.7,87.8L56.9,96.5"/><path class="s4" d="M-1.7,14.8L18.6,28.7L36.6,41.1L49.3,50.6L58.9,59.5L64,66.4L66.6,73.1L66.6,79.8L64,86.5L57.2,95.1"/><path class="s5" d="M-1.3,13.3L19,27.3L37,39.6L49.6,49.1L59.2,58.1L64.4,64.9L67,71.6L67,78.3L64.4,85L57.6,93.6"/><path class="s0" d="M-2.6,46L17.7,60L35.7,72.3L48.3,81.8L57.9,90.8L63.1,97.7L65.7,104.4L65.7,111L63.1,117.7L56.3,126.4"/><path class="s1" d="M-2.5,45.4L17.8,59.4L35.8,71.8L48.4,81.3L58.1,90.2L63.2,97.1L65.8,103.8L65.8,110.4L63.2,117.2L56.4,125.8"/><path class="s2" d="M-2.3,44.4L18,58.4L36,70.7L48.7,80.2L58.3,89.1L63.4,96L66,102.7L66,109.4L63.4,116.1L56.6,124.7"/><path class="s3" d="M-2,43.1L18.3,57.1L36.3,69.4L49,78.9L58.6,87.9L63.7,94.7L66.3,101.5L66.3,108.1L63.7,114.8L56.9,123.5"/><path class="s4" d="M-1.7,41.8L18.6,55.7L36.6,68.1L49.3,77.6L58.9,86.5L64,93.4L66.6,100.1L66.6,106.8L64,113.5L57.2,122.1"/><path class="s5" d="M-1.3,40.3L19,54.3L37,66.6L49.6,76.1L59.2,85.1L64.4,91.9L67,98.6L67,105.3L64.4,112L57.6,120.6"/><path class="s0" d="M-2.6,100L17.7,114L35.7,126.3L48.3,135.8L57.9,144.8L63.1,151.7L65.7,158.4L65.7,165L63.1,171.7L56.3,180.4"/><path class="s1" d="M-2.5,99.4L17.8,113.4L35.8,125.8L48.4,135.3L58.1,144.2L63.2,151.1L65.8,157.8L65.8,164.4L63.2,171.2L56.4,179.8"/><path class="s2" d="M-2.3,98.4L18,112.4L36,124.7L48.7,134.2L58.3,143.1L63.4,150L66,156.7L66,163.4L63.4,170.1L56.6,178.7"/><path class="s3" d="M-2,97.1L18.3,111.1L36.3,123.4L49,132.9L58.6,141.9L63.7,148.7L66.3,155.5L66.3,162.1L63.7,168.8L56.9,177.5"/><path class="s4" d="M-1.7,95.8L18.6,109.7L36.6,122.1L49.3,131.6L58.9,140.5L64,147.4L66.6,154.1L66.6,160.8L64,167.5L57.2,176.1"/><path class="s5" d="M-1.3,94.3L19,108.3L37,120.6L49.6,130.1L59.2,139.1L64.4,145.9L67,152.6L67,159.3L64.4,166L57.6,174.6"/><path class="s0" d="M-2.6,127L17.7,141L35.7,153.3L48.3,162.8L57.9,171.8L63.1,178.7L65.7,185.4L65.7,192L63.1,198.7L56.3,207.4"/><path class="s1" d="M-2.5,126.4L17.8,140.4L35.8,152.8L48.4,162.3L58.1,171.2L63.2,178.1L65.8,184.8L65.8,191.4L63.2,198.2L56.4,206.8"/><path class="s2" d="M-2.3,125.4L18,139.4L36,151.7L48.7,161.2L58.3,170.1L63.4,177L66,183.7L66,190.4L63.4,197.1L56.6,205.7"/><path class="s3" d="M-2,124.1L18.3,138.1L36.3,150.4L49,159.9L58.6,168.9L63.7,175.7L66.3,182.5L66.3,189.1L63.7,195.8L56.9,204.5"/><path class="s4" d="M-1.7,122.8L18.6,136.7L36.6,149.1L49.3,158.6L58.9,167.5L64,174.4L66.6,181.1L66.6,187.8L64,194.5L57.2,203.1"/><path class="s5" d="M-1.3,121.3L19,135.3L37,147.6L49.6,157.1L59.2,166.1L64.4,172.9L67,179.6L67,186.3L64.4,193L57.6,201.6"/><path class="s0" d="M-2.6,154L17.7,168L35.7,180.3L48.3,189.8L57.9,198.8L63.1,205.7L65.7,212.4L65.7,219L63.1,225.7L56.3,234.4"/><path class="s1" d="M-2.5,153.4L17.8,167.4L35.8,179.8L48.4,189.3L58.1,198.2L63.2,205.1L65.8,211.8L65.8,218.4L63.2,225.2L56.4,233.8"/><path class="s2" d="M-2.3,152.4L18,166.4L36,178.7L48.7,188.2L58.3,197.1L63.4,204L66,210.7L66,217.4L63.4,224.1L56.6,232.7"/><path class="s3" d="M-2,151.1L18.3,165.1L36.3,177.4L49,186.9L58.6,195.9L63.7,202.7L66.3,209.5L66.3,216.1L63.7,222.8L56.9,231.5"/><path class="s4" d="M-1.7,149.8L18.6,163.7L36.6,176.1L49.3,185.6L58.9,194.5L64,201.4L66.6,208.1L66.6,214.8L64,221.5L57.2,230.1"/><path class="s5" d="M-1.3,148.3L19,162.3L37,174.6L49.6,184.1L59.2,193.1L64.4,199.9L67,206.6L67,213.3L64.4,220L57.6,228.6"/><path class="s0" d="M-2.6,181L17.7,195L35.7,207.3L48.3,216.8L57.9,225.8L63.1,232.7L65.7,239.4L65.7,246L63.1,252.7L56.3,261.4"/><path class="s1" d="M-2.5,180.4L17.8,194.4L35.8,206.8L48.4,216.3L58.1,225.2L63.2,232.1L65.8,238.8L65.8,245.4L63.2,252.2L56.4,260.8"/><path class="s2" d="M-2.3,179.4L18,193.4L36,205.7L48.7,215.2L58.3,224.1L63.4,231L66,237.7L66,244.4L63.4,251.1L56.6,259.7"/><path class="s3" d="M-2,178.1L18.3,192.1L36.3,204.4L49,213.9L58.6,222.9L63.7,229.7L66.3,236.5L66.3,243.1L63.7,249.8L56.9,258.5"/><path class="s4" d="M-1.7,176.8L18.6,190.7L36.6,203.1L49.3,212.6L58.9,221.5L64,228.4L66.6,235.1L66.6,241.8L64,248.5L57.2,257.1"/><path class="s5" d="M-1.3,175.3L19,189.3L37,201.6L49.6,211.1L59.2,220.1L64.4,226.9L67,233.6L67,240.3L64.4,247L57.6,255.6"/><g filter="url(#fBlur)"><path class="sg" d="M-19.4,-111.8L-13.7,-107.3L-7.9,-102.9L-2,-98.6L3.9,-94.3L9.8,-90.2L15.7,-86.2L21.5,-82.3L27.1,-78.6"/><path class="sh" d="M-13.7,-107.3L-7.9,-102.9L-2,-98.6L3.9,-94.3L9.8,-90.2L15.7,-86.2L21.5,-82.3"/><path class="sw" d="M-7.9,-102.9L-2,-98.6L3.9,-94.3L9.8,-90.2L15.7,-86.2"/><path class="sg" d="M-19.4,-57.8L-13.7,-53.3L-7.9,-48.9L-2,-44.6L3.9,-40.3L9.8,-36.2L15.7,-32.2L21.5,-28.3L27.1,-24.6"/><path class="sh" d="M-13.7,-53.3L-7.9,-48.9L-2,-44.6L3.9,-40.3L9.8,-36.2L15.7,-32.2L21.5,-28.3"/><path class="sw" d="M-7.9,-48.9L-2,-44.6L3.9,-40.3L9.8,-36.2L15.7,-32.2"/><path class="sg" d="M-19.4,-30.8L-13.7,-26.3L-7.9,-21.9L-2,-17.6L3.9,-13.3L9.8,-9.2L15.7,-5.2L21.5,-1.3L27.1,2.4"/><path class="sh" d="M-13.7,-26.3L-7.9,-21.9L-2,-17.6L3.9,-13.3L9.8,-9.2L15.7,-5.2L21.5,-1.3"/><path class="sw" d="M-7.9,-21.9L-2,-17.6L3.9,-13.3L9.8,-9.2L15.7,-5.2"/><path class="sg" d="M-19.4,-3.8L-13.7,0.7L-7.9,5.1L-2,9.4L3.9,13.7L9.8,17.8L15.7,21.8L21.5,25.7L27.1,29.4"/><path class="sh" d="M-13.7,0.7L-7.9,5.1L-2,9.4L3.9,13.7L9.8,17.8L15.7,21.8L21.5,25.7"/><path class="sw" d="M-7.9,5.1L-2,9.4L3.9,13.7L9.8,17.8L15.7,21.8"/><path class="sg" d="M-19.4,23.2L-13.7,27.7L-7.9,32.1L-2,36.4L3.9,40.7L9.8,44.8L15.7,48.8L21.5,52.7L27.1,56.4"/><path class="sh" d="M-13.7,27.7L-7.9,32.1L-2,36.4L3.9,40.7L9.8,44.8L15.7,48.8L21.5,52.7"/><path class="sw" d="M-7.9,32.1L-2,36.4L3.9,40.7L9.8,44.8L15.7,48.8"/><path class="sg" d="M-19.4,77.2L-13.7,81.7L-7.9,86.1L-2,90.4L3.9,94.7L9.8,98.8L15.7,102.8L21.5,106.7L27.1,110.4"/><path class="sh" d="M-13.7,81.7L-7.9,86.1L-2,90.4L3.9,94.7L9.8,98.8L15.7,102.8L21.5,106.7"/><path class="sw" d="M-7.9,86.1L-2,90.4L3.9,94.7L9.8,98.8L15.7,102.8"/><path class="sg" d="M-19.4,104.2L-13.7,108.7L-7.9,113.1L-2,117.4L3.9,121.7L9.8,125.8L15.7,129.8L21.5,133.7L27.1,137.4"/><path class="sh" d="M-13.7,108.7L-7.9,113.1L-2,117.4L3.9,121.7L9.8,125.8L15.7,129.8L21.5,133.7"/><path class="sw" d="M-7.9,113.1L-2,117.4L3.9,121.7L9.8,125.8L15.7,129.8"/><path class="sg" d="M-19.4,131.2L-13.7,135.7L-7.9,140.1L-2,144.4L3.9,148.7L9.8,152.8L15.7,156.8L21.5,160.7L27.1,164.4"/><path class="sh" d="M-13.7,135.7L-7.9,140.1L-2,144.4L3.9,148.7L9.8,152.8L15.7,156.8L21.5,160.7"/><path class="sw" d="M-7.9,140.1L-2,144.4L3.9,148.7L9.8,152.8L15.7,156.8"/><path class="sg" d="M-19.4,158.2L-13.7,162.7L-7.9,167.1L-2,171.4L3.9,175.7L9.8,179.8L15.7,183.8L21.5,187.7L27.1,191.4"/><path class="sh" d="M-13.7,162.7L-7.9,167.1L-2,171.4L3.9,175.7L9.8,179.8L15.7,183.8L21.5,187.7"/><path class="sw" d="M-7.9,167.1L-2,171.4L3.9,175.7L9.8,179.8L15.7,183.8"/></g><g clip-path="url(#cShade)"><path d="M-94,0 A94,24.4 0 0 0 94,0 L94,9 A94,24.4 0 0 1 -94,9 Z" fill="#1d3c5c" opacity="0.55"/><path d="M-94,8 A94,24.4 0 0 0 94,8 L94,15 A94,24.4 0 0 1 -94,15 Z" fill="#1d3c5c" opacity="0.22"/></g></g><path d="M-94.2,0 A94.2,24.4 0 0 0 94.2,0 L88,4.5 A88,23.5 0 0 1 -88,4.5 Z" fill="url(#gCham)"/><polygon points="-81.2,-68.6 -67,-73.6 -67,-44.6 -81.2,-47.4" fill="#3d7eb4"/><polygon points="-67,-73.6 -51.3,-72.5 -51.3,-41.8 -67,-44.6" fill="#4492cc"/><polygon points="-81.2,-68.6 -68,-74.7 -51.3,-73 -51.3,-71.6 -67,-72.5 -80.5,-67.2" fill="#4a9fde"/><polygon points="-36.6,-81.4 -30.8,-83.1 -30.8,-46 -36.6,-47.4" fill="#354e64"/><polygon points="-30.8,-83.1 -8.1,-83.9 -8.1,-44.6 -30.8,-46" fill="#4492cc"/><polygon points="-36.6,-81.4 -31.1,-84.2 -8.1,-85 -8.1,-83.3 -30.8,-82.2" fill="#4a9fde"/><polygon points="17.4,-78.3 38.3,-76.9 38.3,-44.6 17.4,-44.6" fill="url(#gBM3)"/><polygon points="38.3,-76.9 47.3,-80.8 47.3,-46 38.3,-44.6" fill="#4a9fde"/><polygon points="17.4,-78.3 21.6,-81.7 47.3,-80.8 38.3,-76.7" fill="#4a9fde"/><polygon points="57.8,-72.2 70.3,-65.5 70.3,-41.8 57.8,-43.2" fill="#354e64"/><polygon points="70.3,-65.5 84.9,-68.9 84.9,-50.2 70.3,-41.8" fill="#4a9fde"/><polygon points="57.8,-72.2 70.3,-75.5 84.9,-68.9 70.3,-65.2" fill="#4a9fde"/><ellipse cx="0" cy="-22" rx="93.8" ry="21" fill="url(#gBody)"/><ellipse cx="0" cy="-32.2" rx="92" ry="22.3" fill="#4594ce"/><ellipse cx="-0.5" cy="-31" rx="80" ry="18.5" fill="#428dc8"/><ellipse cx="-4.1" cy="-30.1" rx="55" ry="15" fill="#4695d0"/><path d="M-49.3,-39.2 Q-25,-44.1 6.4,-40.9" stroke="#2f5f8a" stroke-width="1.6" stroke-dasharray="3 2 5 3 2 6" fill="none" opacity="0.8"/><path d="M38.6,-36 L46.4,-35.4" stroke="#2b4a66" stroke-width="1.4" fill="none"/><path d="M-58.9,-35.4 L-52.8,-34.3" stroke="#2b4a66" stroke-width="1.2" fill="none"/><polygon points="-95.3,-58.4 -93.5,-63.9 -76.6,-63.7 -76.6,-50.3 -88.8,-47.9 -88.8,-19.5 -95.3,-25.1" fill="#4a9fde"/><polygon points="-93.5,-55.8 -88.9,-55.8 -88.9,-20.4 -93.5,-24.8" fill="#3f86bf"/><polygon points="73.1,-56.5 76.9,-59.9 92,-59.7 92,-20.9 73.1,-20.9" fill="#4a9fde"/><polygon points="78.7,-52.7 89.3,-52.7 89.3,-24.1 78.7,-25.1" fill="#418bc6"/><path d="M-94.9,-24.6 L-94.2,0 A94,24.4 0 0 0 94.2,0 L93.4,-24.6 A94,20 0 0 1 -94.9,-24.6 Z" fill="url(#gBody)"/><polygon points="-51.1,-33.1 -24.1,-37.1 4.6,-37.1 4.6,-3.5 -24.1,-3.8 -51.1,-7.2" fill="url(#gBody)"/><polygon points="-18.9,-21.4 4.6,-17.6 4.6,-9.2 -18.9,-9.6" fill="url(#gNotch)"/><path d="M-18.9,-21.4 Q-11.9,-31.3 4.6,-33.4 L4.6,-17.6 Q-7.6,-16.9 -18.9,-21.4 Z" fill="#4a9fde"/><polygon points="4.2,-44.6 38.3,-42.1 33.4,-36.3 4.2,-36.8" fill="#4a9fde"/><polygon points="4.2,-36.8 33.4,-36.3 33.4,-4.9 4.2,-2.8" fill="#479bd9"/><polygon points="33.4,-15.1 37.2,-14.3 37.2,-10.1 33.4,-10.5" fill="#35648f"/><path d="M4.6,-37.1 L4.6,-3.5" stroke="#3a7db5" stroke-width="0.8" fill="none"/><polygon points="-88.8,-48.8 -73.7,-42 -73.7,-18.6 -88.8,-21.9" fill="#354e64"/><polygon points="-88.8,-49 -76.2,-51.1 -66,-47.4 -51.4,-37.8 -51.4,-7.7 -73.7,-12.8 -73.7,-42" fill="#4798d5"/><polygon points="-88.8,-49 -76.2,-51.1 -66,-47.4 -51.4,-37.8 -73.7,-42" fill="#4a9fde"/><polygon points="48,-41.6 58.5,-39 58.5,-10.2 48,-15.8" fill="#354e64"/><polygon points="48,-41.6 63.4,-46.8 78.1,-45.2 78.1,-8.4 58.5,-10.2 58.5,-39" fill="#4899d7"/><polygon points="48,-41.6 63.4,-46.8 78.1,-45.2 58.5,-39" fill="#4a9fde"/></g>
<g transform="translate(677.9,319.4)"><path d="M-117.5,299 A117.5,30.5 0 0 0 117.5,299 L112.5,305 A112.5,32.5 0 0 1 -112.5,305 Z" fill="url(#gDarkBot)"/><path d="M-115.5,282 A115.5,27.5 0 0 0 115.5,282 L117.5,299 A117.5,30.5 0 0 1 -117.5,299 Z" fill="url(#gTier)"/><path d="M-105.5,248 A105.5,30 0 0 0 105.5,248 L115.5,282 A115.5,27.5 0 0 1 -115.5,282 Z" fill="url(#gTier)"/><path d="M-115.5,282 A115.5,27.5 0 0 0 115.5,282" stroke="#2f6293" stroke-width="1.6" fill="none" opacity="0.7"/><path d="M-115.5,283.6 A115.5,27.5 0 0 0 115.5,283.6" stroke="#58abe8" stroke-width="1.2" fill="none" opacity="0.8"/><path d="M-96,261.4 L-105.1,292.4" stroke="#2c5c8b" stroke-width="1.5" fill="none" opacity="0.85"/><path d="M-94.6,261.4 L-103.7,292.4" stroke="#5aaeea" stroke-width="1" fill="none" opacity="0.7"/><path d="M-57,274.2 L-62.4,304.1" stroke="#2c5c8b" stroke-width="1.5" fill="none" opacity="0.85"/><path d="M-55.6,274.2 L-61,304.1" stroke="#5aaeea" stroke-width="1" fill="none" opacity="0.7"/><path d="M8.5,278.9 L9.3,308.4" stroke="#2c5c8b" stroke-width="1.5" fill="none" opacity="0.85"/><path d="M9.9,278.9 L10.7,308.4" stroke="#5aaeea" stroke-width="1" fill="none" opacity="0.7"/><path d="M66,272.4 L72.3,302.5" stroke="#2c5c8b" stroke-width="1.5" fill="none" opacity="0.85"/><path d="M67.4,272.4 L73.7,302.5" stroke="#5aaeea" stroke-width="1" fill="none" opacity="0.7"/><path d="M98,260.1 L107.3,291.2" stroke="#2c5c8b" stroke-width="1.5" fill="none" opacity="0.85"/><path d="M99.4,260.1 L108.7,291.2" stroke="#5aaeea" stroke-width="1" fill="none" opacity="0.7"/><path d="M-108,293.7 L-109.9,309.8" stroke="#2c5c8b" stroke-width="1.5" fill="none" opacity="0.85"/><path d="M-106.6,293.7 L-108.5,309.8" stroke="#5aaeea" stroke-width="1" fill="none" opacity="0.7"/><path d="M-86,302.4 L-87.5,319.4" stroke="#2c5c8b" stroke-width="1.5" fill="none" opacity="0.85"/><path d="M-84.6,302.4 L-86.1,319.4" stroke="#5aaeea" stroke-width="1" fill="none" opacity="0.7"/><path d="M-25,310.8 L-25.4,328.8" stroke="#2c5c8b" stroke-width="1.5" fill="none" opacity="0.85"/><path d="M-23.6,310.8 L-24,328.8" stroke="#5aaeea" stroke-width="1" fill="none" opacity="0.7"/><path d="M45,309.3 L45.8,327.1" stroke="#2c5c8b" stroke-width="1.5" fill="none" opacity="0.85"/><path d="M46.4,309.3 L47.2,327.1" stroke="#5aaeea" stroke-width="1" fill="none" opacity="0.7"/><path d="M97,298.9 L98.7,315.6" stroke="#2c5c8b" stroke-width="1.5" fill="none" opacity="0.85"/><path d="M98.4,298.9 L100.1,315.6" stroke="#5aaeea" stroke-width="1" fill="none" opacity="0.7"/><ellipse cx="0" cy="248" rx="105.5" ry="30" fill="url(#gLedge)"/><path d="M-94,186.8 A94,27.4 0 0 0 94,186.8 L94,240 A94,32.5 0 0 1 -94,240 Z" fill="url(#gBody)"/><path d="M-94,240 A94,32.5 0 0 0 94,240" stroke="#2c5c8b" stroke-width="1.5" fill="none" opacity="0.5"/><g clip-path="url(#cBase)"><text font-family="Liberation Sans, sans-serif" font-weight="bold" font-size="68" fill="url(#gText)" filter="url(#fEng)"><tspan x="-85.2" y="263" textLength="20.8" lengthAdjust="spacingAndGlyphs">f</tspan><tspan x="-61.4" y="263" textLength="35.7" lengthAdjust="spacingAndGlyphs">o</tspan><tspan x="-28.3" y="266.5" textLength="19.5" lengthAdjust="spacingAndGlyphs">r</tspan><tspan x="-14.6" y="271.5" textLength="70.2" lengthAdjust="spacingAndGlyphs">m</tspan><tspan x="60.2" y="265.3" textLength="12.9" lengthAdjust="spacingAndGlyphs">l</tspan><tspan x="71.9" y="259.5" textLength="32.4" lengthAdjust="spacingAndGlyphs">a</tspan></text></g><ellipse cx="0" cy="188" rx="94" ry="27.4" fill="url(#gTop)"/><polygon points="-84,327 -72,324 -63,317.5 -57,314.5 -51,317.5 -45,324 -40,329 -30,330.5 -23,337 -23,337.6 -32,337 -42,336 -52,334.6 -62,332.9 -72,330.8 -84,327.4" fill="#ffffff"/><g clip-path="url(#cCol)"><rect x="-52" y="0" width="104" height="196" fill="#30689c"/><path class="b0" d="M63.1,-118.3L66,-107.9L62.6,-97.5L53.1,-86.6L38.5,-75L20.2,-62.4L0,-48.5L-20.2,-33.4L-38.5,-17L-53.1,0.3L-62.6,18.5L-66,37L-63.1,55.5"/><path class="b1" d="M62.6,-115.3L65.5,-104.9L62.1,-94.5L52.6,-83.6L38,-72L19.7,-59.4L-0.5,-45.5L-20.7,-30.4L-39,-14L-53.6,3.3L-63.1,21.5L-66.5,40L-63.6,58.5"/><path class="b0" d="M63.1,-91.3L66,-80.9L62.6,-70.5L53.1,-59.6L38.5,-48L20.2,-35.4L0,-21.5L-20.2,-6.4L-38.5,10L-53.1,27.3L-62.6,45.5L-66,64L-63.1,82.5"/><path class="b1" d="M62.6,-88.3L65.5,-77.9L62.1,-67.5L52.6,-56.6L38,-45L19.7,-32.4L-0.5,-18.5L-20.7,-3.4L-39,13L-53.6,30.3L-63.1,48.5L-66.5,67L-63.6,85.5"/><path class="b0" d="M63.1,-64.3L66,-53.9L62.6,-43.5L53.1,-32.6L38.5,-21L20.2,-8.4L0,5.5L-20.2,20.6L-38.5,37L-53.1,54.3L-62.6,72.5L-66,91L-63.1,109.5"/><path class="b1" d="M62.6,-61.3L65.5,-50.9L62.1,-40.5L52.6,-29.6L38,-18L19.7,-5.4L-0.5,8.5L-20.7,23.6L-39,40L-53.6,57.3L-63.1,75.5L-66.5,94L-63.6,112.5"/><path class="b0" d="M63.1,-37.3L66,-26.9L62.6,-16.5L53.1,-5.6L38.5,6L20.2,18.6L0,32.5L-20.2,47.6L-38.5,64L-53.1,81.3L-62.6,99.5L-66,118L-63.1,136.5"/><path class="b1" d="M62.6,-34.3L65.5,-23.9L62.1,-13.5L52.6,-2.6L38,9L19.7,21.6L-0.5,35.5L-20.7,50.6L-39,67L-53.6,84.3L-63.1,102.5L-66.5,121L-63.6,139.5"/><path class="b0" d="M63.1,16.7L66,27.1L62.6,37.5L53.1,48.4L38.5,60L20.2,72.6L0,86.5L-20.2,101.6L-38.5,118L-53.1,135.3L-62.6,153.5L-66,172L-63.1,190.5"/><path class="b1" d="M62.6,19.7L65.5,30.1L62.1,40.5L52.6,51.4L38,63L19.7,75.6L-0.5,89.5L-20.7,104.6L-39,121L-53.6,138.3L-63.1,156.5L-66.5,175L-63.6,193.5"/><path class="b0" d="M63.1,43.7L66,54.1L62.6,64.5L53.1,75.4L38.5,87L20.2,99.6L0,113.5L-20.2,128.6L-38.5,145L-53.1,162.3L-62.6,180.5L-66,199L-63.1,217.5"/><path class="b1" d="M62.6,46.7L65.5,57.1L62.1,67.5L52.6,78.4L38,90L19.7,102.6L-0.5,116.5L-20.7,131.6L-39,148L-53.6,165.3L-63.1,183.5L-66.5,202L-63.6,220.5"/><path class="b0" d="M63.1,70.7L66,81.1L62.6,91.5L53.1,102.4L38.5,114L20.2,126.6L0,140.5L-20.2,155.6L-38.5,172L-53.1,189.3L-62.6,207.5L-66,226L-63.1,244.5"/><path class="b1" d="M62.6,73.7L65.5,84.1L62.1,94.5L52.6,105.4L38,117L19.7,129.6L-0.5,143.5L-20.7,158.6L-39,175L-53.6,192.3L-63.1,210.5L-66.5,229L-63.6,247.5"/><path class="b0" d="M63.1,97.7L66,108.1L62.6,118.5L53.1,129.4L38.5,141L20.2,153.6L0,167.5L-20.2,182.6L-38.5,199L-53.1,216.3L-62.6,234.5L-66,253L-63.1,271.5"/><path class="b1" d="M62.6,100.7L65.5,111.1L62.1,121.5L52.6,132.4L38,144L19.7,156.6L-0.5,170.5L-20.7,185.6L-39,202L-53.6,219.3L-63.1,237.5L-66.5,256L-63.6,274.5"/><path class="b0" d="M63.1,151.7L66,162.1L62.6,172.5L53.1,183.4L38.5,195L20.2,207.6L0,221.5L-20.2,236.6L-38.5,253L-53.1,270.3L-62.6,288.5L-66,307L-63.1,325.5"/><path class="b1" d="M62.6,154.7L65.5,165.1L62.1,175.5L52.6,186.4L38,198L19.7,210.6L-0.5,224.5L-20.7,239.6L-39,256L-53.6,273.3L-63.1,291.5L-66.5,310L-63.6,328.5"/><path class="b0" d="M63.1,178.7L66,189.1L62.6,199.5L53.1,210.4L38.5,222L20.2,234.6L0,248.5L-20.2,263.6L-38.5,280L-53.1,297.3L-62.6,315.5L-66,334L-63.1,352.5"/><path class="b1" d="M62.6,181.7L65.5,192.1L62.1,202.5L52.6,213.4L38,225L19.7,237.6L-0.5,251.5L-20.7,266.6L-39,283L-53.6,300.3L-63.1,318.5L-66.5,337L-63.6,355.5"/><path class="b0" d="M63.1,205.7L66,216.1L62.6,226.5L53.1,237.4L38.5,249L20.2,261.6L0,275.5L-20.2,290.6L-38.5,307L-53.1,324.3L-62.6,342.5L-66,361L-63.1,379.5"/><path class="b1" d="M62.6,208.7L65.5,219.1L62.1,229.5L52.6,240.4L38,252L19.7,264.6L-0.5,278.5L-20.7,293.6L-39,310L-53.6,327.3L-63.1,345.5L-66.5,364L-63.6,382.5"/><path class="c0" d="M0.3,20L-4.3,24L-8,28L-9.9,32L-9.3,36L-6.3,40L-2,44L2.3,48L5.3,52L5.9,56L4,60L0.3,64L-4.3,68L-8,72L-9.9,76L-9.3,80L-6.3,84L-2,88L2.3,92L5.3,96L5.9,100L4,104L0.3,108L-4.3,112L-8,116L-9.9,120L-9.3,124L-6.3,128L-2,132L2.3,136L5.3,140L5.9,144L4,148L0.3,152L-4.3,156L-8,160L-9.9,164L-9.3,168L-6.3,172L-2,176L2.3,180L5.3,184L5.9,188"/><path class="c1" d="M0.3,20L-4.3,24L-8,28L-9.9,32L-9.3,36L-6.3,40L-2,44L2.3,48L5.3,52L5.9,56L4,60L0.3,64L-4.3,68L-8,72L-9.9,76L-9.3,80L-6.3,84L-2,88L2.3,92L5.3,96L5.9,100L4,104L0.3,108L-4.3,112L-8,116L-9.9,120L-9.3,124L-6.3,128L-2,132L2.3,136L5.3,140L5.9,144L4,148L0.3,152L-4.3,156L-8,160L-9.9,164L-9.3,168L-6.3,172L-2,176L2.3,180L5.3,184L5.9,188"/><path class="c0" d="M-4.3,20L0.3,24L4,28L5.9,32L5.3,36L2.3,40L-2,44L-6.3,48L-9.3,52L-9.9,56L-8,60L-4.3,64L0.3,68L4,72L5.9,76L5.3,80L2.3,84L-2,88L-6.3,92L-9.3,96L-9.9,100L-8,104L-4.3,108L0.3,112L4,116L5.9,120L5.3,124L2.3,128L-2,132L-6.3,136L-9.3,140L-9.9,144L-8,148L-4.3,152L0.3,156L4,160L5.9,164L5.3,168L2.3,172L-2,176L-6.3,180L-9.3,184L-9.9,188"/><path class="c1" d="M-4.3,20L0.3,24L4,28L5.9,32L5.3,36L2.3,40L-2,44L-6.3,48L-9.3,52L-9.9,56L-8,60L-4.3,64L0.3,68L4,72L5.9,76L5.3,80L2.3,84L-2,88L-6.3,92L-9.3,96L-9.9,100L-8,104L-4.3,108L0.3,112L4,116L5.9,120L5.3,124L2.3,128L-2,132L-6.3,136L-9.3,140L-9.9,144L-8,148L-4.3,152L0.3,156L4,160L5.9,164L5.3,168L2.3,172L-2,176L-6.3,180L-9.3,184L-9.9,188"/><path class="s0" d="M-56.3,172.2L-63.1,186.9L-65.7,198.7L-65.7,210.7L-63.1,222.5L-57.9,234.3L-48.3,248.6L-35.7,262.3L-17.7,277.8L2.6,292.7"/><path class="s1" d="M-56.1,171.7L-62.9,186.3L-65.5,198.2L-65.5,210.1L-62.9,222L-57.8,233.7L-48.2,248L-35.5,261.7L-17.5,277.3L2.8,292.2"/><path class="s2" d="M-55.9,170.6L-62.7,185.2L-65.3,197.1L-65.3,209L-62.7,220.9L-57.5,232.6L-47.9,246.9L-35.3,260.6L-17.3,276.2L3,291.1"/><path class="s3" d="M-55.6,169.3L-62.4,183.9L-65,195.8L-65,207.8L-62.4,219.6L-57.3,231.4L-47.6,245.6L-35,259.4L-17,274.9L3.3,289.8"/><path class="s4" d="M-55.3,168L-62.1,182.6L-64.7,194.5L-64.7,206.4L-62.1,218.3L-57,230L-47.3,244.3L-34.7,258L-16.7,273.6L3.6,288.5"/><path class="s5" d="M-55,166.5L-61.8,181.1L-64.4,193L-64.4,204.9L-61.8,216.8L-56.6,228.5L-47,242.8L-34.4,256.6L-16.4,272.1L3.9,287"/><path class="s0" d="M-56.3,145.2L-63.1,159.9L-65.7,171.7L-65.7,183.7L-63.1,195.5L-57.9,207.3L-48.3,221.6L-35.7,235.3L-17.7,250.8L2.6,265.7"/><path class="s1" d="M-56.1,144.7L-62.9,159.3L-65.5,171.2L-65.5,183.1L-62.9,195L-57.8,206.7L-48.2,221L-35.5,234.7L-17.5,250.3L2.8,265.2"/><path class="s2" d="M-55.9,143.6L-62.7,158.2L-65.3,170.1L-65.3,182L-62.7,193.9L-57.5,205.6L-47.9,219.9L-35.3,233.6L-17.3,249.2L3,264.1"/><path class="s3" d="M-55.6,142.3L-62.4,156.9L-65,168.8L-65,180.8L-62.4,192.6L-57.3,204.4L-47.6,218.6L-35,232.4L-17,247.9L3.3,262.8"/><path class="s4" d="M-55.3,141L-62.1,155.6L-64.7,167.5L-64.7,179.4L-62.1,191.3L-57,203L-47.3,217.3L-34.7,231L-16.7,246.6L3.6,261.5"/><path class="s5" d="M-55,139.5L-61.8,154.1L-64.4,166L-64.4,177.9L-61.8,189.8L-56.6,201.5L-47,215.8L-34.4,229.6L-16.4,245.1L3.9,260"/><path class="s0" d="M-56.3,118.2L-63.1,132.9L-65.7,144.7L-65.7,156.7L-63.1,168.5L-57.9,180.3L-48.3,194.6L-35.7,208.3L-17.7,223.8L2.6,238.7"/><path class="s1" d="M-56.1,117.7L-62.9,132.3L-65.5,144.2L-65.5,156.1L-62.9,168L-57.8,179.7L-48.2,194L-35.5,207.7L-17.5,223.3L2.8,238.2"/><path class="s2" d="M-55.9,116.6L-62.7,131.2L-65.3,143.1L-65.3,155L-62.7,166.9L-57.5,178.6L-47.9,192.9L-35.3,206.6L-17.3,222.2L3,237.1"/><path class="s3" d="M-55.6,115.3L-62.4,129.9L-65,141.8L-65,153.8L-62.4,165.6L-57.3,177.4L-47.6,191.6L-35,205.4L-17,220.9L3.3,235.8"/><path class="s4" d="M-55.3,114L-62.1,128.6L-64.7,140.5L-64.7,152.4L-62.1,164.3L-57,176L-47.3,190.3L-34.7,204L-16.7,219.6L3.6,234.5"/><path class="s5" d="M-55,112.5L-61.8,127.1L-64.4,139L-64.4,150.9L-61.8,162.8L-56.6,174.5L-47,188.8L-34.4,202.6L-16.4,218.1L3.9,233"/><path class="s0" d="M-56.3,64.2L-63.1,78.9L-65.7,90.7L-65.7,102.7L-63.1,114.5L-57.9,126.3L-48.3,140.6L-35.7,154.3L-17.7,169.8L2.6,184.7"/><path class="s1" d="M-56.1,63.7L-62.9,78.3L-65.5,90.2L-65.5,102.1L-62.9,114L-57.8,125.7L-48.2,140L-35.5,153.7L-17.5,169.3L2.8,184.2"/><path class="s2" d="M-55.9,62.6L-62.7,77.2L-65.3,89.1L-65.3,101L-62.7,112.9L-57.5,124.6L-47.9,138.9L-35.3,152.6L-17.3,168.2L3,183.1"/><path class="s3" d="M-55.6,61.3L-62.4,75.9L-65,87.8L-65,99.8L-62.4,111.6L-57.3,123.4L-47.6,137.6L-35,151.4L-17,166.9L3.3,181.8"/><path class="s4" d="M-55.3,60L-62.1,74.6L-64.7,86.5L-64.7,98.4L-62.1,110.3L-57,122L-47.3,136.3L-34.7,150L-16.7,165.6L3.6,180.5"/><path class="s5" d="M-55,58.5L-61.8,73.1L-64.4,85L-64.4,96.9L-61.8,108.8L-56.6,120.5L-47,134.8L-34.4,148.6L-16.4,164.1L3.9,179"/><path class="s0" d="M-56.3,37.2L-63.1,51.9L-65.7,63.7L-65.7,75.7L-63.1,87.5L-57.9,99.3L-48.3,113.6L-35.7,127.3L-17.7,142.8L2.6,157.7"/><path class="s1" d="M-56.1,36.7L-62.9,51.3L-65.5,63.2L-65.5,75.1L-62.9,87L-57.8,98.7L-48.2,113L-35.5,126.7L-17.5,142.3L2.8,157.2"/><path class="s2" d="M-55.9,35.6L-62.7,50.2L-65.3,62.1L-65.3,74L-62.7,85.9L-57.5,97.6L-47.9,111.9L-35.3,125.6L-17.3,141.2L3,156.1"/><path class="s3" d="M-55.6,34.3L-62.4,48.9L-65,60.8L-65,72.8L-62.4,84.6L-57.3,96.4L-47.6,110.6L-35,124.4L-17,139.9L3.3,154.8"/><path class="s4" d="M-55.3,33L-62.1,47.6L-64.7,59.5L-64.7,71.4L-62.1,83.3L-57,95L-47.3,109.3L-34.7,123L-16.7,138.6L3.6,153.5"/><path class="s5" d="M-55,31.5L-61.8,46.1L-64.4,58L-64.4,69.9L-61.8,81.8L-56.6,93.5L-47,107.8L-34.4,121.6L-16.4,137.1L3.9,152"/><path class="s0" d="M-56.3,10.2L-63.1,24.9L-65.7,36.7L-65.7,48.7L-63.1,60.5L-57.9,72.3L-48.3,86.6L-35.7,100.3L-17.7,115.8L2.6,130.7"/><path class="s1" d="M-56.1,9.7L-62.9,24.3L-65.5,36.2L-65.5,48.1L-62.9,60L-57.8,71.7L-48.2,86L-35.5,99.7L-17.5,115.3L2.8,130.2"/><path class="s2" d="M-55.9,8.6L-62.7,23.2L-65.3,35.1L-65.3,47L-62.7,58.9L-57.5,70.6L-47.9,84.9L-35.3,98.6L-17.3,114.2L3,129.1"/><path class="s3" d="M-55.6,7.3L-62.4,21.9L-65,33.8L-65,45.8L-62.4,57.6L-57.3,69.4L-47.6,83.6L-35,97.4L-17,112.9L3.3,127.8"/><path class="s4" d="M-55.3,6L-62.1,20.6L-64.7,32.5L-64.7,44.4L-62.1,56.3L-57,68L-47.3,82.3L-34.7,96L-16.7,111.6L3.6,126.5"/><path class="s5" d="M-55,4.5L-61.8,19.1L-64.4,31L-64.4,42.9L-61.8,54.8L-56.6,66.5L-47,80.8L-34.4,94.6L-16.4,110.1L3.9,125"/><path class="s0" d="M-56.3,-16.8L-63.1,-2.1L-65.7,9.7L-65.7,21.7L-63.1,33.5L-57.9,45.3L-48.3,59.6L-35.7,73.3L-17.7,88.8L2.6,103.7"/><path class="s1" d="M-56.1,-17.3L-62.9,-2.7L-65.5,9.2L-65.5,21.1L-62.9,33L-57.8,44.7L-48.2,59L-35.5,72.7L-17.5,88.3L2.8,103.2"/><path class="s2" d="M-55.9,-18.4L-62.7,-3.8L-65.3,8.1L-65.3,20L-62.7,31.9L-57.5,43.6L-47.9,57.9L-35.3,71.6L-17.3,87.2L3,102.1"/><path class="s3" d="M-55.6,-19.7L-62.4,-5.1L-65,6.8L-65,18.8L-62.4,30.6L-57.3,42.4L-47.6,56.6L-35,70.4L-17,85.9L3.3,100.8"/><path class="s4" d="M-55.3,-21L-62.1,-6.4L-64.7,5.5L-64.7,17.4L-62.1,29.3L-57,41L-47.3,55.3L-34.7,69L-16.7,84.6L3.6,99.5"/><path class="s5" d="M-55,-22.5L-61.8,-7.9L-64.4,4L-64.4,15.9L-61.8,27.8L-56.6,39.5L-47,53.8L-34.4,67.6L-16.4,83.1L3.9,98"/><path class="s0" d="M-56.3,-70.8L-63.1,-56.1L-65.7,-44.3L-65.7,-32.3L-63.1,-20.5L-57.9,-8.7L-48.3,5.6L-35.7,19.3L-17.7,34.8L2.6,49.7"/><path class="s1" d="M-56.1,-71.3L-62.9,-56.7L-65.5,-44.8L-65.5,-32.9L-62.9,-21L-57.8,-9.3L-48.2,5L-35.5,18.7L-17.5,34.3L2.8,49.2"/><path class="s2" d="M-55.9,-72.4L-62.7,-57.8L-65.3,-45.9L-65.3,-34L-62.7,-22.1L-57.5,-10.4L-47.9,3.9L-35.3,17.6L-17.3,33.2L3,48.1"/><path class="s3" d="M-55.6,-73.7L-62.4,-59.1L-65,-47.2L-65,-35.2L-62.4,-23.4L-57.3,-11.6L-47.6,2.6L-35,16.4L-17,31.9L3.3,46.8"/><path class="s4" d="M-55.3,-75L-62.1,-60.4L-64.7,-48.5L-64.7,-36.6L-62.1,-24.7L-57,-13L-47.3,1.3L-34.7,15L-16.7,30.6L3.6,45.5"/><path class="s5" d="M-55,-76.5L-61.8,-61.9L-64.4,-50L-64.4,-38.1L-61.8,-26.2L-56.6,-14.5L-47,-0.2L-34.4,13.6L-16.4,29.1L3.9,44"/><path class="s0" d="M-56.3,-97.8L-63.1,-83.1L-65.7,-71.3L-65.7,-59.3L-63.1,-47.5L-57.9,-35.7L-48.3,-21.4L-35.7,-7.7L-17.7,7.8L2.6,22.7"/><path class="s1" d="M-56.1,-98.3L-62.9,-83.7L-65.5,-71.8L-65.5,-59.9L-62.9,-48L-57.8,-36.3L-48.2,-22L-35.5,-8.3L-17.5,7.3L2.8,22.2"/><path class="s2" d="M-55.9,-99.4L-62.7,-84.8L-65.3,-72.9L-65.3,-61L-62.7,-49.1L-57.5,-37.4L-47.9,-23.1L-35.3,-9.4L-17.3,6.2L3,21.1"/><path class="s3" d="M-55.6,-100.7L-62.4,-86.1L-65,-74.2L-65,-62.2L-62.4,-50.4L-57.3,-38.6L-47.6,-24.4L-35,-10.6L-17,4.9L3.3,19.8"/><path class="s4" d="M-55.3,-102L-62.1,-87.4L-64.7,-75.5L-64.7,-63.6L-62.1,-51.7L-57,-40L-47.3,-25.7L-34.7,-12L-16.7,3.6L3.6,18.5"/><path class="s5" d="M-55,-103.5L-61.8,-88.9L-64.4,-77L-64.4,-65.1L-61.8,-53.2L-56.6,-41.5L-47,-27.2L-34.4,-13.4L-16.4,2.1L3.9,17"/><path class="s0" d="M-56.3,-124.8L-63.1,-110.1L-65.7,-98.3L-65.7,-86.3L-63.1,-74.5L-57.9,-62.7L-48.3,-48.4L-35.7,-34.7L-17.7,-19.2L2.6,-4.3"/><path class="s1" d="M-56.1,-125.3L-62.9,-110.7L-65.5,-98.8L-65.5,-86.9L-62.9,-75L-57.8,-63.3L-48.2,-49L-35.5,-35.3L-17.5,-19.7L2.8,-4.8"/><path class="s2" d="M-55.9,-126.4L-62.7,-111.8L-65.3,-99.9L-65.3,-88L-62.7,-76.1L-57.5,-64.4L-47.9,-50.1L-35.3,-36.4L-17.3,-20.8L3,-5.9"/><path class="s3" d="M-55.6,-127.7L-62.4,-113.1L-65,-101.2L-65,-89.2L-62.4,-77.4L-57.3,-65.6L-47.6,-51.4L-35,-37.6L-17,-22.1L3.3,-7.2"/><path class="s4" d="M-55.3,-129L-62.1,-114.4L-64.7,-102.5L-64.7,-90.6L-62.1,-78.7L-57,-67L-47.3,-52.7L-34.7,-39L-16.7,-23.4L3.6,-8.5"/><path class="s5" d="M-55,-130.5L-61.8,-115.9L-64.4,-104L-64.4,-92.1L-61.8,-80.2L-56.6,-68.5L-47,-54.2L-34.4,-40.4L-16.4,-24.9L3.9,-10"/><path class="s0" d="M-2.6,-89L17.7,-75L35.7,-62.7L48.3,-53.2L57.9,-44.2L63.1,-37.3L65.7,-30.6L65.7,-24L63.1,-17.3L56.3,-8.6"/><path class="s1" d="M-2.5,-89.6L17.8,-75.6L35.8,-63.2L48.4,-53.7L58.1,-44.8L63.2,-37.9L65.8,-31.2L65.8,-24.6L63.2,-17.8L56.4,-9.2"/><path class="s2" d="M-2.3,-90.6L18,-76.6L36,-64.3L48.7,-54.8L58.3,-45.9L63.4,-39L66,-32.3L66,-25.6L63.4,-18.9L56.6,-10.3"/><path class="s3" d="M-2,-91.9L18.3,-77.9L36.3,-65.6L49,-56.1L58.6,-47.1L63.7,-40.3L66.3,-33.5L66.3,-26.9L63.7,-20.2L56.9,-11.5"/><path class="s4" d="M-1.7,-93.2L18.6,-79.3L36.6,-66.9L49.3,-57.4L58.9,-48.5L64,-41.6L66.6,-34.9L66.6,-28.2L64,-21.5L57.2,-12.9"/><path class="s5" d="M-1.3,-94.7L19,-80.7L37,-68.4L49.6,-58.9L59.2,-49.9L64.4,-43.1L67,-36.4L67,-29.7L64.4,-23L57.6,-14.4"/><path class="s0" d="M-2.6,-35L17.7,-21L35.7,-8.7L48.3,0.8L57.9,9.8L63.1,16.7L65.7,23.4L65.7,30L63.1,36.7L56.3,45.4"/><path class="s1" d="M-2.5,-35.6L17.8,-21.6L35.8,-9.2L48.4,0.3L58.1,9.2L63.2,16.1L65.8,22.8L65.8,29.4L63.2,36.2L56.4,44.8"/><path class="s2" d="M-2.3,-36.6L18,-22.6L36,-10.3L48.7,-0.8L58.3,8.1L63.4,15L66,21.7L66,28.4L63.4,35.1L56.6,43.7"/><path class="s3" d="M-2,-37.9L18.3,-23.9L36.3,-11.6L49,-2.1L58.6,6.9L63.7,13.7L66.3,20.5L66.3,27.1L63.7,33.8L56.9,42.5"/><path class="s4" d="M-1.7,-39.2L18.6,-25.3L36.6,-12.9L49.3,-3.4L58.9,5.5L64,12.4L66.6,19.1L66.6,25.8L64,32.5L57.2,41.1"/><path class="s5" d="M-1.3,-40.7L19,-26.7L37,-14.4L49.6,-4.9L59.2,4.1L64.4,10.9L67,17.6L67,24.3L64.4,31L57.6,39.6"/><path class="s0" d="M-2.6,-8L17.7,6L35.7,18.3L48.3,27.8L57.9,36.8L63.1,43.7L65.7,50.4L65.7,57L63.1,63.7L56.3,72.4"/><path class="s1" d="M-2.5,-8.6L17.8,5.4L35.8,17.8L48.4,27.3L58.1,36.2L63.2,43.1L65.8,49.8L65.8,56.4L63.2,63.2L56.4,71.8"/><path class="s2" d="M-2.3,-9.6L18,4.4L36,16.7L48.7,26.2L58.3,35.1L63.4,42L66,48.7L66,55.4L63.4,62.1L56.6,70.7"/><path class="s3" d="M-2,-10.9L18.3,3.1L36.3,15.4L49,24.9L58.6,33.9L63.7,40.7L66.3,47.5L66.3,54.1L63.7,60.8L56.9,69.5"/><path class="s4" d="M-1.7,-12.2L18.6,1.7L36.6,14.1L49.3,23.6L58.9,32.5L64,39.4L66.6,46.1L66.6,52.8L64,59.5L57.2,68.1"/><path class="s5" d="M-1.3,-13.7L19,0.3L37,12.6L49.6,22.1L59.2,31.1L64.4,37.9L67,44.6L67,51.3L64.4,58L57.6,66.6"/><path class="s0" d="M-2.6,19L17.7,33L35.7,45.3L48.3,54.8L57.9,63.8L63.1,70.7L65.7,77.4L65.7,84L63.1,90.7L56.3,99.4"/><path class="s1" d="M-2.5,18.4L17.8,32.4L35.8,44.8L48.4,54.3L58.1,63.2L63.2,70.1L65.8,76.8L65.8,83.4L63.2,90.2L56.4,98.8"/><path class="s2" d="M-2.3,17.4L18,31.4L36,43.7L48.7,53.2L58.3,62.1L63.4,69L66,75.7L66,82.4L63.4,89.1L56.6,97.7"/><path class="s3" d="M-2,16.1L18.3,30.1L36.3,42.4L49,51.9L58.6,60.9L63.7,67.7L66.3,74.5L66.3,81.1L63.7,87.8L56.9,96.5"/><path class="s4" d="M-1.7,14.8L18.6,28.7L36.6,41.1L49.3,50.6L58.9,59.5L64,66.4L66.6,73.1L66.6,79.8L64,86.5L57.2,95.1"/><path class="s5" d="M-1.3,13.3L19,27.3L37,39.6L49.6,49.1L59.2,58.1L64.4,64.9L67,71.6L67,78.3L64.4,85L57.6,93.6"/><path class="s0" d="M-2.6,46L17.7,60L35.7,72.3L48.3,81.8L57.9,90.8L63.1,97.7L65.7,104.4L65.7,111L63.1,117.7L56.3,126.4"/><path class="s1" d="M-2.5,45.4L17.8,59.4L35.8,71.8L48.4,81.3L58.1,90.2L63.2,97.1L65.8,103.8L65.8,110.4L63.2,117.2L56.4,125.8"/><path class="s2" d="M-2.3,44.4L18,58.4L36,70.7L48.7,80.2L58.3,89.1L63.4,96L66,102.7L66,109.4L63.4,116.1L56.6,124.7"/><path class="s3" d="M-2,43.1L18.3,57.1L36.3,69.4L49,78.9L58.6,87.9L63.7,94.7L66.3,101.5L66.3,108.1L63.7,114.8L56.9,123.5"/><path class="s4" d="M-1.7,41.8L18.6,55.7L36.6,68.1L49.3,77.6L58.9,86.5L64,93.4L66.6,100.1L66.6,106.8L64,113.5L57.2,122.1"/><path class="s5" d="M-1.3,40.3L19,54.3L37,66.6L49.6,76.1L59.2,85.1L64.4,91.9L67,98.6L67,105.3L64.4,112L57.6,120.6"/><path class="s0" d="M-2.6,100L17.7,114L35.7,126.3L48.3,135.8L57.9,144.8L63.1,151.7L65.7,158.4L65.7,165L63.1,171.7L56.3,180.4"/><path class="s1" d="M-2.5,99.4L17.8,113.4L35.8,125.8L48.4,135.3L58.1,144.2L63.2,151.1L65.8,157.8L65.8,164.4L63.2,171.2L56.4,179.8"/><path class="s2" d="M-2.3,98.4L18,112.4L36,124.7L48.7,134.2L58.3,143.1L63.4,150L66,156.7L66,163.4L63.4,170.1L56.6,178.7"/><path class="s3" d="M-2,97.1L18.3,111.1L36.3,123.4L49,132.9L58.6,141.9L63.7,148.7L66.3,155.5L66.3,162.1L63.7,168.8L56.9,177.5"/><path class="s4" d="M-1.7,95.8L18.6,109.7L36.6,122.1L49.3,131.6L58.9,140.5L64,147.4L66.6,154.1L66.6,160.8L64,167.5L57.2,176.1"/><path class="s5" d="M-1.3,94.3L19,108.3L37,120.6L49.6,130.1L59.2,139.1L64.4,145.9L67,152.6L67,159.3L64.4,166L57.6,174.6"/><path class="s0" d="M-2.6,127L17.7,141L35.7,153.3L48.3,162.8L57.9,171.8L63.1,178.7L65.7,185.4L65.7,192L63.1,198.7L56.3,207.4"/><path class="s1" d="M-2.5,126.4L17.8,140.4L35.8,152.8L48.4,162.3L58.1,171.2L63.2,178.1L65.8,184.8L65.8,191.4L63.2,198.2L56.4,206.8"/><path class="s2" d="M-2.3,125.4L18,139.4L36,151.7L48.7,161.2L58.3,170.1L63.4,177L66,183.7L66,190.4L63.4,197.1L56.6,205.7"/><path class="s3" d="M-2,124.1L18.3,138.1L36.3,150.4L49,159.9L58.6,168.9L63.7,175.7L66.3,182.5L66.3,189.1L63.7,195.8L56.9,204.5"/><path class="s4" d="M-1.7,122.8L18.6,136.7L36.6,149.1L49.3,158.6L58.9,167.5L64,174.4L66.6,181.1L66.6,187.8L64,194.5L57.2,203.1"/><path class="s5" d="M-1.3,121.3L19,135.3L37,147.6L49.6,157.1L59.2,166.1L64.4,172.9L67,179.6L67,186.3L64.4,193L57.6,201.6"/><path class="s0" d="M-2.6,154L17.7,168L35.7,180.3L48.3,189.8L57.9,198.8L63.1,205.7L65.7,212.4L65.7,219L63.1,225.7L56.3,234.4"/><path class="s1" d="M-2.5,153.4L17.8,167.4L35.8,179.8L48.4,189.3L58.1,198.2L63.2,205.1L65.8,211.8L65.8,218.4L63.2,225.2L56.4,233.8"/><path class="s2" d="M-2.3,152.4L18,166.4L36,178.7L48.7,188.2L58.3,197.1L63.4,204L66,210.7L66,217.4L63.4,224.1L56.6,232.7"/><path class="s3" d="M-2,151.1L18.3,165.1L36.3,177.4L49,186.9L58.6,195.9L63.7,202.7L66.3,209.5L66.3,216.1L63.7,222.8L56.9,231.5"/><path class="s4" d="M-1.7,149.8L18.6,163.7L36.6,176.1L49.3,185.6L58.9,194.5L64,201.4L66.6,208.1L66.6,214.8L64,221.5L57.2,230.1"/><path class="s5" d="M-1.3,148.3L19,162.3L37,174.6L49.6,184.1L59.2,193.1L64.4,199.9L67,206.6L67,213.3L64.4,220L57.6,228.6"/><path class="s0" d="M-2.6,181L17.7,195L35.7,207.3L48.3,216.8L57.9,225.8L63.1,232.7L65.7,239.4L65.7,246L63.1,252.7L56.3,261.4"/><path class="s1" d="M-2.5,180.4L17.8,194.4L35.8,206.8L48.4,216.3L58.1,225.2L63.2,232.1L65.8,238.8L65.8,245.4L63.2,252.2L56.4,260.8"/><path class="s2" d="M-2.3,179.4L18,193.4L36,205.7L48.7,215.2L58.3,224.1L63.4,231L66,237.7L66,244.4L63.4,251.1L56.6,259.7"/><path class="s3" d="M-2,178.1L18.3,192.1L36.3,204.4L49,213.9L58.6,222.9L63.7,229.7L66.3,236.5L66.3,243.1L63.7,249.8L56.9,258.5"/><path class="s4" d="M-1.7,176.8L18.6,190.7L36.6,203.1L49.3,212.6L58.9,221.5L64,228.4L66.6,235.1L66.6,241.8L64,248.5L57.2,257.1"/><path class="s5" d="M-1.3,175.3L19,189.3L37,201.6L49.6,211.1L59.2,220.1L64.4,226.9L67,233.6L67,240.3L64.4,247L57.6,255.6"/><g filter="url(#fBlur)"><path class="sg" d="M-19.4,-111.8L-13.7,-107.3L-7.9,-102.9L-2,-98.6L3.9,-94.3L9.8,-90.2L15.7,-86.2L21.5,-82.3L27.1,-78.6"/><path class="sh" d="M-13.7,-107.3L-7.9,-102.9L-2,-98.6L3.9,-94.3L9.8,-90.2L15.7,-86.2L21.5,-82.3"/><path class="sw" d="M-7.9,-102.9L-2,-98.6L3.9,-94.3L9.8,-90.2L15.7,-86.2"/><path class="sg" d="M-19.4,-57.8L-13.7,-53.3L-7.9,-48.9L-2,-44.6L3.9,-40.3L9.8,-36.2L15.7,-32.2L21.5,-28.3L27.1,-24.6"/><path class="sh" d="M-13.7,-53.3L-7.9,-48.9L-2,-44.6L3.9,-40.3L9.8,-36.2L15.7,-32.2L21.5,-28.3"/><path class="sw" d="M-7.9,-48.9L-2,-44.6L3.9,-40.3L9.8,-36.2L15.7,-32.2"/><path class="sg" d="M-19.4,-30.8L-13.7,-26.3L-7.9,-21.9L-2,-17.6L3.9,-13.3L9.8,-9.2L15.7,-5.2L21.5,-1.3L27.1,2.4"/><path class="sh" d="M-13.7,-26.3L-7.9,-21.9L-2,-17.6L3.9,-13.3L9.8,-9.2L15.7,-5.2L21.5,-1.3"/><path class="sw" d="M-7.9,-21.9L-2,-17.6L3.9,-13.3L9.8,-9.2L15.7,-5.2"/><path class="sg" d="M-19.4,-3.8L-13.7,0.7L-7.9,5.1L-2,9.4L3.9,13.7L9.8,17.8L15.7,21.8L21.5,25.7L27.1,29.4"/><path class="sh" d="M-13.7,0.7L-7.9,5.1L-2,9.4L3.9,13.7L9.8,17.8L15.7,21.8L21.5,25.7"/><path class="sw" d="M-7.9,5.1L-2,9.4L3.9,13.7L9.8,17.8L15.7,21.8"/><path class="sg" d="M-19.4,23.2L-13.7,27.7L-7.9,32.1L-2,36.4L3.9,40.7L9.8,44.8L15.7,48.8L21.5,52.7L27.1,56.4"/><path class="sh" d="M-13.7,27.7L-7.9,32.1L-2,36.4L3.9,40.7L9.8,44.8L15.7,48.8L21.5,52.7"/><path class="sw" d="M-7.9,32.1L-2,36.4L3.9,40.7L9.8,44.8L15.7,48.8"/><path class="sg" d="M-19.4,77.2L-13.7,81.7L-7.9,86.1L-2,90.4L3.9,94.7L9.8,98.8L15.7,102.8L21.5,106.7L27.1,110.4"/><path class="sh" d="M-13.7,81.7L-7.9,86.1L-2,90.4L3.9,94.7L9.8,98.8L15.7,102.8L21.5,106.7"/><path class="sw" d="M-7.9,86.1L-2,90.4L3.9,94.7L9.8,98.8L15.7,102.8"/><path class="sg" d="M-19.4,104.2L-13.7,108.7L-7.9,113.1L-2,117.4L3.9,121.7L9.8,125.8L15.7,129.8L21.5,133.7L27.1,137.4"/><path class="sh" d="M-13.7,108.7L-7.9,113.1L-2,117.4L3.9,121.7L9.8,125.8L15.7,129.8L21.5,133.7"/><path class="sw" d="M-7.9,113.1L-2,117.4L3.9,121.7L9.8,125.8L15.7,129.8"/><path class="sg" d="M-19.4,131.2L-13.7,135.7L-7.9,140.1L-2,144.4L3.9,148.7L9.8,152.8L15.7,156.8L21.5,160.7L27.1,164.4"/><path class="sh" d="M-13.7,135.7L-7.9,140.1L-2,144.4L3.9,148.7L9.8,152.8L15.7,156.8L21.5,160.7"/><path class="sw" d="M-7.9,140.1L-2,144.4L3.9,148.7L9.8,152.8L15.7,156.8"/><path class="sg" d="M-19.4,158.2L-13.7,162.7L-7.9,167.1L-2,171.4L3.9,175.7L9.8,179.8L15.7,183.8L21.5,187.7L27.1,191.4"/><path class="sh" d="M-13.7,162.7L-7.9,167.1L-2,171.4L3.9,175.7L9.8,179.8L15.7,183.8L21.5,187.7"/><path class="sw" d="M-7.9,167.1L-2,171.4L3.9,175.7L9.8,179.8L15.7,183.8"/></g><g clip-path="url(#cShade)"><path d="M-94,0 A94,24.4 0 0 0 94,0 L94,9 A94,24.4 0 0 1 -94,9 Z" fill="#1d3c5c" opacity="0.55"/><path d="M-94,8 A94,24.4 0 0 0 94,8 L94,15 A94,24.4 0 0 1 -94,15 Z" fill="#1d3c5c" opacity="0.22"/></g></g><path d="M-94.2,0 A94.2,24.4 0 0 0 94.2,0 L88,4.5 A88,23.5 0 0 1 -88,4.5 Z" fill="url(#gCham)"/><polygon points="-81.2,-68.6 -67,-73.6 -67,-44.6 -81.2,-47.4" fill="#3d7eb4"/><polygon points="-67,-73.6 -51.3,-72.5 -51.3,-41.8 -67,-44.6" fill="#4492cc"/><polygon points="-81.2,-68.6 -68,-74.7 -51.3,-73 -51.3,-71.6 -67,-72.5 -80.5,-67.2" fill="#4a9fde"/><polygon points="-36.6,-81.4 -30.8,-83.1 -30.8,-46 -36.6,-47.4" fill="#354e64"/><polygon points="-30.8,-83.1 -8.1,-83.9 -8.1,-44.6 -30.8,-46" fill="#4492cc"/><polygon points="-36.6,-81.4 -31.1,-84.2 -8.1,-85 -8.1,-83.3 -30.8,-82.2" fill="#4a9fde"/><polygon points="17.4,-78.3 38.3,-76.9 38.3,-44.6 17.4,-44.6" fill="url(#gBM3)"/><polygon points="38.3,-76.9 47.3,-80.8 47.3,-46 38.3,-44.6" fill="#4a9fde"/><polygon points="17.4,-78.3 21.6,-81.7 47.3,-80.8 38.3,-76.7" fill="#4a9fde"/><polygon points="57.8,-72.2 70.3,-65.5 70.3,-41.8 57.8,-43.2" fill="#354e64"/><polygon points="70.3,-65.5 84.9,-68.9 84.9,-50.2 70.3,-41.8" fill="#4a9fde"/><polygon points="57.8,-72.2 70.3,-75.5 84.9,-68.9 70.3,-65.2" fill="#4a9fde"/><ellipse cx="0" cy="-22" rx="93.8" ry="21" fill="url(#gBody)"/><ellipse cx="0" cy="-32.2" rx="92" ry="22.3" fill="#4594ce"/><ellipse cx="-0.5" cy="-31" rx="80" ry="18.5" fill="#428dc8"/><ellipse cx="-4.1" cy="-30.1" rx="55" ry="15" fill="#4695d0"/><path d="M-49.3,-39.2 Q-25,-44.1 6.4,-40.9" stroke="#2f5f8a" stroke-width="1.6" stroke-dasharray="3 2 5 3 2 6" fill="none" opacity="0.8"/><path d="M38.6,-36 L46.4,-35.4" stroke="#2b4a66" stroke-width="1.4" fill="none"/><path d="M-58.9,-35.4 L-52.8,-34.3" stroke="#2b4a66" stroke-width="1.2" fill="none"/><polygon points="-95.3,-58.4 -93.5,-63.9 -76.6,-63.7 -76.6,-50.3 -88.8,-47.9 -88.8,-19.5 -95.3,-25.1" fill="#4a9fde"/><polygon points="-93.5,-55.8 -88.9,-55.8 -88.9,-20.4 -93.5,-24.8" fill="#3f86bf"/><polygon points="73.1,-56.5 76.9,-59.9 92,-59.7 92,-20.9 73.1,-20.9" fill="#4a9fde"/><polygon points="78.7,-52.7 89.3,-52.7 89.3,-24.1 78.7,-25.1" fill="#418bc6"/><path d="M-94.9,-24.6 L-94.2,0 A94,24.4 0 0 0 94.2,0 L93.4,-24.6 A94,20 0 0 1 -94.9,-24.6 Z" fill="url(#gBody)"/><polygon points="-51.1,-33.1 -24.1,-37.1 4.6,-37.1 4.6,-3.5 -24.1,-3.8 -51.1,-7.2" fill="url(#gBody)"/><polygon points="-18.9,-21.4 4.6,-17.6 4.6,-9.2 -18.9,-9.6" fill="url(#gNotch)"/><path d="M-18.9,-21.4 Q-11.9,-31.3 4.6,-33.4 L4.6,-17.6 Q-7.6,-16.9 -18.9,-21.4 Z" fill="#4a9fde"/><polygon points="4.2,-44.6 38.3,-42.1 33.4,-36.3 4.2,-36.8" fill="#4a9fde"/><polygon points="4.2,-36.8 33.4,-36.3 33.4,-4.9 4.2,-2.8" fill="#479bd9"/><polygon points="33.4,-15.1 37.2,-14.3 37.2,-10.1 33.4,-10.5" fill="#35648f"/><path d="M4.6,-37.1 L4.6,-3.5" stroke="#3a7db5" stroke-width="0.8" fill="none"/><polygon points="-88.8,-48.8 -73.7,-42 -73.7,-18.6 -88.8,-21.9" fill="#354e64"/><polygon points="-88.8,-49 -76.2,-51.1 -66,-47.4 -51.4,-37.8 -51.4,-7.7 -73.7,-12.8 -73.7,-42" fill="#4798d5"/><polygon points="-88.8,-49 -76.2,-51.1 -66,-47.4 -51.4,-37.8 -73.7,-42" fill="#4a9fde"/><polygon points="48,-41.6 58.5,-39 58.5,-10.2 48,-15.8" fill="#354e64"/><polygon points="48,-41.6 63.4,-46.8 78.1,-45.2 78.1,-8.4 58.5,-10.2 58.5,-39" fill="#4899d7"/><polygon points="48,-41.6 63.4,-46.8 78.1,-45.2 58.5,-39" fill="#4a9fde"/></g>
<g transform="translate(261,344.5)"><path d="M-117.5,299 A117.5,30.5 0 0 0 117.5,299 L112.5,305 A112.5,32.5 0 0 1 -112.5,305 Z" fill="url(#gDarkBot)"/><path d="M-115.5,282 A115.5,27.5 0 0 0 115.5,282 L117.5,299 A117.5,30.5 0 0 1 -117.5,299 Z" fill="url(#gTier)"/><path d="M-105.5,248 A105.5,30 0 0 0 105.5,248 L115.5,282 A115.5,27.5 0 0 1 -115.5,282 Z" fill="url(#gTier)"/><path d="M-115.5,282 A115.5,27.5 0 0 0 115.5,282" stroke="#2f6293" stroke-width="1.6" fill="none" opacity="0.7"/><path d="M-115.5,283.6 A115.5,27.5 0 0 0 115.5,283.6" stroke="#58abe8" stroke-width="1.2" fill="none" opacity="0.8"/><path d="M-96,261.4 L-105.1,292.4" stroke="#2c5c8b" stroke-width="1.5" fill="none" opacity="0.85"/><path d="M-94.6,261.4 L-103.7,292.4" stroke="#5aaeea" stroke-width="1" fill="none" opacity="0.7"/><path d="M-57,274.2 L-62.4,304.1" stroke="#2c5c8b" stroke-width="1.5" fill="none" opacity="0.85"/><path d="M-55.6,274.2 L-61,304.1" stroke="#5aaeea" stroke-width="1" fill="none" opacity="0.7"/><path d="M8.5,278.9 L9.3,308.4" stroke="#2c5c8b" stroke-width="1.5" fill="none" opacity="0.85"/><path d="M9.9,278.9 L10.7,308.4" stroke="#5aaeea" stroke-width="1" fill="none" opacity="0.7"/><path d="M66,272.4 L72.3,302.5" stroke="#2c5c8b" stroke-width="1.5" fill="none" opacity="0.85"/><path d="M67.4,272.4 L73.7,302.5" stroke="#5aaeea" stroke-width="1" fill="none" opacity="0.7"/><path d="M98,260.1 L107.3,291.2" stroke="#2c5c8b" stroke-width="1.5" fill="none" opacity="0.85"/><path d="M99.4,260.1 L108.7,291.2" stroke="#5aaeea" stroke-width="1" fill="none" opacity="0.7"/><path d="M-108,293.7 L-109.9,309.8" stroke="#2c5c8b" stroke-width="1.5" fill="none" opacity="0.85"/><path d="M-106.6,293.7 L-108.5,309.8" stroke="#5aaeea" stroke-width="1" fill="none" opacity="0.7"/><path d="M-86,302.4 L-87.5,319.4" stroke="#2c5c8b" stroke-width="1.5" fill="none" opacity="0.85"/><path d="M-84.6,302.4 L-86.1,319.4" stroke="#5aaeea" stroke-width="1" fill="none" opacity="0.7"/><path d="M-25,310.8 L-25.4,328.8" stroke="#2c5c8b" stroke-width="1.5" fill="none" opacity="0.85"/><path d="M-23.6,310.8 L-24,328.8" stroke="#5aaeea" stroke-width="1" fill="none" opacity="0.7"/><path d="M45,309.3 L45.8,327.1" stroke="#2c5c8b" stroke-width="1.5" fill="none" opacity="0.85"/><path d="M46.4,309.3 L47.2,327.1" stroke="#5aaeea" stroke-width="1" fill="none" opacity="0.7"/><path d="M97,298.9 L98.7,315.6" stroke="#2c5c8b" stroke-width="1.5" fill="none" opacity="0.85"/><path d="M98.4,298.9 L100.1,315.6" stroke="#5aaeea" stroke-width="1" fill="none" opacity="0.7"/><ellipse cx="0" cy="248" rx="105.5" ry="30" fill="url(#gLedge)"/><path d="M-94,186.8 A94,27.4 0 0 0 94,186.8 L94,240 A94,32.5 0 0 1 -94,240 Z" fill="url(#gBody)"/><path d="M-94,240 A94,32.5 0 0 0 94,240" stroke="#2c5c8b" stroke-width="1.5" fill="none" opacity="0.5"/><g clip-path="url(#cBase)"><text font-family="Liberation Sans, sans-serif" font-weight="bold" font-size="68" fill="url(#gText)" filter="url(#fEng)"><tspan x="-85.2" y="263" textLength="20.8" lengthAdjust="spacingAndGlyphs">f</tspan><tspan x="-61.4" y="263" textLength="35.7" lengthAdjust="spacingAndGlyphs">o</tspan><tspan x="-28.3" y="266.5" textLength="19.5" lengthAdjust="spacingAndGlyphs">r</tspan><tspan x="-14.6" y="271.5" textLength="70.2" lengthAdjust="spacingAndGlyphs">m</tspan><tspan x="60.2" y="265.3" textLength="12.9" lengthAdjust="spacingAndGlyphs">l</tspan><tspan x="71.9" y="259.5" textLength="32.4" lengthAdjust="spacingAndGlyphs">a</tspan></text></g><ellipse cx="0" cy="188" rx="94" ry="27.4" fill="url(#gTop)"/><polygon points="-84,327 -72,324 -63,317.5 -57,314.5 -51,317.5 -45,324 -40,329 -30,330.5 -23,337 -23,337.6 -32,337 -42,336 -52,334.6 -62,332.9 -72,330.8 -84,327.4" fill="#ffffff"/><g clip-path="url(#cCol)"><rect x="-52" y="0" width="104" height="196" fill="#30689c"/><path class="b0" d="M63.1,-118.3L66,-107.9L62.6,-97.5L53.1,-86.6L38.5,-75L20.2,-62.4L0,-48.5L-20.2,-33.4L-38.5,-17L-53.1,0.3L-62.6,18.5L-66,37L-63.1,55.5"/><path class="b1" d="M62.6,-115.3L65.5,-104.9L62.1,-94.5L52.6,-83.6L38,-72L19.7,-59.4L-0.5,-45.5L-20.7,-30.4L-39,-14L-53.6,3.3L-63.1,21.5L-66.5,40L-63.6,58.5"/><path class="b0" d="M63.1,-91.3L66,-80.9L62.6,-70.5L53.1,-59.6L38.5,-48L20.2,-35.4L0,-21.5L-20.2,-6.4L-38.5,10L-53.1,27.3L-62.6,45.5L-66,64L-63.1,82.5"/><path class="b1" d="M62.6,-88.3L65.5,-77.9L62.1,-67.5L52.6,-56.6L38,-45L19.7,-32.4L-0.5,-18.5L-20.7,-3.4L-39,13L-53.6,30.3L-63.1,48.5L-66.5,67L-63.6,85.5"/><path class="b0" d="M63.1,-64.3L66,-53.9L62.6,-43.5L53.1,-32.6L38.5,-21L20.2,-8.4L0,5.5L-20.2,20.6L-38.5,37L-53.1,54.3L-62.6,72.5L-66,91L-63.1,109.5"/><path class="b1" d="M62.6,-61.3L65.5,-50.9L62.1,-40.5L52.6,-29.6L38,-18L19.7,-5.4L-0.5,8.5L-20.7,23.6L-39,40L-53.6,57.3L-63.1,75.5L-66.5,94L-63.6,112.5"/><path class="b0" d="M63.1,-37.3L66,-26.9L62.6,-16.5L53.1,-5.6L38.5,6L20.2,18.6L0,32.5L-20.2,47.6L-38.5,64L-53.1,81.3L-62.6,99.5L-66,118L-63.1,136.5"/><path class="b1" d="M62.6,-34.3L65.5,-23.9L62.1,-13.5L52.6,-2.6L38,9L19.7,21.6L-0.5,35.5L-20.7,50.6L-39,67L-53.6,84.3L-63.1,102.5L-66.5,121L-63.6,139.5"/><path class="b0" d="M63.1,16.7L66,27.1L62.6,37.5L53.1,48.4L38.5,60L20.2,72.6L0,86.5L-20.2,101.6L-38.5,118L-53.1,135.3L-62.6,153.5L-66,172L-63.1,190.5"/><path class="b1" d="M62.6,19.7L65.5,30.1L62.1,40.5L52.6,51.4L38,63L19.7,75.6L-0.5,89.5L-20.7,104.6L-39,121L-53.6,138.3L-63.1,156.5L-66.5,175L-63.6,193.5"/><path class="b0" d="M63.1,43.7L66,54.1L62.6,64.5L53.1,75.4L38.5,87L20.2,99.6L0,113.5L-20.2,128.6L-38.5,145L-53.1,162.3L-62.6,180.5L-66,199L-63.1,217.5"/><path class="b1" d="M62.6,46.7L65.5,57.1L62.1,67.5L52.6,78.4L38,90L19.7,102.6L-0.5,116.5L-20.7,131.6L-39,148L-53.6,165.3L-63.1,183.5L-66.5,202L-63.6,220.5"/><path class="b0" d="M63.1,70.7L66,81.1L62.6,91.5L53.1,102.4L38.5,114L20.2,126.6L0,140.5L-20.2,155.6L-38.5,172L-53.1,189.3L-62.6,207.5L-66,226L-63.1,244.5"/><path class="b1" d="M62.6,73.7L65.5,84.1L62.1,94.5L52.6,105.4L38,117L19.7,129.6L-0.5,143.5L-20.7,158.6L-39,175L-53.6,192.3L-63.1,210.5L-66.5,229L-63.6,247.5"/><path class="b0" d="M63.1,97.7L66,108.1L62.6,118.5L53.1,129.4L38.5,141L20.2,153.6L0,167.5L-20.2,182.6L-38.5,199L-53.1,216.3L-62.6,234.5L-66,253L-63.1,271.5"/><path class="b1" d="M62.6,100.7L65.5,111.1L62.1,121.5L52.6,132.4L38,144L19.7,156.6L-0.5,170.5L-20.7,185.6L-39,202L-53.6,219.3L-63.1,237.5L-66.5,256L-63.6,274.5"/><path class="b0" d="M63.1,151.7L66,162.1L62.6,172.5L53.1,183.4L38.5,195L20.2,207.6L0,221.5L-20.2,236.6L-38.5,253L-53.1,270.3L-62.6,288.5L-66,307L-63.1,325.5"/><path class="b1" d="M62.6,154.7L65.5,165.1L62.1,175.5L52.6,186.4L38,198L19.7,210.6L-0.5,224.5L-20.7,239.6L-39,256L-53.6,273.3L-63.1,291.5L-66.5,310L-63.6,328.5"/><path class="b0" d="M63.1,178.7L66,189.1L62.6,199.5L53.1,210.4L38.5,222L20.2,234.6L0,248.5L-20.2,263.6L-38.5,280L-53.1,297.3L-62.6,315.5L-66,334L-63.1,352.5"/><path class="b1" d="M62.6,181.7L65.5,192.1L62.1,202.5L52.6,213.4L38,225L19.7,237.6L-0.5,251.5L-20.7,266.6L-39,283L-53.6,300.3L-63.1,318.5L-66.5,337L-63.6,355.5"/><path class="b0" d="M63.1,205.7L66,216.1L62.6,226.5L53.1,237.4L38.5,249L20.2,261.6L0,275.5L-20.2,290.6L-38.5,307L-53.1,324.3L-62.6,342.5L-66,361L-63.1,379.5"/><path class="b1" d="M62.6,208.7L65.5,219.1L62.1,229.5L52.6,240.4L38,252L19.7,264.6L-0.5,278.5L-20.7,293.6L-39,310L-53.6,327.3L-63.1,345.5L-66.5,364L-63.6,382.5"/><path class="c0" d="M0.3,20L-4.3,24L-8,28L-9.9,32L-9.3,36L-6.3,40L-2,44L2.3,48L5.3,52L5.9,56L4,60L0.3,64L-4.3,68L-8,72L-9.9,76L-9.3,80L-6.3,84L-2,88L2.3,92L5.3,96L5.9,100L4,104L0.3,108L-4.3,112L-8,116L-9.9,120L-9.3,124L-6.3,128L-2,132L2.3,136L5.3,140L5.9,144L4,148L0.3,152L-4.3,156L-8,160L-9.9,164L-9.3,168L-6.3,172L-2,176L2.3,180L5.3,184L5.9,188"/><path class="c1" d="M0.3,20L-4.3,24L-8,28L-9.9,32L-9.3,36L-6.3,40L-2,44L2.3,48L5.3,52L5.9,56L4,60L0.3,64L-4.3,68L-8,72L-9.9,76L-9.3,80L-6.3,84L-2,88L2.3,92L5.3,96L5.9,100L4,104L0.3,108L-4.3,112L-8,116L-9.9,120L-9.3,124L-6.3,128L-2,132L2.3,136L5.3,140L5.9,144L4,148L0.3,152L-4.3,156L-8,160L-9.9,164L-9.3,168L-6.3,172L-2,176L2.3,180L5.3,184L5.9,188"/><path class="c0" d="M-4.3,20L0.3,24L4,28L5.9,32L5.3,36L2.3,40L-2,44L-6.3,48L-9.3,52L-9.9,56L-8,60L-4.3,64L0.3,68L4,72L5.9,76L5.3,80L2.3,84L-2,88L-6.3,92L-9.3,96L-9.9,100L-8,104L-4.3,108L0.3,112L4,116L5.9,120L5.3,124L2.3,128L-2,132L-6.3,136L-9.3,140L-9.9,144L-8,148L-4.3,152L0.3,156L4,160L5.9,164L5.3,168L2.3,172L-2,176L-6.3,180L-9.3,184L-9.9,188"/><path class="c1" d="M-4.3,20L0.3,24L4,28L5.9,32L5.3,36L2.3,40L-2,44L-6.3,48L-9.3,52L-9.9,56L-8,60L-4.3,64L0.3,68L4,72L5.9,76L5.3,80L2.3,84L-2,88L-6.3,92L-9.3,96L-9.9,100L-8,104L-4.3,108L0.3,112L4,116L5.9,120L5.3,124L2.3,128L-2,132L-6.3,136L-9.3,140L-9.9,144L-8,148L-4.3,152L0.3,156L4,160L5.9,164L5.3,168L2.3,172L-2,176L-6.3,180L-9.3,184L-9.9,188"/><path class="s0" d="M-56.3,172.2L-63.1,186.9L-65.7,198.7L-65.7,210.7L-63.1,222.5L-57.9,234.3L-48.3,248.6L-35.7,262.3L-17.7,277.8L2.6,292.7"/><path class="s1" d="M-56.1,171.7L-62.9,186.3L-65.5,198.2L-65.5,210.1L-62.9,222L-57.8,233.7L-48.2,248L-35.5,261.7L-17.5,277.3L2.8,292.2"/><path class="s2" d="M-55.9,170.6L-62.7,185.2L-65.3,197.1L-65.3,209L-62.7,220.9L-57.5,232.6L-47.9,246.9L-35.3,260.6L-17.3,276.2L3,291.1"/><path class="s3" d="M-55.6,169.3L-62.4,183.9L-65,195.8L-65,207.8L-62.4,219.6L-57.3,231.4L-47.6,245.6L-35,259.4L-17,274.9L3.3,289.8"/><path class="s4" d="M-55.3,168L-62.1,182.6L-64.7,194.5L-64.7,206.4L-62.1,218.3L-57,230L-47.3,244.3L-34.7,258L-16.7,273.6L3.6,288.5"/><path class="s5" d="M-55,166.5L-61.8,181.1L-64.4,193L-64.4,204.9L-61.8,216.8L-56.6,228.5L-47,242.8L-34.4,256.6L-16.4,272.1L3.9,287"/><path class="s0" d="M-56.3,145.2L-63.1,159.9L-65.7,171.7L-65.7,183.7L-63.1,195.5L-57.9,207.3L-48.3,221.6L-35.7,235.3L-17.7,250.8L2.6,265.7"/><path class="s1" d="M-56.1,144.7L-62.9,159.3L-65.5,171.2L-65.5,183.1L-62.9,195L-57.8,206.7L-48.2,221L-35.5,234.7L-17.5,250.3L2.8,265.2"/><path class="s2" d="M-55.9,143.6L-62.7,158.2L-65.3,170.1L-65.3,182L-62.7,193.9L-57.5,205.6L-47.9,219.9L-35.3,233.6L-17.3,249.2L3,264.1"/><path class="s3" d="M-55.6,142.3L-62.4,156.9L-65,168.8L-65,180.8L-62.4,192.6L-57.3,204.4L-47.6,218.6L-35,232.4L-17,247.9L3.3,262.8"/><path class="s4" d="M-55.3,141L-62.1,155.6L-64.7,167.5L-64.7,179.4L-62.1,191.3L-57,203L-47.3,217.3L-34.7,231L-16.7,246.6L3.6,261.5"/><path class="s5" d="M-55,139.5L-61.8,154.1L-64.4,166L-64.4,177.9L-61.8,189.8L-56.6,201.5L-47,215.8L-34.4,229.6L-16.4,245.1L3.9,260"/><path class="s0" d="M-56.3,118.2L-63.1,132.9L-65.7,144.7L-65.7,156.7L-63.1,168.5L-57.9,180.3L-48.3,194.6L-35.7,208.3L-17.7,223.8L2.6,238.7"/><path class="s1" d="M-56.1,117.7L-62.9,132.3L-65.5,144.2L-65.5,156.1L-62.9,168L-57.8,179.7L-48.2,194L-35.5,207.7L-17.5,223.3L2.8,238.2"/><path class="s2" d="M-55.9,116.6L-62.7,131.2L-65.3,143.1L-65.3,155L-62.7,166.9L-57.5,178.6L-47.9,192.9L-35.3,206.6L-17.3,222.2L3,237.1"/><path class="s3" d="M-55.6,115.3L-62.4,129.9L-65,141.8L-65,153.8L-62.4,165.6L-57.3,177.4L-47.6,191.6L-35,205.4L-17,220.9L3.3,235.8"/><path class="s4" d="M-55.3,114L-62.1,128.6L-64.7,140.5L-64.7,152.4L-62.1,164.3L-57,176L-47.3,190.3L-34.7,204L-16.7,219.6L3.6,234.5"/><path class="s5" d="M-55,112.5L-61.8,127.1L-64.4,139L-64.4,150.9L-61.8,162.8L-56.6,174.5L-47,188.8L-34.4,202.6L-16.4,218.1L3.9,233"/><path class="s0" d="M-56.3,64.2L-63.1,78.9L-65.7,90.7L-65.7,102.7L-63.1,114.5L-57.9,126.3L-48.3,140.6L-35.7,154.3L-17.7,169.8L2.6,184.7"/><path class="s1" d="M-56.1,63.7L-62.9,78.3L-65.5,90.2L-65.5,102.1L-62.9,114L-57.8,125.7L-48.2,140L-35.5,153.7L-17.5,169.3L2.8,184.2"/><path class="s2" d="M-55.9,62.6L-62.7,77.2L-65.3,89.1L-65.3,101L-62.7,112.9L-57.5,124.6L-47.9,138.9L-35.3,152.6L-17.3,168.2L3,183.1"/><path class="s3" d="M-55.6,61.3L-62.4,75.9L-65,87.8L-65,99.8L-62.4,111.6L-57.3,123.4L-47.6,137.6L-35,151.4L-17,166.9L3.3,181.8"/><path class="s4" d="M-55.3,60L-62.1,74.6L-64.7,86.5L-64.7,98.4L-62.1,110.3L-57,122L-47.3,136.3L-34.7,150L-16.7,165.6L3.6,180.5"/><path class="s5" d="M-55,58.5L-61.8,73.1L-64.4,85L-64.4,96.9L-61.8,108.8L-56.6,120.5L-47,134.8L-34.4,148.6L-16.4,164.1L3.9,179"/><path class="s0" d="M-56.3,37.2L-63.1,51.9L-65.7,63.7L-65.7,75.7L-63.1,87.5L-57.9,99.3L-48.3,113.6L-35.7,127.3L-17.7,142.8L2.6,157.7"/><path class="s1" d="M-56.1,36.7L-62.9,51.3L-65.5,63.2L-65.5,75.1L-62.9,87L-57.8,98.7L-48.2,113L-35.5,126.7L-17.5,142.3L2.8,157.2"/><path class="s2" d="M-55.9,35.6L-62.7,50.2L-65.3,62.1L-65.3,74L-62.7,85.9L-57.5,97.6L-47.9,111.9L-35.3,125.6L-17.3,141.2L3,156.1"/><path class="s3" d="M-55.6,34.3L-62.4,48.9L-65,60.8L-65,72.8L-62.4,84.6L-57.3,96.4L-47.6,110.6L-35,124.4L-17,139.9L3.3,154.8"/><path class="s4" d="M-55.3,33L-62.1,47.6L-64.7,59.5L-64.7,71.4L-62.1,83.3L-57,95L-47.3,109.3L-34.7,123L-16.7,138.6L3.6,153.5"/><path class="s5" d="M-55,31.5L-61.8,46.1L-64.4,58L-64.4,69.9L-61.8,81.8L-56.6,93.5L-47,107.8L-34.4,121.6L-16.4,137.1L3.9,152"/><path class="s0" d="M-56.3,10.2L-63.1,24.9L-65.7,36.7L-65.7,48.7L-63.1,60.5L-57.9,72.3L-48.3,86.6L-35.7,100.3L-17.7,115.8L2.6,130.7"/><path class="s1" d="M-56.1,9.7L-62.9,24.3L-65.5,36.2L-65.5,48.1L-62.9,60L-57.8,71.7L-48.2,86L-35.5,99.7L-17.5,115.3L2.8,130.2"/><path class="s2" d="M-55.9,8.6L-62.7,23.2L-65.3,35.1L-65.3,47L-62.7,58.9L-57.5,70.6L-47.9,84.9L-35.3,98.6L-17.3,114.2L3,129.1"/><path class="s3" d="M-55.6,7.3L-62.4,21.9L-65,33.8L-65,45.8L-62.4,57.6L-57.3,69.4L-47.6,83.6L-35,97.4L-17,112.9L3.3,127.8"/><path class="s4" d="M-55.3,6L-62.1,20.6L-64.7,32.5L-64.7,44.4L-62.1,56.3L-57,68L-47.3,82.3L-34.7,96L-16.7,111.6L3.6,126.5"/><path class="s5" d="M-55,4.5L-61.8,19.1L-64.4,31L-64.4,42.9L-61.8,54.8L-56.6,66.5L-47,80.8L-34.4,94.6L-16.4,110.1L3.9,125"/><path class="s0" d="M-56.3,-16.8L-63.1,-2.1L-65.7,9.7L-65.7,21.7L-63.1,33.5L-57.9,45.3L-48.3,59.6L-35.7,73.3L-17.7,88.8L2.6,103.7"/><path class="s1" d="M-56.1,-17.3L-62.9,-2.7L-65.5,9.2L-65.5,21.1L-62.9,33L-57.8,44.7L-48.2,59L-35.5,72.7L-17.5,88.3L2.8,103.2"/><path class="s2" d="M-55.9,-18.4L-62.7,-3.8L-65.3,8.1L-65.3,20L-62.7,31.9L-57.5,43.6L-47.9,57.9L-35.3,71.6L-17.3,87.2L3,102.1"/><path class="s3" d="M-55.6,-19.7L-62.4,-5.1L-65,6.8L-65,18.8L-62.4,30.6L-57.3,42.4L-47.6,56.6L-35,70.4L-17,85.9L3.3,100.8"/><path class="s4" d="M-55.3,-21L-62.1,-6.4L-64.7,5.5L-64.7,17.4L-62.1,29.3L-57,41L-47.3,55.3L-34.7,69L-16.7,84.6L3.6,99.5"/><path class="s5" d="M-55,-22.5L-61.8,-7.9L-64.4,4L-64.4,15.9L-61.8,27.8L-56.6,39.5L-47,53.8L-34.4,67.6L-16.4,83.1L3.9,98"/><path class="s0" d="M-56.3,-70.8L-63.1,-56.1L-65.7,-44.3L-65.7,-32.3L-63.1,-20.5L-57.9,-8.7L-48.3,5.6L-35.7,19.3L-17.7,34.8L2.6,49.7"/><path class="s1" d="M-56.1,-71.3L-62.9,-56.7L-65.5,-44.8L-65.5,-32.9L-62.9,-21L-57.8,-9.3L-48.2,5L-35.5,18.7L-17.5,34.3L2.8,49.2"/><path class="s2" d="M-55.9,-72.4L-62.7,-57.8L-65.3,-45.9L-65.3,-34L-62.7,-22.1L-57.5,-10.4L-47.9,3.9L-35.3,17.6L-17.3,33.2L3,48.1"/><path class="s3" d="M-55.6,-73.7L-62.4,-59.1L-65,-47.2L-65,-35.2L-62.4,-23.4L-57.3,-11.6L-47.6,2.6L-35,16.4L-17,31.9L3.3,46.8"/><path class="s4" d="M-55.3,-75L-62.1,-60.4L-64.7,-48.5L-64.7,-36.6L-62.1,-24.7L-57,-13L-47.3,1.3L-34.7,15L-16.7,30.6L3.6,45.5"/><path class="s5" d="M-55,-76.5L-61.8,-61.9L-64.4,-50L-64.4,-38.1L-61.8,-26.2L-56.6,-14.5L-47,-0.2L-34.4,13.6L-16.4,29.1L3.9,44"/><path class="s0" d="M-56.3,-97.8L-63.1,-83.1L-65.7,-71.3L-65.7,-59.3L-63.1,-47.5L-57.9,-35.7L-48.3,-21.4L-35.7,-7.7L-17.7,7.8L2.6,22.7"/><path class="s1" d="M-56.1,-98.3L-62.9,-83.7L-65.5,-71.8L-65.5,-59.9L-62.9,-48L-57.8,-36.3L-48.2,-22L-35.5,-8.3L-17.5,7.3L2.8,22.2"/><path class="s2" d="M-55.9,-99.4L-62.7,-84.8L-65.3,-72.9L-65.3,-61L-62.7,-49.1L-57.5,-37.4L-47.9,-23.1L-35.3,-9.4L-17.3,6.2L3,21.1"/><path class="s3" d="M-55.6,-100.7L-62.4,-86.1L-65,-74.2L-65,-62.2L-62.4,-50.4L-57.3,-38.6L-47.6,-24.4L-35,-10.6L-17,4.9L3.3,19.8"/><path class="s4" d="M-55.3,-102L-62.1,-87.4L-64.7,-75.5L-64.7,-63.6L-62.1,-51.7L-57,-40L-47.3,-25.7L-34.7,-12L-16.7,3.6L3.6,18.5"/><path class="s5" d="M-55,-103.5L-61.8,-88.9L-64.4,-77L-64.4,-65.1L-61.8,-53.2L-56.6,-41.5L-47,-27.2L-34.4,-13.4L-16.4,2.1L3.9,17"/><path class="s0" d="M-56.3,-124.8L-63.1,-110.1L-65.7,-98.3L-65.7,-86.3L-63.1,-74.5L-57.9,-62.7L-48.3,-48.4L-35.7,-34.7L-17.7,-19.2L2.6,-4.3"/><path class="s1" d="M-56.1,-125.3L-62.9,-110.7L-65.5,-98.8L-65.5,-86.9L-62.9,-75L-57.8,-63.3L-48.2,-49L-35.5,-35.3L-17.5,-19.7L2.8,-4.8"/><path class="s2" d="M-55.9,-126.4L-62.7,-111.8L-65.3,-99.9L-65.3,-88L-62.7,-76.1L-57.5,-64.4L-47.9,-50.1L-35.3,-36.4L-17.3,-20.8L3,-5.9"/><path class="s3" d="M-55.6,-127.7L-62.4,-113.1L-65,-101.2L-65,-89.2L-62.4,-77.4L-57.3,-65.6L-47.6,-51.4L-35,-37.6L-17,-22.1L3.3,-7.2"/><path class="s4" d="M-55.3,-129L-62.1,-114.4L-64.7,-102.5L-64.7,-90.6L-62.1,-78.7L-57,-67L-47.3,-52.7L-34.7,-39L-16.7,-23.4L3.6,-8.5"/><path class="s5" d="M-55,-130.5L-61.8,-115.9L-64.4,-104L-64.4,-92.1L-61.8,-80.2L-56.6,-68.5L-47,-54.2L-34.4,-40.4L-16.4,-24.9L3.9,-10"/><path class="s0" d="M-2.6,-89L17.7,-75L35.7,-62.7L48.3,-53.2L57.9,-44.2L63.1,-37.3L65.7,-30.6L65.7,-24L63.1,-17.3L56.3,-8.6"/><path class="s1" d="M-2.5,-89.6L17.8,-75.6L35.8,-63.2L48.4,-53.7L58.1,-44.8L63.2,-37.9L65.8,-31.2L65.8,-24.6L63.2,-17.8L56.4,-9.2"/><path class="s2" d="M-2.3,-90.6L18,-76.6L36,-64.3L48.7,-54.8L58.3,-45.9L63.4,-39L66,-32.3L66,-25.6L63.4,-18.9L56.6,-10.3"/><path class="s3" d="M-2,-91.9L18.3,-77.9L36.3,-65.6L49,-56.1L58.6,-47.1L63.7,-40.3L66.3,-33.5L66.3,-26.9L63.7,-20.2L56.9,-11.5"/><path class="s4" d="M-1.7,-93.2L18.6,-79.3L36.6,-66.9L49.3,-57.4L58.9,-48.5L64,-41.6L66.6,-34.9L66.6,-28.2L64,-21.5L57.2,-12.9"/><path class="s5" d="M-1.3,-94.7L19,-80.7L37,-68.4L49.6,-58.9L59.2,-49.9L64.4,-43.1L67,-36.4L67,-29.7L64.4,-23L57.6,-14.4"/><path class="s0" d="M-2.6,-35L17.7,-21L35.7,-8.7L48.3,0.8L57.9,9.8L63.1,16.7L65.7,23.4L65.7,30L63.1,36.7L56.3,45.4"/><path class="s1" d="M-2.5,-35.6L17.8,-21.6L35.8,-9.2L48.4,0.3L58.1,9.2L63.2,16.1L65.8,22.8L65.8,29.4L63.2,36.2L56.4,44.8"/><path class="s2" d="M-2.3,-36.6L18,-22.6L36,-10.3L48.7,-0.8L58.3,8.1L63.4,15L66,21.7L66,28.4L63.4,35.1L56.6,43.7"/><path class="s3" d="M-2,-37.9L18.3,-23.9L36.3,-11.6L49,-2.1L58.6,6.9L63.7,13.7L66.3,20.5L66.3,27.1L63.7,33.8L56.9,42.5"/><path class="s4" d="M-1.7,-39.2L18.6,-25.3L36.6,-12.9L49.3,-3.4L58.9,5.5L64,12.4L66.6,19.1L66.6,25.8L64,32.5L57.2,41.1"/><path class="s5" d="M-1.3,-40.7L19,-26.7L37,-14.4L49.6,-4.9L59.2,4.1L64.4,10.9L67,17.6L67,24.3L64.4,31L57.6,39.6"/><path class="s0" d="M-2.6,-8L17.7,6L35.7,18.3L48.3,27.8L57.9,36.8L63.1,43.7L65.7,50.4L65.7,57L63.1,63.7L56.3,72.4"/><path class="s1" d="M-2.5,-8.6L17.8,5.4L35.8,17.8L48.4,27.3L58.1,36.2L63.2,43.1L65.8,49.8L65.8,56.4L63.2,63.2L56.4,71.8"/><path class="s2" d="M-2.3,-9.6L18,4.4L36,16.7L48.7,26.2L58.3,35.1L63.4,42L66,48.7L66,55.4L63.4,62.1L56.6,70.7"/><path class="s3" d="M-2,-10.9L18.3,3.1L36.3,15.4L49,24.9L58.6,33.9L63.7,40.7L66.3,47.5L66.3,54.1L63.7,60.8L56.9,69.5"/><path class="s4" d="M-1.7,-12.2L18.6,1.7L36.6,14.1L49.3,23.6L58.9,32.5L64,39.4L66.6,46.1L66.6,52.8L64,59.5L57.2,68.1"/><path class="s5" d="M-1.3,-13.7L19,0.3L37,12.6L49.6,22.1L59.2,31.1L64.4,37.9L67,44.6L67,51.3L64.4,58L57.6,66.6"/><path class="s0" d="M-2.6,19L17.7,33L35.7,45.3L48.3,54.8L57.9,63.8L63.1,70.7L65.7,77.4L65.7,84L63.1,90.7L56.3,99.4"/><path class="s1" d="M-2.5,18.4L17.8,32.4L35.8,44.8L48.4,54.3L58.1,63.2L63.2,70.1L65.8,76.8L65.8,83.4L63.2,90.2L56.4,98.8"/><path class="s2" d="M-2.3,17.4L18,31.4L36,43.7L48.7,53.2L58.3,62.1L63.4,69L66,75.7L66,82.4L63.4,89.1L56.6,97.7"/><path class="s3" d="M-2,16.1L18.3,30.1L36.3,42.4L49,51.9L58.6,60.9L63.7,67.7L66.3,74.5L66.3,81.1L63.7,87.8L56.9,96.5"/><path class="s4" d="M-1.7,14.8L18.6,28.7L36.6,41.1L49.3,50.6L58.9,59.5L64,66.4L66.6,73.1L66.6,79.8L64,86.5L57.2,95.1"/><path class="s5" d="M-1.3,13.3L19,27.3L37,39.6L49.6,49.1L59.2,58.1L64.4,64.9L67,71.6L67,78.3L64.4,85L57.6,93.6"/><path class="s0" d="M-2.6,46L17.7,60L35.7,72.3L48.3,81.8L57.9,90.8L63.1,97.7L65.7,104.4L65.7,111L63.1,117.7L56.3,126.4"/><path class="s1" d="M-2.5,45.4L17.8,59.4L35.8,71.8L48.4,81.3L58.1,90.2L63.2,97.1L65.8,103.8L65.8,110.4L63.2,117.2L56.4,125.8"/><path class="s2" d="M-2.3,44.4L18,58.4L36,70.7L48.7,80.2L58.3,89.1L63.4,96L66,102.7L66,109.4L63.4,116.1L56.6,124.7"/><path class="s3" d="M-2,43.1L18.3,57.1L36.3,69.4L49,78.9L58.6,87.9L63.7,94.7L66.3,101.5L66.3,108.1L63.7,114.8L56.9,123.5"/><path class="s4" d="M-1.7,41.8L18.6,55.7L36.6,68.1L49.3,77.6L58.9,86.5L64,93.4L66.6,100.1L66.6,106.8L64,113.5L57.2,122.1"/><path class="s5" d="M-1.3,40.3L19,54.3L37,66.6L49.6,76.1L59.2,85.1L64.4,91.9L67,98.6L67,105.3L64.4,112L57.6,120.6"/><path class="s0" d="M-2.6,100L17.7,114L35.7,126.3L48.3,135.8L57.9,144.8L63.1,151.7L65.7,158.4L65.7,165L63.1,171.7L56.3,180.4"/><path class="s1" d="M-2.5,99.4L17.8,113.4L35.8,125.8L48.4,135.3L58.1,144.2L63.2,151.1L65.8,157.8L65.8,164.4L63.2,171.2L56.4,179.8"/><path class="s2" d="M-2.3,98.4L18,112.4L36,124.7L48.7,134.2L58.3,143.1L63.4,150L66,156.7L66,163.4L63.4,170.1L56.6,178.7"/><path class="s3" d="M-2,97.1L18.3,111.1L36.3,123.4L49,132.9L58.6,141.9L63.7,148.7L66.3,155.5L66.3,162.1L63.7,168.8L56.9,177.5"/><path class="s4" d="M-1.7,95.8L18.6,109.7L36.6,122.1L49.3,131.6L58.9,140.5L64,147.4L66.6,154.1L66.6,160.8L64,167.5L57.2,176.1"/><path class="s5" d="M-1.3,94.3L19,108.3L37,120.6L49.6,130.1L59.2,139.1L64.4,145.9L67,152.6L67,159.3L64.4,166L57.6,174.6"/><path class="s0" d="M-2.6,127L17.7,141L35.7,153.3L48.3,162.8L57.9,171.8L63.1,178.7L65.7,185.4L65.7,192L63.1,198.7L56.3,207.4"/><path class="s1" d="M-2.5,126.4L17.8,140.4L35.8,152.8L48.4,162.3L58.1,171.2L63.2,178.1L65.8,184.8L65.8,191.4L63.2,198.2L56.4,206.8"/><path class="s2" d="M-2.3,125.4L18,139.4L36,151.7L48.7,161.2L58.3,170.1L63.4,177L66,183.7L66,190.4L63.4,197.1L56.6,205.7"/><path class="s3" d="M-2,124.1L18.3,138.1L36.3,150.4L49,159.9L58.6,168.9L63.7,175.7L66.3,182.5L66.3,189.1L63.7,195.8L56.9,204.5"/><path class="s4" d="M-1.7,122.8L18.6,136.7L36.6,149.1L49.3,158.6L58.9,167.5L64,174.4L66.6,181.1L66.6,187.8L64,194.5L57.2,203.1"/><path class="s5" d="M-1.3,121.3L19,135.3L37,147.6L49.6,157.1L59.2,166.1L64.4,172.9L67,179.6L67,186.3L64.4,193L57.6,201.6"/><path class="s0" d="M-2.6,154L17.7,168L35.7,180.3L48.3,189.8L57.9,198.8L63.1,205.7L65.7,212.4L65.7,219L63.1,225.7L56.3,234.4"/><path class="s1" d="M-2.5,153.4L17.8,167.4L35.8,179.8L48.4,189.3L58.1,198.2L63.2,205.1L65.8,211.8L65.8,218.4L63.2,225.2L56.4,233.8"/><path class="s2" d="M-2.3,152.4L18,166.4L36,178.7L48.7,188.2L58.3,197.1L63.4,204L66,210.7L66,217.4L63.4,224.1L56.6,232.7"/><path class="s3" d="M-2,151.1L18.3,165.1L36.3,177.4L49,186.9L58.6,195.9L63.7,202.7L66.3,209.5L66.3,216.1L63.7,222.8L56.9,231.5"/><path class="s4" d="M-1.7,149.8L18.6,163.7L36.6,176.1L49.3,185.6L58.9,194.5L64,201.4L66.6,208.1L66.6,214.8L64,221.5L57.2,230.1"/><path class="s5" d="M-1.3,148.3L19,162.3L37,174.6L49.6,184.1L59.2,193.1L64.4,199.9L67,206.6L67,213.3L64.4,220L57.6,228.6"/><path class="s0" d="M-2.6,181L17.7,195L35.7,207.3L48.3,216.8L57.9,225.8L63.1,232.7L65.7,239.4L65.7,246L63.1,252.7L56.3,261.4"/><path class="s1" d="M-2.5,180.4L17.8,194.4L35.8,206.8L48.4,216.3L58.1,225.2L63.2,232.1L65.8,238.8L65.8,245.4L63.2,252.2L56.4,260.8"/><path class="s2" d="M-2.3,179.4L18,193.4L36,205.7L48.7,215.2L58.3,224.1L63.4,231L66,237.7L66,244.4L63.4,251.1L56.6,259.7"/><path class="s3" d="M-2,178.1L18.3,192.1L36.3,204.4L49,213.9L58.6,222.9L63.7,229.7L66.3,236.5L66.3,243.1L63.7,249.8L56.9,258.5"/><path class="s4" d="M-1.7,176.8L18.6,190.7L36.6,203.1L49.3,212.6L58.9,221.5L64,228.4L66.6,235.1L66.6,241.8L64,248.5L57.2,257.1"/><path class="s5" d="M-1.3,175.3L19,189.3L37,201.6L49.6,211.1L59.2,220.1L64.4,226.9L67,233.6L67,240.3L64.4,247L57.6,255.6"/><g filter="url(#fBlur)"><path class="sg" d="M-19.4,-111.8L-13.7,-107.3L-7.9,-102.9L-2,-98.6L3.9,-94.3L9.8,-90.2L15.7,-86.2L21.5,-82.3L27.1,-78.6"/><path class="sh" d="M-13.7,-107.3L-7.9,-102.9L-2,-98.6L3.9,-94.3L9.8,-90.2L15.7,-86.2L21.5,-82.3"/><path class="sw" d="M-7.9,-102.9L-2,-98.6L3.9,-94.3L9.8,-90.2L15.7,-86.2"/><path class="sg" d="M-19.4,-57.8L-13.7,-53.3L-7.9,-48.9L-2,-44.6L3.9,-40.3L9.8,-36.2L15.7,-32.2L21.5,-28.3L27.1,-24.6"/><path class="sh" d="M-13.7,-53.3L-7.9,-48.9L-2,-44.6L3.9,-40.3L9.8,-36.2L15.7,-32.2L21.5,-28.3"/><path class="sw" d="M-7.9,-48.9L-2,-44.6L3.9,-40.3L9.8,-36.2L15.7,-32.2"/><path class="sg" d="M-19.4,-30.8L-13.7,-26.3L-7.9,-21.9L-2,-17.6L3.9,-13.3L9.8,-9.2L15.7,-5.2L21.5,-1.3L27.1,2.4"/><path class="sh" d="M-13.7,-26.3L-7.9,-21.9L-2,-17.6L3.9,-13.3L9.8,-9.2L15.7,-5.2L21.5,-1.3"/><path class="sw" d="M-7.9,-21.9L-2,-17.6L3.9,-13.3L9.8,-9.2L15.7,-5.2"/><path class="sg" d="M-19.4,-3.8L-13.7,0.7L-7.9,5.1L-2,9.4L3.9,13.7L9.8,17.8L15.7,21.8L21.5,25.7L27.1,29.4"/><path class="sh" d="M-13.7,0.7L-7.9,5.1L-2,9.4L3.9,13.7L9.8,17.8L15.7,21.8L21.5,25.7"/><path class="sw" d="M-7.9,5.1L-2,9.4L3.9,13.7L9.8,17.8L15.7,21.8"/><path class="sg" d="M-19.4,23.2L-13.7,27.7L-7.9,32.1L-2,36.4L3.9,40.7L9.8,44.8L15.7,48.8L21.5,52.7L27.1,56.4"/><path class="sh" d="M-13.7,27.7L-7.9,32.1L-2,36.4L3.9,40.7L9.8,44.8L15.7,48.8L21.5,52.7"/><path class="sw" d="M-7.9,32.1L-2,36.4L3.9,40.7L9.8,44.8L15.7,48.8"/><path class="sg" d="M-19.4,77.2L-13.7,81.7L-7.9,86.1L-2,90.4L3.9,94.7L9.8,98.8L15.7,102.8L21.5,106.7L27.1,110.4"/><path class="sh" d="M-13.7,81.7L-7.9,86.1L-2,90.4L3.9,94.7L9.8,98.8L15.7,102.8L21.5,106.7"/><path class="sw" d="M-7.9,86.1L-2,90.4L3.9,94.7L9.8,98.8L15.7,102.8"/><path class="sg" d="M-19.4,104.2L-13.7,108.7L-7.9,113.1L-2,117.4L3.9,121.7L9.8,125.8L15.7,129.8L21.5,133.7L27.1,137.4"/><path class="sh" d="M-13.7,108.7L-7.9,113.1L-2,117.4L3.9,121.7L9.8,125.8L15.7,129.8L21.5,133.7"/><path class="sw" d="M-7.9,113.1L-2,117.4L3.9,121.7L9.8,125.8L15.7,129.8"/><path class="sg" d="M-19.4,131.2L-13.7,135.7L-7.9,140.1L-2,144.4L3.9,148.7L9.8,152.8L15.7,156.8L21.5,160.7L27.1,164.4"/><path class="sh" d="M-13.7,135.7L-7.9,140.1L-2,144.4L3.9,148.7L9.8,152.8L15.7,156.8L21.5,160.7"/><path class="sw" d="M-7.9,140.1L-2,144.4L3.9,148.7L9.8,152.8L15.7,156.8"/><path class="sg" d="M-19.4,158.2L-13.7,162.7L-7.9,167.1L-2,171.4L3.9,175.7L9.8,179.8L15.7,183.8L21.5,187.7L27.1,191.4"/><path class="sh" d="M-13.7,162.7L-7.9,167.1L-2,171.4L3.9,175.7L9.8,179.8L15.7,183.8L21.5,187.7"/><path class="sw" d="M-7.9,167.1L-2,171.4L3.9,175.7L9.8,179.8L15.7,183.8"/></g><g clip-path="url(#cShade)"><path d="M-94,0 A94,24.4 0 0 0 94,0 L94,9 A94,24.4 0 0 1 -94,9 Z" fill="#1d3c5c" opacity="0.55"/><path d="M-94,8 A94,24.4 0 0 0 94,8 L94,15 A94,24.4 0 0 1 -94,15 Z" fill="#1d3c5c" opacity="0.22"/></g></g><path d="M-94.2,0 A94.2,24.4 0 0 0 94.2,0 L88,4.5 A88,23.5 0 0 1 -88,4.5 Z" fill="url(#gCham)"/><polygon points="-81.2,-68.6 -67,-73.6 -67,-44.6 -81.2,-47.4" fill="#3d7eb4"/><polygon points="-67,-73.6 -51.3,-72.5 -51.3,-41.8 -67,-44.6" fill="#4492cc"/><polygon points="-81.2,-68.6 -68,-74.7 -51.3,-73 -51.3,-71.6 -67,-72.5 -80.5,-67.2" fill="#4a9fde"/><polygon points="-36.6,-81.4 -30.8,-83.1 -30.8,-46 -36.6,-47.4" fill="#354e64"/><polygon points="-30.8,-83.1 -8.1,-83.9 -8.1,-44.6 -30.8,-46" fill="#4492cc"/><polygon points="-36.6,-81.4 -31.1,-84.2 -8.1,-85 -8.1,-83.3 -30.8,-82.2" fill="#4a9fde"/><polygon points="17.4,-78.3 38.3,-76.9 38.3,-44.6 17.4,-44.6" fill="url(#gBM3)"/><polygon points="38.3,-76.9 47.3,-80.8 47.3,-46 38.3,-44.6" fill="#4a9fde"/><polygon points="17.4,-78.3 21.6,-81.7 47.3,-80.8 38.3,-76.7" fill="#4a9fde"/><polygon points="57.8,-72.2 70.3,-65.5 70.3,-41.8 57.8,-43.2" fill="#354e64"/><polygon points="70.3,-65.5 84.9,-68.9 84.9,-50.2 70.3,-41.8" fill="#4a9fde"/><polygon points="57.8,-72.2 70.3,-75.5 84.9,-68.9 70.3,-65.2" fill="#4a9fde"/><ellipse cx="0" cy="-22" rx="93.8" ry="21" fill="url(#gBody)"/><ellipse cx="0" cy="-32.2" rx="92" ry="22.3" fill="#4594ce"/><ellipse cx="-0.5" cy="-31" rx="80" ry="18.5" fill="#428dc8"/><ellipse cx="-4.1" cy="-30.1" rx="55" ry="15" fill="#4695d0"/><path d="M-49.3,-39.2 Q-25,-44.1 6.4,-40.9" stroke="#2f5f8a" stroke-width="1.6" stroke-dasharray="3 2 5 3 2 6" fill="none" opacity="0.8"/><path d="M38.6,-36 L46.4,-35.4" stroke="#2b4a66" stroke-width="1.4" fill="none"/><path d="M-58.9,-35.4 L-52.8,-34.3" stroke="#2b4a66" stroke-width="1.2" fill="none"/><polygon points="-95.3,-58.4 -93.5,-63.9 -76.6,-63.7 -76.6,-50.3 -88.8,-47.9 -88.8,-19.5 -95.3,-25.1" fill="#4a9fde"/><polygon points="-93.5,-55.8 -88.9,-55.8 -88.9,-20.4 -93.5,-24.8" fill="#3f86bf"/><polygon points="73.1,-56.5 76.9,-59.9 92,-59.7 92,-20.9 73.1,-20.9" fill="#4a9fde"/><polygon points="78.7,-52.7 89.3,-52.7 89.3,-24.1 78.7,-25.1" fill="#418bc6"/><path d="M-94.9,-24.6 L-94.2,0 A94,24.4 0 0 0 94.2,0 L93.4,-24.6 A94,20 0 0 1 -94.9,-24.6 Z" fill="url(#gBody)"/><polygon points="-51.1,-33.1 -24.1,-37.1 4.6,-37.1 4.6,-3.5 -24.1,-3.8 -51.1,-7.2" fill="url(#gBody)"/><polygon points="-18.9,-21.4 4.6,-17.6 4.6,-9.2 -18.9,-9.6" fill="url(#gNotch)"/><path d="M-18.9,-21.4 Q-11.9,-31.3 4.6,-33.4 L4.6,-17.6 Q-7.6,-16.9 -18.9,-21.4 Z" fill="#4a9fde"/><polygon points="4.2,-44.6 38.3,-42.1 33.4,-36.3 4.2,-36.8" fill="#4a9fde"/><polygon points="4.2,-36.8 33.4,-36.3 33.4,-4.9 4.2,-2.8" fill="#479bd9"/><polygon points="33.4,-15.1 37.2,-14.3 37.2,-10.1 33.4,-10.5" fill="#35648f"/><path d="M4.6,-37.1 L4.6,-3.5" stroke="#3a7db5" stroke-width="0.8" fill="none"/><polygon points="-88.8,-48.8 -73.7,-42 -73.7,-18.6 -88.8,-21.9" fill="#354e64"/><polygon points="-88.8,-49 -76.2,-51.1 -66,-47.4 -51.4,-37.8 -51.4,-7.7 -73.7,-12.8 -73.7,-42" fill="#4798d5"/><polygon points="-88.8,-49 -76.2,-51.1 -66,-47.4 -51.4,-37.8 -73.7,-42" fill="#4a9fde"/><polygon points="48,-41.6 58.5,-39 58.5,-10.2 48,-15.8" fill="#354e64"/><polygon points="48,-41.6 63.4,-46.8 78.1,-45.2 78.1,-8.4 58.5,-10.2 58.5,-39" fill="#4899d7"/><polygon points="48,-41.6 63.4,-46.8 78.1,-45.2 58.5,-39" fill="#4a9fde"/></g>
<g transform="translate(931.8,362.5)"><path d="M-117.5,299 A117.5,30.5 0 0 0 117.5,299 L112.5,305 A112.5,32.5 0 0 1 -112.5,305 Z" fill="url(#gDarkBot)"/><path d="M-115.5,282 A115.5,27.5 0 0 0 115.5,282 L117.5,299 A117.5,30.5 0 0 1 -117.5,299 Z" fill="url(#gTier)"/><path d="M-105.5,248 A105.5,30 0 0 0 105.5,248 L115.5,282 A115.5,27.5 0 0 1 -115.5,282 Z" fill="url(#gTier)"/><path d="M-115.5,282 A115.5,27.5 0 0 0 115.5,282" stroke="#2f6293" stroke-width="1.6" fill="none" opacity="0.7"/><path d="M-115.5,283.6 A115.5,27.5 0 0 0 115.5,283.6" stroke="#58abe8" stroke-width="1.2" fill="none" opacity="0.8"/><path d="M-96,261.4 L-105.1,292.4" stroke="#2c5c8b" stroke-width="1.5" fill="none" opacity="0.85"/><path d="M-94.6,261.4 L-103.7,292.4" stroke="#5aaeea" stroke-width="1" fill="none" opacity="0.7"/><path d="M-57,274.2 L-62.4,304.1" stroke="#2c5c8b" stroke-width="1.5" fill="none" opacity="0.85"/><path d="M-55.6,274.2 L-61,304.1" stroke="#5aaeea" stroke-width="1" fill="none" opacity="0.7"/><path d="M8.5,278.9 L9.3,308.4" stroke="#2c5c8b" stroke-width="1.5" fill="none" opacity="0.85"/><path d="M9.9,278.9 L10.7,308.4" stroke="#5aaeea" stroke-width="1" fill="none" opacity="0.7"/><path d="M66,272.4 L72.3,302.5" stroke="#2c5c8b" stroke-width="1.5" fill="none" opacity="0.85"/><path d="M67.4,272.4 L73.7,302.5" stroke="#5aaeea" stroke-width="1" fill="none" opacity="0.7"/><path d="M98,260.1 L107.3,291.2" stroke="#2c5c8b" stroke-width="1.5" fill="none" opacity="0.85"/><path d="M99.4,260.1 L108.7,291.2" stroke="#5aaeea" stroke-width="1" fill="none" opacity="0.7"/><path d="M-108,293.7 L-109.9,309.8" stroke="#2c5c8b" stroke-width="1.5" fill="none" opacity="0.85"/><path d="M-106.6,293.7 L-108.5,309.8" stroke="#5aaeea" stroke-width="1" fill="none" opacity="0.7"/><path d="M-86,302.4 L-87.5,319.4" stroke="#2c5c8b" stroke-width="1.5" fill="none" opacity="0.85"/><path d="M-84.6,302.4 L-86.1,319.4" stroke="#5aaeea" stroke-width="1" fill="none" opacity="0.7"/><path d="M-25,310.8 L-25.4,328.8" stroke="#2c5c8b" stroke-width="1.5" fill="none" opacity="0.85"/><path d="M-23.6,310.8 L-24,328.8" stroke="#5aaeea" stroke-width="1" fill="none" opacity="0.7"/><path d="M45,309.3 L45.8,327.1" stroke="#2c5c8b" stroke-width="1.5" fill="none" opacity="0.85"/><path d="M46.4,309.3 L47.2,327.1" stroke="#5aaeea" stroke-width="1" fill="none" opacity="0.7"/><path d="M97,298.9 L98.7,315.6" stroke="#2c5c8b" stroke-width="1.5" fill="none" opacity="0.85"/><path d="M98.4,298.9 L100.1,315.6" stroke="#5aaeea" stroke-width="1" fill="none" opacity="0.7"/><ellipse cx="0" cy="248" rx="105.5" ry="30" fill="url(#gLedge)"/><path d="M-94,186.8 A94,27.4 0 0 0 94,186.8 L94,240 A94,32.5 0 0 1 -94,240 Z" fill="url(#gBody)"/><path d="M-94,240 A94,32.5 0 0 0 94,240" stroke="#2c5c8b" stroke-width="1.5" fill="none" opacity="0.5"/><g clip-path="url(#cBase)"><text font-family="Liberation Sans, sans-serif" font-weight="bold" font-size="68" fill="url(#gText)" filter="url(#fEng)"><tspan x="-85.2" y="263" textLength="20.8" lengthAdjust="spacingAndGlyphs">f</tspan><tspan x="-61.4" y="263" textLength="35.7" lengthAdjust="spacingAndGlyphs">o</tspan><tspan x="-28.3" y="266.5" textLength="19.5" lengthAdjust="spacingAndGlyphs">r</tspan><tspan x="-14.6" y="271.5" textLength="70.2" lengthAdjust="spacingAndGlyphs">m</tspan><tspan x="60.2" y="265.3" textLength="12.9" lengthAdjust="spacingAndGlyphs">l</tspan><tspan x="71.9" y="259.5" textLength="32.4" lengthAdjust="spacingAndGlyphs">a</tspan></text></g><ellipse cx="0" cy="188" rx="94" ry="27.4" fill="url(#gTop)"/><polygon points="-84,327 -72,324 -63,317.5 -57,314.5 -51,317.5 -45,324 -40,329 -30,330.5 -23,337 -23,337.6 -32,337 -42,336 -52,334.6 -62,332.9 -72,330.8 -84,327.4" fill="#ffffff"/><g clip-path="url(#cCol)"><rect x="-52" y="0" width="104" height="196" fill="#30689c"/><path class="b0" d="M63.1,-118.3L66,-107.9L62.6,-97.5L53.1,-86.6L38.5,-75L20.2,-62.4L0,-48.5L-20.2,-33.4L-38.5,-17L-53.1,0.3L-62.6,18.5L-66,37L-63.1,55.5"/><path class="b1" d="M62.6,-115.3L65.5,-104.9L62.1,-94.5L52.6,-83.6L38,-72L19.7,-59.4L-0.5,-45.5L-20.7,-30.4L-39,-14L-53.6,3.3L-63.1,21.5L-66.5,40L-63.6,58.5"/><path class="b0" d="M63.1,-91.3L66,-80.9L62.6,-70.5L53.1,-59.6L38.5,-48L20.2,-35.4L0,-21.5L-20.2,-6.4L-38.5,10L-53.1,27.3L-62.6,45.5L-66,64L-63.1,82.5"/><path class="b1" d="M62.6,-88.3L65.5,-77.9L62.1,-67.5L52.6,-56.6L38,-45L19.7,-32.4L-0.5,-18.5L-20.7,-3.4L-39,13L-53.6,30.3L-63.1,48.5L-66.5,67L-63.6,85.5"/><path class="b0" d="M63.1,-64.3L66,-53.9L62.6,-43.5L53.1,-32.6L38.5,-21L20.2,-8.4L0,5.5L-20.2,20.6L-38.5,37L-53.1,54.3L-62.6,72.5L-66,91L-63.1,109.5"/><path class="b1" d="M62.6,-61.3L65.5,-50.9L62.1,-40.5L52.6,-29.6L38,-18L19.7,-5.4L-0.5,8.5L-20.7,23.6L-39,40L-53.6,57.3L-63.1,75.5L-66.5,94L-63.6,112.5"/><path class="b0" d="M63.1,-37.3L66,-26.9L62.6,-16.5L53.1,-5.6L38.5,6L20.2,18.6L0,32.5L-20.2,47.6L-38.5,64L-53.1,81.3L-62.6,99.5L-66,118L-63.1,136.5"/><path class="b1" d="M62.6,-34.3L65.5,-23.9L62.1,-13.5L52.6,-2.6L38,9L19.7,21.6L-0.5,35.5L-20.7,50.6L-39,67L-53.6,84.3L-63.1,102.5L-66.5,121L-63.6,139.5"/><path class="b0" d="M63.1,16.7L66,27.1L62.6,37.5L53.1,48.4L38.5,60L20.2,72.6L0,86.5L-20.2,101.6L-38.5,118L-53.1,135.3L-62.6,153.5L-66,172L-63.1,190.5"/><path class="b1" d="M62.6,19.7L65.5,30.1L62.1,40.5L52.6,51.4L38,63L19.7,75.6L-0.5,89.5L-20.7,104.6L-39,121L-53.6,138.3L-63.1,156.5L-66.5,175L-63.6,193.5"/><path class="b0" d="M63.1,43.7L66,54.1L62.6,64.5L53.1,75.4L38.5,87L20.2,99.6L0,113.5L-20.2,128.6L-38.5,145L-53.1,162.3L-62.6,180.5L-66,199L-63.1,217.5"/><path class="b1" d="M62.6,46.7L65.5,57.1L62.1,67.5L52.6,78.4L38,90L19.7,102.6L-0.5,116.5L-20.7,131.6L-39,148L-53.6,165.3L-63.1,183.5L-66.5,202L-63.6,220.5"/><path class="b0" d="M63.1,70.7L66,81.1L62.6,91.5L53.1,102.4L38.5,114L20.2,126.6L0,140.5L-20.2,155.6L-38.5,172L-53.1,189.3L-62.6,207.5L-66,226L-63.1,244.5"/><path class="b1" d="M62.6,73.7L65.5,84.1L62.1,94.5L52.6,105.4L38,117L19.7,129.6L-0.5,143.5L-20.7,158.6L-39,175L-53.6,192.3L-63.1,210.5L-66.5,229L-63.6,247.5"/><path class="b0" d="M63.1,97.7L66,108.1L62.6,118.5L53.1,129.4L38.5,141L20.2,153.6L0,167.5L-20.2,182.6L-38.5,199L-53.1,216.3L-62.6,234.5L-66,253L-63.1,271.5"/><path class="b1" d="M62.6,100.7L65.5,111.1L62.1,121.5L52.6,132.4L38,144L19.7,156.6L-0.5,170.5L-20.7,185.6L-39,202L-53.6,219.3L-63.1,237.5L-66.5,256L-63.6,274.5"/><path class="b0" d="M63.1,151.7L66,162.1L62.6,172.5L53.1,183.4L38.5,195L20.2,207.6L0,221.5L-20.2,236.6L-38.5,253L-53.1,270.3L-62.6,288.5L-66,307L-63.1,325.5"/><path class="b1" d="M62.6,154.7L65.5,165.1L62.1,175.5L52.6,186.4L38,198L19.7,210.6L-0.5,224.5L-20.7,239.6L-39,256L-53.6,273.3L-63.1,291.5L-66.5,310L-63.6,328.5"/><path class="b0" d="M63.1,178.7L66,189.1L62.6,199.5L53.1,210.4L38.5,222L20.2,234.6L0,248.5L-20.2,263.6L-38.5,280L-53.1,297.3L-62.6,315.5L-66,334L-63.1,352.5"/><path class="b1" d="M62.6,181.7L65.5,192.1L62.1,202.5L52.6,213.4L38,225L19.7,237.6L-0.5,251.5L-20.7,266.6L-39,283L-53.6,300.3L-63.1,318.5L-66.5,337L-63.6,355.5"/><path class="b0" d="M63.1,205.7L66,216.1L62.6,226.5L53.1,237.4L38.5,249L20.2,261.6L0,275.5L-20.2,290.6L-38.5,307L-53.1,324.3L-62.6,342.5L-66,361L-63.1,379.5"/><path class="b1" d="M62.6,208.7L65.5,219.1L62.1,229.5L52.6,240.4L38,252L19.7,264.6L-0.5,278.5L-20.7,293.6L-39,310L-53.6,327.3L-63.1,345.5L-66.5,364L-63.6,382.5"/><path class="c0" d="M0.3,20L-4.3,24L-8,28L-9.9,32L-9.3,36L-6.3,40L-2,44L2.3,48L5.3,52L5.9,56L4,60L0.3,64L-4.3,68L-8,72L-9.9,76L-9.3,80L-6.3,84L-2,88L2.3,92L5.3,96L5.9,100L4,104L0.3,108L-4.3,112L-8,116L-9.9,120L-9.3,124L-6.3,128L-2,132L2.3,136L5.3,140L5.9,144L4,148L0.3,152L-4.3,156L-8,160L-9.9,164L-9.3,168L-6.3,172L-2,176L2.3,180L5.3,184L5.9,188"/><path class="c1" d="M0.3,20L-4.3,24L-8,28L-9.9,32L-9.3,36L-6.3,40L-2,44L2.3,48L5.3,52L5.9,56L4,60L0.3,64L-4.3,68L-8,72L-9.9,76L-9.3,80L-6.3,84L-2,88L2.3,92L5.3,96L5.9,100L4,104L0.3,108L-4.3,112L-8,116L-9.9,120L-9.3,124L-6.3,128L-2,132L2.3,136L5.3,140L5.9,144L4,148L0.3,152L-4.3,156L-8,160L-9.9,164L-9.3,168L-6.3,172L-2,176L2.3,180L5.3,184L5.9,188"/><path class="c0" d="M-4.3,20L0.3,24L4,28L5.9,32L5.3,36L2.3,40L-2,44L-6.3,48L-9.3,52L-9.9,56L-8,60L-4.3,64L0.3,68L4,72L5.9,76L5.3,80L2.3,84L-2,88L-6.3,92L-9.3,96L-9.9,100L-8,104L-4.3,108L0.3,112L4,116L5.9,120L5.3,124L2.3,128L-2,132L-6.3,136L-9.3,140L-9.9,144L-8,148L-4.3,152L0.3,156L4,160L5.9,164L5.3,168L2.3,172L-2,176L-6.3,180L-9.3,184L-9.9,188"/><path class="c1" d="M-4.3,20L0.3,24L4,28L5.9,32L5.3,36L2.3,40L-2,44L-6.3,48L-9.3,52L-9.9,56L-8,60L-4.3,64L0.3,68L4,72L5.9,76L5.3,80L2.3,84L-2,88L-6.3,92L-9.3,96L-9.9,100L-8,104L-4.3,108L0.3,112L4,116L5.9,120L5.3,124L2.3,128L-2,132L-6.3,136L-9.3,140L-9.9,144L-8,148L-4.3,152L0.3,156L4,160L5.9,164L5.3,168L2.3,172L-2,176L-6.3,180L-9.3,184L-9.9,188"/><path class="s0" d="M-56.3,172.2L-63.1,186.9L-65.7,198.7L-65.7,210.7L-63.1,222.5L-57.9,234.3L-48.3,248.6L-35.7,262.3L-17.7,277.8L2.6,292.7"/><path class="s1" d="M-56.1,171.7L-62.9,186.3L-65.5,198.2L-65.5,210.1L-62.9,222L-57.8,233.7L-48.2,248L-35.5,261.7L-17.5,277.3L2.8,292.2"/><path class="s2" d="M-55.9,170.6L-62.7,185.2L-65.3,197.1L-65.3,209L-62.7,220.9L-57.5,232.6L-47.9,246.9L-35.3,260.6L-17.3,276.2L3,291.1"/><path class="s3" d="M-55.6,169.3L-62.4,183.9L-65,195.8L-65,207.8L-62.4,219.6L-57.3,231.4L-47.6,245.6L-35,259.4L-17,274.9L3.3,289.8"/><path class="s4" d="M-55.3,168L-62.1,182.6L-64.7,194.5L-64.7,206.4L-62.1,218.3L-57,230L-47.3,244.3L-34.7,258L-16.7,273.6L3.6,288.5"/><path class="s5" d="M-55,166.5L-61.8,181.1L-64.4,193L-64.4,204.9L-61.8,216.8L-56.6,228.5L-47,242.8L-34.4,256.6L-16.4,272.1L3.9,287"/><path class="s0" d="M-56.3,145.2L-63.1,159.9L-65.7,171.7L-65.7,183.7L-63.1,195.5L-57.9,207.3L-48.3,221.6L-35.7,235.3L-17.7,250.8L2.6,265.7"/><path class="s1" d="M-56.1,144.7L-62.9,159.3L-65.5,171.2L-65.5,183.1L-62.9,195L-57.8,206.7L-48.2,221L-35.5,234.7L-17.5,250.3L2.8,265.2"/><path class="s2" d="M-55.9,143.6L-62.7,158.2L-65.3,170.1L-65.3,182L-62.7,193.9L-57.5,205.6L-47.9,219.9L-35.3,233.6L-17.3,249.2L3,264.1"/><path class="s3" d="M-55.6,142.3L-62.4,156.9L-65,168.8L-65,180.8L-62.4,192.6L-57.3,204.4L-47.6,218.6L-35,232.4L-17,247.9L3.3,262.8"/><path class="s4" d="M-55.3,141L-62.1,155.6L-64.7,167.5L-64.7,179.4L-62.1,191.3L-57,203L-47.3,217.3L-34.7,231L-16.7,246.6L3.6,261.5"/><path class="s5" d="M-55,139.5L-61.8,154.1L-64.4,166L-64.4,177.9L-61.8,189.8L-56.6,201.5L-47,215.8L-34.4,229.6L-16.4,245.1L3.9,260"/><path class="s0" d="M-56.3,118.2L-63.1,132.9L-65.7,144.7L-65.7,156.7L-63.1,168.5L-57.9,180.3L-48.3,194.6L-35.7,208.3L-17.7,223.8L2.6,238.7"/><path class="s1" d="M-56.1,117.7L-62.9,132.3L-65.5,144.2L-65.5,156.1L-62.9,168L-57.8,179.7L-48.2,194L-35.5,207.7L-17.5,223.3L2.8,238.2"/><path class="s2" d="M-55.9,116.6L-62.7,131.2L-65.3,143.1L-65.3,155L-62.7,166.9L-57.5,178.6L-47.9,192.9L-35.3,206.6L-17.3,222.2L3,237.1"/><path class="s3" d="M-55.6,115.3L-62.4,129.9L-65,141.8L-65,153.8L-62.4,165.6L-57.3,177.4L-47.6,191.6L-35,205.4L-17,220.9L3.3,235.8"/><path class="s4" d="M-55.3,114L-62.1,128.6L-64.7,140.5L-64.7,152.4L-62.1,164.3L-57,176L-47.3,190.3L-34.7,204L-16.7,219.6L3.6,234.5"/><path class="s5" d="M-55,112.5L-61.8,127.1L-64.4,139L-64.4,150.9L-61.8,162.8L-56.6,174.5L-47,188.8L-34.4,202.6L-16.4,218.1L3.9,233"/><path class="s0" d="M-56.3,64.2L-63.1,78.9L-65.7,90.7L-65.7,102.7L-63.1,114.5L-57.9,126.3L-48.3,140.6L-35.7,154.3L-17.7,169.8L2.6,184.7"/><path class="s1" d="M-56.1,63.7L-62.9,78.3L-65.5,90.2L-65.5,102.1L-62.9,114L-57.8,125.7L-48.2,140L-35.5,153.7L-17.5,169.3L2.8,184.2"/><path class="s2" d="M-55.9,62.6L-62.7,77.2L-65.3,89.1L-65.3,101L-62.7,112.9L-57.5,124.6L-47.9,138.9L-35.3,152.6L-17.3,168.2L3,183.1"/><path class="s3" d="M-55.6,61.3L-62.4,75.9L-65,87.8L-65,99.8L-62.4,111.6L-57.3,123.4L-47.6,137.6L-35,151.4L-17,166.9L3.3,181.8"/><path class="s4" d="M-55.3,60L-62.1,74.6L-64.7,86.5L-64.7,98.4L-62.1,110.3L-57,122L-47.3,136.3L-34.7,150L-16.7,165.6L3.6,180.5"/><path class="s5" d="M-55,58.5L-61.8,73.1L-64.4,85L-64.4,96.9L-61.8,108.8L-56.6,120.5L-47,134.8L-34.4,148.6L-16.4,164.1L3.9,179"/><path class="s0" d="M-56.3,37.2L-63.1,51.9L-65.7,63.7L-65.7,75.7L-63.1,87.5L-57.9,99.3L-48.3,113.6L-35.7,127.3L-17.7,142.8L2.6,157.7"/><path class="s1" d="M-56.1,36.7L-62.9,51.3L-65.5,63.2L-65.5,75.1L-62.9,87L-57.8,98.7L-48.2,113L-35.5,126.7L-17.5,142.3L2.8,157.2"/><path class="s2" d="M-55.9,35.6L-62.7,50.2L-65.3,62.1L-65.3,74L-62.7,85.9L-57.5,97.6L-47.9,111.9L-35.3,125.6L-17.3,141.2L3,156.1"/><path class="s3" d="M-55.6,34.3L-62.4,48.9L-65,60.8L-65,72.8L-62.4,84.6L-57.3,96.4L-47.6,110.6L-35,124.4L-17,139.9L3.3,154.8"/><path class="s4" d="M-55.3,33L-62.1,47.6L-64.7,59.5L-64.7,71.4L-62.1,83.3L-57,95L-47.3,109.3L-34.7,123L-16.7,138.6L3.6,153.5"/><path class="s5" d="M-55,31.5L-61.8,46.1L-64.4,58L-64.4,69.9L-61.8,81.8L-56.6,93.5L-47,107.8L-34.4,121.6L-16.4,137.1L3.9,152"/><path class="s0" d="M-56.3,10.2L-63.1,24.9L-65.7,36.7L-65.7,48.7L-63.1,60.5L-57.9,72.3L-48.3,86.6L-35.7,100.3L-17.7,115.8L2.6,130.7"/><path class="s1" d="M-56.1,9.7L-62.9,24.3L-65.5,36.2L-65.5,48.1L-62.9,60L-57.8,71.7L-48.2,86L-35.5,99.7L-17.5,115.3L2.8,130.2"/><path class="s2" d="M-55.9,8.6L-62.7,23.2L-65.3,35.1L-65.3,47L-62.7,58.9L-57.5,70.6L-47.9,84.9L-35.3,98.6L-17.3,114.2L3,129.1"/><path class="s3" d="M-55.6,7.3L-62.4,21.9L-65,33.8L-65,45.8L-62.4,57.6L-57.3,69.4L-47.6,83.6L-35,97.4L-17,112.9L3.3,127.8"/><path class="s4" d="M-55.3,6L-62.1,20.6L-64.7,32.5L-64.7,44.4L-62.1,56.3L-57,68L-47.3,82.3L-34.7,96L-16.7,111.6L3.6,126.5"/><path class="s5" d="M-55,4.5L-61.8,19.1L-64.4,31L-64.4,42.9L-61.8,54.8L-56.6,66.5L-47,80.8L-34.4,94.6L-16.4,110.1L3.9,125"/><path class="s0" d="M-56.3,-16.8L-63.1,-2.1L-65.7,9.7L-65.7,21.7L-63.1,33.5L-57.9,45.3L-48.3,59.6L-35.7,73.3L-17.7,88.8L2.6,103.7"/><path class="s1" d="M-56.1,-17.3L-62.9,-2.7L-65.5,9.2L-65.5,21.1L-62.9,33L-57.8,44.7L-48.2,59L-35.5,72.7L-17.5,88.3L2.8,103.2"/><path class="s2" d="M-55.9,-18.4L-62.7,-3.8L-65.3,8.1L-65.3,20L-62.7,31.9L-57.5,43.6L-47.9,57.9L-35.3,71.6L-17.3,87.2L3,102.1"/><path class="s3" d="M-55.6,-19.7L-62.4,-5.1L-65,6.8L-65,18.8L-62.4,30.6L-57.3,42.4L-47.6,56.6L-35,70.4L-17,85.9L3.3,100.8"/><path class="s4" d="M-55.3,-21L-62.1,-6.4L-64.7,5.5L-64.7,17.4L-62.1,29.3L-57,41L-47.3,55.3L-34.7,69L-16.7,84.6L3.6,99.5"/><path class="s5" d="M-55,-22.5L-61.8,-7.9L-64.4,4L-64.4,15.9L-61.8,27.8L-56.6,39.5L-47,53.8L-34.4,67.6L-16.4,83.1L3.9,98"/><path class="s0" d="M-56.3,-70.8L-63.1,-56.1L-65.7,-44.3L-65.7,-32.3L-63.1,-20.5L-57.9,-8.7L-48.3,5.6L-35.7,19.3L-17.7,34.8L2.6,49.7"/><path class="s1" d="M-56.1,-71.3L-62.9,-56.7L-65.5,-44.8L-65.5,-32.9L-62.9,-21L-57.8,-9.3L-48.2,5L-35.5,18.7L-17.5,34.3L2.8,49.2"/><path class="s2" d="M-55.9,-72.4L-62.7,-57.8L-65.3,-45.9L-65.3,-34L-62.7,-22.1L-57.5,-10.4L-47.9,3.9L-35.3,17.6L-17.3,33.2L3,48.1"/><path class="s3" d="M-55.6,-73.7L-62.4,-59.1L-65,-47.2L-65,-35.2L-62.4,-23.4L-57.3,-11.6L-47.6,2.6L-35,16.4L-17,31.9L3.3,46.8"/><path class="s4" d="M-55.3,-75L-62.1,-60.4L-64.7,-48.5L-64.7,-36.6L-62.1,-24.7L-57,-13L-47.3,1.3L-34.7,15L-16.7,30.6L3.6,45.5"/><path class="s5" d="M-55,-76.5L-61.8,-61.9L-64.4,-50L-64.4,-38.1L-61.8,-26.2L-56.6,-14.5L-47,-0.2L-34.4,13.6L-16.4,29.1L3.9,44"/><path class="s0" d="M-56.3,-97.8L-63.1,-83.1L-65.7,-71.3L-65.7,-59.3L-63.1,-47.5L-57.9,-35.7L-48.3,-21.4L-35.7,-7.7L-17.7,7.8L2.6,22.7"/><path class="s1" d="M-56.1,-98.3L-62.9,-83.7L-65.5,-71.8L-65.5,-59.9L-62.9,-48L-57.8,-36.3L-48.2,-22L-35.5,-8.3L-17.5,7.3L2.8,22.2"/><path class="s2" d="M-55.9,-99.4L-62.7,-84.8L-65.3,-72.9L-65.3,-61L-62.7,-49.1L-57.5,-37.4L-47.9,-23.1L-35.3,-9.4L-17.3,6.2L3,21.1"/><path class="s3" d="M-55.6,-100.7L-62.4,-86.1L-65,-74.2L-65,-62.2L-62.4,-50.4L-57.3,-38.6L-47.6,-24.4L-35,-10.6L-17,4.9L3.3,19.8"/><path class="s4" d="M-55.3,-102L-62.1,-87.4L-64.7,-75.5L-64.7,-63.6L-62.1,-51.7L-57,-40L-47.3,-25.7L-34.7,-12L-16.7,3.6L3.6,18.5"/><path class="s5" d="M-55,-103.5L-61.8,-88.9L-64.4,-77L-64.4,-65.1L-61.8,-53.2L-56.6,-41.5L-47,-27.2L-34.4,-13.4L-16.4,2.1L3.9,17"/><path class="s0" d="M-56.3,-124.8L-63.1,-110.1L-65.7,-98.3L-65.7,-86.3L-63.1,-74.5L-57.9,-62.7L-48.3,-48.4L-35.7,-34.7L-17.7,-19.2L2.6,-4.3"/><path class="s1" d="M-56.1,-125.3L-62.9,-110.7L-65.5,-98.8L-65.5,-86.9L-62.9,-75L-57.8,-63.3L-48.2,-49L-35.5,-35.3L-17.5,-19.7L2.8,-4.8"/><path class="s2" d="M-55.9,-126.4L-62.7,-111.8L-65.3,-99.9L-65.3,-88L-62.7,-76.1L-57.5,-64.4L-47.9,-50.1L-35.3,-36.4L-17.3,-20.8L3,-5.9"/><path class="s3" d="M-55.6,-127.7L-62.4,-113.1L-65,-101.2L-65,-89.2L-62.4,-77.4L-57.3,-65.6L-47.6,-51.4L-35,-37.6L-17,-22.1L3.3,-7.2"/><path class="s4" d="M-55.3,-129L-62.1,-114.4L-64.7,-102.5L-64.7,-90.6L-62.1,-78.7L-57,-67L-47.3,-52.7L-34.7,-39L-16.7,-23.4L3.6,-8.5"/><path class="s5" d="M-55,-130.5L-61.8,-115.9L-64.4,-104L-64.4,-92.1L-61.8,-80.2L-56.6,-68.5L-47,-54.2L-34.4,-40.4L-16.4,-24.9L3.9,-10"/><path class="s0" d="M-2.6,-89L17.7,-75L35.7,-62.7L48.3,-53.2L57.9,-44.2L63.1,-37.3L65.7,-30.6L65.7,-24L63.1,-17.3L56.3,-8.6"/><path class="s1" d="M-2.5,-89.6L17.8,-75.6L35.8,-63.2L48.4,-53.7L58.1,-44.8L63.2,-37.9L65.8,-31.2L65.8,-24.6L63.2,-17.8L56.4,-9.2"/><path class="s2" d="M-2.3,-90.6L18,-76.6L36,-64.3L48.7,-54.8L58.3,-45.9L63.4,-39L66,-32.3L66,-25.6L63.4,-18.9L56.6,-10.3"/><path class="s3" d="M-2,-91.9L18.3,-77.9L36.3,-65.6L49,-56.1L58.6,-47.1L63.7,-40.3L66.3,-33.5L66.3,-26.9L63.7,-20.2L56.9,-11.5"/><path class="s4" d="M-1.7,-93.2L18.6,-79.3L36.6,-66.9L49.3,-57.4L58.9,-48.5L64,-41.6L66.6,-34.9L66.6,-28.2L64,-21.5L57.2,-12.9"/><path class="s5" d="M-1.3,-94.7L19,-80.7L37,-68.4L49.6,-58.9L59.2,-49.9L64.4,-43.1L67,-36.4L67,-29.7L64.4,-23L57.6,-14.4"/><path class="s0" d="M-2.6,-35L17.7,-21L35.7,-8.7L48.3,0.8L57.9,9.8L63.1,16.7L65.7,23.4L65.7,30L63.1,36.7L56.3,45.4"/><path class="s1" d="M-2.5,-35.6L17.8,-21.6L35.8,-9.2L48.4,0.3L58.1,9.2L63.2,16.1L65.8,22.8L65.8,29.4L63.2,36.2L56.4,44.8"/><path class="s2" d="M-2.3,-36.6L18,-22.6L36,-10.3L48.7,-0.8L58.3,8.1L63.4,15L66,21.7L66,28.4L63.4,35.1L56.6,43.7"/><path class="s3" d="M-2,-37.9L18.3,-23.9L36.3,-11.6L49,-2.1L58.6,6.9L63.7,13.7L66.3,20.5L66.3,27.1L63.7,33.8L56.9,42.5"/><path class="s4" d="M-1.7,-39.2L18.6,-25.3L36.6,-12.9L49.3,-3.4L58.9,5.5L64,12.4L66.6,19.1L66.6,25.8L64,32.5L57.2,41.1"/><path class="s5" d="M-1.3,-40.7L19,-26.7L37,-14.4L49.6,-4.9L59.2,4.1L64.4,10.9L67,17.6L67,24.3L64.4,31L57.6,39.6"/><path class="s0" d="M-2.6,-8L17.7,6L35.7,18.3L48.3,27.8L57.9,36.8L63.1,43.7L65.7,50.4L65.7,57L63.1,63.7L56.3,72.4"/><path class="s1" d="M-2.5,-8.6L17.8,5.4L35.8,17.8L48.4,27.3L58.1,36.2L63.2,43.1L65.8,49.8L65.8,56.4L63.2,63.2L56.4,71.8"/><path class="s2" d="M-2.3,-9.6L18,4.4L36,16.7L48.7,26.2L58.3,35.1L63.4,42L66,48.7L66,55.4L63.4,62.1L56.6,70.7"/><path class="s3" d="M-2,-10.9L18.3,3.1L36.3,15.4L49,24.9L58.6,33.9L63.7,40.7L66.3,47.5L66.3,54.1L63.7,60.8L56.9,69.5"/><path class="s4" d="M-1.7,-12.2L18.6,1.7L36.6,14.1L49.3,23.6L58.9,32.5L64,39.4L66.6,46.1L66.6,52.8L64,59.5L57.2,68.1"/><path class="s5" d="M-1.3,-13.7L19,0.3L37,12.6L49.6,22.1L59.2,31.1L64.4,37.9L67,44.6L67,51.3L64.4,58L57.6,66.6"/><path class="s0" d="M-2.6,19L17.7,33L35.7,45.3L48.3,54.8L57.9,63.8L63.1,70.7L65.7,77.4L65.7,84L63.1,90.7L56.3,99.4"/><path class="s1" d="M-2.5,18.4L17.8,32.4L35.8,44.8L48.4,54.3L58.1,63.2L63.2,70.1L65.8,76.8L65.8,83.4L63.2,90.2L56.4,98.8"/><path class="s2" d="M-2.3,17.4L18,31.4L36,43.7L48.7,53.2L58.3,62.1L63.4,69L66,75.7L66,82.4L63.4,89.1L56.6,97.7"/><path class="s3" d="M-2,16.1L18.3,30.1L36.3,42.4L49,51.9L58.6,60.9L63.7,67.7L66.3,74.5L66.3,81.1L63.7,87.8L56.9,96.5"/><path class="s4" d="M-1.7,14.8L18.6,28.7L36.6,41.1L49.3,50.6L58.9,59.5L64,66.4L66.6,73.1L66.6,79.8L64,86.5L57.2,95.1"/><path class="s5" d="M-1.3,13.3L19,27.3L37,39.6L49.6,49.1L59.2,58.1L64.4,64.9L67,71.6L67,78.3L64.4,85L57.6,93.6"/><path class="s0" d="M-2.6,46L17.7,60L35.7,72.3L48.3,81.8L57.9,90.8L63.1,97.7L65.7,104.4L65.7,111L63.1,117.7L56.3,126.4"/><path class="s1" d="M-2.5,45.4L17.8,59.4L35.8,71.8L48.4,81.3L58.1,90.2L63.2,97.1L65.8,103.8L65.8,110.4L63.2,117.2L56.4,125.8"/><path class="s2" d="M-2.3,44.4L18,58.4L36,70.7L48.7,80.2L58.3,89.1L63.4,96L66,102.7L66,109.4L63.4,116.1L56.6,124.7"/><path class="s3" d="M-2,43.1L18.3,57.1L36.3,69.4L49,78.9L58.6,87.9L63.7,94.7L66.3,101.5L66.3,108.1L63.7,114.8L56.9,123.5"/><path class="s4" d="M-1.7,41.8L18.6,55.7L36.6,68.1L49.3,77.6L58.9,86.5L64,93.4L66.6,100.1L66.6,106.8L64,113.5L57.2,122.1"/><path class="s5" d="M-1.3,40.3L19,54.3L37,66.6L49.6,76.1L59.2,85.1L64.4,91.9L67,98.6L67,105.3L64.4,112L57.6,120.6"/><path class="s0" d="M-2.6,100L17.7,114L35.7,126.3L48.3,135.8L57.9,144.8L63.1,151.7L65.7,158.4L65.7,165L63.1,171.7L56.3,180.4"/><path class="s1" d="M-2.5,99.4L17.8,113.4L35.8,125.8L48.4,135.3L58.1,144.2L63.2,151.1L65.8,157.8L65.8,164.4L63.2,171.2L56.4,179.8"/><path class="s2" d="M-2.3,98.4L18,112.4L36,124.7L48.7,134.2L58.3,143.1L63.4,150L66,156.7L66,163.4L63.4,170.1L56.6,178.7"/><path class="s3" d="M-2,97.1L18.3,111.1L36.3,123.4L49,132.9L58.6,141.9L63.7,148.7L66.3,155.5L66.3,162.1L63.7,168.8L56.9,177.5"/><path class="s4" d="M-1.7,95.8L18.6,109.7L36.6,122.1L49.3,131.6L58.9,140.5L64,147.4L66.6,154.1L66.6,160.8L64,167.5L57.2,176.1"/><path class="s5" d="M-1.3,94.3L19,108.3L37,120.6L49.6,130.1L59.2,139.1L64.4,145.9L67,152.6L67,159.3L64.4,166L57.6,174.6"/><path class="s0" d="M-2.6,127L17.7,141L35.7,153.3L48.3,162.8L57.9,171.8L63.1,178.7L65.7,185.4L65.7,192L63.1,198.7L56.3,207.4"/><path class="s1" d="M-2.5,126.4L17.8,140.4L35.8,152.8L48.4,162.3L58.1,171.2L63.2,178.1L65.8,184.8L65.8,191.4L63.2,198.2L56.4,206.8"/><path class="s2" d="M-2.3,125.4L18,139.4L36,151.7L48.7,161.2L58.3,170.1L63.4,177L66,183.7L66,190.4L63.4,197.1L56.6,205.7"/><path class="s3" d="M-2,124.1L18.3,138.1L36.3,150.4L49,159.9L58.6,168.9L63.7,175.7L66.3,182.5L66.3,189.1L63.7,195.8L56.9,204.5"/><path class="s4" d="M-1.7,122.8L18.6,136.7L36.6,149.1L49.3,158.6L58.9,167.5L64,174.4L66.6,181.1L66.6,187.8L64,194.5L57.2,203.1"/><path class="s5" d="M-1.3,121.3L19,135.3L37,147.6L49.6,157.1L59.2,166.1L64.4,172.9L67,179.6L67,186.3L64.4,193L57.6,201.6"/><path class="s0" d="M-2.6,154L17.7,168L35.7,180.3L48.3,189.8L57.9,198.8L63.1,205.7L65.7,212.4L65.7,219L63.1,225.7L56.3,234.4"/><path class="s1" d="M-2.5,153.4L17.8,167.4L35.8,179.8L48.4,189.3L58.1,198.2L63.2,205.1L65.8,211.8L65.8,218.4L63.2,225.2L56.4,233.8"/><path class="s2" d="M-2.3,152.4L18,166.4L36,178.7L48.7,188.2L58.3,197.1L63.4,204L66,210.7L66,217.4L63.4,224.1L56.6,232.7"/><path class="s3" d="M-2,151.1L18.3,165.1L36.3,177.4L49,186.9L58.6,195.9L63.7,202.7L66.3,209.5L66.3,216.1L63.7,222.8L56.9,231.5"/><path class="s4" d="M-1.7,149.8L18.6,163.7L36.6,176.1L49.3,185.6L58.9,194.5L64,201.4L66.6,208.1L66.6,214.8L64,221.5L57.2,230.1"/><path class="s5" d="M-1.3,148.3L19,162.3L37,174.6L49.6,184.1L59.2,193.1L64.4,199.9L67,206.6L67,213.3L64.4,220L57.6,228.6"/><path class="s0" d="M-2.6,181L17.7,195L35.7,207.3L48.3,216.8L57.9,225.8L63.1,232.7L65.7,239.4L65.7,246L63.1,252.7L56.3,261.4"/><path class="s1" d="M-2.5,180.4L17.8,194.4L35.8,206.8L48.4,216.3L58.1,225.2L63.2,232.1L65.8,238.8L65.8,245.4L63.2,252.2L56.4,260.8"/><path class="s2" d="M-2.3,179.4L18,193.4L36,205.7L48.7,215.2L58.3,224.1L63.4,231L66,237.7L66,244.4L63.4,251.1L56.6,259.7"/><path class="s3" d="M-2,178.1L18.3,192.1L36.3,204.4L49,213.9L58.6,222.9L63.7,229.7L66.3,236.5L66.3,243.1L63.7,249.8L56.9,258.5"/><path class="s4" d="M-1.7,176.8L18.6,190.7L36.6,203.1L49.3,212.6L58.9,221.5L64,228.4L66.6,235.1L66.6,241.8L64,248.5L57.2,257.1"/><path class="s5" d="M-1.3,175.3L19,189.3L37,201.6L49.6,211.1L59.2,220.1L64.4,226.9L67,233.6L67,240.3L64.4,247L57.6,255.6"/><g filter="url(#fBlur)"><path class="sg" d="M-19.4,-111.8L-13.7,-107.3L-7.9,-102.9L-2,-98.6L3.9,-94.3L9.8,-90.2L15.7,-86.2L21.5,-82.3L27.1,-78.6"/><path class="sh" d="M-13.7,-107.3L-7.9,-102.9L-2,-98.6L3.9,-94.3L9.8,-90.2L15.7,-86.2L21.5,-82.3"/><path class="sw" d="M-7.9,-102.9L-2,-98.6L3.9,-94.3L9.8,-90.2L15.7,-86.2"/><path class="sg" d="M-19.4,-57.8L-13.7,-53.3L-7.9,-48.9L-2,-44.6L3.9,-40.3L9.8,-36.2L15.7,-32.2L21.5,-28.3L27.1,-24.6"/><path class="sh" d="M-13.7,-53.3L-7.9,-48.9L-2,-44.6L3.9,-40.3L9.8,-36.2L15.7,-32.2L21.5,-28.3"/><path class="sw" d="M-7.9,-48.9L-2,-44.6L3.9,-40.3L9.8,-36.2L15.7,-32.2"/><path class="sg" d="M-19.4,-30.8L-13.7,-26.3L-7.9,-21.9L-2,-17.6L3.9,-13.3L9.8,-9.2L15.7,-5.2L21.5,-1.3L27.1,2.4"/><path class="sh" d="M-13.7,-26.3L-7.9,-21.9L-2,-17.6L3.9,-13.3L9.8,-9.2L15.7,-5.2L21.5,-1.3"/><path class="sw" d="M-7.9,-21.9L-2,-17.6L3.9,-13.3L9.8,-9.2L15.7,-5.2"/><path class="sg" d="M-19.4,-3.8L-13.7,0.7L-7.9,5.1L-2,9.4L3.9,13.7L9.8,17.8L15.7,21.8L21.5,25.7L27.1,29.4"/><path class="sh" d="M-13.7,0.7L-7.9,5.1L-2,9.4L3.9,13.7L9.8,17.8L15.7,21.8L21.5,25.7"/><path class="sw" d="M-7.9,5.1L-2,9.4L3.9,13.7L9.8,17.8L15.7,21.8"/><path class="sg" d="M-19.4,23.2L-13.7,27.7L-7.9,32.1L-2,36.4L3.9,40.7L9.8,44.8L15.7,48.8L21.5,52.7L27.1,56.4"/><path class="sh" d="M-13.7,27.7L-7.9,32.1L-2,36.4L3.9,40.7L9.8,44.8L15.7,48.8L21.5,52.7"/><path class="sw" d="M-7.9,32.1L-2,36.4L3.9,40.7L9.8,44.8L15.7,48.8"/><path class="sg" d="M-19.4,77.2L-13.7,81.7L-7.9,86.1L-2,90.4L3.9,94.7L9.8,98.8L15.7,102.8L21.5,106.7L27.1,110.4"/><path class="sh" d="M-13.7,81.7L-7.9,86.1L-2,90.4L3.9,94.7L9.8,98.8L15.7,102.8L21.5,106.7"/><path class="sw" d="M-7.9,86.1L-2,90.4L3.9,94.7L9.8,98.8L15.7,102.8"/><path class="sg" d="M-19.4,104.2L-13.7,108.7L-7.9,113.1L-2,117.4L3.9,121.7L9.8,125.8L15.7,129.8L21.5,133.7L27.1,137.4"/><path class="sh" d="M-13.7,108.7L-7.9,113.1L-2,117.4L3.9,121.7L9.8,125.8L15.7,129.8L21.5,133.7"/><path class="sw" d="M-7.9,113.1L-2,117.4L3.9,121.7L9.8,125.8L15.7,129.8"/><path class="sg" d="M-19.4,131.2L-13.7,135.7L-7.9,140.1L-2,144.4L3.9,148.7L9.8,152.8L15.7,156.8L21.5,160.7L27.1,164.4"/><path class="sh" d="M-13.7,135.7L-7.9,140.1L-2,144.4L3.9,148.7L9.8,152.8L15.7,156.8L21.5,160.7"/><path class="sw" d="M-7.9,140.1L-2,144.4L3.9,148.7L9.8,152.8L15.7,156.8"/><path class="sg" d="M-19.4,158.2L-13.7,162.7L-7.9,167.1L-2,171.4L3.9,175.7L9.8,179.8L15.7,183.8L21.5,187.7L27.1,191.4"/><path class="sh" d="M-13.7,162.7L-7.9,167.1L-2,171.4L3.9,175.7L9.8,179.8L15.7,183.8L21.5,187.7"/><path class="sw" d="M-7.9,167.1L-2,171.4L3.9,175.7L9.8,179.8L15.7,183.8"/></g><g clip-path="url(#cShade)"><path d="M-94,0 A94,24.4 0 0 0 94,0 L94,9 A94,24.4 0 0 1 -94,9 Z" fill="#1d3c5c" opacity="0.55"/><path d="M-94,8 A94,24.4 0 0 0 94,8 L94,15 A94,24.4 0 0 1 -94,15 Z" fill="#1d3c5c" opacity="0.22"/></g></g><path d="M-94.2,0 A94.2,24.4 0 0 0 94.2,0 L88,4.5 A88,23.5 0 0 1 -88,4.5 Z" fill="url(#gCham)"/><polygon points="-81.2,-68.6 -67,-73.6 -67,-44.6 -81.2,-47.4" fill="#3d7eb4"/><polygon points="-67,-73.6 -51.3,-72.5 -51.3,-41.8 -67,-44.6" fill="#4492cc"/><polygon points="-81.2,-68.6 -68,-74.7 -51.3,-73 -51.3,-71.6 -67,-72.5 -80.5,-67.2" fill="#4a9fde"/><polygon points="-36.6,-81.4 -30.8,-83.1 -30.8,-46 -36.6,-47.4" fill="#354e64"/><polygon points="-30.8,-83.1 -8.1,-83.9 -8.1,-44.6 -30.8,-46" fill="#4492cc"/><polygon points="-36.6,-81.4 -31.1,-84.2 -8.1,-85 -8.1,-83.3 -30.8,-82.2" fill="#4a9fde"/><polygon points="17.4,-78.3 38.3,-76.9 38.3,-44.6 17.4,-44.6" fill="url(#gBM3)"/><polygon points="38.3,-76.9 47.3,-80.8 47.3,-46 38.3,-44.6" fill="#4a9fde"/><polygon points="17.4,-78.3 21.6,-81.7 47.3,-80.8 38.3,-76.7" fill="#4a9fde"/><polygon points="57.8,-72.2 70.3,-65.5 70.3,-41.8 57.8,-43.2" fill="#354e64"/><polygon points="70.3,-65.5 84.9,-68.9 84.9,-50.2 70.3,-41.8" fill="#4a9fde"/><polygon points="57.8,-72.2 70.3,-75.5 84.9,-68.9 70.3,-65.2" fill="#4a9fde"/><ellipse cx="0" cy="-22" rx="93.8" ry="21" fill="url(#gBody)"/><ellipse cx="0" cy="-32.2" rx="92" ry="22.3" fill="#4594ce"/><ellipse cx="-0.5" cy="-31" rx="80" ry="18.5" fill="#428dc8"/><ellipse cx="-4.1" cy="-30.1" rx="55" ry="15" fill="#4695d0"/><path d="M-49.3,-39.2 Q-25,-44.1 6.4,-40.9" stroke="#2f5f8a" stroke-width="1.6" stroke-dasharray="3 2 5 3 2 6" fill="none" opacity="0.8"/><path d="M38.6,-36 L46.4,-35.4" stroke="#2b4a66" stroke-width="1.4" fill="none"/><path d="M-58.9,-35.4 L-52.8,-34.3" stroke="#2b4a66" stroke-width="1.2" fill="none"/><polygon points="-95.3,-58.4 -93.5,-63.9 -76.6,-63.7 -76.6,-50.3 -88.8,-47.9 -88.8,-19.5 -95.3,-25.1" fill="#4a9fde"/><polygon points="-93.5,-55.8 -88.9,-55.8 -88.9,-20.4 -93.5,-24.8" fill="#3f86bf"/><polygon points="73.1,-56.5 76.9,-59.9 92,-59.7 92,-20.9 73.1,-20.9" fill="#4a9fde"/><polygon points="78.7,-52.7 89.3,-52.7 89.3,-24.1 78.7,-25.1" fill="#418bc6"/><path d="M-94.9,-24.6 L-94.2,0 A94,24.4 0 0 0 94.2,0 L93.4,-24.6 A94,20 0 0 1 -94.9,-24.6 Z" fill="url(#gBody)"/><polygon points="-51.1,-33.1 -24.1,-37.1 4.6,-37.1 4.6,-3.5 -24.1,-3.8 -51.1,-7.2" fill="url(#gBody)"/><polygon points="-18.9,-21.4 4.6,-17.6 4.6,-9.2 -18.9,-9.6" fill="url(#gNotch)"/><path d="M-18.9,-21.4 Q-11.9,-31.3 4.6,-33.4 L4.6,-17.6 Q-7.6,-16.9 -18.9,-21.4 Z" fill="#4a9fde"/><polygon points="4.2,-44.6 38.3,-42.1 33.4,-36.3 4.2,-36.8" fill="#4a9fde"/><polygon points="4.2,-36.8 33.4,-36.3 33.4,-4.9 4.2,-2.8" fill="#479bd9"/><polygon points="33.4,-15.1 37.2,-14.3 37.2,-10.1 33.4,-10.5" fill="#35648f"/><path d="M4.6,-37.1 L4.6,-3.5" stroke="#3a7db5" stroke-width="0.8" fill="none"/><polygon points="-88.8,-48.8 -73.7,-42 -73.7,-18.6 -88.8,-21.9" fill="#354e64"/><polygon points="-88.8,-49 -76.2,-51.1 -66,-47.4 -51.4,-37.8 -51.4,-7.7 -73.7,-12.8 -73.7,-42" fill="#4798d5"/><polygon points="-88.8,-49 -76.2,-51.1 -66,-47.4 -51.4,-37.8 -73.7,-42" fill="#4a9fde"/><polygon points="48,-41.6 58.5,-39 58.5,-10.2 48,-15.8" fill="#354e64"/><polygon points="48,-41.6 63.4,-46.8 78.1,-45.2 78.1,-8.4 58.5,-10.2 58.5,-39" fill="#4899d7"/><polygon points="48,-41.6 63.4,-46.8 78.1,-45.2 58.5,-39" fill="#4a9fde"/></g>
<g transform="translate(518.3,389.4)"><path d="M-117.5,299 A117.5,30.5 0 0 0 117.5,299 L112.5,305 A112.5,32.5 0 0 1 -112.5,305 Z" fill="url(#gDarkBot)"/><path d="M-115.5,282 A115.5,27.5 0 0 0 115.5,282 L117.5,299 A117.5,30.5 0 0 1 -117.5,299 Z" fill="url(#gTier)"/><path d="M-105.5,248 A105.5,30 0 0 0 105.5,248 L115.5,282 A115.5,27.5 0 0 1 -115.5,282 Z" fill="url(#gTier)"/><path d="M-115.5,282 A115.5,27.5 0 0 0 115.5,282" stroke="#2f6293" stroke-width="1.6" fill="none" opacity="0.7"/><path d="M-115.5,283.6 A115.5,27.5 0 0 0 115.5,283.6" stroke="#58abe8" stroke-width="1.2" fill="none" opacity="0.8"/><path d="M-96,261.4 L-105.1,292.4" stroke="#2c5c8b" stroke-width="1.5" fill="none" opacity="0.85"/><path d="M-94.6,261.4 L-103.7,292.4" stroke="#5aaeea" stroke-width="1" fill="none" opacity="0.7"/><path d="M-57,274.2 L-62.4,304.1" stroke="#2c5c8b" stroke-width="1.5" fill="none" opacity="0.85"/><path d="M-55.6,274.2 L-61,304.1" stroke="#5aaeea" stroke-width="1" fill="none" opacity="0.7"/><path d="M8.5,278.9 L9.3,308.4" stroke="#2c5c8b" stroke-width="1.5" fill="none" opacity="0.85"/><path d="M9.9,278.9 L10.7,308.4" stroke="#5aaeea" stroke-width="1" fill="none" opacity="0.7"/><path d="M66,272.4 L72.3,302.5" stroke="#2c5c8b" stroke-width="1.5" fill="none" opacity="0.85"/><path d="M67.4,272.4 L73.7,302.5" stroke="#5aaeea" stroke-width="1" fill="none" opacity="0.7"/><path d="M98,260.1 L107.3,291.2" stroke="#2c5c8b" stroke-width="1.5" fill="none" opacity="0.85"/><path d="M99.4,260.1 L108.7,291.2" stroke="#5aaeea" stroke-width="1" fill="none" opacity="0.7"/><path d="M-108,293.7 L-109.9,309.8" stroke="#2c5c8b" stroke-width="1.5" fill="none" opacity="0.85"/><path d="M-106.6,293.7 L-108.5,309.8" stroke="#5aaeea" stroke-width="1" fill="none" opacity="0.7"/><path d="M-86,302.4 L-87.5,319.4" stroke="#2c5c8b" stroke-width="1.5" fill="none" opacity="0.85"/><path d="M-84.6,302.4 L-86.1,319.4" stroke="#5aaeea" stroke-width="1" fill="none" opacity="0.7"/><path d="M-25,310.8 L-25.4,328.8" stroke="#2c5c8b" stroke-width="1.5" fill="none" opacity="0.85"/><path d="M-23.6,310.8 L-24,328.8" stroke="#5aaeea" stroke-width="1" fill="none" opacity="0.7"/><path d="M45,309.3 L45.8,327.1" stroke="#2c5c8b" stroke-width="1.5" fill="none" opacity="0.85"/><path d="M46.4,309.3 L47.2,327.1" stroke="#5aaeea" stroke-width="1" fill="none" opacity="0.7"/><path d="M97,298.9 L98.7,315.6" stroke="#2c5c8b" stroke-width="1.5" fill="none" opacity="0.85"/><path d="M98.4,298.9 L100.1,315.6" stroke="#5aaeea" stroke-width="1" fill="none" opacity="0.7"/><ellipse cx="0" cy="248" rx="105.5" ry="30" fill="url(#gLedge)"/><path d="M-94,186.8 A94,27.4 0 0 0 94,186.8 L94,240 A94,32.5 0 0 1 -94,240 Z" fill="url(#gBody)"/><path d="M-94,240 A94,32.5 0 0 0 94,240" stroke="#2c5c8b" stroke-width="1.5" fill="none" opacity="0.5"/><g clip-path="url(#cBase)"><text font-family="Liberation Sans, sans-serif" font-weight="bold" font-size="68" fill="url(#gText)" filter="url(#fEng)"><tspan x="-85.2" y="263" textLength="20.8" lengthAdjust="spacingAndGlyphs">f</tspan><tspan x="-61.4" y="263" textLength="35.7" lengthAdjust="spacingAndGlyphs">o</tspan><tspan x="-28.3" y="266.5" textLength="19.5" lengthAdjust="spacingAndGlyphs">r</tspan><tspan x="-14.6" y="271.5" textLength="70.2" lengthAdjust="spacingAndGlyphs">m</tspan><tspan x="60.2" y="265.3" textLength="12.9" lengthAdjust="spacingAndGlyphs">l</tspan><tspan x="71.9" y="259.5" textLength="32.4" lengthAdjust="spacingAndGlyphs">a</tspan></text></g><ellipse cx="0" cy="188" rx="94" ry="27.4" fill="url(#gTop)"/><polygon points="-84,327 -72,324 -63,317.5 -57,314.5 -51,317.5 -45,324 -40,329 -30,330.5 -23,337 -23,337.6 -32,337 -42,336 -52,334.6 -62,332.9 -72,330.8 -84,327.4" fill="#ffffff"/><g clip-path="url(#cCol)"><rect x="-52" y="0" width="104" height="196" fill="#30689c"/><path class="b0" d="M63.1,-118.3L66,-107.9L62.6,-97.5L53.1,-86.6L38.5,-75L20.2,-62.4L0,-48.5L-20.2,-33.4L-38.5,-17L-53.1,0.3L-62.6,18.5L-66,37L-63.1,55.5"/><path class="b1" d="M62.6,-115.3L65.5,-104.9L62.1,-94.5L52.6,-83.6L38,-72L19.7,-59.4L-0.5,-45.5L-20.7,-30.4L-39,-14L-53.6,3.3L-63.1,21.5L-66.5,40L-63.6,58.5"/><path class="b0" d="M63.1,-91.3L66,-80.9L62.6,-70.5L53.1,-59.6L38.5,-48L20.2,-35.4L0,-21.5L-20.2,-6.4L-38.5,10L-53.1,27.3L-62.6,45.5L-66,64L-63.1,82.5"/><path class="b1" d="M62.6,-88.3L65.5,-77.9L62.1,-67.5L52.6,-56.6L38,-45L19.7,-32.4L-0.5,-18.5L-20.7,-3.4L-39,13L-53.6,30.3L-63.1,48.5L-66.5,67L-63.6,85.5"/><path class="b0" d="M63.1,-64.3L66,-53.9L62.6,-43.5L53.1,-32.6L38.5,-21L20.2,-8.4L0,5.5L-20.2,20.6L-38.5,37L-53.1,54.3L-62.6,72.5L-66,91L-63.1,109.5"/><path class="b1" d="M62.6,-61.3L65.5,-50.9L62.1,-40.5L52.6,-29.6L38,-18L19.7,-5.4L-0.5,8.5L-20.7,23.6L-39,40L-53.6,57.3L-63.1,75.5L-66.5,94L-63.6,112.5"/><path class="b0" d="M63.1,-37.3L66,-26.9L62.6,-16.5L53.1,-5.6L38.5,6L20.2,18.6L0,32.5L-20.2,47.6L-38.5,64L-53.1,81.3L-62.6,99.5L-66,118L-63.1,136.5"/><path class="b1" d="M62.6,-34.3L65.5,-23.9L62.1,-13.5L52.6,-2.6L38,9L19.7,21.6L-0.5,35.5L-20.7,50.6L-39,67L-53.6,84.3L-63.1,102.5L-66.5,121L-63.6,139.5"/><path class="b0" d="M63.1,16.7L66,27.1L62.6,37.5L53.1,48.4L38.5,60L20.2,72.6L0,86.5L-20.2,101.6L-38.5,118L-53.1,135.3L-62.6,153.5L-66,172L-63.1,190.5"/><path class="b1" d="M62.6,19.7L65.5,30.1L62.1,40.5L52.6,51.4L38,63L19.7,75.6L-0.5,89.5L-20.7,104.6L-39,121L-53.6,138.3L-63.1,156.5L-66.5,175L-63.6,193.5"/><path class="b0" d="M63.1,43.7L66,54.1L62.6,64.5L53.1,75.4L38.5,87L20.2,99.6L0,113.5L-20.2,128.6L-38.5,145L-53.1,162.3L-62.6,180.5L-66,199L-63.1,217.5"/><path class="b1" d="M62.6,46.7L65.5,57.1L62.1,67.5L52.6,78.4L38,90L19.7,102.6L-0.5,116.5L-20.7,131.6L-39,148L-53.6,165.3L-63.1,183.5L-66.5,202L-63.6,220.5"/><path class="b0" d="M63.1,70.7L66,81.1L62.6,91.5L53.1,102.4L38.5,114L20.2,126.6L0,140.5L-20.2,155.6L-38.5,172L-53.1,189.3L-62.6,207.5L-66,226L-63.1,244.5"/><path class="b1" d="M62.6,73.7L65.5,84.1L62.1,94.5L52.6,105.4L38,117L19.7,129.6L-0.5,143.5L-20.7,158.6L-39,175L-53.6,192.3L-63.1,210.5L-66.5,229L-63.6,247.5"/><path class="b0" d="M63.1,97.7L66,108.1L62.6,118.5L53.1,129.4L38.5,141L20.2,153.6L0,167.5L-20.2,182.6L-38.5,199L-53.1,216.3L-62.6,234.5L-66,253L-63.1,271.5"/><path class="b1" d="M62.6,100.7L65.5,111.1L62.1,121.5L52.6,132.4L38,144L19.7,156.6L-0.5,170.5L-20.7,185.6L-39,202L-53.6,219.3L-63.1,237.5L-66.5,256L-63.6,274.5"/><path class="b0" d="M63.1,151.7L66,162.1L62.6,172.5L53.1,183.4L38.5,195L20.2,207.6L0,221.5L-20.2,236.6L-38.5,253L-53.1,270.3L-62.6,288.5L-66,307L-63.1,325.5"/><path class="b1" d="M62.6,154.7L65.5,165.1L62.1,175.5L52.6,186.4L38,198L19.7,210.6L-0.5,224.5L-20.7,239.6L-39,256L-53.6,273.3L-63.1,291.5L-66.5,310L-63.6,328.5"/><path class="b0" d="M63.1,178.7L66,189.1L62.6,199.5L53.1,210.4L38.5,222L20.2,234.6L0,248.5L-20.2,263.6L-38.5,280L-53.1,297.3L-62.6,315.5L-66,334L-63.1,352.5"/><path class="b1" d="M62.6,181.7L65.5,192.1L62.1,202.5L52.6,213.4L38,225L19.7,237.6L-0.5,251.5L-20.7,266.6L-39,283L-53.6,300.3L-63.1,318.5L-66.5,337L-63.6,355.5"/><path class="b0" d="M63.1,205.7L66,216.1L62.6,226.5L53.1,237.4L38.5,249L20.2,261.6L0,275.5L-20.2,290.6L-38.5,307L-53.1,324.3L-62.6,342.5L-66,361L-63.1,379.5"/><path class="b1" d="M62.6,208.7L65.5,219.1L62.1,229.5L52.6,240.4L38,252L19.7,264.6L-0.5,278.5L-20.7,293.6L-39,310L-53.6,327.3L-63.1,345.5L-66.5,364L-63.6,382.5"/><path class="c0" d="M0.3,20L-4.3,24L-8,28L-9.9,32L-9.3,36L-6.3,40L-2,44L2.3,48L5.3,52L5.9,56L4,60L0.3,64L-4.3,68L-8,72L-9.9,76L-9.3,80L-6.3,84L-2,88L2.3,92L5.3,96L5.9,100L4,104L0.3,108L-4.3,112L-8,116L-9.9,120L-9.3,124L-6.3,128L-2,132L2.3,136L5.3,140L5.9,144L4,148L0.3,152L-4.3,156L-8,160L-9.9,164L-9.3,168L-6.3,172L-2,176L2.3,180L5.3,184L5.9,188"/><path class="c1" d="M0.3,20L-4.3,24L-8,28L-9.9,32L-9.3,36L-6.3,40L-2,44L2.3,48L5.3,52L5.9,56L4,60L0.3,64L-4.3,68L-8,72L-9.9,76L-9.3,80L-6.3,84L-2,88L2.3,92L5.3,96L5.9,100L4,104L0.3,108L-4.3,112L-8,116L-9.9,120L-9.3,124L-6.3,128L-2,132L2.3,136L5.3,140L5.9,144L4,148L0.3,152L-4.3,156L-8,160L-9.9,164L-9.3,168L-6.3,172L-2,176L2.3,180L5.3,184L5.9,188"/><path class="c0" d="M-4.3,20L0.3,24L4,28L5.9,32L5.3,36L2.3,40L-2,44L-6.3,48L-9.3,52L-9.9,56L-8,60L-4.3,64L0.3,68L4,72L5.9,76L5.3,80L2.3,84L-2,88L-6.3,92L-9.3,96L-9.9,100L-8,104L-4.3,108L0.3,112L4,116L5.9,120L5.3,124L2.3,128L-2,132L-6.3,136L-9.3,140L-9.9,144L-8,148L-4.3,152L0.3,156L4,160L5.9,164L5.3,168L2.3,172L-2,176L-6.3,180L-9.3,184L-9.9,188"/><path class="c1" d="M-4.3,20L0.3,24L4,28L5.9,32L5.3,36L2.3,40L-2,44L-6.3,48L-9.3,52L-9.9,56L-8,60L-4.3,64L0.3,68L4,72L5.9,76L5.3,80L2.3,84L-2,88L-6.3,92L-9.3,96L-9.9,100L-8,104L-4.3,108L0.3,112L4,116L5.9,120L5.3,124L2.3,128L-2,132L-6.3,136L-9.3,140L-9.9,144L-8,148L-4.3,152L0.3,156L4,160L5.9,164L5.3,168L2.3,172L-2,176L-6.3,180L-9.3,184L-9.9,188"/><path class="s0" d="M-56.3,172.2L-63.1,186.9L-65.7,198.7L-65.7,210.7L-63.1,222.5L-57.9,234.3L-48.3,248.6L-35.7,262.3L-17.7,277.8L2.6,292.7"/><path class="s1" d="M-56.1,171.7L-62.9,186.3L-65.5,198.2L-65.5,210.1L-62.9,222L-57.8,233.7L-48.2,248L-35.5,261.7L-17.5,277.3L2.8,292.2"/><path class="s2" d="M-55.9,170.6L-62.7,185.2L-65.3,197.1L-65.3,209L-62.7,220.9L-57.5,232.6L-47.9,246.9L-35.3,260.6L-17.3,276.2L3,291.1"/><path class="s3" d="M-55.6,169.3L-62.4,183.9L-65,195.8L-65,207.8L-62.4,219.6L-57.3,231.4L-47.6,245.6L-35,259.4L-17,274.9L3.3,289.8"/><path class="s4" d="M-55.3,168L-62.1,182.6L-64.7,194.5L-64.7,206.4L-62.1,218.3L-57,230L-47.3,244.3L-34.7,258L-16.7,273.6L3.6,288.5"/><path class="s5" d="M-55,166.5L-61.8,181.1L-64.4,193L-64.4,204.9L-61.8,216.8L-56.6,228.5L-47,242.8L-34.4,256.6L-16.4,272.1L3.9,287"/><path class="s0" d="M-56.3,145.2L-63.1,159.9L-65.7,171.7L-65.7,183.7L-63.1,195.5L-57.9,207.3L-48.3,221.6L-35.7,235.3L-17.7,250.8L2.6,265.7"/><path class="s1" d="M-56.1,144.7L-62.9,159.3L-65.5,171.2L-65.5,183.1L-62.9,195L-57.8,206.7L-48.2,221L-35.5,234.7L-17.5,250.3L2.8,265.2"/><path class="s2" d="M-55.9,143.6L-62.7,158.2L-65.3,170.1L-65.3,182L-62.7,193.9L-57.5,205.6L-47.9,219.9L-35.3,233.6L-17.3,249.2L3,264.1"/><path class="s3" d="M-55.6,142.3L-62.4,156.9L-65,168.8L-65,180.8L-62.4,192.6L-57.3,204.4L-47.6,218.6L-35,232.4L-17,247.9L3.3,262.8"/><path class="s4" d="M-55.3,141L-62.1,155.6L-64.7,167.5L-64.7,179.4L-62.1,191.3L-57,203L-47.3,217.3L-34.7,231L-16.7,246.6L3.6,261.5"/><path class="s5" d="M-55,139.5L-61.8,154.1L-64.4,166L-64.4,177.9L-61.8,189.8L-56.6,201.5L-47,215.8L-34.4,229.6L-16.4,245.1L3.9,260"/><path class="s0" d="M-56.3,118.2L-63.1,132.9L-65.7,144.7L-65.7,156.7L-63.1,168.5L-57.9,180.3L-48.3,194.6L-35.7,208.3L-17.7,223.8L2.6,238.7"/><path class="s1" d="M-56.1,117.7L-62.9,132.3L-65.5,144.2L-65.5,156.1L-62.9,168L-57.8,179.7L-48.2,194L-35.5,207.7L-17.5,223.3L2.8,238.2"/><path class="s2" d="M-55.9,116.6L-62.7,131.2L-65.3,143.1L-65.3,155L-62.7,166.9L-57.5,178.6L-47.9,192.9L-35.3,206.6L-17.3,222.2L3,237.1"/><path class="s3" d="M-55.6,115.3L-62.4,129.9L-65,141.8L-65,153.8L-62.4,165.6L-57.3,177.4L-47.6,191.6L-35,205.4L-17,220.9L3.3,235.8"/><path class="s4" d="M-55.3,114L-62.1,128.6L-64.7,140.5L-64.7,152.4L-62.1,164.3L-57,176L-47.3,190.3L-34.7,204L-16.7,219.6L3.6,234.5"/><path class="s5" d="M-55,112.5L-61.8,127.1L-64.4,139L-64.4,150.9L-61.8,162.8L-56.6,174.5L-47,188.8L-34.4,202.6L-16.4,218.1L3.9,233"/><path class="s0" d="M-56.3,64.2L-63.1,78.9L-65.7,90.7L-65.7,102.7L-63.1,114.5L-57.9,126.3L-48.3,140.6L-35.7,154.3L-17.7,169.8L2.6,184.7"/><path class="s1" d="M-56.1,63.7L-62.9,78.3L-65.5,90.2L-65.5,102.1L-62.9,114L-57.8,125.7L-48.2,140L-35.5,153.7L-17.5,169.3L2.8,184.2"/><path class="s2" d="M-55.9,62.6L-62.7,77.2L-65.3,89.1L-65.3,101L-62.7,112.9L-57.5,124.6L-47.9,138.9L-35.3,152.6L-17.3,168.2L3,183.1"/><path class="s3" d="M-55.6,61.3L-62.4,75.9L-65,87.8L-65,99.8L-62.4,111.6L-57.3,123.4L-47.6,137.6L-35,151.4L-17,166.9L3.3,181.8"/><path class="s4" d="M-55.3,60L-62.1,74.6L-64.7,86.5L-64.7,98.4L-62.1,110.3L-57,122L-47.3,136.3L-34.7,150L-16.7,165.6L3.6,180.5"/><path class="s5" d="M-55,58.5L-61.8,73.1L-64.4,85L-64.4,96.9L-61.8,108.8L-56.6,120.5L-47,134.8L-34.4,148.6L-16.4,164.1L3.9,179"/><path class="s0" d="M-56.3,37.2L-63.1,51.9L-65.7,63.7L-65.7,75.7L-63.1,87.5L-57.9,99.3L-48.3,113.6L-35.7,127.3L-17.7,142.8L2.6,157.7"/><path class="s1" d="M-56.1,36.7L-62.9,51.3L-65.5,63.2L-65.5,75.1L-62.9,87L-57.8,98.7L-48.2,113L-35.5,126.7L-17.5,142.3L2.8,157.2"/><path class="s2" d="M-55.9,35.6L-62.7,50.2L-65.3,62.1L-65.3,74L-62.7,85.9L-57.5,97.6L-47.9,111.9L-35.3,125.6L-17.3,141.2L3,156.1"/><path class="s3" d="M-55.6,34.3L-62.4,48.9L-65,60.8L-65,72.8L-62.4,84.6L-57.3,96.4L-47.6,110.6L-35,124.4L-17,139.9L3.3,154.8"/><path class="s4" d="M-55.3,33L-62.1,47.6L-64.7,59.5L-64.7,71.4L-62.1,83.3L-57,95L-47.3,109.3L-34.7,123L-16.7,138.6L3.6,153.5"/><path class="s5" d="M-55,31.5L-61.8,46.1L-64.4,58L-64.4,69.9L-61.8,81.8L-56.6,93.5L-47,107.8L-34.4,121.6L-16.4,137.1L3.9,152"/><path class="s0" d="M-56.3,10.2L-63.1,24.9L-65.7,36.7L-65.7,48.7L-63.1,60.5L-57.9,72.3L-48.3,86.6L-35.7,100.3L-17.7,115.8L2.6,130.7"/><path class="s1" d="M-56.1,9.7L-62.9,24.3L-65.5,36.2L-65.5,48.1L-62.9,60L-57.8,71.7L-48.2,86L-35.5,99.7L-17.5,115.3L2.8,130.2"/><path class="s2" d="M-55.9,8.6L-62.7,23.2L-65.3,35.1L-65.3,47L-62.7,58.9L-57.5,70.6L-47.9,84.9L-35.3,98.6L-17.3,114.2L3,129.1"/><path class="s3" d="M-55.6,7.3L-62.4,21.9L-65,33.8L-65,45.8L-62.4,57.6L-57.3,69.4L-47.6,83.6L-35,97.4L-17,112.9L3.3,127.8"/><path class="s4" d="M-55.3,6L-62.1,20.6L-64.7,32.5L-64.7,44.4L-62.1,56.3L-57,68L-47.3,82.3L-34.7,96L-16.7,111.6L3.6,126.5"/><path class="s5" d="M-55,4.5L-61.8,19.1L-64.4,31L-64.4,42.9L-61.8,54.8L-56.6,66.5L-47,80.8L-34.4,94.6L-16.4,110.1L3.9,125"/><path class="s0" d="M-56.3,-16.8L-63.1,-2.1L-65.7,9.7L-65.7,21.7L-63.1,33.5L-57.9,45.3L-48.3,59.6L-35.7,73.3L-17.7,88.8L2.6,103.7"/><path class="s1" d="M-56.1,-17.3L-62.9,-2.7L-65.5,9.2L-65.5,21.1L-62.9,33L-57.8,44.7L-48.2,59L-35.5,72.7L-17.5,88.3L2.8,103.2"/><path class="s2" d="M-55.9,-18.4L-62.7,-3.8L-65.3,8.1L-65.3,20L-62.7,31.9L-57.5,43.6L-47.9,57.9L-35.3,71.6L-17.3,87.2L3,102.1"/><path class="s3" d="M-55.6,-19.7L-62.4,-5.1L-65,6.8L-65,18.8L-62.4,30.6L-57.3,42.4L-47.6,56.6L-35,70.4L-17,85.9L3.3,100.8"/><path class="s4" d="M-55.3,-21L-62.1,-6.4L-64.7,5.5L-64.7,17.4L-62.1,29.3L-57,41L-47.3,55.3L-34.7,69L-16.7,84.6L3.6,99.5"/><path class="s5" d="M-55,-22.5L-61.8,-7.9L-64.4,4L-64.4,15.9L-61.8,27.8L-56.6,39.5L-47,53.8L-34.4,67.6L-16.4,83.1L3.9,98"/><path class="s0" d="M-56.3,-70.8L-63.1,-56.1L-65.7,-44.3L-65.7,-32.3L-63.1,-20.5L-57.9,-8.7L-48.3,5.6L-35.7,19.3L-17.7,34.8L2.6,49.7"/><path class="s1" d="M-56.1,-71.3L-62.9,-56.7L-65.5,-44.8L-65.5,-32.9L-62.9,-21L-57.8,-9.3L-48.2,5L-35.5,18.7L-17.5,34.3L2.8,49.2"/><path class="s2" d="M-55.9,-72.4L-62.7,-57.8L-65.3,-45.9L-65.3,-34L-62.7,-22.1L-57.5,-10.4L-47.9,3.9L-35.3,17.6L-17.3,33.2L3,48.1"/><path class="s3" d="M-55.6,-73.7L-62.4,-59.1L-65,-47.2L-65,-35.2L-62.4,-23.4L-57.3,-11.6L-47.6,2.6L-35,16.4L-17,31.9L3.3,46.8"/><path class="s4" d="M-55.3,-75L-62.1,-60.4L-64.7,-48.5L-64.7,-36.6L-62.1,-24.7L-57,-13L-47.3,1.3L-34.7,15L-16.7,30.6L3.6,45.5"/><path class="s5" d="M-55,-76.5L-61.8,-61.9L-64.4,-50L-64.4,-38.1L-61.8,-26.2L-56.6,-14.5L-47,-0.2L-34.4,13.6L-16.4,29.1L3.9,44"/><path class="s0" d="M-56.3,-97.8L-63.1,-83.1L-65.7,-71.3L-65.7,-59.3L-63.1,-47.5L-57.9,-35.7L-48.3,-21.4L-35.7,-7.7L-17.7,7.8L2.6,22.7"/><path class="s1" d="M-56.1,-98.3L-62.9,-83.7L-65.5,-71.8L-65.5,-59.9L-62.9,-48L-57.8,-36.3L-48.2,-22L-35.5,-8.3L-17.5,7.3L2.8,22.2"/><path class="s2" d="M-55.9,-99.4L-62.7,-84.8L-65.3,-72.9L-65.3,-61L-62.7,-49.1L-57.5,-37.4L-47.9,-23.1L-35.3,-9.4L-17.3,6.2L3,21.1"/><path class="s3" d="M-55.6,-100.7L-62.4,-86.1L-65,-74.2L-65,-62.2L-62.4,-50.4L-57.3,-38.6L-47.6,-24.4L-35,-10.6L-17,4.9L3.3,19.8"/><path class="s4" d="M-55.3,-102L-62.1,-87.4L-64.7,-75.5L-64.7,-63.6L-62.1,-51.7L-57,-40L-47.3,-25.7L-34.7,-12L-16.7,3.6L3.6,18.5"/><path class="s5" d="M-55,-103.5L-61.8,-88.9L-64.4,-77L-64.4,-65.1L-61.8,-53.2L-56.6,-41.5L-47,-27.2L-34.4,-13.4L-16.4,2.1L3.9,17"/><path class="s0" d="M-56.3,-124.8L-63.1,-110.1L-65.7,-98.3L-65.7,-86.3L-63.1,-74.5L-57.9,-62.7L-48.3,-48.4L-35.7,-34.7L-17.7,-19.2L2.6,-4.3"/><path class="s1" d="M-56.1,-125.3L-62.9,-110.7L-65.5,-98.8L-65.5,-86.9L-62.9,-75L-57.8,-63.3L-48.2,-49L-35.5,-35.3L-17.5,-19.7L2.8,-4.8"/><path class="s2" d="M-55.9,-126.4L-62.7,-111.8L-65.3,-99.9L-65.3,-88L-62.7,-76.1L-57.5,-64.4L-47.9,-50.1L-35.3,-36.4L-17.3,-20.8L3,-5.9"/><path class="s3" d="M-55.6,-127.7L-62.4,-113.1L-65,-101.2L-65,-89.2L-62.4,-77.4L-57.3,-65.6L-47.6,-51.4L-35,-37.6L-17,-22.1L3.3,-7.2"/><path class="s4" d="M-55.3,-129L-62.1,-114.4L-64.7,-102.5L-64.7,-90.6L-62.1,-78.7L-57,-67L-47.3,-52.7L-34.7,-39L-16.7,-23.4L3.6,-8.5"/><path class="s5" d="M-55,-130.5L-61.8,-115.9L-64.4,-104L-64.4,-92.1L-61.8,-80.2L-56.6,-68.5L-47,-54.2L-34.4,-40.4L-16.4,-24.9L3.9,-10"/><path class="s0" d="M-2.6,-89L17.7,-75L35.7,-62.7L48.3,-53.2L57.9,-44.2L63.1,-37.3L65.7,-30.6L65.7,-24L63.1,-17.3L56.3,-8.6"/><path class="s1" d="M-2.5,-89.6L17.8,-75.6L35.8,-63.2L48.4,-53.7L58.1,-44.8L63.2,-37.9L65.8,-31.2L65.8,-24.6L63.2,-17.8L56.4,-9.2"/><path class="s2" d="M-2.3,-90.6L18,-76.6L36,-64.3L48.7,-54.8L58.3,-45.9L63.4,-39L66,-32.3L66,-25.6L63.4,-18.9L56.6,-10.3"/><path class="s3" d="M-2,-91.9L18.3,-77.9L36.3,-65.6L49,-56.1L58.6,-47.1L63.7,-40.3L66.3,-33.5L66.3,-26.9L63.7,-20.2L56.9,-11.5"/><path class="s4" d="M-1.7,-93.2L18.6,-79.3L36.6,-66.9L49.3,-57.4L58.9,-48.5L64,-41.6L66.6,-34.9L66.6,-28.2L64,-21.5L57.2,-12.9"/><path class="s5" d="M-1.3,-94.7L19,-80.7L37,-68.4L49.6,-58.9L59.2,-49.9L64.4,-43.1L67,-36.4L67,-29.7L64.4,-23L57.6,-14.4"/><path class="s0" d="M-2.6,-35L17.7,-21L35.7,-8.7L48.3,0.8L57.9,9.8L63.1,16.7L65.7,23.4L65.7,30L63.1,36.7L56.3,45.4"/><path class="s1" d="M-2.5,-35.6L17.8,-21.6L35.8,-9.2L48.4,0.3L58.1,9.2L63.2,16.1L65.8,22.8L65.8,29.4L63.2,36.2L56.4,44.8"/><path class="s2" d="M-2.3,-36.6L18,-22.6L36,-10.3L48.7,-0.8L58.3,8.1L63.4,15L66,21.7L66,28.4L63.4,35.1L56.6,43.7"/><path class="s3" d="M-2,-37.9L18.3,-23.9L36.3,-11.6L49,-2.1L58.6,6.9L63.7,13.7L66.3,20.5L66.3,27.1L63.7,33.8L56.9,42.5"/><path class="s4" d="M-1.7,-39.2L18.6,-25.3L36.6,-12.9L49.3,-3.4L58.9,5.5L64,12.4L66.6,19.1L66.6,25.8L64,32.5L57.2,41.1"/><path class="s5" d="M-1.3,-40.7L19,-26.7L37,-14.4L49.6,-4.9L59.2,4.1L64.4,10.9L67,17.6L67,24.3L64.4,31L57.6,39.6"/><path class="s0" d="M-2.6,-8L17.7,6L35.7,18.3L48.3,27.8L57.9,36.8L63.1,43.7L65.7,50.4L65.7,57L63.1,63.7L56.3,72.4"/><path class="s1" d="M-2.5,-8.6L17.8,5.4L35.8,17.8L48.4,27.3L58.1,36.2L63.2,43.1L65.8,49.8L65.8,56.4L63.2,63.2L56.4,71.8"/><path class="s2" d="M-2.3,-9.6L18,4.4L36,16.7L48.7,26.2L58.3,35.1L63.4,42L66,48.7L66,55.4L63.4,62.1L56.6,70.7"/><path class="s3" d="M-2,-10.9L18.3,3.1L36.3,15.4L49,24.9L58.6,33.9L63.7,40.7L66.3,47.5L66.3,54.1L63.7,60.8L56.9,69.5"/><path class="s4" d="M-1.7,-12.2L18.6,1.7L36.6,14.1L49.3,23.6L58.9,32.5L64,39.4L66.6,46.1L66.6,52.8L64,59.5L57.2,68.1"/><path class="s5" d="M-1.3,-13.7L19,0.3L37,12.6L49.6,22.1L59.2,31.1L64.4,37.9L67,44.6L67,51.3L64.4,58L57.6,66.6"/><path class="s0" d="M-2.6,19L17.7,33L35.7,45.3L48.3,54.8L57.9,63.8L63.1,70.7L65.7,77.4L65.7,84L63.1,90.7L56.3,99.4"/><path class="s1" d="M-2.5,18.4L17.8,32.4L35.8,44.8L48.4,54.3L58.1,63.2L63.2,70.1L65.8,76.8L65.8,83.4L63.2,90.2L56.4,98.8"/><path class="s2" d="M-2.3,17.4L18,31.4L36,43.7L48.7,53.2L58.3,62.1L63.4,69L66,75.7L66,82.4L63.4,89.1L56.6,97.7"/><path class="s3" d="M-2,16.1L18.3,30.1L36.3,42.4L49,51.9L58.6,60.9L63.7,67.7L66.3,74.5L66.3,81.1L63.7,87.8L56.9,96.5"/><path class="s4" d="M-1.7,14.8L18.6,28.7L36.6,41.1L49.3,50.6L58.9,59.5L64,66.4L66.6,73.1L66.6,79.8L64,86.5L57.2,95.1"/><path class="s5" d="M-1.3,13.3L19,27.3L37,39.6L49.6,49.1L59.2,58.1L64.4,64.9L67,71.6L67,78.3L64.4,85L57.6,93.6"/><path class="s0" d="M-2.6,46L17.7,60L35.7,72.3L48.3,81.8L57.9,90.8L63.1,97.7L65.7,104.4L65.7,111L63.1,117.7L56.3,126.4"/><path class="s1" d="M-2.5,45.4L17.8,59.4L35.8,71.8L48.4,81.3L58.1,90.2L63.2,97.1L65.8,103.8L65.8,110.4L63.2,117.2L56.4,125.8"/><path class="s2" d="M-2.3,44.4L18,58.4L36,70.7L48.7,80.2L58.3,89.1L63.4,96L66,102.7L66,109.4L63.4,116.1L56.6,124.7"/><path class="s3" d="M-2,43.1L18.3,57.1L36.3,69.4L49,78.9L58.6,87.9L63.7,94.7L66.3,101.5L66.3,108.1L63.7,114.8L56.9,123.5"/><path class="s4" d="M-1.7,41.8L18.6,55.7L36.6,68.1L49.3,77.6L58.9,86.5L64,93.4L66.6,100.1L66.6,106.8L64,113.5L57.2,122.1"/><path class="s5" d="M-1.3,40.3L19,54.3L37,66.6L49.6,76.1L59.2,85.1L64.4,91.9L67,98.6L67,105.3L64.4,112L57.6,120.6"/><path class="s0" d="M-2.6,100L17.7,114L35.7,126.3L48.3,135.8L57.9,144.8L63.1,151.7L65.7,158.4L65.7,165L63.1,171.7L56.3,180.4"/><path class="s1" d="M-2.5,99.4L17.8,113.4L35.8,125.8L48.4,135.3L58.1,144.2L63.2,151.1L65.8,157.8L65.8,164.4L63.2,171.2L56.4,179.8"/><path class="s2" d="M-2.3,98.4L18,112.4L36,124.7L48.7,134.2L58.3,143.1L63.4,150L66,156.7L66,163.4L63.4,170.1L56.6,178.7"/><path class="s3" d="M-2,97.1L18.3,111.1L36.3,123.4L49,132.9L58.6,141.9L63.7,148.7L66.3,155.5L66.3,162.1L63.7,168.8L56.9,177.5"/><path class="s4" d="M-1.7,95.8L18.6,109.7L36.6,122.1L49.3,131.6L58.9,140.5L64,147.4L66.6,154.1L66.6,160.8L64,167.5L57.2,176.1"/><path class="s5" d="M-1.3,94.3L19,108.3L37,120.6L49.6,130.1L59.2,139.1L64.4,145.9L67,152.6L67,159.3L64.4,166L57.6,174.6"/><path class="s0" d="M-2.6,127L17.7,141L35.7,153.3L48.3,162.8L57.9,171.8L63.1,178.7L65.7,185.4L65.7,192L63.1,198.7L56.3,207.4"/><path class="s1" d="M-2.5,126.4L17.8,140.4L35.8,152.8L48.4,162.3L58.1,171.2L63.2,178.1L65.8,184.8L65.8,191.4L63.2,198.2L56.4,206.8"/><path class="s2" d="M-2.3,125.4L18,139.4L36,151.7L48.7,161.2L58.3,170.1L63.4,177L66,183.7L66,190.4L63.4,197.1L56.6,205.7"/><path class="s3" d="M-2,124.1L18.3,138.1L36.3,150.4L49,159.9L58.6,168.9L63.7,175.7L66.3,182.5L66.3,189.1L63.7,195.8L56.9,204.5"/><path class="s4" d="M-1.7,122.8L18.6,136.7L36.6,149.1L49.3,158.6L58.9,167.5L64,174.4L66.6,181.1L66.6,187.8L64,194.5L57.2,203.1"/><path class="s5" d="M-1.3,121.3L19,135.3L37,147.6L49.6,157.1L59.2,166.1L64.4,172.9L67,179.6L67,186.3L64.4,193L57.6,201.6"/><path class="s0" d="M-2.6,154L17.7,168L35.7,180.3L48.3,189.8L57.9,198.8L63.1,205.7L65.7,212.4L65.7,219L63.1,225.7L56.3,234.4"/><path class="s1" d="M-2.5,153.4L17.8,167.4L35.8,179.8L48.4,189.3L58.1,198.2L63.2,205.1L65.8,211.8L65.8,218.4L63.2,225.2L56.4,233.8"/><path class="s2" d="M-2.3,152.4L18,166.4L36,178.7L48.7,188.2L58.3,197.1L63.4,204L66,210.7L66,217.4L63.4,224.1L56.6,232.7"/><path class="s3" d="M-2,151.1L18.3,165.1L36.3,177.4L49,186.9L58.6,195.9L63.7,202.7L66.3,209.5L66.3,216.1L63.7,222.8L56.9,231.5"/><path class="s4" d="M-1.7,149.8L18.6,163.7L36.6,176.1L49.3,185.6L58.9,194.5L64,201.4L66.6,208.1L66.6,214.8L64,221.5L57.2,230.1"/><path class="s5" d="M-1.3,148.3L19,162.3L37,174.6L49.6,184.1L59.2,193.1L64.4,199.9L67,206.6L67,213.3L64.4,220L57.6,228.6"/><path class="s0" d="M-2.6,181L17.7,195L35.7,207.3L48.3,216.8L57.9,225.8L63.1,232.7L65.7,239.4L65.7,246L63.1,252.7L56.3,261.4"/><path class="s1" d="M-2.5,180.4L17.8,194.4L35.8,206.8L48.4,216.3L58.1,225.2L63.2,232.1L65.8,238.8L65.8,245.4L63.2,252.2L56.4,260.8"/><path class="s2" d="M-2.3,179.4L18,193.4L36,205.7L48.7,215.2L58.3,224.1L63.4,231L66,237.7L66,244.4L63.4,251.1L56.6,259.7"/><path class="s3" d="M-2,178.1L18.3,192.1L36.3,204.4L49,213.9L58.6,222.9L63.7,229.7L66.3,236.5L66.3,243.1L63.7,249.8L56.9,258.5"/><path class="s4" d="M-1.7,176.8L18.6,190.7L36.6,203.1L49.3,212.6L58.9,221.5L64,228.4L66.6,235.1L66.6,241.8L64,248.5L57.2,257.1"/><path class="s5" d="M-1.3,175.3L19,189.3L37,201.6L49.6,211.1L59.2,220.1L64.4,226.9L67,233.6L67,240.3L64.4,247L57.6,255.6"/><g filter="url(#fBlur)"><path class="sg" d="M-19.4,-111.8L-13.7,-107.3L-7.9,-102.9L-2,-98.6L3.9,-94.3L9.8,-90.2L15.7,-86.2L21.5,-82.3L27.1,-78.6"/><path class="sh" d="M-13.7,-107.3L-7.9,-102.9L-2,-98.6L3.9,-94.3L9.8,-90.2L15.7,-86.2L21.5,-82.3"/><path class="sw" d="M-7.9,-102.9L-2,-98.6L3.9,-94.3L9.8,-90.2L15.7,-86.2"/><path class="sg" d="M-19.4,-57.8L-13.7,-53.3L-7.9,-48.9L-2,-44.6L3.9,-40.3L9.8,-36.2L15.7,-32.2L21.5,-28.3L27.1,-24.6"/><path class="sh" d="M-13.7,-53.3L-7.9,-48.9L-2,-44.6L3.9,-40.3L9.8,-36.2L15.7,-32.2L21.5,-28.3"/><path class="sw" d="M-7.9,-48.9L-2,-44.6L3.9,-40.3L9.8,-36.2L15.7,-32.2"/><path class="sg" d="M-19.4,-30.8L-13.7,-26.3L-7.9,-21.9L-2,-17.6L3.9,-13.3L9.8,-9.2L15.7,-5.2L21.5,-1.3L27.1,2.4"/><path class="sh" d="M-13.7,-26.3L-7.9,-21.9L-2,-17.6L3.9,-13.3L9.8,-9.2L15.7,-5.2L21.5,-1.3"/><path class="sw" d="M-7.9,-21.9L-2,-17.6L3.9,-13.3L9.8,-9.2L15.7,-5.2"/><path class="sg" d="M-19.4,-3.8L-13.7,0.7L-7.9,5.1L-2,9.4L3.9,13.7L9.8,17.8L15.7,21.8L21.5,25.7L27.1,29.4"/><path class="sh" d="M-13.7,0.7L-7.9,5.1L-2,9.4L3.9,13.7L9.8,17.8L15.7,21.8L21.5,25.7"/><path class="sw" d="M-7.9,5.1L-2,9.4L3.9,13.7L9.8,17.8L15.7,21.8"/><path class="sg" d="M-19.4,23.2L-13.7,27.7L-7.9,32.1L-2,36.4L3.9,40.7L9.8,44.8L15.7,48.8L21.5,52.7L27.1,56.4"/><path class="sh" d="M-13.7,27.7L-7.9,32.1L-2,36.4L3.9,40.7L9.8,44.8L15.7,48.8L21.5,52.7"/><path class="sw" d="M-7.9,32.1L-2,36.4L3.9,40.7L9.8,44.8L15.7,48.8"/><path class="sg" d="M-19.4,77.2L-13.7,81.7L-7.9,86.1L-2,90.4L3.9,94.7L9.8,98.8L15.7,102.8L21.5,106.7L27.1,110.4"/><path class="sh" d="M-13.7,81.7L-7.9,86.1L-2,90.4L3.9,94.7L9.8,98.8L15.7,102.8L21.5,106.7"/><path class="sw" d="M-7.9,86.1L-2,90.4L3.9,94.7L9.8,98.8L15.7,102.8"/><path class="sg" d="M-19.4,104.2L-13.7,108.7L-7.9,113.1L-2,117.4L3.9,121.7L9.8,125.8L15.7,129.8L21.5,133.7L27.1,137.4"/><path class="sh" d="M-13.7,108.7L-7.9,113.1L-2,117.4L3.9,121.7L9.8,125.8L15.7,129.8L21.5,133.7"/><path class="sw" d="M-7.9,113.1L-2,117.4L3.9,121.7L9.8,125.8L15.7,129.8"/><path class="sg" d="M-19.4,131.2L-13.7,135.7L-7.9,140.1L-2,144.4L3.9,148.7L9.8,152.8L15.7,156.8L21.5,160.7L27.1,164.4"/><path class="sh" d="M-13.7,135.7L-7.9,140.1L-2,144.4L3.9,148.7L9.8,152.8L15.7,156.8L21.5,160.7"/><path class="sw" d="M-7.9,140.1L-2,144.4L3.9,148.7L9.8,152.8L15.7,156.8"/><path class="sg" d="M-19.4,158.2L-13.7,162.7L-7.9,167.1L-2,171.4L3.9,175.7L9.8,179.8L15.7,183.8L21.5,187.7L27.1,191.4"/><path class="sh" d="M-13.7,162.7L-7.9,167.1L-2,171.4L3.9,175.7L9.8,179.8L15.7,183.8L21.5,187.7"/><path class="sw" d="M-7.9,167.1L-2,171.4L3.9,175.7L9.8,179.8L15.7,183.8"/></g><g clip-path="url(#cShade)"><path d="M-94,0 A94,24.4 0 0 0 94,0 L94,9 A94,24.4 0 0 1 -94,9 Z" fill="#1d3c5c" opacity="0.55"/><path d="M-94,8 A94,24.4 0 0 0 94,8 L94,15 A94,24.4 0 0 1 -94,15 Z" fill="#1d3c5c" opacity="0.22"/></g></g><path d="M-94.2,0 A94.2,24.4 0 0 0 94.2,0 L88,4.5 A88,23.5 0 0 1 -88,4.5 Z" fill="url(#gCham)"/><polygon points="-81.2,-68.6 -67,-73.6 -67,-44.6 -81.2,-47.4" fill="#3d7eb4"/><polygon points="-67,-73.6 -51.3,-72.5 -51.3,-41.8 -67,-44.6" fill="#4492cc"/><polygon points="-81.2,-68.6 -68,-74.7 -51.3,-73 -51.3,-71.6 -67,-72.5 -80.5,-67.2" fill="#4a9fde"/><polygon points="-36.6,-81.4 -30.8,-83.1 -30.8,-46 -36.6,-47.4" fill="#354e64"/><polygon points="-30.8,-83.1 -8.1,-83.9 -8.1,-44.6 -30.8,-46" fill="#4492cc"/><polygon points="-36.6,-81.4 -31.1,-84.2 -8.1,-85 -8.1,-83.3 -30.8,-82.2" fill="#4a9fde"/><polygon points="17.4,-78.3 38.3,-76.9 38.3,-44.6 17.4,-44.6" fill="url(#gBM3)"/><polygon points="38.3,-76.9 47.3,-80.8 47.3,-46 38.3,-44.6" fill="#4a9fde"/><polygon points="17.4,-78.3 21.6,-81.7 47.3,-80.8 38.3,-76.7" fill="#4a9fde"/><polygon points="57.8,-72.2 70.3,-65.5 70.3,-41.8 57.8,-43.2" fill="#354e64"/><polygon points="70.3,-65.5 84.9,-68.9 84.9,-50.2 70.3,-41.8" fill="#4a9fde"/><polygon points="57.8,-72.2 70.3,-75.5 84.9,-68.9 70.3,-65.2" fill="#4a9fde"/><ellipse cx="0" cy="-22" rx="93.8" ry="21" fill="url(#gBody)"/><ellipse cx="0" cy="-32.2" rx="92" ry="22.3" fill="#4594ce"/><ellipse cx="-0.5" cy="-31" rx="80" ry="18.5" fill="#428dc8"/><ellipse cx="-4.1" cy="-30.1" rx="55" ry="15" fill="#4695d0"/><path d="M-49.3,-39.2 Q-25,-44.1 6.4,-40.9" stroke="#2f5f8a" stroke-width="1.6" stroke-dasharray="3 2 5 3 2 6" fill="none" opacity="0.8"/><path d="M38.6,-36 L46.4,-35.4" stroke="#2b4a66" stroke-width="1.4" fill="none"/><path d="M-58.9,-35.4 L-52.8,-34.3" stroke="#2b4a66" stroke-width="1.2" fill="none"/><polygon points="-95.3,-58.4 -93.5,-63.9 -76.6,-63.7 -76.6,-50.3 -88.8,-47.9 -88.8,-19.5 -95.3,-25.1" fill="#4a9fde"/><polygon points="-93.5,-55.8 -88.9,-55.8 -88.9,-20.4 -93.5,-24.8" fill="#3f86bf"/><polygon points="73.1,-56.5 76.9,-59.9 92,-59.7 92,-20.9 73.1,-20.9" fill="#4a9fde"/><polygon points="78.7,-52.7 89.3,-52.7 89.3,-24.1 78.7,-25.1" fill="#418bc6"/><path d="M-94.9,-24.6 L-94.2,0 A94,24.4 0 0 0 94.2,0 L93.4,-24.6 A94,20 0 0 1 -94.9,-24.6 Z" fill="url(#gBody)"/><polygon points="-51.1,-33.1 -24.1,-37.1 4.6,-37.1 4.6,-3.5 -24.1,-3.8 -51.1,-7.2" fill="url(#gBody)"/><polygon points="-18.9,-21.4 4.6,-17.6 4.6,-9.2 -18.9,-9.6" fill="url(#gNotch)"/><path d="M-18.9,-21.4 Q-11.9,-31.3 4.6,-33.4 L4.6,-17.6 Q-7.6,-16.9 -18.9,-21.4 Z" fill="#4a9fde"/><polygon points="4.2,-44.6 38.3,-42.1 33.4,-36.3 4.2,-36.8" fill="#4a9fde"/><polygon points="4.2,-36.8 33.4,-36.3 33.4,-4.9 4.2,-2.8" fill="#479bd9"/><polygon points="33.4,-15.1 37.2,-14.3 37.2,-10.1 33.4,-10.5" fill="#35648f"/><path d="M4.6,-37.1 L4.6,-3.5" stroke="#3a7db5" stroke-width="0.8" fill="none"/><polygon points="-88.8,-48.8 -73.7,-42 -73.7,-18.6 -88.8,-21.9" fill="#354e64"/><polygon points="-88.8,-49 -76.2,-51.1 -66,-47.4 -51.4,-37.8 -51.4,-7.7 -73.7,-12.8 -73.7,-42" fill="#4798d5"/><polygon points="-88.8,-49 -76.2,-51.1 -66,-47.4 -51.4,-37.8 -73.7,-42" fill="#4a9fde"/><polygon points="48,-41.6 58.5,-39 58.5,-10.2 48,-15.8" fill="#354e64"/><polygon points="48,-41.6 63.4,-46.8 78.1,-45.2 78.1,-8.4 58.5,-10.2 58.5,-39" fill="#4899d7"/><polygon points="48,-41.6 63.4,-46.8 78.1,-45.2 58.5,-39" fill="#4a9fde"/></g>
<g transform="translate(778.5,431.4)"><path d="M-117.5,299 A117.5,30.5 0 0 0 117.5,299 L112.5,305 A112.5,32.5 0 0 1 -112.5,305 Z" fill="url(#gDarkBot)"/><path d="M-115.5,282 A115.5,27.5 0 0 0 115.5,282 L117.5,299 A117.5,30.5 0 0 1 -117.5,299 Z" fill="url(#gTier)"/><path d="M-105.5,248 A105.5,30 0 0 0 105.5,248 L115.5,282 A115.5,27.5 0 0 1 -115.5,282 Z" fill="url(#gTier)"/><path d="M-115.5,282 A115.5,27.5 0 0 0 115.5,282" stroke="#2f6293" stroke-width="1.6" fill="none" opacity="0.7"/><path d="M-115.5,283.6 A115.5,27.5 0 0 0 115.5,283.6" stroke="#58abe8" stroke-width="1.2" fill="none" opacity="0.8"/><path d="M-96,261.4 L-105.1,292.4" stroke="#2c5c8b" stroke-width="1.5" fill="none" opacity="0.85"/><path d="M-94.6,261.4 L-103.7,292.4" stroke="#5aaeea" stroke-width="1" fill="none" opacity="0.7"/><path d="M-57,274.2 L-62.4,304.1" stroke="#2c5c8b" stroke-width="1.5" fill="none" opacity="0.85"/><path d="M-55.6,274.2 L-61,304.1" stroke="#5aaeea" stroke-width="1" fill="none" opacity="0.7"/><path d="M8.5,278.9 L9.3,308.4" stroke="#2c5c8b" stroke-width="1.5" fill="none" opacity="0.85"/><path d="M9.9,278.9 L10.7,308.4" stroke="#5aaeea" stroke-width="1" fill="none" opacity="0.7"/><path d="M66,272.4 L72.3,302.5" stroke="#2c5c8b" stroke-width="1.5" fill="none" opacity="0.85"/><path d="M67.4,272.4 L73.7,302.5" stroke="#5aaeea" stroke-width="1" fill="none" opacity="0.7"/><path d="M98,260.1 L107.3,291.2" stroke="#2c5c8b" stroke-width="1.5" fill="none" opacity="0.85"/><path d="M99.4,260.1 L108.7,291.2" stroke="#5aaeea" stroke-width="1" fill="none" opacity="0.7"/><path d="M-108,293.7 L-109.9,309.8" stroke="#2c5c8b" stroke-width="1.5" fill="none" opacity="0.85"/><path d="M-106.6,293.7 L-108.5,309.8" stroke="#5aaeea" stroke-width="1" fill="none" opacity="0.7"/><path d="M-86,302.4 L-87.5,319.4" stroke="#2c5c8b" stroke-width="1.5" fill="none" opacity="0.85"/><path d="M-84.6,302.4 L-86.1,319.4" stroke="#5aaeea" stroke-width="1" fill="none" opacity="0.7"/><path d="M-25,310.8 L-25.4,328.8" stroke="#2c5c8b" stroke-width="1.5" fill="none" opacity="0.85"/><path d="M-23.6,310.8 L-24,328.8" stroke="#5aaeea" stroke-width="1" fill="none" opacity="0.7"/><path d="M45,309.3 L45.8,327.1" stroke="#2c5c8b" stroke-width="1.5" fill="none" opacity="0.85"/><path d="M46.4,309.3 L47.2,327.1" stroke="#5aaeea" stroke-width="1" fill="none" opacity="0.7"/><path d="M97,298.9 L98.7,315.6" stroke="#2c5c8b" stroke-width="1.5" fill="none" opacity="0.85"/><path d="M98.4,298.9 L100.1,315.6" stroke="#5aaeea" stroke-width="1" fill="none" opacity="0.7"/><ellipse cx="0" cy="248" rx="105.5" ry="30" fill="url(#gLedge)"/><path d="M-94,186.8 A94,27.4 0 0 0 94,186.8 L94,240 A94,32.5 0 0 1 -94,240 Z" fill="url(#gBody)"/><path d="M-94,240 A94,32.5 0 0 0 94,240" stroke="#2c5c8b" stroke-width="1.5" fill="none" opacity="0.5"/><g clip-path="url(#cBase)"><text font-family="Liberation Sans, sans-serif" font-weight="bold" font-size="68" fill="url(#gText)" filter="url(#fEng)"><tspan x="-85.2" y="263" textLength="20.8" lengthAdjust="spacingAndGlyphs">f</tspan><tspan x="-61.4" y="263" textLength="35.7" lengthAdjust="spacingAndGlyphs">o</tspan><tspan x="-28.3" y="266.5" textLength="19.5" lengthAdjust="spacingAndGlyphs">r</tspan><tspan x="-14.6" y="271.5" textLength="70.2" lengthAdjust="spacingAndGlyphs">m</tspan><tspan x="60.2" y="265.3" textLength="12.9" lengthAdjust="spacingAndGlyphs">l</tspan><tspan x="71.9" y="259.5" textLength="32.4" lengthAdjust="spacingAndGlyphs">a</tspan></text></g><ellipse cx="0" cy="188" rx="94" ry="27.4" fill="url(#gTop)"/><polygon points="-84,327 -72,324 -63,317.5 -57,314.5 -51,317.5 -45,324 -40,329 -30,330.5 -23,337 -23,337.6 -32,337 -42,336 -52,334.6 -62,332.9 -72,330.8 -84,327.4" fill="#ffffff"/><g clip-path="url(#cCol)"><rect x="-52" y="0" width="104" height="196" fill="#30689c"/><path class="b0" d="M63.1,-118.3L66,-107.9L62.6,-97.5L53.1,-86.6L38.5,-75L20.2,-62.4L0,-48.5L-20.2,-33.4L-38.5,-17L-53.1,0.3L-62.6,18.5L-66,37L-63.1,55.5"/><path class="b1" d="M62.6,-115.3L65.5,-104.9L62.1,-94.5L52.6,-83.6L38,-72L19.7,-59.4L-0.5,-45.5L-20.7,-30.4L-39,-14L-53.6,3.3L-63.1,21.5L-66.5,40L-63.6,58.5"/><path class="b0" d="M63.1,-91.3L66,-80.9L62.6,-70.5L53.1,-59.6L38.5,-48L20.2,-35.4L0,-21.5L-20.2,-6.4L-38.5,10L-53.1,27.3L-62.6,45.5L-66,64L-63.1,82.5"/><path class="b1" d="M62.6,-88.3L65.5,-77.9L62.1,-67.5L52.6,-56.6L38,-45L19.7,-32.4L-0.5,-18.5L-20.7,-3.4L-39,13L-53.6,30.3L-63.1,48.5L-66.5,67L-63.6,85.5"/><path class="b0" d="M63.1,-64.3L66,-53.9L62.6,-43.5L53.1,-32.6L38.5,-21L20.2,-8.4L0,5.5L-20.2,20.6L-38.5,37L-53.1,54.3L-62.6,72.5L-66,91L-63.1,109.5"/><path class="b1" d="M62.6,-61.3L65.5,-50.9L62.1,-40.5L52.6,-29.6L38,-18L19.7,-5.4L-0.5,8.5L-20.7,23.6L-39,40L-53.6,57.3L-63.1,75.5L-66.5,94L-63.6,112.5"/><path class="b0" d="M63.1,-37.3L66,-26.9L62.6,-16.5L53.1,-5.6L38.5,6L20.2,18.6L0,32.5L-20.2,47.6L-38.5,64L-53.1,81.3L-62.6,99.5L-66,118L-63.1,136.5"/><path class="b1" d="M62.6,-34.3L65.5,-23.9L62.1,-13.5L52.6,-2.6L38,9L19.7,21.6L-0.5,35.5L-20.7,50.6L-39,67L-53.6,84.3L-63.1,102.5L-66.5,121L-63.6,139.5"/><path class="b0" d="M63.1,16.7L66,27.1L62.6,37.5L53.1,48.4L38.5,60L20.2,72.6L0,86.5L-20.2,101.6L-38.5,118L-53.1,135.3L-62.6,153.5L-66,172L-63.1,190.5"/><path class="b1" d="M62.6,19.7L65.5,30.1L62.1,40.5L52.6,51.4L38,63L19.7,75.6L-0.5,89.5L-20.7,104.6L-39,121L-53.6,138.3L-63.1,156.5L-66.5,175L-63.6,193.5"/><path class="b0" d="M63.1,43.7L66,54.1L62.6,64.5L53.1,75.4L38.5,87L20.2,99.6L0,113.5L-20.2,128.6L-38.5,145L-53.1,162.3L-62.6,180.5L-66,199L-63.1,217.5"/><path class="b1" d="M62.6,46.7L65.5,57.1L62.1,67.5L52.6,78.4L38,90L19.7,102.6L-0.5,116.5L-20.7,131.6L-39,148L-53.6,165.3L-63.1,183.5L-66.5,202L-63.6,220.5"/><path class="b0" d="M63.1,70.7L66,81.1L62.6,91.5L53.1,102.4L38.5,114L20.2,126.6L0,140.5L-20.2,155.6L-38.5,172L-53.1,189.3L-62.6,207.5L-66,226L-63.1,244.5"/><path class="b1" d="M62.6,73.7L65.5,84.1L62.1,94.5L52.6,105.4L38,117L19.7,129.6L-0.5,143.5L-20.7,158.6L-39,175L-53.6,192.3L-63.1,210.5L-66.5,229L-63.6,247.5"/><path class="b0" d="M63.1,97.7L66,108.1L62.6,118.5L53.1,129.4L38.5,141L20.2,153.6L0,167.5L-20.2,182.6L-38.5,199L-53.1,216.3L-62.6,234.5L-66,253L-63.1,271.5"/><path class="b1" d="M62.6,100.7L65.5,111.1L62.1,121.5L52.6,132.4L38,144L19.7,156.6L-0.5,170.5L-20.7,185.6L-39,202L-53.6,219.3L-63.1,237.5L-66.5,256L-63.6,274.5"/><path class="b0" d="M63.1,151.7L66,162.1L62.6,172.5L53.1,183.4L38.5,195L20.2,207.6L0,221.5L-20.2,236.6L-38.5,253L-53.1,270.3L-62.6,288.5L-66,307L-63.1,325.5"/><path class="b1" d="M62.6,154.7L65.5,165.1L62.1,175.5L52.6,186.4L38,198L19.7,210.6L-0.5,224.5L-20.7,239.6L-39,256L-53.6,273.3L-63.1,291.5L-66.5,310L-63.6,328.5"/><path class="b0" d="M63.1,178.7L66,189.1L62.6,199.5L53.1,210.4L38.5,222L20.2,234.6L0,248.5L-20.2,263.6L-38.5,280L-53.1,297.3L-62.6,315.5L-66,334L-63.1,352.5"/><path class="b1" d="M62.6,181.7L65.5,192.1L62.1,202.5L52.6,213.4L38,225L19.7,237.6L-0.5,251.5L-20.7,266.6L-39,283L-53.6,300.3L-63.1,318.5L-66.5,337L-63.6,355.5"/><path class="b0" d="M63.1,205.7L66,216.1L62.6,226.5L53.1,237.4L38.5,249L20.2,261.6L0,275.5L-20.2,290.6L-38.5,307L-53.1,324.3L-62.6,342.5L-66,361L-63.1,379.5"/><path class="b1" d="M62.6,208.7L65.5,219.1L62.1,229.5L52.6,240.4L38,252L19.7,264.6L-0.5,278.5L-20.7,293.6L-39,310L-53.6,327.3L-63.1,345.5L-66.5,364L-63.6,382.5"/><path class="c0" d="M0.3,20L-4.3,24L-8,28L-9.9,32L-9.3,36L-6.3,40L-2,44L2.3,48L5.3,52L5.9,56L4,60L0.3,64L-4.3,68L-8,72L-9.9,76L-9.3,80L-6.3,84L-2,88L2.3,92L5.3,96L5.9,100L4,104L0.3,108L-4.3,112L-8,116L-9.9,120L-9.3,124L-6.3,128L-2,132L2.3,136L5.3,140L5.9,144L4,148L0.3,152L-4.3,156L-8,160L-9.9,164L-9.3,168L-6.3,172L-2,176L2.3,180L5.3,184L5.9,188"/><path class="c1" d="M0.3,20L-4.3,24L-8,28L-9.9,32L-9.3,36L-6.3,40L-2,44L2.3,48L5.3,52L5.9,56L4,60L0.3,64L-4.3,68L-8,72L-9.9,76L-9.3,80L-6.3,84L-2,88L2.3,92L5.3,96L5.9,100L4,104L0.3,108L-4.3,112L-8,116L-9.9,120L-9.3,124L-6.3,128L-2,132L2.3,136L5.3,140L5.9,144L4,148L0.3,152L-4.3,156L-8,160L-9.9,164L-9.3,168L-6.3,172L-2,176L2.3,180L5.3,184L5.9,188"/><path class="c0" d="M-4.3,20L0.3,24L4,28L5.9,32L5.3,36L2.3,40L-2,44L-6.3,48L-9.3,52L-9.9,56L-8,60L-4.3,64L0.3,68L4,72L5.9,76L5.3,80L2.3,84L-2,88L-6.3,92L-9.3,96L-9.9,100L-8,104L-4.3,108L0.3,112L4,116L5.9,120L5.3,124L2.3,128L-2,132L-6.3,136L-9.3,140L-9.9,144L-8,148L-4.3,152L0.3,156L4,160L5.9,164L5.3,168L2.3,172L-2,176L-6.3,180L-9.3,184L-9.9,188"/><path class="c1" d="M-4.3,20L0.3,24L4,28L5.9,32L5.3,36L2.3,40L-2,44L-6.3,48L-9.3,52L-9.9,56L-8,60L-4.3,64L0.3,68L4,72L5.9,76L5.3,80L2.3,84L-2,88L-6.3,92L-9.3,96L-9.9,100L-8,104L-4.3,108L0.3,112L4,116L5.9,120L5.3,124L2.3,128L-2,132L-6.3,136L-9.3,140L-9.9,144L-8,148L-4.3,152L0.3,156L4,160L5.9,164L5.3,168L2.3,172L-2,176L-6.3,180L-9.3,184L-9.9,188"/><path class="s0" d="M-56.3,172.2L-63.1,186.9L-65.7,198.7L-65.7,210.7L-63.1,222.5L-57.9,234.3L-48.3,248.6L-35.7,262.3L-17.7,277.8L2.6,292.7"/><path class="s1" d="M-56.1,171.7L-62.9,186.3L-65.5,198.2L-65.5,210.1L-62.9,222L-57.8,233.7L-48.2,248L-35.5,261.7L-17.5,277.3L2.8,292.2"/><path class="s2" d="M-55.9,170.6L-62.7,185.2L-65.3,197.1L-65.3,209L-62.7,220.9L-57.5,232.6L-47.9,246.9L-35.3,260.6L-17.3,276.2L3,291.1"/><path class="s3" d="M-55.6,169.3L-62.4,183.9L-65,195.8L-65,207.8L-62.4,219.6L-57.3,231.4L-47.6,245.6L-35,259.4L-17,274.9L3.3,289.8"/><path class="s4" d="M-55.3,168L-62.1,182.6L-64.7,194.5L-64.7,206.4L-62.1,218.3L-57,230L-47.3,244.3L-34.7,258L-16.7,273.6L3.6,288.5"/><path class="s5" d="M-55,166.5L-61.8,181.1L-64.4,193L-64.4,204.9L-61.8,216.8L-56.6,228.5L-47,242.8L-34.4,256.6L-16.4,272.1L3.9,287"/><path class="s0" d="M-56.3,145.2L-63.1,159.9L-65.7,171.7L-65.7,183.7L-63.1,195.5L-57.9,207.3L-48.3,221.6L-35.7,235.3L-17.7,250.8L2.6,265.7"/><path class="s1" d="M-56.1,144.7L-62.9,159.3L-65.5,171.2L-65.5,183.1L-62.9,195L-57.8,206.7L-48.2,221L-35.5,234.7L-17.5,250.3L2.8,265.2"/><path class="s2" d="M-55.9,143.6L-62.7,158.2L-65.3,170.1L-65.3,182L-62.7,193.9L-57.5,205.6L-47.9,219.9L-35.3,233.6L-17.3,249.2L3,264.1"/><path class="s3" d="M-55.6,142.3L-62.4,156.9L-65,168.8L-65,180.8L-62.4,192.6L-57.3,204.4L-47.6,218.6L-35,232.4L-17,247.9L3.3,262.8"/><path class="s4" d="M-55.3,141L-62.1,155.6L-64.7,167.5L-64.7,179.4L-62.1,191.3L-57,203L-47.3,217.3L-34.7,231L-16.7,246.6L3.6,261.5"/><path class="s5" d="M-55,139.5L-61.8,154.1L-64.4,166L-64.4,177.9L-61.8,189.8L-56.6,201.5L-47,215.8L-34.4,229.6L-16.4,245.1L3.9,260"/><path class="s0" d="M-56.3,118.2L-63.1,132.9L-65.7,144.7L-65.7,156.7L-63.1,168.5L-57.9,180.3L-48.3,194.6L-35.7,208.3L-17.7,223.8L2.6,238.7"/><path class="s1" d="M-56.1,117.7L-62.9,132.3L-65.5,144.2L-65.5,156.1L-62.9,168L-57.8,179.7L-48.2,194L-35.5,207.7L-17.5,223.3L2.8,238.2"/><path class="s2" d="M-55.9,116.6L-62.7,131.2L-65.3,143.1L-65.3,155L-62.7,166.9L-57.5,178.6L-47.9,192.9L-35.3,206.6L-17.3,222.2L3,237.1"/><path class="s3" d="M-55.6,115.3L-62.4,129.9L-65,141.8L-65,153.8L-62.4,165.6L-57.3,177.4L-47.6,191.6L-35,205.4L-17,220.9L3.3,235.8"/><path class="s4" d="M-55.3,114L-62.1,128.6L-64.7,140.5L-64.7,152.4L-62.1,164.3L-57,176L-47.3,190.3L-34.7,204L-16.7,219.6L3.6,234.5"/><path class="s5" d="M-55,112.5L-61.8,127.1L-64.4,139L-64.4,150.9L-61.8,162.8L-56.6,174.5L-47,188.8L-34.4,202.6L-16.4,218.1L3.9,233"/><path class="s0" d="M-56.3,64.2L-63.1,78.9L-65.7,90.7L-65.7,102.7L-63.1,114.5L-57.9,126.3L-48.3,140.6L-35.7,154.3L-17.7,169.8L2.6,184.7"/><path class="s1" d="M-56.1,63.7L-62.9,78.3L-65.5,90.2L-65.5,102.1L-62.9,114L-57.8,125.7L-48.2,140L-35.5,153.7L-17.5,169.3L2.8,184.2"/><path class="s2" d="M-55.9,62.6L-62.7,77.2L-65.3,89.1L-65.3,101L-62.7,112.9L-57.5,124.6L-47.9,138.9L-35.3,152.6L-17.3,168.2L3,183.1"/><path class="s3" d="M-55.6,61.3L-62.4,75.9L-65,87.8L-65,99.8L-62.4,111.6L-57.3,123.4L-47.6,137.6L-35,151.4L-17,166.9L3.3,181.8"/><path class="s4" d="M-55.3,60L-62.1,74.6L-64.7,86.5L-64.7,98.4L-62.1,110.3L-57,122L-47.3,136.3L-34.7,150L-16.7,165.6L3.6,180.5"/><path class="s5" d="M-55,58.5L-61.8,73.1L-64.4,85L-64.4,96.9L-61.8,108.8L-56.6,120.5L-47,134.8L-34.4,148.6L-16.4,164.1L3.9,179"/><path class="s0" d="M-56.3,37.2L-63.1,51.9L-65.7,63.7L-65.7,75.7L-63.1,87.5L-57.9,99.3L-48.3,113.6L-35.7,127.3L-17.7,142.8L2.6,157.7"/><path class="s1" d="M-56.1,36.7L-62.9,51.3L-65.5,63.2L-65.5,75.1L-62.9,87L-57.8,98.7L-48.2,113L-35.5,126.7L-17.5,142.3L2.8,157.2"/><path class="s2" d="M-55.9,35.6L-62.7,50.2L-65.3,62.1L-65.3,74L-62.7,85.9L-57.5,97.6L-47.9,111.9L-35.3,125.6L-17.3,141.2L3,156.1"/><path class="s3" d="M-55.6,34.3L-62.4,48.9L-65,60.8L-65,72.8L-62.4,84.6L-57.3,96.4L-47.6,110.6L-35,124.4L-17,139.9L3.3,154.8"/><path class="s4" d="M-55.3,33L-62.1,47.6L-64.7,59.5L-64.7,71.4L-62.1,83.3L-57,95L-47.3,109.3L-34.7,123L-16.7,138.6L3.6,153.5"/><path class="s5" d="M-55,31.5L-61.8,46.1L-64.4,58L-64.4,69.9L-61.8,81.8L-56.6,93.5L-47,107.8L-34.4,121.6L-16.4,137.1L3.9,152"/><path class="s0" d="M-56.3,10.2L-63.1,24.9L-65.7,36.7L-65.7,48.7L-63.1,60.5L-57.9,72.3L-48.3,86.6L-35.7,100.3L-17.7,115.8L2.6,130.7"/><path class="s1" d="M-56.1,9.7L-62.9,24.3L-65.5,36.2L-65.5,48.1L-62.9,60L-57.8,71.7L-48.2,86L-35.5,99.7L-17.5,115.3L2.8,130.2"/><path class="s2" d="M-55.9,8.6L-62.7,23.2L-65.3,35.1L-65.3,47L-62.7,58.9L-57.5,70.6L-47.9,84.9L-35.3,98.6L-17.3,114.2L3,129.1"/><path class="s3" d="M-55.6,7.3L-62.4,21.9L-65,33.8L-65,45.8L-62.4,57.6L-57.3,69.4L-47.6,83.6L-35,97.4L-17,112.9L3.3,127.8"/><path class="s4" d="M-55.3,6L-62.1,20.6L-64.7,32.5L-64.7,44.4L-62.1,56.3L-57,68L-47.3,82.3L-34.7,96L-16.7,111.6L3.6,126.5"/><path class="s5" d="M-55,4.5L-61.8,19.1L-64.4,31L-64.4,42.9L-61.8,54.8L-56.6,66.5L-47,80.8L-34.4,94.6L-16.4,110.1L3.9,125"/><path class="s0" d="M-56.3,-16.8L-63.1,-2.1L-65.7,9.7L-65.7,21.7L-63.1,33.5L-57.9,45.3L-48.3,59.6L-35.7,73.3L-17.7,88.8L2.6,103.7"/><path class="s1" d="M-56.1,-17.3L-62.9,-2.7L-65.5,9.2L-65.5,21.1L-62.9,33L-57.8,44.7L-48.2,59L-35.5,72.7L-17.5,88.3L2.8,103.2"/><path class="s2" d="M-55.9,-18.4L-62.7,-3.8L-65.3,8.1L-65.3,20L-62.7,31.9L-57.5,43.6L-47.9,57.9L-35.3,71.6L-17.3,87.2L3,102.1"/><path class="s3" d="M-55.6,-19.7L-62.4,-5.1L-65,6.8L-65,18.8L-62.4,30.6L-57.3,42.4L-47.6,56.6L-35,70.4L-17,85.9L3.3,100.8"/><path class="s4" d="M-55.3,-21L-62.1,-6.4L-64.7,5.5L-64.7,17.4L-62.1,29.3L-57,41L-47.3,55.3L-34.7,69L-16.7,84.6L3.6,99.5"/><path class="s5" d="M-55,-22.5L-61.8,-7.9L-64.4,4L-64.4,15.9L-61.8,27.8L-56.6,39.5L-47,53.8L-34.4,67.6L-16.4,83.1L3.9,98"/><path class="s0" d="M-56.3,-70.8L-63.1,-56.1L-65.7,-44.3L-65.7,-32.3L-63.1,-20.5L-57.9,-8.7L-48.3,5.6L-35.7,19.3L-17.7,34.8L2.6,49.7"/><path class="s1" d="M-56.1,-71.3L-62.9,-56.7L-65.5,-44.8L-65.5,-32.9L-62.9,-21L-57.8,-9.3L-48.2,5L-35.5,18.7L-17.5,34.3L2.8,49.2"/><path class="s2" d="M-55.9,-72.4L-62.7,-57.8L-65.3,-45.9L-65.3,-34L-62.7,-22.1L-57.5,-10.4L-47.9,3.9L-35.3,17.6L-17.3,33.2L3,48.1"/><path class="s3" d="M-55.6,-73.7L-62.4,-59.1L-65,-47.2L-65,-35.2L-62.4,-23.4L-57.3,-11.6L-47.6,2.6L-35,16.4L-17,31.9L3.3,46.8"/><path class="s4" d="M-55.3,-75L-62.1,-60.4L-64.7,-48.5L-64.7,-36.6L-62.1,-24.7L-57,-13L-47.3,1.3L-34.7,15L-16.7,30.6L3.6,45.5"/><path class="s5" d="M-55,-76.5L-61.8,-61.9L-64.4,-50L-64.4,-38.1L-61.8,-26.2L-56.6,-14.5L-47,-0.2L-34.4,13.6L-16.4,29.1L3.9,44"/><path class="s0" d="M-56.3,-97.8L-63.1,-83.1L-65.7,-71.3L-65.7,-59.3L-63.1,-47.5L-57.9,-35.7L-48.3,-21.4L-35.7,-7.7L-17.7,7.8L2.6,22.7"/><path class="s1" d="M-56.1,-98.3L-62.9,-83.7L-65.5,-71.8L-65.5,-59.9L-62.9,-48L-57.8,-36.3L-48.2,-22L-35.5,-8.3L-17.5,7.3L2.8,22.2"/><path class="s2" d="M-55.9,-99.4L-62.7,-84.8L-65.3,-72.9L-65.3,-61L-62.7,-49.1L-57.5,-37.4L-47.9,-23.1L-35.3,-9.4L-17.3,6.2L3,21.1"/><path class="s3" d="M-55.6,-100.7L-62.4,-86.1L-65,-74.2L-65,-62.2L-62.4,-50.4L-57.3,-38.6L-47.6,-24.4L-35,-10.6L-17,4.9L3.3,19.8"/><path class="s4" d="M-55.3,-102L-62.1,-87.4L-64.7,-75.5L-64.7,-63.6L-62.1,-51.7L-57,-40L-47.3,-25.7L-34.7,-12L-16.7,3.6L3.6,18.5"/><path class="s5" d="M-55,-103.5L-61.8,-88.9L-64.4,-77L-64.4,-65.1L-61.8,-53.2L-56.6,-41.5L-47,-27.2L-34.4,-13.4L-16.4,2.1L3.9,17"/><path class="s0" d="M-56.3,-124.8L-63.1,-110.1L-65.7,-98.3L-65.7,-86.3L-63.1,-74.5L-57.9,-62.7L-48.3,-48.4L-35.7,-34.7L-17.7,-19.2L2.6,-4.3"/><path class="s1" d="M-56.1,-125.3L-62.9,-110.7L-65.5,-98.8L-65.5,-86.9L-62.9,-75L-57.8,-63.3L-48.2,-49L-35.5,-35.3L-17.5,-19.7L2.8,-4.8"/><path class="s2" d="M-55.9,-126.4L-62.7,-111.8L-65.3,-99.9L-65.3,-88L-62.7,-76.1L-57.5,-64.4L-47.9,-50.1L-35.3,-36.4L-17.3,-20.8L3,-5.9"/><path class="s3" d="M-55.6,-127.7L-62.4,-113.1L-65,-101.2L-65,-89.2L-62.4,-77.4L-57.3,-65.6L-47.6,-51.4L-35,-37.6L-17,-22.1L3.3,-7.2"/><path class="s4" d="M-55.3,-129L-62.1,-114.4L-64.7,-102.5L-64.7,-90.6L-62.1,-78.7L-57,-67L-47.3,-52.7L-34.7,-39L-16.7,-23.4L3.6,-8.5"/><path class="s5" d="M-55,-130.5L-61.8,-115.9L-64.4,-104L-64.4,-92.1L-61.8,-80.2L-56.6,-68.5L-47,-54.2L-34.4,-40.4L-16.4,-24.9L3.9,-10"/><path class="s0" d="M-2.6,-89L17.7,-75L35.7,-62.7L48.3,-53.2L57.9,-44.2L63.1,-37.3L65.7,-30.6L65.7,-24L63.1,-17.3L56.3,-8.6"/><path class="s1" d="M-2.5,-89.6L17.8,-75.6L35.8,-63.2L48.4,-53.7L58.1,-44.8L63.2,-37.9L65.8,-31.2L65.8,-24.6L63.2,-17.8L56.4,-9.2"/><path class="s2" d="M-2.3,-90.6L18,-76.6L36,-64.3L48.7,-54.8L58.3,-45.9L63.4,-39L66,-32.3L66,-25.6L63.4,-18.9L56.6,-10.3"/><path class="s3" d="M-2,-91.9L18.3,-77.9L36.3,-65.6L49,-56.1L58.6,-47.1L63.7,-40.3L66.3,-33.5L66.3,-26.9L63.7,-20.2L56.9,-11.5"/><path class="s4" d="M-1.7,-93.2L18.6,-79.3L36.6,-66.9L49.3,-57.4L58.9,-48.5L64,-41.6L66.6,-34.9L66.6,-28.2L64,-21.5L57.2,-12.9"/><path class="s5" d="M-1.3,-94.7L19,-80.7L37,-68.4L49.6,-58.9L59.2,-49.9L64.4,-43.1L67,-36.4L67,-29.7L64.4,-23L57.6,-14.4"/><path class="s0" d="M-2.6,-35L17.7,-21L35.7,-8.7L48.3,0.8L57.9,9.8L63.1,16.7L65.7,23.4L65.7,30L63.1,36.7L56.3,45.4"/><path class="s1" d="M-2.5,-35.6L17.8,-21.6L35.8,-9.2L48.4,0.3L58.1,9.2L63.2,16.1L65.8,22.8L65.8,29.4L63.2,36.2L56.4,44.8"/><path class="s2" d="M-2.3,-36.6L18,-22.6L36,-10.3L48.7,-0.8L58.3,8.1L63.4,15L66,21.7L66,28.4L63.4,35.1L56.6,43.7"/><path class="s3" d="M-2,-37.9L18.3,-23.9L36.3,-11.6L49,-2.1L58.6,6.9L63.7,13.7L66.3,20.5L66.3,27.1L63.7,33.8L56.9,42.5"/><path class="s4" d="M-1.7,-39.2L18.6,-25.3L36.6,-12.9L49.3,-3.4L58.9,5.5L64,12.4L66.6,19.1L66.6,25.8L64,32.5L57.2,41.1"/><path class="s5" d="M-1.3,-40.7L19,-26.7L37,-14.4L49.6,-4.9L59.2,4.1L64.4,10.9L67,17.6L67,24.3L64.4,31L57.6,39.6"/><path class="s0" d="M-2.6,-8L17.7,6L35.7,18.3L48.3,27.8L57.9,36.8L63.1,43.7L65.7,50.4L65.7,57L63.1,63.7L56.3,72.4"/><path class="s1" d="M-2.5,-8.6L17.8,5.4L35.8,17.8L48.4,27.3L58.1,36.2L63.2,43.1L65.8,49.8L65.8,56.4L63.2,63.2L56.4,71.8"/><path class="s2" d="M-2.3,-9.6L18,4.4L36,16.7L48.7,26.2L58.3,35.1L63.4,42L66,48.7L66,55.4L63.4,62.1L56.6,70.7"/><path class="s3" d="M-2,-10.9L18.3,3.1L36.3,15.4L49,24.9L58.6,33.9L63.7,40.7L66.3,47.5L66.3,54.1L63.7,60.8L56.9,69.5"/><path class="s4" d="M-1.7,-12.2L18.6,1.7L36.6,14.1L49.3,23.6L58.9,32.5L64,39.4L66.6,46.1L66.6,52.8L64,59.5L57.2,68.1"/><path class="s5" d="M-1.3,-13.7L19,0.3L37,12.6L49.6,22.1L59.2,31.1L64.4,37.9L67,44.6L67,51.3L64.4,58L57.6,66.6"/><path class="s0" d="M-2.6,19L17.7,33L35.7,45.3L48.3,54.8L57.9,63.8L63.1,70.7L65.7,77.4L65.7,84L63.1,90.7L56.3,99.4"/><path class="s1" d="M-2.5,18.4L17.8,32.4L35.8,44.8L48.4,54.3L58.1,63.2L63.2,70.1L65.8,76.8L65.8,83.4L63.2,90.2L56.4,98.8"/><path class="s2" d="M-2.3,17.4L18,31.4L36,43.7L48.7,53.2L58.3,62.1L63.4,69L66,75.7L66,82.4L63.4,89.1L56.6,97.7"/><path class="s3" d="M-2,16.1L18.3,30.1L36.3,42.4L49,51.9L58.6,60.9L63.7,67.7L66.3,74.5L66.3,81.1L63.7,87.8L56.9,96.5"/><path class="s4" d="M-1.7,14.8L18.6,28.7L36.6,41.1L49.3,50.6L58.9,59.5L64,66.4L66.6,73.1L66.6,79.8L64,86.5L57.2,95.1"/><path class="s5" d="M-1.3,13.3L19,27.3L37,39.6L49.6,49.1L59.2,58.1L64.4,64.9L67,71.6L67,78.3L64.4,85L57.6,93.6"/><path class="s0" d="M-2.6,46L17.7,60L35.7,72.3L48.3,81.8L57.9,90.8L63.1,97.7L65.7,104.4L65.7,111L63.1,117.7L56.3,126.4"/><path class="s1" d="M-2.5,45.4L17.8,59.4L35.8,71.8L48.4,81.3L58.1,90.2L63.2,97.1L65.8,103.8L65.8,110.4L63.2,117.2L56.4,125.8"/><path class="s2" d="M-2.3,44.4L18,58.4L36,70.7L48.7,80.2L58.3,89.1L63.4,96L66,102.7L66,109.4L63.4,116.1L56.6,124.7"/><path class="s3" d="M-2,43.1L18.3,57.1L36.3,69.4L49,78.9L58.6,87.9L63.7,94.7L66.3,101.5L66.3,108.1L63.7,114.8L56.9,123.5"/><path class="s4" d="M-1.7,41.8L18.6,55.7L36.6,68.1L49.3,77.6L58.9,86.5L64,93.4L66.6,100.1L66.6,106.8L64,113.5L57.2,122.1"/><path class="s5" d="M-1.3,40.3L19,54.3L37,66.6L49.6,76.1L59.2,85.1L64.4,91.9L67,98.6L67,105.3L64.4,112L57.6,120.6"/><path class="s0" d="M-2.6,100L17.7,114L35.7,126.3L48.3,135.8L57.9,144.8L63.1,151.7L65.7,158.4L65.7,165L63.1,171.7L56.3,180.4"/><path class="s1" d="M-2.5,99.4L17.8,113.4L35.8,125.8L48.4,135.3L58.1,144.2L63.2,151.1L65.8,157.8L65.8,164.4L63.2,171.2L56.4,179.8"/><path class="s2" d="M-2.3,98.4L18,112.4L36,124.7L48.7,134.2L58.3,143.1L63.4,150L66,156.7L66,163.4L63.4,170.1L56.6,178.7"/><path class="s3" d="M-2,97.1L18.3,111.1L36.3,123.4L49,132.9L58.6,141.9L63.7,148.7L66.3,155.5L66.3,162.1L63.7,168.8L56.9,177.5"/><path class="s4" d="M-1.7,95.8L18.6,109.7L36.6,122.1L49.3,131.6L58.9,140.5L64,147.4L66.6,154.1L66.6,160.8L64,167.5L57.2,176.1"/><path class="s5" d="M-1.3,94.3L19,108.3L37,120.6L49.6,130.1L59.2,139.1L64.4,145.9L67,152.6L67,159.3L64.4,166L57.6,174.6"/><path class="s0" d="M-2.6,127L17.7,141L35.7,153.3L48.3,162.8L57.9,171.8L63.1,178.7L65.7,185.4L65.7,192L63.1,198.7L56.3,207.4"/><path class="s1" d="M-2.5,126.4L17.8,140.4L35.8,152.8L48.4,162.3L58.1,171.2L63.2,178.1L65.8,184.8L65.8,191.4L63.2,198.2L56.4,206.8"/><path class="s2" d="M-2.3,125.4L18,139.4L36,151.7L48.7,161.2L58.3,170.1L63.4,177L66,183.7L66,190.4L63.4,197.1L56.6,205.7"/><path class="s3" d="M-2,124.1L18.3,138.1L36.3,150.4L49,159.9L58.6,168.9L63.7,175.7L66.3,182.5L66.3,189.1L63.7,195.8L56.9,204.5"/><path class="s4" d="M-1.7,122.8L18.6,136.7L36.6,149.1L49.3,158.6L58.9,167.5L64,174.4L66.6,181.1L66.6,187.8L64,194.5L57.2,203.1"/><path class="s5" d="M-1.3,121.3L19,135.3L37,147.6L49.6,157.1L59.2,166.1L64.4,172.9L67,179.6L67,186.3L64.4,193L57.6,201.6"/><path class="s0" d="M-2.6,154L17.7,168L35.7,180.3L48.3,189.8L57.9,198.8L63.1,205.7L65.7,212.4L65.7,219L63.1,225.7L56.3,234.4"/><path class="s1" d="M-2.5,153.4L17.8,167.4L35.8,179.8L48.4,189.3L58.1,198.2L63.2,205.1L65.8,211.8L65.8,218.4L63.2,225.2L56.4,233.8"/><path class="s2" d="M-2.3,152.4L18,166.4L36,178.7L48.7,188.2L58.3,197.1L63.4,204L66,210.7L66,217.4L63.4,224.1L56.6,232.7"/><path class="s3" d="M-2,151.1L18.3,165.1L36.3,177.4L49,186.9L58.6,195.9L63.7,202.7L66.3,209.5L66.3,216.1L63.7,222.8L56.9,231.5"/><path class="s4" d="M-1.7,149.8L18.6,163.7L36.6,176.1L49.3,185.6L58.9,194.5L64,201.4L66.6,208.1L66.6,214.8L64,221.5L57.2,230.1"/><path class="s5" d="M-1.3,148.3L19,162.3L37,174.6L49.6,184.1L59.2,193.1L64.4,199.9L67,206.6L67,213.3L64.4,220L57.6,228.6"/><path class="s0" d="M-2.6,181L17.7,195L35.7,207.3L48.3,216.8L57.9,225.8L63.1,232.7L65.7,239.4L65.7,246L63.1,252.7L56.3,261.4"/><path class="s1" d="M-2.5,180.4L17.8,194.4L35.8,206.8L48.4,216.3L58.1,225.2L63.2,232.1L65.8,238.8L65.8,245.4L63.2,252.2L56.4,260.8"/><path class="s2" d="M-2.3,179.4L18,193.4L36,205.7L48.7,215.2L58.3,224.1L63.4,231L66,237.7L66,244.4L63.4,251.1L56.6,259.7"/><path class="s3" d="M-2,178.1L18.3,192.1L36.3,204.4L49,213.9L58.6,222.9L63.7,229.7L66.3,236.5L66.3,243.1L63.7,249.8L56.9,258.5"/><path class="s4" d="M-1.7,176.8L18.6,190.7L36.6,203.1L49.3,212.6L58.9,221.5L64,228.4L66.6,235.1L66.6,241.8L64,248.5L57.2,257.1"/><path class="s5" d="M-1.3,175.3L19,189.3L37,201.6L49.6,211.1L59.2,220.1L64.4,226.9L67,233.6L67,240.3L64.4,247L57.6,255.6"/><g filter="url(#fBlur)"><path class="sg" d="M-19.4,-111.8L-13.7,-107.3L-7.9,-102.9L-2,-98.6L3.9,-94.3L9.8,-90.2L15.7,-86.2L21.5,-82.3L27.1,-78.6"/><path class="sh" d="M-13.7,-107.3L-7.9,-102.9L-2,-98.6L3.9,-94.3L9.8,-90.2L15.7,-86.2L21.5,-82.3"/><path class="sw" d="M-7.9,-102.9L-2,-98.6L3.9,-94.3L9.8,-90.2L15.7,-86.2"/><path class="sg" d="M-19.4,-57.8L-13.7,-53.3L-7.9,-48.9L-2,-44.6L3.9,-40.3L9.8,-36.2L15.7,-32.2L21.5,-28.3L27.1,-24.6"/><path class="sh" d="M-13.7,-53.3L-7.9,-48.9L-2,-44.6L3.9,-40.3L9.8,-36.2L15.7,-32.2L21.5,-28.3"/><path class="sw" d="M-7.9,-48.9L-2,-44.6L3.9,-40.3L9.8,-36.2L15.7,-32.2"/><path class="sg" d="M-19.4,-30.8L-13.7,-26.3L-7.9,-21.9L-2,-17.6L3.9,-13.3L9.8,-9.2L15.7,-5.2L21.5,-1.3L27.1,2.4"/><path class="sh" d="M-13.7,-26.3L-7.9,-21.9L-2,-17.6L3.9,-13.3L9.8,-9.2L15.7,-5.2L21.5,-1.3"/><path class="sw" d="M-7.9,-21.9L-2,-17.6L3.9,-13.3L9.8,-9.2L15.7,-5.2"/><path class="sg" d="M-19.4,-3.8L-13.7,0.7L-7.9,5.1L-2,9.4L3.9,13.7L9.8,17.8L15.7,21.8L21.5,25.7L27.1,29.4"/><path class="sh" d="M-13.7,0.7L-7.9,5.1L-2,9.4L3.9,13.7L9.8,17.8L15.7,21.8L21.5,25.7"/><path class="sw" d="M-7.9,5.1L-2,9.4L3.9,13.7L9.8,17.8L15.7,21.8"/><path class="sg" d="M-19.4,23.2L-13.7,27.7L-7.9,32.1L-2,36.4L3.9,40.7L9.8,44.8L15.7,48.8L21.5,52.7L27.1,56.4"/><path class="sh" d="M-13.7,27.7L-7.9,32.1L-2,36.4L3.9,40.7L9.8,44.8L15.7,48.8L21.5,52.7"/><path class="sw" d="M-7.9,32.1L-2,36.4L3.9,40.7L9.8,44.8L15.7,48.8"/><path class="sg" d="M-19.4,77.2L-13.7,81.7L-7.9,86.1L-2,90.4L3.9,94.7L9.8,98.8L15.7,102.8L21.5,106.7L27.1,110.4"/><path class="sh" d="M-13.7,81.7L-7.9,86.1L-2,90.4L3.9,94.7L9.8,98.8L15.7,102.8L21.5,106.7"/><path class="sw" d="M-7.9,86.1L-2,90.4L3.9,94.7L9.8,98.8L15.7,102.8"/><path class="sg" d="M-19.4,104.2L-13.7,108.7L-7.9,113.1L-2,117.4L3.9,121.7L9.8,125.8L15.7,129.8L21.5,133.7L27.1,137.4"/><path class="sh" d="M-13.7,108.7L-7.9,113.1L-2,117.4L3.9,121.7L9.8,125.8L15.7,129.8L21.5,133.7"/><path class="sw" d="M-7.9,113.1L-2,117.4L3.9,121.7L9.8,125.8L15.7,129.8"/><path class="sg" d="M-19.4,131.2L-13.7,135.7L-7.9,140.1L-2,144.4L3.9,148.7L9.8,152.8L15.7,156.8L21.5,160.7L27.1,164.4"/><path class="sh" d="M-13.7,135.7L-7.9,140.1L-2,144.4L3.9,148.7L9.8,152.8L15.7,156.8L21.5,160.7"/><path class="sw" d="M-7.9,140.1L-2,144.4L3.9,148.7L9.8,152.8L15.7,156.8"/><path class="sg" d="M-19.4,158.2L-13.7,162.7L-7.9,167.1L-2,171.4L3.9,175.7L9.8,179.8L15.7,183.8L21.5,187.7L27.1,191.4"/><path class="sh" d="M-13.7,162.7L-7.9,167.1L-2,171.4L3.9,175.7L9.8,179.8L15.7,183.8L21.5,187.7"/><path class="sw" d="M-7.9,167.1L-2,171.4L3.9,175.7L9.8,179.8L15.7,183.8"/></g><g clip-path="url(#cShade)"><path d="M-94,0 A94,24.4 0 0 0 94,0 L94,9 A94,24.4 0 0 1 -94,9 Z" fill="#1d3c5c" opacity="0.55"/><path d="M-94,8 A94,24.4 0 0 0 94,8 L94,15 A94,24.4 0 0 1 -94,15 Z" fill="#1d3c5c" opacity="0.22"/></g></g><path d="M-94.2,0 A94.2,24.4 0 0 0 94.2,0 L88,4.5 A88,23.5 0 0 1 -88,4.5 Z" fill="url(#gCham)"/><polygon points="-81.2,-68.6 -67,-73.6 -67,-44.6 -81.2,-47.4" fill="#3d7eb4"/><polygon points="-67,-73.6 -51.3,-72.5 -51.3,-41.8 -67,-44.6" fill="#4492cc"/><polygon points="-81.2,-68.6 -68,-74.7 -51.3,-73 -51.3,-71.6 -67,-72.5 -80.5,-67.2" fill="#4a9fde"/><polygon points="-36.6,-81.4 -30.8,-83.1 -30.8,-46 -36.6,-47.4" fill="#354e64"/><polygon points="-30.8,-83.1 -8.1,-83.9 -8.1,-44.6 -30.8,-46" fill="#4492cc"/><polygon points="-36.6,-81.4 -31.1,-84.2 -8.1,-85 -8.1,-83.3 -30.8,-82.2" fill="#4a9fde"/><polygon points="17.4,-78.3 38.3,-76.9 38.3,-44.6 17.4,-44.6" fill="url(#gBM3)"/><polygon points="38.3,-76.9 47.3,-80.8 47.3,-46 38.3,-44.6" fill="#4a9fde"/><polygon points="17.4,-78.3 21.6,-81.7 47.3,-80.8 38.3,-76.7" fill="#4a9fde"/><polygon points="57.8,-72.2 70.3,-65.5 70.3,-41.8 57.8,-43.2" fill="#354e64"/><polygon points="70.3,-65.5 84.9,-68.9 84.9,-50.2 70.3,-41.8" fill="#4a9fde"/><polygon points="57.8,-72.2 70.3,-75.5 84.9,-68.9 70.3,-65.2" fill="#4a9fde"/><ellipse cx="0" cy="-22" rx="93.8" ry="21" fill="url(#gBody)"/><ellipse cx="0" cy="-32.2" rx="92" ry="22.3" fill="#4594ce"/><ellipse cx="-0.5" cy="-31" rx="80" ry="18.5" fill="#428dc8"/><ellipse cx="-4.1" cy="-30.1" rx="55" ry="15" fill="#4695d0"/><path d="M-49.3,-39.2 Q-25,-44.1 6.4,-40.9" stroke="#2f5f8a" stroke-width="1.6" stroke-dasharray="3 2 5 3 2 6" fill="none" opacity="0.8"/><path d="M38.6,-36 L46.4,-35.4" stroke="#2b4a66" stroke-width="1.4" fill="none"/><path d="M-58.9,-35.4 L-52.8,-34.3" stroke="#2b4a66" stroke-width="1.2" fill="none"/><polygon points="-95.3,-58.4 -93.5,-63.9 -76.6,-63.7 -76.6,-50.3 -88.8,-47.9 -88.8,-19.5 -95.3,-25.1" fill="#4a9fde"/><polygon points="-93.5,-55.8 -88.9,-55.8 -88.9,-20.4 -93.5,-24.8" fill="#3f86bf"/><polygon points="73.1,-56.5 76.9,-59.9 92,-59.7 92,-20.9 73.1,-20.9" fill="#4a9fde"/><polygon points="78.7,-52.7 89.3,-52.7 89.3,-24.1 78.7,-25.1" fill="#418bc6"/><path d="M-94.9,-24.6 L-94.2,0 A94,24.4 0 0 0 94.2,0 L93.4,-24.6 A94,20 0 0 1 -94.9,-24.6 Z" fill="url(#gBody)"/><polygon points="-51.1,-33.1 -24.1,-37.1 4.6,-37.1 4.6,-3.5 -24.1,-3.8 -51.1,-7.2" fill="url(#gBody)"/><polygon points="-18.9,-21.4 4.6,-17.6 4.6,-9.2 -18.9,-9.6" fill="url(#gNotch)"/><path d="M-18.9,-21.4 Q-11.9,-31.3 4.6,-33.4 L4.6,-17.6 Q-7.6,-16.9 -18.9,-21.4 Z" fill="#4a9fde"/><polygon points="4.2,-44.6 38.3,-42.1 33.4,-36.3 4.2,-36.8" fill="#4a9fde"/><polygon points="4.2,-36.8 33.4,-36.3 33.4,-4.9 4.2,-2.8" fill="#479bd9"/><polygon points="33.4,-15.1 37.2,-14.3 37.2,-10.1 33.4,-10.5" fill="#35648f"/><path d="M4.6,-37.1 L4.6,-3.5" stroke="#3a7db5" stroke-width="0.8" fill="none"/><polygon points="-88.8,-48.8 -73.7,-42 -73.7,-18.6 -88.8,-21.9" fill="#354e64"/><polygon points="-88.8,-49 -76.2,-51.1 -66,-47.4 -51.4,-37.8 -51.4,-7.7 -73.7,-12.8 -73.7,-42" fill="#4798d5"/><polygon points="-88.8,-49 -76.2,-51.1 -66,-47.4 -51.4,-37.8 -73.7,-42" fill="#4a9fde"/><polygon points="48,-41.6 58.5,-39 58.5,-10.2 48,-15.8" fill="#354e64"/><polygon points="48,-41.6 63.4,-46.8 78.1,-45.2 78.1,-8.4 58.5,-10.2 58.5,-39" fill="#4899d7"/><polygon points="48,-41.6 63.4,-46.8 78.1,-45.2 58.5,-39" fill="#4a9fde"/></g>
<line x1="97" y1="294" x2="814" y2="415" stroke="#5ba6e0" stroke-width="1" opacity="0.55"/>
<line x1="814" y1="415" x2="1257" y2="222.5" stroke="#5ba6e0" stroke-width="1" opacity="0.55"/>
<line x1="814" y1="415" x2="814" y2="787" stroke="#5ba6e0" stroke-width="1" opacity="0.55"/>
<line x1="825" y1="23" x2="825" y2="804" stroke="#d8dde2" stroke-width="1" opacity="0.6"/>
</svg>
<div id="title"><div class="tl" style="left:9px;background:#fc5f57"></div><div class="tl" style="left:30.5px;background:#fda623"></div><div class="tl" style="left:52.5px;background:#28c840"></div><div class="t">9TwistedRooks-1.form - PreForm</div></div><div id="toolsh"></div><div id="tools"><div class="o"></div><div class="s" style="top:62px"></div><div class="s" style="top:124px"></div><div class="s" style="top:186.5px"></div><svg width="63" height="312" viewBox="0 0 63 312"><rect x="17.9" y="18.4" width="27.1" height="27" rx="2.4" fill="none" stroke="#d6d6da" stroke-width="1.3"/><path d="M18.2,44.6 V35.6 a2.4,2.4 0 0 1 2.4,-2.4 H28.3 a2.4,2.4 0 0 1 2.4,2.4 V44.6 Z" fill="#ececef"/><path d="M32.6,30.8 L40.6,23.6" stroke="#ececef" stroke-width="2" fill="none"/><polygon points="35.6,21.4 44.2,21.4 44.2,30" fill="#ececef"/><path d="M17.8,91.4 C18.4,84.8 23.5,81 31.6,81.3" stroke="#ececef" stroke-width="2.1" fill="none"/><polygon points="31,73.8 38.4,79.7 31.9,85.9" fill="#ececef"/><rect x="21.9" y="92.8" width="15.4" height="15.6" rx="3" fill="#ececef"/><path d="M36.9,88.7 L46.2,98 L36.9,107.3" stroke="#ececef" stroke-width="1.3" fill="none" stroke-linejoin="round"/><path d="M36.9,88.7 L27.6,98 L36.9,107.3" stroke="#c6c6cb" stroke-width="1.1" fill="none" stroke-linejoin="round"/><polygon points="32.9,140.4 40.2,148.2 28.5,159.6 20.7,151.8" fill="#ececef" stroke="#ececef" stroke-width="2.4" stroke-linejoin="round"/><g fill="none" stroke="#d6d6da" stroke-width="1.25"><path d="M19.3,171.1 V163.4 a2.5,2.8 0 0 1 5,0 V171.1"/><path d="M28.75,171.1 V165.6 a2.5,2.8 0 0 1 5,0 V171.1"/><path d="M37.85,171.1 V157.5 a2.5,2.8 0 0 1 5,0 V171.1"/></g><polygon points="19.2,157.8 21.9,157.8 20.5,155.6" fill="#ececef"/><polygon points="32.3,160.4 35,160.4 33.6,158.2" fill="#ececef"/><polygon points="40.4,152.9 43.1,152.9 41.7,150.7" fill="#ececef"/><path d="M24.1,217 V210.5" stroke="#ececef" stroke-width="2.4" fill="none"/><polygon points="17.5,211.9 24.1,204.9 30.7,211.9" fill="#ececef"/><rect x="33.55" y="206.3" width="10.4" height="10.5" rx="2.6" fill="none" stroke="#d6d6da" stroke-width="1.3"/><rect x="18.3" y="220.5" width="11.7" height="11.1" rx="2.8" fill="#ececef"/><path d="M32.9,226.1 H39.5" stroke="#ececef" stroke-width="2.4" fill="none"/><polygon points="38.3,220.2 45.6,226.1 38.3,232.2" fill="#ececef"/><g fill="none" stroke="#fdd9a0" stroke-width="1.15" stroke-linejoin="round"><polygon points="15.6,266 19.7,263.9 31,270.9 26,275.9 22.1,277.1"/><polygon points="20.7,279.8 26,275.6 29.8,273.8 27.5,284.5 25.2,285"/><polygon points="33.6,270.9 43,263.9 47.5,266 42.4,278.6"/></g><polygon points="33.4,270.6 43,263.4 48,265.8 46.4,268.6 43,266.9 35.6,272.2" fill="#fdd9a0"/><polygon points="31.7,272.4 43.2,278.6 44,279.9 38,285.2 35.4,284.8" fill="#fdd9a0"/><path d="M18.1,290.9 H24.4 M22.5,296 L32.3,286.5 M29.2,291.3 H33.9" stroke="#fdd9a0" stroke-width="1.1" fill="none"/><rect x="33.9" y="288.9" width="7.1" height="5.1" fill="#fbe6c6"/><rect x="41.2" y="289.8" width="3.6" height="3.3" fill="none" stroke="#fdd9a0" stroke-width="0.9"/></svg></div><svg id="ctlsvg" width="160" height="110" viewBox="0 0 160 110"><rect x="6.2" y="20.0" width="34.5" height="69" rx="6.5" fill="#323139"/><rect x="85.9" y="3.5" width="34.4" height="102.2" rx="6.5" fill="#323139"/><rect x="52.0" y="37.1" width="102.3" height="34.8" rx="6.5" fill="#323139"/><path d="M6.2,54.3 h34.5 M85.9,37.6 h34.4 M85.9,71.4 h34.4 M86.4,37.1 v34.8 M119.8,37.1 v34.8" stroke="#2a2930" stroke-width="1" fill="none"/><g stroke="#f2f2f4" stroke-width="1.9" fill="none"><path d="M17.6,37.3 h11.6 M23.4,31.5 v11.6"/><path d="M17.8,71.3 h11.2"/><path d="M97.4,24.8 l5.7,-9.2 l5.7,9.2" stroke-width="1.9"/><path d="M97.4,84.8 l5.7,9.2 l5.7,-9.2" stroke-width="1.9"/><path d="M73.2,49.2 l-9.4,5.6 l9.4,5.6" stroke-width="1.9"/><path d="M133.6,49.2 l9.4,5.6 l-9.4,5.6" stroke-width="1.9"/></g><path d="M98.3,48.6 q8,-8.5 16,0 q-8,8.5 -16,0 z" fill="none" stroke="#f2f2f4" stroke-width="1.4"/><circle cx="106.3" cy="48.6" r="2.6" fill="#f2f2f4"/><g stroke="#f2f2f4" stroke-width="1.1" fill="none"><path d="M94.5,60.5 V51.5 M94.5,60.5 L104.5,57.5 M94.5,60.5 L101.5,65.0"/></g><polygon points="92.0,53.0 94.5,47.5 97.0,53.0" fill="#f2f2f4"/><polygon points="102.5,55.2 108.5,56.5 103.5,60.0" fill="#f2f2f4"/><polygon points="101.8,62.3 103.8,66.8 98.5,65.6" fill="#f2f2f4"/></svg><div id="slider"><div class="in"></div></div><div id="handle"><i style="top:4px"></i><i style="top:7.2px"></i><i style="top:10.4px"></i></div><div id="bar"><span class="l" style="left:20.3px;transform:scaleX(1.054);">Volume</span><span class="v" style="left:84.9px;transform:scaleX(0.889);">101.14 mL</span><span class="l" style="left:204.0px;transform:scaleX(0.981);">Layers</span><span class="v" style="left:260.5px;transform:scaleX(0.995);">1023</span><span class="l" style="left:351.2px;transform:scaleX(1.023);">Print Time</span><div class="box" style="left:434.0px;width:81px"><div style="position:absolute;left:0;top:0;width:49px;height:33px;background:#ececee;border-right:1px solid #d4d4d8"></div></div><span class="v" style="left:443.0px;transform:scaleX(0.999);color:#a9acb2;">~ 7 h</span><svg style="position:absolute;left:487.0px;top:14px" width="24" height="24" viewBox="0 0 24 24"><path d="M14.2,4.2 A8.6,8.6 0 1 0 20.6,12.2" fill="none" stroke="#2b2b30" stroke-width="1.7"/><polygon points="13.2,0.6 18.3,4.4 13.2,8.2" fill="#2b2b30"/><path d="M8.2,12.6 l3,3 l5.4,-6" fill="none" stroke="#2b2b30" stroke-width="1.8"/></svg><span class="l" style="left:573.7px;transform:scaleX(1.060);">Material</span><div class="box" style="left:641.3px;width:117.5px"></div><span class="v" style="left:650.0px;transform:scaleX(1.064);color:#2e2e33;">Black 0.05 mm</span><span class="l" style="left:817.0px;transform:scaleX(1.021);">Printer</span><span class="v" style="left:875.1px;transform:scaleX(0.967);">Form 1+</span></div>
</div></body></html>
